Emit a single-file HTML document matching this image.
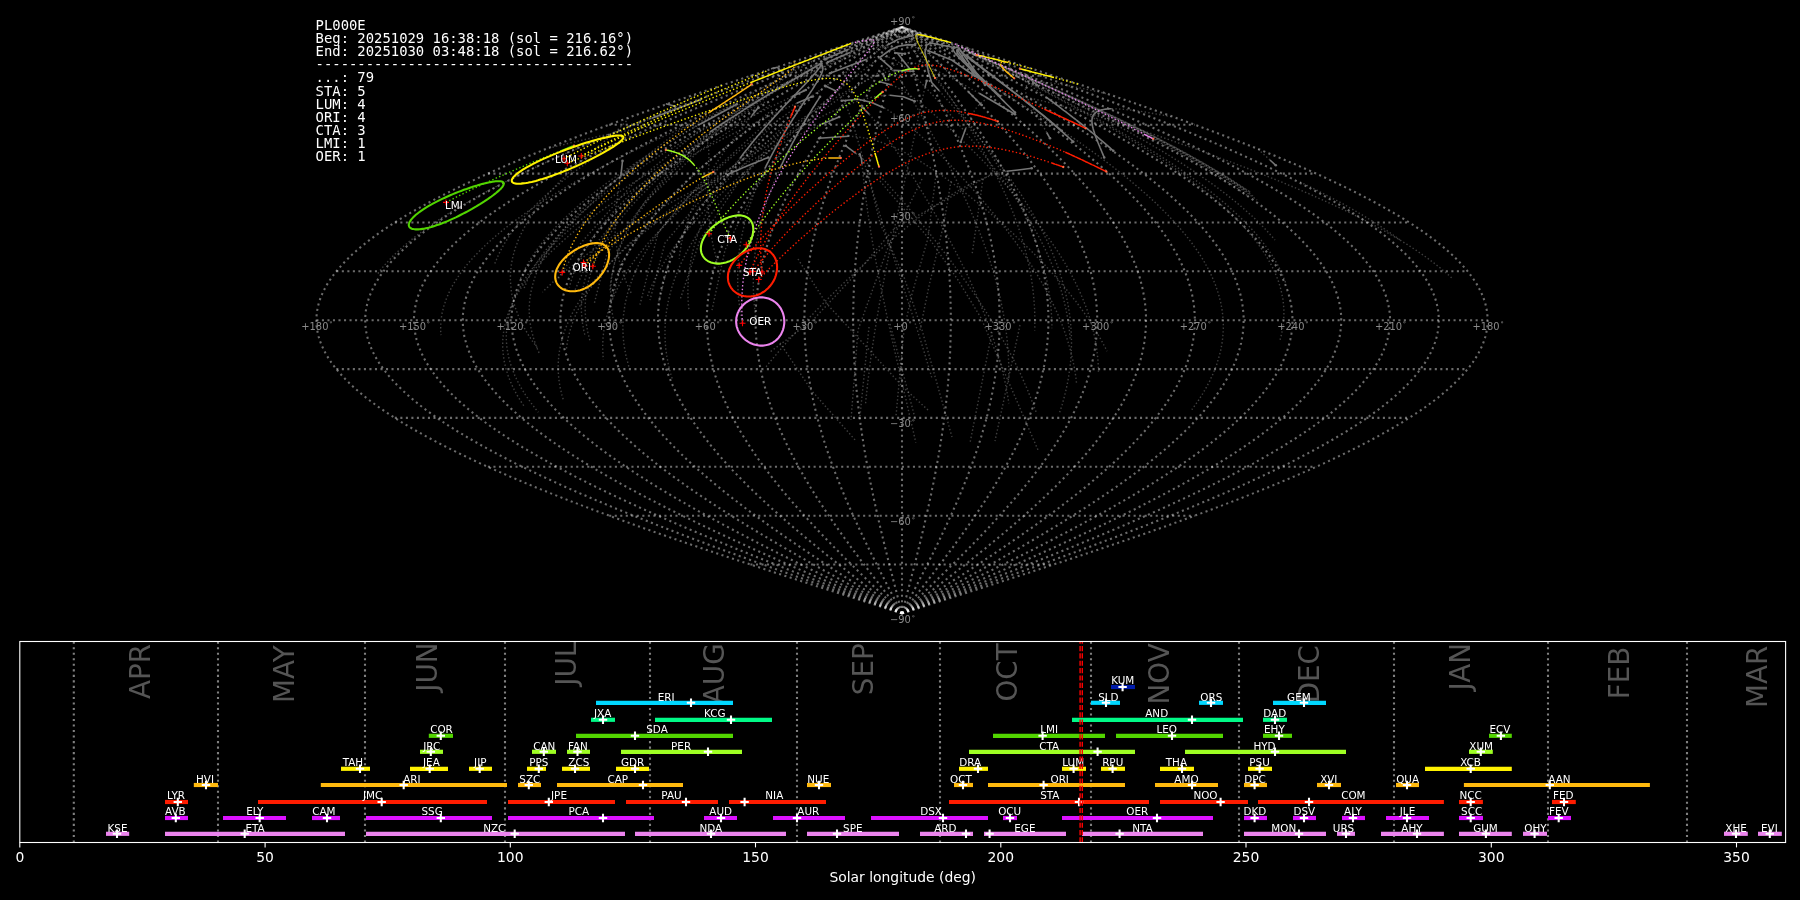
<!DOCTYPE html>
<html><head><meta charset="utf-8"><title>PL000E radiants</title>
<style>html,body{margin:0;padding:0;background:#000;width:1800px;height:900px;overflow:hidden}svg{position:absolute;left:0;top:0;display:block;will-change:transform}text{font-family:"DejaVu Sans","Liberation Sans",sans-serif}.mono{font-family:"DejaVu Sans Mono","Liberation Mono",monospace;font-size:13.89px;fill:#fff;white-space:pre}.g{fill:none;stroke:#fff;stroke-opacity:0.42;stroke-width:2.08;stroke-dasharray:2.08 3.44}.gl{font-size:9.9px;fill:#8a8a8a;text-anchor:middle}.sl{font-size:10.4px;fill:#fff;text-anchor:middle}.bl{font-size:10.4px;fill:#fff;text-anchor:middle}.mo{font-size:27.78px;fill:#555;text-anchor:end}.tk{font-size:13.89px;fill:#fff;text-anchor:middle}</style></head><body>
<svg width="1800" height="900" viewBox="0 0 1800 900">
<rect width="1800" height="900" fill="#000"/>
<g class="g">
<path d="M902 613.4 L912.2 610.2 L922.4 606.9 L932.6 603.6 L942.9 600.4 L953 597.1 L963.2 593.9 L973.4 590.6 L983.5 587.4 L993.6 584.1 L1003.7 580.8 L1013.7 577.6 L1023.8 574.3 L1033.7 571.1 L1043.7 567.8 L1053.6 564.5 L1063.4 561.3 L1073.2 558 L1083 554.8 L1092.7 551.5 L1102.3 548.3 L1111.9 545 L1121.4 541.7 L1130.8 538.5 L1140.2 535.2 L1149.5 532 L1158.7 528.7 L1167.9 525.5 L1176.9 522.2 L1185.9 518.9 L1194.8 515.7 L1203.6 512.4 L1212.3 509.2 L1221 505.9 L1229.5 502.6 L1237.9 499.4 L1246.2 496.1 L1254.4 492.9 L1262.5 489.6 L1270.5 486.4 L1278.4 483.1 L1286.2 479.8 L1293.9 476.6 L1301.4 473.3 L1308.8 470.1 L1316.1 466.8 L1323.3 463.6 L1330.3 460.3 L1337.2 457 L1344 453.8 L1350.6 450.5 L1357.1 447.3 L1363.5 444 L1369.7 440.7 L1375.8 437.5 L1381.7 434.2 L1387.5 431 L1393.2 427.7 L1398.6 424.5 L1404 421.2 L1409.2 417.9 L1414.2 414.7 L1419.1 411.4 L1423.8 408.2 L1428.4 404.9 L1432.8 401.6 L1437 398.4 L1441.1 395.1 L1445 391.9 L1448.7 388.6 L1452.3 385.4 L1455.7 382.1 L1459 378.8 L1462 375.6 L1464.9 372.3 L1467.7 369.1 L1470.2 365.8 L1472.6 362.6 L1474.8 359.3 L1476.9 356 L1478.7 352.8 L1480.4 349.5 L1481.9 346.3 L1483.3 343 L1484.4 339.7 L1485.4 336.5 L1486.2 333.2 L1486.8 330 L1487.3 326.7 L1487.5 323.5 L1487.6 320.2 L1487.5 316.9 L1487.3 313.7 L1486.8 310.4 L1486.2 307.2 L1485.4 303.9 L1484.4 300.7 L1483.3 297.4 L1481.9 294.1 L1480.4 290.9 L1478.7 287.6 L1476.9 284.4 L1474.8 281.1 L1472.6 277.8 L1470.2 274.6 L1467.7 271.3 L1464.9 268.1 L1462 264.8 L1459 261.6 L1455.7 258.3 L1452.3 255 L1448.7 251.8 L1445 248.5 L1441.1 245.3 L1437 242 L1432.8 238.8 L1428.4 235.5 L1423.8 232.2 L1419.1 229 L1414.2 225.7 L1409.2 222.5 L1404 219.2 L1398.6 215.9 L1393.2 212.7 L1387.5 209.4 L1381.7 206.2 L1375.8 202.9 L1369.7 199.7 L1363.5 196.4 L1357.1 193.1 L1350.6 189.9 L1344 186.6 L1337.2 183.4 L1330.3 180.1 L1323.3 176.8 L1316.1 173.6 L1308.8 170.3 L1301.4 167.1 L1293.9 163.8 L1286.2 160.6 L1278.4 157.3 L1270.5 154 L1262.5 150.8 L1254.4 147.5 L1246.2 144.3 L1237.9 141 L1229.5 137.8 L1221 134.5 L1212.3 131.2 L1203.6 128 L1194.8 124.7 L1185.9 121.5 L1176.9 118.2 L1167.9 114.9 L1158.7 111.7 L1149.5 108.4 L1140.2 105.2 L1130.8 101.9 L1121.4 98.7 L1111.9 95.4 L1102.3 92.1 L1092.7 88.9 L1083 85.6 L1073.2 82.4 L1063.4 79.1 L1053.6 75.8 L1043.7 72.6 L1033.7 69.3 L1023.8 66.1 L1013.7 62.8 L1003.7 59.6 L993.6 56.3 L983.5 53 L973.4 49.8 L963.2 46.5 L953 43.3 L942.9 40 L932.6 36.8 L922.4 33.5 L912.2 30.2 L902 27"/>
<path d="M902 613.4 L911.4 610.2 L920.7 606.9 L930.1 603.6 L939.4 600.4 L948.8 597.1 L958.1 593.9 L967.4 590.6 L976.7 587.4 L986 584.1 L995.2 580.8 L1004.4 577.6 L1013.6 574.3 L1022.8 571.1 L1031.9 567.8 L1040.9 564.5 L1050 561.3 L1059 558 L1067.9 554.8 L1076.8 551.5 L1085.6 548.3 L1094.4 545 L1103.1 541.7 L1111.8 538.5 L1120.3 535.2 L1128.9 532 L1137.3 528.7 L1145.7 525.5 L1154 522.2 L1162.3 518.9 L1170.4 515.7 L1178.5 512.4 L1186.5 509.2 L1194.4 505.9 L1202.2 502.6 L1209.9 499.4 L1217.5 496.1 L1225.1 492.9 L1232.5 489.6 L1239.8 486.4 L1247.1 483.1 L1254.2 479.8 L1261.2 476.6 L1268.1 473.3 L1274.9 470.1 L1281.6 466.8 L1288.2 463.6 L1294.6 460.3 L1300.9 457 L1307.1 453.8 L1313.2 450.5 L1319.2 447.3 L1325 444 L1330.7 440.7 L1336.3 437.5 L1341.7 434.2 L1347.1 431 L1352.2 427.7 L1357.3 424.5 L1362.2 421.2 L1366.9 417.9 L1371.5 414.7 L1376 411.4 L1380.3 408.2 L1384.5 404.9 L1388.5 401.6 L1392.4 398.4 L1396.2 395.1 L1399.7 391.9 L1403.2 388.6 L1406.5 385.4 L1409.6 382.1 L1412.6 378.8 L1415.4 375.6 L1418 372.3 L1420.5 369.1 L1422.9 365.8 L1425.1 362.6 L1427.1 359.3 L1429 356 L1430.7 352.8 L1432.2 349.5 L1433.6 346.3 L1434.8 343 L1435.9 339.7 L1436.8 336.5 L1437.5 333.2 L1438.1 330 L1438.5 326.7 L1438.7 323.5 L1438.8 320.2 L1438.7 316.9 L1438.5 313.7 L1438.1 310.4 L1437.5 307.2 L1436.8 303.9 L1435.9 300.7 L1434.8 297.4 L1433.6 294.1 L1432.2 290.9 L1430.7 287.6 L1429 284.4 L1427.1 281.1 L1425.1 277.8 L1422.9 274.6 L1420.5 271.3 L1418 268.1 L1415.4 264.8 L1412.6 261.6 L1409.6 258.3 L1406.5 255 L1403.2 251.8 L1399.7 248.5 L1396.2 245.3 L1392.4 242 L1388.5 238.8 L1384.5 235.5 L1380.3 232.2 L1376 229 L1371.5 225.7 L1366.9 222.5 L1362.2 219.2 L1357.3 215.9 L1352.2 212.7 L1347.1 209.4 L1341.7 206.2 L1336.3 202.9 L1330.7 199.7 L1325 196.4 L1319.2 193.1 L1313.2 189.9 L1307.1 186.6 L1300.9 183.4 L1294.6 180.1 L1288.2 176.8 L1281.6 173.6 L1274.9 170.3 L1268.1 167.1 L1261.2 163.8 L1254.2 160.6 L1247.1 157.3 L1239.8 154 L1232.5 150.8 L1225.1 147.5 L1217.5 144.3 L1209.9 141 L1202.2 137.8 L1194.4 134.5 L1186.5 131.2 L1178.5 128 L1170.4 124.7 L1162.3 121.5 L1154 118.2 L1145.7 114.9 L1137.3 111.7 L1128.9 108.4 L1120.3 105.2 L1111.8 101.9 L1103.1 98.7 L1094.4 95.4 L1085.6 92.1 L1076.8 88.9 L1067.9 85.6 L1059 82.4 L1050 79.1 L1040.9 75.8 L1031.9 72.6 L1022.8 69.3 L1013.6 66.1 L1004.4 62.8 L995.2 59.6 L986 56.3 L976.7 53 L967.4 49.8 L958.1 46.5 L948.8 43.3 L939.4 40 L930.1 36.8 L920.7 33.5 L911.4 30.2 L902 27"/>
<path d="M902 613.4 L910.5 610.2 L919 606.9 L927.5 603.6 L936 600.4 L944.5 597.1 L953 593.9 L961.5 590.6 L969.9 587.4 L978.3 584.1 L986.7 580.8 L995.1 577.6 L1003.5 574.3 L1011.8 571.1 L1020.1 567.8 L1028.3 564.5 L1036.5 561.3 L1044.7 558 L1052.8 554.8 L1060.9 551.5 L1068.9 548.3 L1076.9 545 L1084.8 541.7 L1092.7 538.5 L1100.5 535.2 L1108.2 532 L1115.9 528.7 L1123.6 525.5 L1131.1 522.2 L1138.6 518.9 L1146 515.7 L1153.4 512.4 L1160.6 509.2 L1167.8 505.9 L1174.9 502.6 L1181.9 499.4 L1188.9 496.1 L1195.7 492.9 L1202.5 489.6 L1209.1 486.4 L1215.7 483.1 L1222.2 479.8 L1228.6 476.6 L1234.8 473.3 L1241 470.1 L1247.1 466.8 L1253.1 463.6 L1258.9 460.3 L1264.7 457 L1270.3 453.8 L1275.8 450.5 L1281.3 447.3 L1286.6 444 L1291.8 440.7 L1296.8 437.5 L1301.8 434.2 L1306.6 431 L1311.3 427.7 L1315.9 424.5 L1320.3 421.2 L1324.6 417.9 L1328.8 414.7 L1332.9 411.4 L1336.8 408.2 L1340.6 404.9 L1344.3 401.6 L1347.8 398.4 L1351.2 395.1 L1354.5 391.9 L1357.6 388.6 L1360.6 385.4 L1363.4 382.1 L1366.1 378.8 L1368.7 375.6 L1371.1 372.3 L1373.4 369.1 L1375.5 365.8 L1377.5 362.6 L1379.4 359.3 L1381.1 356 L1382.6 352.8 L1384 349.5 L1385.3 346.3 L1386.4 343 L1387.4 339.7 L1388.2 336.5 L1388.8 333.2 L1389.4 330 L1389.7 326.7 L1390 323.5 L1390 320.2 L1390 316.9 L1389.7 313.7 L1389.4 310.4 L1388.8 307.2 L1388.2 303.9 L1387.4 300.7 L1386.4 297.4 L1385.3 294.1 L1384 290.9 L1382.6 287.6 L1381.1 284.4 L1379.4 281.1 L1377.5 277.8 L1375.5 274.6 L1373.4 271.3 L1371.1 268.1 L1368.7 264.8 L1366.1 261.6 L1363.4 258.3 L1360.6 255 L1357.6 251.8 L1354.5 248.5 L1351.2 245.3 L1347.8 242 L1344.3 238.8 L1340.6 235.5 L1336.8 232.2 L1332.9 229 L1328.8 225.7 L1324.6 222.5 L1320.3 219.2 L1315.9 215.9 L1311.3 212.7 L1306.6 209.4 L1301.8 206.2 L1296.8 202.9 L1291.8 199.7 L1286.6 196.4 L1281.3 193.1 L1275.8 189.9 L1270.3 186.6 L1264.7 183.4 L1258.9 180.1 L1253.1 176.8 L1247.1 173.6 L1241 170.3 L1234.8 167.1 L1228.6 163.8 L1222.2 160.6 L1215.7 157.3 L1209.1 154 L1202.5 150.8 L1195.7 147.5 L1188.9 144.3 L1181.9 141 L1174.9 137.8 L1167.8 134.5 L1160.6 131.2 L1153.4 128 L1146 124.7 L1138.6 121.5 L1131.1 118.2 L1123.6 114.9 L1115.9 111.7 L1108.2 108.4 L1100.5 105.2 L1092.7 101.9 L1084.8 98.7 L1076.9 95.4 L1068.9 92.1 L1060.9 88.9 L1052.8 85.6 L1044.7 82.4 L1036.5 79.1 L1028.3 75.8 L1020.1 72.6 L1011.8 69.3 L1003.5 66.1 L995.1 62.8 L986.7 59.6 L978.3 56.3 L969.9 53 L961.5 49.8 L953 46.5 L944.5 43.3 L936 40 L927.5 36.8 L919 33.5 L910.5 30.2 L902 27"/>
<path d="M902 613.4 L909.7 610.2 L917.3 606.9 L925 603.6 L932.6 600.4 L940.3 597.1 L947.9 593.9 L955.5 590.6 L963.1 587.4 L970.7 584.1 L978.3 580.8 L985.8 577.6 L993.3 574.3 L1000.8 571.1 L1008.3 567.8 L1015.7 564.5 L1023.1 561.3 L1030.4 558 L1037.7 554.8 L1045 551.5 L1052.2 548.3 L1059.4 545 L1066.5 541.7 L1073.6 538.5 L1080.6 535.2 L1087.6 532 L1094.5 528.7 L1101.4 525.5 L1108.2 522.2 L1114.9 518.9 L1121.6 515.7 L1128.2 512.4 L1134.8 509.2 L1141.2 505.9 L1147.6 502.6 L1153.9 499.4 L1160.2 496.1 L1166.3 492.9 L1172.4 489.6 L1178.4 486.4 L1184.3 483.1 L1190.2 479.8 L1195.9 476.6 L1201.5 473.3 L1207.1 470.1 L1212.6 466.8 L1218 463.6 L1223.2 460.3 L1228.4 457 L1233.5 453.8 L1238.5 450.5 L1243.3 447.3 L1248.1 444 L1252.8 440.7 L1257.3 437.5 L1261.8 434.2 L1266.1 431 L1270.4 427.7 L1274.5 424.5 L1278.5 421.2 L1282.4 417.9 L1286.2 414.7 L1289.8 411.4 L1293.4 408.2 L1296.8 404.9 L1300.1 401.6 L1303.2 398.4 L1306.3 395.1 L1309.2 391.9 L1312 388.6 L1314.7 385.4 L1317.3 382.1 L1319.7 378.8 L1322 375.6 L1324.2 372.3 L1326.3 369.1 L1328.2 365.8 L1330 362.6 L1331.6 359.3 L1333.2 356 L1334.5 352.8 L1335.8 349.5 L1336.9 346.3 L1337.9 343 L1338.8 339.7 L1339.6 336.5 L1340.2 333.2 L1340.6 330 L1341 326.7 L1341.2 323.5 L1341.2 320.2 L1341.2 316.9 L1341 313.7 L1340.6 310.4 L1340.2 307.2 L1339.6 303.9 L1338.8 300.7 L1337.9 297.4 L1336.9 294.1 L1335.8 290.9 L1334.5 287.6 L1333.2 284.4 L1331.6 281.1 L1330 277.8 L1328.2 274.6 L1326.3 271.3 L1324.2 268.1 L1322 264.8 L1319.7 261.6 L1317.3 258.3 L1314.7 255 L1312 251.8 L1309.2 248.5 L1306.3 245.3 L1303.2 242 L1300.1 238.8 L1296.8 235.5 L1293.4 232.2 L1289.8 229 L1286.2 225.7 L1282.4 222.5 L1278.5 219.2 L1274.5 215.9 L1270.4 212.7 L1266.1 209.4 L1261.8 206.2 L1257.3 202.9 L1252.8 199.7 L1248.1 196.4 L1243.3 193.1 L1238.5 189.9 L1233.5 186.6 L1228.4 183.4 L1223.2 180.1 L1218 176.8 L1212.6 173.6 L1207.1 170.3 L1201.5 167.1 L1195.9 163.8 L1190.2 160.6 L1184.3 157.3 L1178.4 154 L1172.4 150.8 L1166.3 147.5 L1160.2 144.3 L1153.9 141 L1147.6 137.8 L1141.2 134.5 L1134.8 131.2 L1128.2 128 L1121.6 124.7 L1114.9 121.5 L1108.2 118.2 L1101.4 114.9 L1094.5 111.7 L1087.6 108.4 L1080.6 105.2 L1073.6 101.9 L1066.5 98.7 L1059.4 95.4 L1052.2 92.1 L1045 88.9 L1037.7 85.6 L1030.4 82.4 L1023.1 79.1 L1015.7 75.8 L1008.3 72.6 L1000.8 69.3 L993.3 66.1 L985.8 62.8 L978.3 59.6 L970.7 56.3 L963.1 53 L955.5 49.8 L947.9 46.5 L940.3 43.3 L932.6 40 L925 36.8 L917.3 33.5 L909.7 30.2 L902 27"/>
<path d="M902 613.4 L908.8 610.2 L915.6 606.9 L922.4 603.6 L929.2 600.4 L936 597.1 L942.8 593.9 L949.6 590.6 L956.3 587.4 L963.1 584.1 L969.8 580.8 L976.5 577.6 L983.2 574.3 L989.8 571.1 L996.5 567.8 L1003 564.5 L1009.6 561.3 L1016.1 558 L1022.6 554.8 L1029.1 551.5 L1035.5 548.3 L1041.9 545 L1048.3 541.7 L1054.5 538.5 L1060.8 535.2 L1067 532 L1073.1 528.7 L1079.2 525.5 L1085.3 522.2 L1091.3 518.9 L1097.2 515.7 L1103.1 512.4 L1108.9 509.2 L1114.6 505.9 L1120.3 502.6 L1125.9 499.4 L1131.5 496.1 L1137 492.9 L1142.4 489.6 L1147.7 486.4 L1153 483.1 L1158.1 479.8 L1163.2 476.6 L1168.3 473.3 L1173.2 470.1 L1178.1 466.8 L1182.8 463.6 L1187.5 460.3 L1192.1 457 L1196.7 453.8 L1201.1 450.5 L1205.4 447.3 L1209.7 444 L1213.8 440.7 L1217.9 437.5 L1221.8 434.2 L1225.7 431 L1229.4 427.7 L1233.1 424.5 L1236.7 421.2 L1240.1 417.9 L1243.5 414.7 L1246.7 411.4 L1249.9 408.2 L1252.9 404.9 L1255.8 401.6 L1258.7 398.4 L1261.4 395.1 L1264 391.9 L1266.5 388.6 L1268.9 385.4 L1271.1 382.1 L1273.3 378.8 L1275.4 375.6 L1277.3 372.3 L1279.1 369.1 L1280.8 365.8 L1282.4 362.6 L1283.9 359.3 L1285.2 356 L1286.5 352.8 L1287.6 349.5 L1288.6 346.3 L1289.5 343 L1290.3 339.7 L1290.9 336.5 L1291.5 333.2 L1291.9 330 L1292.2 326.7 L1292.4 323.5 L1292.4 320.2 L1292.4 316.9 L1292.2 313.7 L1291.9 310.4 L1291.5 307.2 L1290.9 303.9 L1290.3 300.7 L1289.5 297.4 L1288.6 294.1 L1287.6 290.9 L1286.5 287.6 L1285.2 284.4 L1283.9 281.1 L1282.4 277.8 L1280.8 274.6 L1279.1 271.3 L1277.3 268.1 L1275.4 264.8 L1273.3 261.6 L1271.1 258.3 L1268.9 255 L1266.5 251.8 L1264 248.5 L1261.4 245.3 L1258.7 242 L1255.8 238.8 L1252.9 235.5 L1249.9 232.2 L1246.7 229 L1243.5 225.7 L1240.1 222.5 L1236.7 219.2 L1233.1 215.9 L1229.4 212.7 L1225.7 209.4 L1221.8 206.2 L1217.9 202.9 L1213.8 199.7 L1209.7 196.4 L1205.4 193.1 L1201.1 189.9 L1196.7 186.6 L1192.1 183.4 L1187.5 180.1 L1182.8 176.8 L1178.1 173.6 L1173.2 170.3 L1168.3 167.1 L1163.2 163.8 L1158.1 160.6 L1153 157.3 L1147.7 154 L1142.4 150.8 L1137 147.5 L1131.5 144.3 L1125.9 141 L1120.3 137.8 L1114.6 134.5 L1108.9 131.2 L1103.1 128 L1097.2 124.7 L1091.3 121.5 L1085.3 118.2 L1079.2 114.9 L1073.1 111.7 L1067 108.4 L1060.8 105.2 L1054.5 101.9 L1048.3 98.7 L1041.9 95.4 L1035.5 92.1 L1029.1 88.9 L1022.6 85.6 L1016.1 82.4 L1009.6 79.1 L1003 75.8 L996.5 72.6 L989.8 69.3 L983.2 66.1 L976.5 62.8 L969.8 59.6 L963.1 56.3 L956.3 53 L949.6 49.8 L942.8 46.5 L936 43.3 L929.2 40 L922.4 36.8 L915.6 33.5 L908.8 30.2 L902 27"/>
<path d="M902 613.4 L908 610.2 L913.9 606.9 L919.9 603.6 L925.8 600.4 L931.8 597.1 L937.7 593.9 L943.6 590.6 L949.5 587.4 L955.4 584.1 L961.3 580.8 L967.2 577.6 L973 574.3 L978.8 571.1 L984.6 567.8 L990.4 564.5 L996.2 561.3 L1001.9 558 L1007.6 554.8 L1013.2 551.5 L1018.8 548.3 L1024.4 545 L1030 541.7 L1035.5 538.5 L1040.9 535.2 L1046.4 532 L1051.8 528.7 L1057.1 525.5 L1062.4 522.2 L1067.6 518.9 L1072.8 515.7 L1077.9 512.4 L1083 509.2 L1088.1 505.9 L1093 502.6 L1097.9 499.4 L1102.8 496.1 L1107.6 492.9 L1112.3 489.6 L1117 486.4 L1121.6 483.1 L1126.1 479.8 L1130.6 476.6 L1135 473.3 L1139.3 470.1 L1143.6 466.8 L1147.7 463.6 L1151.8 460.3 L1155.9 457 L1159.8 453.8 L1163.7 450.5 L1167.5 447.3 L1171.2 444 L1174.8 440.7 L1178.4 437.5 L1181.8 434.2 L1185.2 431 L1188.5 427.7 L1191.7 424.5 L1194.8 421.2 L1197.8 417.9 L1200.8 414.7 L1203.6 411.4 L1206.4 408.2 L1209 404.9 L1211.6 401.6 L1214.1 398.4 L1216.5 395.1 L1218.7 391.9 L1220.9 388.6 L1223 385.4 L1225 382.1 L1226.9 378.8 L1228.7 375.6 L1230.4 372.3 L1232 369.1 L1233.5 365.8 L1234.9 362.6 L1236.2 359.3 L1237.3 356 L1238.4 352.8 L1239.4 349.5 L1240.3 346.3 L1241.1 343 L1241.7 339.7 L1242.3 336.5 L1242.8 333.2 L1243.1 330 L1243.4 326.7 L1243.6 323.5 L1243.6 320.2 L1243.6 316.9 L1243.4 313.7 L1243.1 310.4 L1242.8 307.2 L1242.3 303.9 L1241.7 300.7 L1241.1 297.4 L1240.3 294.1 L1239.4 290.9 L1238.4 287.6 L1237.3 284.4 L1236.2 281.1 L1234.9 277.8 L1233.5 274.6 L1232 271.3 L1230.4 268.1 L1228.7 264.8 L1226.9 261.6 L1225 258.3 L1223 255 L1220.9 251.8 L1218.7 248.5 L1216.5 245.3 L1214.1 242 L1211.6 238.8 L1209 235.5 L1206.4 232.2 L1203.6 229 L1200.8 225.7 L1197.8 222.5 L1194.8 219.2 L1191.7 215.9 L1188.5 212.7 L1185.2 209.4 L1181.8 206.2 L1178.4 202.9 L1174.8 199.7 L1171.2 196.4 L1167.5 193.1 L1163.7 189.9 L1159.8 186.6 L1155.9 183.4 L1151.8 180.1 L1147.7 176.8 L1143.6 173.6 L1139.3 170.3 L1135 167.1 L1130.6 163.8 L1126.1 160.6 L1121.6 157.3 L1117 154 L1112.3 150.8 L1107.6 147.5 L1102.8 144.3 L1097.9 141 L1093 137.8 L1088.1 134.5 L1083 131.2 L1077.9 128 L1072.8 124.7 L1067.6 121.5 L1062.4 118.2 L1057.1 114.9 L1051.8 111.7 L1046.4 108.4 L1040.9 105.2 L1035.5 101.9 L1030 98.7 L1024.4 95.4 L1018.8 92.1 L1013.2 88.9 L1007.6 85.6 L1001.9 82.4 L996.2 79.1 L990.4 75.8 L984.6 72.6 L978.8 69.3 L973 66.1 L967.2 62.8 L961.3 59.6 L955.4 56.3 L949.5 53 L943.6 49.8 L937.7 46.5 L931.8 43.3 L925.8 40 L919.9 36.8 L913.9 33.5 L908 30.2 L902 27"/>
<path d="M902 613.4 L907.1 610.2 L912.2 606.9 L917.3 603.6 L922.4 600.4 L927.5 597.1 L932.6 593.9 L937.7 590.6 L942.8 587.4 L947.8 584.1 L952.8 580.8 L957.9 577.6 L962.9 574.3 L967.9 571.1 L972.8 567.8 L977.8 564.5 L982.7 561.3 L987.6 558 L992.5 554.8 L997.3 551.5 L1002.1 548.3 L1006.9 545 L1011.7 541.7 L1016.4 538.5 L1021.1 535.2 L1025.7 532 L1030.4 528.7 L1034.9 525.5 L1039.5 522.2 L1044 518.9 L1048.4 515.7 L1052.8 512.4 L1057.2 509.2 L1061.5 505.9 L1065.7 502.6 L1070 499.4 L1074.1 496.1 L1078.2 492.9 L1082.3 489.6 L1086.3 486.4 L1090.2 483.1 L1094.1 479.8 L1097.9 476.6 L1101.7 473.3 L1105.4 470.1 L1109.1 466.8 L1112.6 463.6 L1116.2 460.3 L1119.6 457 L1123 453.8 L1126.3 450.5 L1129.6 447.3 L1132.7 444 L1135.9 440.7 L1138.9 437.5 L1141.9 434.2 L1144.8 431 L1147.6 427.7 L1150.3 424.5 L1153 421.2 L1155.6 417.9 L1158.1 414.7 L1160.5 411.4 L1162.9 408.2 L1165.2 404.9 L1167.4 401.6 L1169.5 398.4 L1171.5 395.1 L1173.5 391.9 L1175.4 388.6 L1177.2 385.4 L1178.9 382.1 L1180.5 378.8 L1182 375.6 L1183.5 372.3 L1184.8 369.1 L1186.1 365.8 L1187.3 362.6 L1188.4 359.3 L1189.4 356 L1190.4 352.8 L1191.2 349.5 L1192 346.3 L1192.6 343 L1193.2 339.7 L1193.7 336.5 L1194.1 333.2 L1194.4 330 L1194.6 326.7 L1194.8 323.5 L1194.8 320.2 L1194.8 316.9 L1194.6 313.7 L1194.4 310.4 L1194.1 307.2 L1193.7 303.9 L1193.2 300.7 L1192.6 297.4 L1192 294.1 L1191.2 290.9 L1190.4 287.6 L1189.4 284.4 L1188.4 281.1 L1187.3 277.8 L1186.1 274.6 L1184.8 271.3 L1183.5 268.1 L1182 264.8 L1180.5 261.6 L1178.9 258.3 L1177.2 255 L1175.4 251.8 L1173.5 248.5 L1171.5 245.3 L1169.5 242 L1167.4 238.8 L1165.2 235.5 L1162.9 232.2 L1160.5 229 L1158.1 225.7 L1155.6 222.5 L1153 219.2 L1150.3 215.9 L1147.6 212.7 L1144.8 209.4 L1141.9 206.2 L1138.9 202.9 L1135.9 199.7 L1132.7 196.4 L1129.6 193.1 L1126.3 189.9 L1123 186.6 L1119.6 183.4 L1116.2 180.1 L1112.6 176.8 L1109.1 173.6 L1105.4 170.3 L1101.7 167.1 L1097.9 163.8 L1094.1 160.6 L1090.2 157.3 L1086.3 154 L1082.3 150.8 L1078.2 147.5 L1074.1 144.3 L1070 141 L1065.7 137.8 L1061.5 134.5 L1057.2 131.2 L1052.8 128 L1048.4 124.7 L1044 121.5 L1039.5 118.2 L1034.9 114.9 L1030.4 111.7 L1025.7 108.4 L1021.1 105.2 L1016.4 101.9 L1011.7 98.7 L1006.9 95.4 L1002.1 92.1 L997.3 88.9 L992.5 85.6 L987.6 82.4 L982.7 79.1 L977.8 75.8 L972.8 72.6 L967.9 69.3 L962.9 66.1 L957.9 62.8 L952.8 59.6 L947.8 56.3 L942.8 53 L937.7 49.8 L932.6 46.5 L927.5 43.3 L922.4 40 L917.3 36.8 L912.2 33.5 L907.1 30.2 L902 27"/>
<path d="M902 613.4 L906.3 610.2 L910.5 606.9 L914.8 603.6 L919 600.4 L923.3 597.1 L927.5 593.9 L931.7 590.6 L936 587.4 L940.2 584.1 L944.4 580.8 L948.6 577.6 L952.7 574.3 L956.9 571.1 L961 567.8 L965.2 564.5 L969.3 561.3 L973.3 558 L977.4 554.8 L981.4 551.5 L985.5 548.3 L989.4 545 L993.4 541.7 L997.3 538.5 L1001.2 535.2 L1005.1 532 L1009 528.7 L1012.8 525.5 L1016.6 522.2 L1020.3 518.9 L1024 515.7 L1027.7 512.4 L1031.3 509.2 L1034.9 505.9 L1038.5 502.6 L1042 499.4 L1045.4 496.1 L1048.9 492.9 L1052.2 489.6 L1055.6 486.4 L1058.8 483.1 L1062.1 479.8 L1065.3 476.6 L1068.4 473.3 L1071.5 470.1 L1074.5 466.8 L1077.5 463.6 L1080.5 460.3 L1083.3 457 L1086.2 453.8 L1088.9 450.5 L1091.6 447.3 L1094.3 444 L1096.9 440.7 L1099.4 437.5 L1101.9 434.2 L1104.3 431 L1106.6 427.7 L1108.9 424.5 L1111.2 421.2 L1113.3 417.9 L1115.4 414.7 L1117.5 411.4 L1119.4 408.2 L1121.3 404.9 L1123.2 401.6 L1124.9 398.4 L1126.6 395.1 L1128.2 391.9 L1129.8 388.6 L1131.3 385.4 L1132.7 382.1 L1134.1 378.8 L1135.4 375.6 L1136.6 372.3 L1137.7 369.1 L1138.8 365.8 L1139.8 362.6 L1140.7 359.3 L1141.5 356 L1142.3 352.8 L1143 349.5 L1143.6 346.3 L1144.2 343 L1144.7 339.7 L1145.1 336.5 L1145.4 333.2 L1145.7 330 L1145.9 326.7 L1146 323.5 L1146 320.2 L1146 316.9 L1145.9 313.7 L1145.7 310.4 L1145.4 307.2 L1145.1 303.9 L1144.7 300.7 L1144.2 297.4 L1143.6 294.1 L1143 290.9 L1142.3 287.6 L1141.5 284.4 L1140.7 281.1 L1139.8 277.8 L1138.8 274.6 L1137.7 271.3 L1136.6 268.1 L1135.4 264.8 L1134.1 261.6 L1132.7 258.3 L1131.3 255 L1129.8 251.8 L1128.2 248.5 L1126.6 245.3 L1124.9 242 L1123.2 238.8 L1121.3 235.5 L1119.4 232.2 L1117.5 229 L1115.4 225.7 L1113.3 222.5 L1111.2 219.2 L1108.9 215.9 L1106.6 212.7 L1104.3 209.4 L1101.9 206.2 L1099.4 202.9 L1096.9 199.7 L1094.3 196.4 L1091.6 193.1 L1088.9 189.9 L1086.2 186.6 L1083.3 183.4 L1080.5 180.1 L1077.5 176.8 L1074.5 173.6 L1071.5 170.3 L1068.4 167.1 L1065.3 163.8 L1062.1 160.6 L1058.8 157.3 L1055.6 154 L1052.2 150.8 L1048.9 147.5 L1045.4 144.3 L1042 141 L1038.5 137.8 L1034.9 134.5 L1031.3 131.2 L1027.7 128 L1024 124.7 L1020.3 121.5 L1016.6 118.2 L1012.8 114.9 L1009 111.7 L1005.1 108.4 L1001.2 105.2 L997.3 101.9 L993.4 98.7 L989.4 95.4 L985.5 92.1 L981.4 88.9 L977.4 85.6 L973.3 82.4 L969.3 79.1 L965.2 75.8 L961 72.6 L956.9 69.3 L952.7 66.1 L948.6 62.8 L944.4 59.6 L940.2 56.3 L936 53 L931.7 49.8 L927.5 46.5 L923.3 43.3 L919 40 L914.8 36.8 L910.5 33.5 L906.3 30.2 L902 27"/>
<path d="M902 613.4 L905.4 610.2 L908.8 606.9 L912.2 603.6 L915.6 600.4 L919 597.1 L922.4 593.9 L925.8 590.6 L929.2 587.4 L932.5 584.1 L935.9 580.8 L939.2 577.6 L942.6 574.3 L945.9 571.1 L949.2 567.8 L952.5 564.5 L955.8 561.3 L959.1 558 L962.3 554.8 L965.6 551.5 L968.8 548.3 L972 545 L975.1 541.7 L978.3 538.5 L981.4 535.2 L984.5 532 L987.6 528.7 L990.6 525.5 L993.6 522.2 L996.6 518.9 L999.6 515.7 L1002.5 512.4 L1005.4 509.2 L1008.3 505.9 L1011.2 502.6 L1014 499.4 L1016.7 496.1 L1019.5 492.9 L1022.2 489.6 L1024.8 486.4 L1027.5 483.1 L1030.1 479.8 L1032.6 476.6 L1035.1 473.3 L1037.6 470.1 L1040 466.8 L1042.4 463.6 L1044.8 460.3 L1047.1 457 L1049.3 453.8 L1051.5 450.5 L1053.7 447.3 L1055.8 444 L1057.9 440.7 L1059.9 437.5 L1061.9 434.2 L1063.8 431 L1065.7 427.7 L1067.5 424.5 L1069.3 421.2 L1071.1 417.9 L1072.7 414.7 L1074.4 411.4 L1075.9 408.2 L1077.5 404.9 L1078.9 401.6 L1080.3 398.4 L1081.7 395.1 L1083 391.9 L1084.2 388.6 L1085.4 385.4 L1086.6 382.1 L1087.7 378.8 L1088.7 375.6 L1089.6 372.3 L1090.6 369.1 L1091.4 365.8 L1092.2 362.6 L1092.9 359.3 L1093.6 356 L1094.2 352.8 L1094.8 349.5 L1095.3 346.3 L1095.8 343 L1096.1 339.7 L1096.5 336.5 L1096.7 333.2 L1096.9 330 L1097.1 326.7 L1097.2 323.5 L1097.2 320.2 L1097.2 316.9 L1097.1 313.7 L1096.9 310.4 L1096.7 307.2 L1096.5 303.9 L1096.1 300.7 L1095.8 297.4 L1095.3 294.1 L1094.8 290.9 L1094.2 287.6 L1093.6 284.4 L1092.9 281.1 L1092.2 277.8 L1091.4 274.6 L1090.6 271.3 L1089.6 268.1 L1088.7 264.8 L1087.7 261.6 L1086.6 258.3 L1085.4 255 L1084.2 251.8 L1083 248.5 L1081.7 245.3 L1080.3 242 L1078.9 238.8 L1077.5 235.5 L1075.9 232.2 L1074.4 229 L1072.7 225.7 L1071.1 222.5 L1069.3 219.2 L1067.5 215.9 L1065.7 212.7 L1063.8 209.4 L1061.9 206.2 L1059.9 202.9 L1057.9 199.7 L1055.8 196.4 L1053.7 193.1 L1051.5 189.9 L1049.3 186.6 L1047.1 183.4 L1044.8 180.1 L1042.4 176.8 L1040 173.6 L1037.6 170.3 L1035.1 167.1 L1032.6 163.8 L1030.1 160.6 L1027.5 157.3 L1024.8 154 L1022.2 150.8 L1019.5 147.5 L1016.7 144.3 L1014 141 L1011.2 137.8 L1008.3 134.5 L1005.4 131.2 L1002.5 128 L999.6 124.7 L996.6 121.5 L993.6 118.2 L990.6 114.9 L987.6 111.7 L984.5 108.4 L981.4 105.2 L978.3 101.9 L975.1 98.7 L972 95.4 L968.8 92.1 L965.6 88.9 L962.3 85.6 L959.1 82.4 L955.8 79.1 L952.5 75.8 L949.2 72.6 L945.9 69.3 L942.6 66.1 L939.2 62.8 L935.9 59.6 L932.5 56.3 L929.2 53 L925.8 49.8 L922.4 46.5 L919 43.3 L915.6 40 L912.2 36.8 L908.8 33.5 L905.4 30.2 L902 27"/>
<path d="M902 613.4 L904.6 610.2 L907.1 606.9 L909.7 603.6 L912.2 600.4 L914.8 597.1 L917.3 593.9 L919.8 590.6 L922.4 587.4 L924.9 584.1 L927.4 580.8 L929.9 577.6 L932.4 574.3 L934.9 571.1 L937.4 567.8 L939.9 564.5 L942.4 561.3 L944.8 558 L947.2 554.8 L949.7 551.5 L952.1 548.3 L954.5 545 L956.8 541.7 L959.2 538.5 L961.5 535.2 L963.9 532 L966.2 528.7 L968.5 525.5 L970.7 522.2 L973 518.9 L975.2 515.7 L977.4 512.4 L979.6 509.2 L981.7 505.9 L983.9 502.6 L986 499.4 L988.1 496.1 L990.1 492.9 L992.1 489.6 L994.1 486.4 L996.1 483.1 L998.1 479.8 L1000 476.6 L1001.8 473.3 L1003.7 470.1 L1005.5 466.8 L1007.3 463.6 L1009.1 460.3 L1010.8 457 L1012.5 453.8 L1014.2 450.5 L1015.8 447.3 L1017.4 444 L1018.9 440.7 L1020.4 437.5 L1021.9 434.2 L1023.4 431 L1024.8 427.7 L1026.2 424.5 L1027.5 421.2 L1028.8 417.9 L1030.1 414.7 L1031.3 411.4 L1032.5 408.2 L1033.6 404.9 L1034.7 401.6 L1035.7 398.4 L1036.8 395.1 L1037.7 391.9 L1038.7 388.6 L1039.6 385.4 L1040.4 382.1 L1041.2 378.8 L1042 375.6 L1042.7 372.3 L1043.4 369.1 L1044.1 365.8 L1044.7 362.6 L1045.2 359.3 L1045.7 356 L1046.2 352.8 L1046.6 349.5 L1047 346.3 L1047.3 343 L1047.6 339.7 L1047.9 336.5 L1048.1 333.2 L1048.2 330 L1048.3 326.7 L1048.4 323.5 L1048.4 320.2 L1048.4 316.9 L1048.3 313.7 L1048.2 310.4 L1048.1 307.2 L1047.9 303.9 L1047.6 300.7 L1047.3 297.4 L1047 294.1 L1046.6 290.9 L1046.2 287.6 L1045.7 284.4 L1045.2 281.1 L1044.7 277.8 L1044.1 274.6 L1043.4 271.3 L1042.7 268.1 L1042 264.8 L1041.2 261.6 L1040.4 258.3 L1039.6 255 L1038.7 251.8 L1037.7 248.5 L1036.8 245.3 L1035.7 242 L1034.7 238.8 L1033.6 235.5 L1032.5 232.2 L1031.3 229 L1030.1 225.7 L1028.8 222.5 L1027.5 219.2 L1026.2 215.9 L1024.8 212.7 L1023.4 209.4 L1021.9 206.2 L1020.4 202.9 L1018.9 199.7 L1017.4 196.4 L1015.8 193.1 L1014.2 189.9 L1012.5 186.6 L1010.8 183.4 L1009.1 180.1 L1007.3 176.8 L1005.5 173.6 L1003.7 170.3 L1001.8 167.1 L1000 163.8 L998.1 160.6 L996.1 157.3 L994.1 154 L992.1 150.8 L990.1 147.5 L988.1 144.3 L986 141 L983.9 137.8 L981.7 134.5 L979.6 131.2 L977.4 128 L975.2 124.7 L973 121.5 L970.7 118.2 L968.5 114.9 L966.2 111.7 L963.9 108.4 L961.5 105.2 L959.2 101.9 L956.8 98.7 L954.5 95.4 L952.1 92.1 L949.7 88.9 L947.2 85.6 L944.8 82.4 L942.4 79.1 L939.9 75.8 L937.4 72.6 L934.9 69.3 L932.4 66.1 L929.9 62.8 L927.4 59.6 L924.9 56.3 L922.4 53 L919.8 49.8 L917.3 46.5 L914.8 43.3 L912.2 40 L909.7 36.8 L907.1 33.5 L904.6 30.2 L902 27"/>
<path d="M902 613.4 L903.7 610.2 L905.4 606.9 L907.1 603.6 L908.8 600.4 L910.5 597.1 L912.2 593.9 L913.9 590.6 L915.6 587.4 L917.3 584.1 L918.9 580.8 L920.6 577.6 L922.3 574.3 L924 571.1 L925.6 567.8 L927.3 564.5 L928.9 561.3 L930.5 558 L932.2 554.8 L933.8 551.5 L935.4 548.3 L937 545 L938.6 541.7 L940.1 538.5 L941.7 535.2 L943.2 532 L944.8 528.7 L946.3 525.5 L947.8 522.2 L949.3 518.9 L950.8 515.7 L952.3 512.4 L953.7 509.2 L955.2 505.9 L956.6 502.6 L958 499.4 L959.4 496.1 L960.7 492.9 L962.1 489.6 L963.4 486.4 L964.7 483.1 L966 479.8 L967.3 476.6 L968.6 473.3 L969.8 470.1 L971 466.8 L972.2 463.6 L973.4 460.3 L974.5 457 L975.7 453.8 L976.8 450.5 L977.9 447.3 L978.9 444 L980 440.7 L981 437.5 L982 434.2 L982.9 431 L983.9 427.7 L984.8 424.5 L985.7 421.2 L986.5 417.9 L987.4 414.7 L988.2 411.4 L989 408.2 L989.7 404.9 L990.5 401.6 L991.2 398.4 L991.8 395.1 L992.5 391.9 L993.1 388.6 L993.7 385.4 L994.3 382.1 L994.8 378.8 L995.3 375.6 L995.8 372.3 L996.3 369.1 L996.7 365.8 L997.1 362.6 L997.5 359.3 L997.8 356 L998.1 352.8 L998.4 349.5 L998.7 346.3 L998.9 343 L999.1 339.7 L999.2 336.5 L999.4 333.2 L999.5 330 L999.5 326.7 L999.6 323.5 L999.6 320.2 L999.6 316.9 L999.5 313.7 L999.5 310.4 L999.4 307.2 L999.2 303.9 L999.1 300.7 L998.9 297.4 L998.7 294.1 L998.4 290.9 L998.1 287.6 L997.8 284.4 L997.5 281.1 L997.1 277.8 L996.7 274.6 L996.3 271.3 L995.8 268.1 L995.3 264.8 L994.8 261.6 L994.3 258.3 L993.7 255 L993.1 251.8 L992.5 248.5 L991.8 245.3 L991.2 242 L990.5 238.8 L989.7 235.5 L989 232.2 L988.2 229 L987.4 225.7 L986.5 222.5 L985.7 219.2 L984.8 215.9 L983.9 212.7 L982.9 209.4 L982 206.2 L981 202.9 L980 199.7 L978.9 196.4 L977.9 193.1 L976.8 189.9 L975.7 186.6 L974.5 183.4 L973.4 180.1 L972.2 176.8 L971 173.6 L969.8 170.3 L968.6 167.1 L967.3 163.8 L966 160.6 L964.7 157.3 L963.4 154 L962.1 150.8 L960.7 147.5 L959.4 144.3 L958 141 L956.6 137.8 L955.2 134.5 L953.7 131.2 L952.3 128 L950.8 124.7 L949.3 121.5 L947.8 118.2 L946.3 114.9 L944.8 111.7 L943.2 108.4 L941.7 105.2 L940.1 101.9 L938.6 98.7 L937 95.4 L935.4 92.1 L933.8 88.9 L932.2 85.6 L930.5 82.4 L928.9 79.1 L927.3 75.8 L925.6 72.6 L924 69.3 L922.3 66.1 L920.6 62.8 L918.9 59.6 L917.3 56.3 L915.6 53 L913.9 49.8 L912.2 46.5 L910.5 43.3 L908.8 40 L907.1 36.8 L905.4 33.5 L903.7 30.2 L902 27"/>
<path d="M902 613.4 L902.9 610.2 L903.7 606.9 L904.6 603.6 L905.4 600.4 L906.3 597.1 L907.1 593.9 L907.9 590.6 L908.8 587.4 L909.6 584.1 L910.5 580.8 L911.3 577.6 L912.1 574.3 L913 571.1 L913.8 567.8 L914.6 564.5 L915.5 561.3 L916.3 558 L917.1 554.8 L917.9 551.5 L918.7 548.3 L919.5 545 L920.3 541.7 L921.1 538.5 L921.8 535.2 L922.6 532 L923.4 528.7 L924.2 525.5 L924.9 522.2 L925.7 518.9 L926.4 515.7 L927.1 512.4 L927.9 509.2 L928.6 505.9 L929.3 502.6 L930 499.4 L930.7 496.1 L931.4 492.9 L932 489.6 L932.7 486.4 L933.4 483.1 L934 479.8 L934.7 476.6 L935.3 473.3 L935.9 470.1 L936.5 466.8 L937.1 463.6 L937.7 460.3 L938.3 457 L938.8 453.8 L939.4 450.5 L939.9 447.3 L940.5 444 L941 440.7 L941.5 437.5 L942 434.2 L942.5 431 L942.9 427.7 L943.4 424.5 L943.8 421.2 L944.3 417.9 L944.7 414.7 L945.1 411.4 L945.5 408.2 L945.9 404.9 L946.2 401.6 L946.6 398.4 L946.9 395.1 L947.2 391.9 L947.6 388.6 L947.9 385.4 L948.1 382.1 L948.4 378.8 L948.7 375.6 L948.9 372.3 L949.1 369.1 L949.4 365.8 L949.6 362.6 L949.7 359.3 L949.9 356 L950.1 352.8 L950.2 349.5 L950.3 346.3 L950.4 343 L950.5 339.7 L950.6 336.5 L950.7 333.2 L950.7 330 L950.8 326.7 L950.8 323.5 L950.8 320.2 L950.8 316.9 L950.8 313.7 L950.7 310.4 L950.7 307.2 L950.6 303.9 L950.5 300.7 L950.4 297.4 L950.3 294.1 L950.2 290.9 L950.1 287.6 L949.9 284.4 L949.7 281.1 L949.6 277.8 L949.4 274.6 L949.1 271.3 L948.9 268.1 L948.7 264.8 L948.4 261.6 L948.1 258.3 L947.9 255 L947.6 251.8 L947.2 248.5 L946.9 245.3 L946.6 242 L946.2 238.8 L945.9 235.5 L945.5 232.2 L945.1 229 L944.7 225.7 L944.3 222.5 L943.8 219.2 L943.4 215.9 L942.9 212.7 L942.5 209.4 L942 206.2 L941.5 202.9 L941 199.7 L940.5 196.4 L939.9 193.1 L939.4 189.9 L938.8 186.6 L938.3 183.4 L937.7 180.1 L937.1 176.8 L936.5 173.6 L935.9 170.3 L935.3 167.1 L934.7 163.8 L934 160.6 L933.4 157.3 L932.7 154 L932 150.8 L931.4 147.5 L930.7 144.3 L930 141 L929.3 137.8 L928.6 134.5 L927.9 131.2 L927.1 128 L926.4 124.7 L925.7 121.5 L924.9 118.2 L924.2 114.9 L923.4 111.7 L922.6 108.4 L921.8 105.2 L921.1 101.9 L920.3 98.7 L919.5 95.4 L918.7 92.1 L917.9 88.9 L917.1 85.6 L916.3 82.4 L915.5 79.1 L914.6 75.8 L913.8 72.6 L913 69.3 L912.1 66.1 L911.3 62.8 L910.5 59.6 L909.6 56.3 L908.8 53 L907.9 49.8 L907.1 46.5 L906.3 43.3 L905.4 40 L904.6 36.8 L903.7 33.5 L902.9 30.2 L902 27"/>
<path d="M902 613.4 L902 610.2 L902 606.9 L902 603.6 L902 600.4 L902 597.1 L902 593.9 L902 590.6 L902 587.4 L902 584.1 L902 580.8 L902 577.6 L902 574.3 L902 571.1 L902 567.8 L902 564.5 L902 561.3 L902 558 L902 554.8 L902 551.5 L902 548.3 L902 545 L902 541.7 L902 538.5 L902 535.2 L902 532 L902 528.7 L902 525.5 L902 522.2 L902 518.9 L902 515.7 L902 512.4 L902 509.2 L902 505.9 L902 502.6 L902 499.4 L902 496.1 L902 492.9 L902 489.6 L902 486.4 L902 483.1 L902 479.8 L902 476.6 L902 473.3 L902 470.1 L902 466.8 L902 463.6 L902 460.3 L902 457 L902 453.8 L902 450.5 L902 447.3 L902 444 L902 440.7 L902 437.5 L902 434.2 L902 431 L902 427.7 L902 424.5 L902 421.2 L902 417.9 L902 414.7 L902 411.4 L902 408.2 L902 404.9 L902 401.6 L902 398.4 L902 395.1 L902 391.9 L902 388.6 L902 385.4 L902 382.1 L902 378.8 L902 375.6 L902 372.3 L902 369.1 L902 365.8 L902 362.6 L902 359.3 L902 356 L902 352.8 L902 349.5 L902 346.3 L902 343 L902 339.7 L902 336.5 L902 333.2 L902 330 L902 326.7 L902 323.5 L902 320.2 L902 316.9 L902 313.7 L902 310.4 L902 307.2 L902 303.9 L902 300.7 L902 297.4 L902 294.1 L902 290.9 L902 287.6 L902 284.4 L902 281.1 L902 277.8 L902 274.6 L902 271.3 L902 268.1 L902 264.8 L902 261.6 L902 258.3 L902 255 L902 251.8 L902 248.5 L902 245.3 L902 242 L902 238.8 L902 235.5 L902 232.2 L902 229 L902 225.7 L902 222.5 L902 219.2 L902 215.9 L902 212.7 L902 209.4 L902 206.2 L902 202.9 L902 199.7 L902 196.4 L902 193.1 L902 189.9 L902 186.6 L902 183.4 L902 180.1 L902 176.8 L902 173.6 L902 170.3 L902 167.1 L902 163.8 L902 160.6 L902 157.3 L902 154 L902 150.8 L902 147.5 L902 144.3 L902 141 L902 137.8 L902 134.5 L902 131.2 L902 128 L902 124.7 L902 121.5 L902 118.2 L902 114.9 L902 111.7 L902 108.4 L902 105.2 L902 101.9 L902 98.7 L902 95.4 L902 92.1 L902 88.9 L902 85.6 L902 82.4 L902 79.1 L902 75.8 L902 72.6 L902 69.3 L902 66.1 L902 62.8 L902 59.6 L902 56.3 L902 53 L902 49.8 L902 46.5 L902 43.3 L902 40 L902 36.8 L902 33.5 L902 30.2 L902 27"/>
<path d="M902 613.4 L901.1 610.2 L900.3 606.9 L899.4 603.6 L898.6 600.4 L897.7 597.1 L896.9 593.9 L896.1 590.6 L895.2 587.4 L894.4 584.1 L893.5 580.8 L892.7 577.6 L891.9 574.3 L891 571.1 L890.2 567.8 L889.4 564.5 L888.5 561.3 L887.7 558 L886.9 554.8 L886.1 551.5 L885.3 548.3 L884.5 545 L883.7 541.7 L882.9 538.5 L882.2 535.2 L881.4 532 L880.6 528.7 L879.8 525.5 L879.1 522.2 L878.3 518.9 L877.6 515.7 L876.9 512.4 L876.1 509.2 L875.4 505.9 L874.7 502.6 L874 499.4 L873.3 496.1 L872.6 492.9 L872 489.6 L871.3 486.4 L870.6 483.1 L870 479.8 L869.3 476.6 L868.7 473.3 L868.1 470.1 L867.5 466.8 L866.9 463.6 L866.3 460.3 L865.7 457 L865.2 453.8 L864.6 450.5 L864.1 447.3 L863.5 444 L863 440.7 L862.5 437.5 L862 434.2 L861.5 431 L861.1 427.7 L860.6 424.5 L860.2 421.2 L859.7 417.9 L859.3 414.7 L858.9 411.4 L858.5 408.2 L858.1 404.9 L857.8 401.6 L857.4 398.4 L857.1 395.1 L856.8 391.9 L856.4 388.6 L856.1 385.4 L855.9 382.1 L855.6 378.8 L855.3 375.6 L855.1 372.3 L854.9 369.1 L854.6 365.8 L854.4 362.6 L854.3 359.3 L854.1 356 L853.9 352.8 L853.8 349.5 L853.7 346.3 L853.6 343 L853.5 339.7 L853.4 336.5 L853.3 333.2 L853.3 330 L853.2 326.7 L853.2 323.5 L853.2 320.2 L853.2 316.9 L853.2 313.7 L853.3 310.4 L853.3 307.2 L853.4 303.9 L853.5 300.7 L853.6 297.4 L853.7 294.1 L853.8 290.9 L853.9 287.6 L854.1 284.4 L854.3 281.1 L854.4 277.8 L854.6 274.6 L854.9 271.3 L855.1 268.1 L855.3 264.8 L855.6 261.6 L855.9 258.3 L856.1 255 L856.4 251.8 L856.8 248.5 L857.1 245.3 L857.4 242 L857.8 238.8 L858.1 235.5 L858.5 232.2 L858.9 229 L859.3 225.7 L859.7 222.5 L860.2 219.2 L860.6 215.9 L861.1 212.7 L861.5 209.4 L862 206.2 L862.5 202.9 L863 199.7 L863.5 196.4 L864.1 193.1 L864.6 189.9 L865.2 186.6 L865.7 183.4 L866.3 180.1 L866.9 176.8 L867.5 173.6 L868.1 170.3 L868.7 167.1 L869.3 163.8 L870 160.6 L870.6 157.3 L871.3 154 L872 150.8 L872.6 147.5 L873.3 144.3 L874 141 L874.7 137.8 L875.4 134.5 L876.1 131.2 L876.9 128 L877.6 124.7 L878.3 121.5 L879.1 118.2 L879.8 114.9 L880.6 111.7 L881.4 108.4 L882.2 105.2 L882.9 101.9 L883.7 98.7 L884.5 95.4 L885.3 92.1 L886.1 88.9 L886.9 85.6 L887.7 82.4 L888.5 79.1 L889.4 75.8 L890.2 72.6 L891 69.3 L891.9 66.1 L892.7 62.8 L893.5 59.6 L894.4 56.3 L895.2 53 L896.1 49.8 L896.9 46.5 L897.7 43.3 L898.6 40 L899.4 36.8 L900.3 33.5 L901.1 30.2 L902 27"/>
<path d="M902 613.4 L900.3 610.2 L898.6 606.9 L896.9 603.6 L895.2 600.4 L893.5 597.1 L891.8 593.9 L890.1 590.6 L888.4 587.4 L886.7 584.1 L885.1 580.8 L883.4 577.6 L881.7 574.3 L880 571.1 L878.4 567.8 L876.7 564.5 L875.1 561.3 L873.5 558 L871.8 554.8 L870.2 551.5 L868.6 548.3 L867 545 L865.4 541.7 L863.9 538.5 L862.3 535.2 L860.8 532 L859.2 528.7 L857.7 525.5 L856.2 522.2 L854.7 518.9 L853.2 515.7 L851.7 512.4 L850.3 509.2 L848.8 505.9 L847.4 502.6 L846 499.4 L844.6 496.1 L843.3 492.9 L841.9 489.6 L840.6 486.4 L839.3 483.1 L838 479.8 L836.7 476.6 L835.4 473.3 L834.2 470.1 L833 466.8 L831.8 463.6 L830.6 460.3 L829.5 457 L828.3 453.8 L827.2 450.5 L826.1 447.3 L825.1 444 L824 440.7 L823 437.5 L822 434.2 L821.1 431 L820.1 427.7 L819.2 424.5 L818.3 421.2 L817.5 417.9 L816.6 414.7 L815.8 411.4 L815 408.2 L814.3 404.9 L813.5 401.6 L812.8 398.4 L812.2 395.1 L811.5 391.9 L810.9 388.6 L810.3 385.4 L809.7 382.1 L809.2 378.8 L808.7 375.6 L808.2 372.3 L807.7 369.1 L807.3 365.8 L806.9 362.6 L806.5 359.3 L806.2 356 L805.9 352.8 L805.6 349.5 L805.3 346.3 L805.1 343 L804.9 339.7 L804.8 336.5 L804.6 333.2 L804.5 330 L804.5 326.7 L804.4 323.5 L804.4 320.2 L804.4 316.9 L804.5 313.7 L804.5 310.4 L804.6 307.2 L804.8 303.9 L804.9 300.7 L805.1 297.4 L805.3 294.1 L805.6 290.9 L805.9 287.6 L806.2 284.4 L806.5 281.1 L806.9 277.8 L807.3 274.6 L807.7 271.3 L808.2 268.1 L808.7 264.8 L809.2 261.6 L809.7 258.3 L810.3 255 L810.9 251.8 L811.5 248.5 L812.2 245.3 L812.8 242 L813.5 238.8 L814.3 235.5 L815 232.2 L815.8 229 L816.6 225.7 L817.5 222.5 L818.3 219.2 L819.2 215.9 L820.1 212.7 L821.1 209.4 L822 206.2 L823 202.9 L824 199.7 L825.1 196.4 L826.1 193.1 L827.2 189.9 L828.3 186.6 L829.5 183.4 L830.6 180.1 L831.8 176.8 L833 173.6 L834.2 170.3 L835.4 167.1 L836.7 163.8 L838 160.6 L839.3 157.3 L840.6 154 L841.9 150.8 L843.3 147.5 L844.6 144.3 L846 141 L847.4 137.8 L848.8 134.5 L850.3 131.2 L851.7 128 L853.2 124.7 L854.7 121.5 L856.2 118.2 L857.7 114.9 L859.2 111.7 L860.8 108.4 L862.3 105.2 L863.9 101.9 L865.4 98.7 L867 95.4 L868.6 92.1 L870.2 88.9 L871.8 85.6 L873.5 82.4 L875.1 79.1 L876.7 75.8 L878.4 72.6 L880 69.3 L881.7 66.1 L883.4 62.8 L885.1 59.6 L886.7 56.3 L888.4 53 L890.1 49.8 L891.8 46.5 L893.5 43.3 L895.2 40 L896.9 36.8 L898.6 33.5 L900.3 30.2 L902 27"/>
<path d="M902 613.4 L899.4 610.2 L896.9 606.9 L894.3 603.6 L891.8 600.4 L889.2 597.1 L886.7 593.9 L884.2 590.6 L881.6 587.4 L879.1 584.1 L876.6 580.8 L874.1 577.6 L871.6 574.3 L869.1 571.1 L866.6 567.8 L864.1 564.5 L861.6 561.3 L859.2 558 L856.8 554.8 L854.3 551.5 L851.9 548.3 L849.5 545 L847.2 541.7 L844.8 538.5 L842.5 535.2 L840.1 532 L837.8 528.7 L835.5 525.5 L833.3 522.2 L831 518.9 L828.8 515.7 L826.6 512.4 L824.4 509.2 L822.3 505.9 L820.1 502.6 L818 499.4 L815.9 496.1 L813.9 492.9 L811.9 489.6 L809.9 486.4 L807.9 483.1 L805.9 479.8 L804 476.6 L802.2 473.3 L800.3 470.1 L798.5 466.8 L796.7 463.6 L794.9 460.3 L793.2 457 L791.5 453.8 L789.8 450.5 L788.2 447.3 L786.6 444 L785.1 440.7 L783.6 437.5 L782.1 434.2 L780.6 431 L779.2 427.7 L777.8 424.5 L776.5 421.2 L775.2 417.9 L773.9 414.7 L772.7 411.4 L771.5 408.2 L770.4 404.9 L769.3 401.6 L768.3 398.4 L767.2 395.1 L766.3 391.9 L765.3 388.6 L764.4 385.4 L763.6 382.1 L762.8 378.8 L762 375.6 L761.3 372.3 L760.6 369.1 L759.9 365.8 L759.3 362.6 L758.8 359.3 L758.3 356 L757.8 352.8 L757.4 349.5 L757 346.3 L756.7 343 L756.4 339.7 L756.1 336.5 L755.9 333.2 L755.8 330 L755.7 326.7 L755.6 323.5 L755.6 320.2 L755.6 316.9 L755.7 313.7 L755.8 310.4 L755.9 307.2 L756.1 303.9 L756.4 300.7 L756.7 297.4 L757 294.1 L757.4 290.9 L757.8 287.6 L758.3 284.4 L758.8 281.1 L759.3 277.8 L759.9 274.6 L760.6 271.3 L761.3 268.1 L762 264.8 L762.8 261.6 L763.6 258.3 L764.4 255 L765.3 251.8 L766.3 248.5 L767.2 245.3 L768.3 242 L769.3 238.8 L770.4 235.5 L771.5 232.2 L772.7 229 L773.9 225.7 L775.2 222.5 L776.5 219.2 L777.8 215.9 L779.2 212.7 L780.6 209.4 L782.1 206.2 L783.6 202.9 L785.1 199.7 L786.6 196.4 L788.2 193.1 L789.8 189.9 L791.5 186.6 L793.2 183.4 L794.9 180.1 L796.7 176.8 L798.5 173.6 L800.3 170.3 L802.2 167.1 L804 163.8 L805.9 160.6 L807.9 157.3 L809.9 154 L811.9 150.8 L813.9 147.5 L815.9 144.3 L818 141 L820.1 137.8 L822.3 134.5 L824.4 131.2 L826.6 128 L828.8 124.7 L831 121.5 L833.3 118.2 L835.5 114.9 L837.8 111.7 L840.1 108.4 L842.5 105.2 L844.8 101.9 L847.2 98.7 L849.5 95.4 L851.9 92.1 L854.3 88.9 L856.8 85.6 L859.2 82.4 L861.6 79.1 L864.1 75.8 L866.6 72.6 L869.1 69.3 L871.6 66.1 L874.1 62.8 L876.6 59.6 L879.1 56.3 L881.6 53 L884.2 49.8 L886.7 46.5 L889.2 43.3 L891.8 40 L894.3 36.8 L896.9 33.5 L899.4 30.2 L902 27"/>
<path d="M902 613.4 L898.6 610.2 L895.2 606.9 L891.8 603.6 L888.4 600.4 L885 597.1 L881.6 593.9 L878.2 590.6 L874.8 587.4 L871.5 584.1 L868.1 580.8 L864.8 577.6 L861.4 574.3 L858.1 571.1 L854.8 567.8 L851.5 564.5 L848.2 561.3 L844.9 558 L841.7 554.8 L838.4 551.5 L835.2 548.3 L832 545 L828.9 541.7 L825.7 538.5 L822.6 535.2 L819.5 532 L816.4 528.7 L813.4 525.5 L810.4 522.2 L807.4 518.9 L804.4 515.7 L801.5 512.4 L798.6 509.2 L795.7 505.9 L792.8 502.6 L790 499.4 L787.3 496.1 L784.5 492.9 L781.8 489.6 L779.2 486.4 L776.5 483.1 L773.9 479.8 L771.4 476.6 L768.9 473.3 L766.4 470.1 L764 466.8 L761.6 463.6 L759.2 460.3 L756.9 457 L754.7 453.8 L752.5 450.5 L750.3 447.3 L748.2 444 L746.1 440.7 L744.1 437.5 L742.1 434.2 L740.2 431 L738.3 427.7 L736.5 424.5 L734.7 421.2 L732.9 417.9 L731.3 414.7 L729.6 411.4 L728.1 408.2 L726.5 404.9 L725.1 401.6 L723.7 398.4 L722.3 395.1 L721 391.9 L719.8 388.6 L718.6 385.4 L717.4 382.1 L716.3 378.8 L715.3 375.6 L714.4 372.3 L713.4 369.1 L712.6 365.8 L711.8 362.6 L711.1 359.3 L710.4 356 L709.8 352.8 L709.2 349.5 L708.7 346.3 L708.2 343 L707.9 339.7 L707.5 336.5 L707.3 333.2 L707.1 330 L706.9 326.7 L706.8 323.5 L706.8 320.2 L706.8 316.9 L706.9 313.7 L707.1 310.4 L707.3 307.2 L707.5 303.9 L707.9 300.7 L708.2 297.4 L708.7 294.1 L709.2 290.9 L709.8 287.6 L710.4 284.4 L711.1 281.1 L711.8 277.8 L712.6 274.6 L713.4 271.3 L714.4 268.1 L715.3 264.8 L716.3 261.6 L717.4 258.3 L718.6 255 L719.8 251.8 L721 248.5 L722.3 245.3 L723.7 242 L725.1 238.8 L726.5 235.5 L728.1 232.2 L729.6 229 L731.3 225.7 L732.9 222.5 L734.7 219.2 L736.5 215.9 L738.3 212.7 L740.2 209.4 L742.1 206.2 L744.1 202.9 L746.1 199.7 L748.2 196.4 L750.3 193.1 L752.5 189.9 L754.7 186.6 L756.9 183.4 L759.2 180.1 L761.6 176.8 L764 173.6 L766.4 170.3 L768.9 167.1 L771.4 163.8 L773.9 160.6 L776.5 157.3 L779.2 154 L781.8 150.8 L784.5 147.5 L787.3 144.3 L790 141 L792.8 137.8 L795.7 134.5 L798.6 131.2 L801.5 128 L804.4 124.7 L807.4 121.5 L810.4 118.2 L813.4 114.9 L816.4 111.7 L819.5 108.4 L822.6 105.2 L825.7 101.9 L828.9 98.7 L832 95.4 L835.2 92.1 L838.4 88.9 L841.7 85.6 L844.9 82.4 L848.2 79.1 L851.5 75.8 L854.8 72.6 L858.1 69.3 L861.4 66.1 L864.8 62.8 L868.1 59.6 L871.5 56.3 L874.8 53 L878.2 49.8 L881.6 46.5 L885 43.3 L888.4 40 L891.8 36.8 L895.2 33.5 L898.6 30.2 L902 27"/>
<path d="M902 613.4 L897.7 610.2 L893.5 606.9 L889.2 603.6 L885 600.4 L880.7 597.1 L876.5 593.9 L872.3 590.6 L868 587.4 L863.8 584.1 L859.6 580.8 L855.4 577.6 L851.3 574.3 L847.1 571.1 L843 567.8 L838.8 564.5 L834.7 561.3 L830.7 558 L826.6 554.8 L822.6 551.5 L818.5 548.3 L814.6 545 L810.6 541.7 L806.7 538.5 L802.8 535.2 L798.9 532 L795 528.7 L791.2 525.5 L787.4 522.2 L783.7 518.9 L780 515.7 L776.3 512.4 L772.7 509.2 L769.1 505.9 L765.5 502.6 L762 499.4 L758.6 496.1 L755.1 492.9 L751.8 489.6 L748.4 486.4 L745.2 483.1 L741.9 479.8 L738.7 476.6 L735.6 473.3 L732.5 470.1 L729.5 466.8 L726.5 463.6 L723.5 460.3 L720.7 457 L717.8 453.8 L715.1 450.5 L712.4 447.3 L709.7 444 L707.1 440.7 L704.6 437.5 L702.1 434.2 L699.7 431 L697.4 427.7 L695.1 424.5 L692.8 421.2 L690.7 417.9 L688.6 414.7 L686.5 411.4 L684.6 408.2 L682.7 404.9 L680.8 401.6 L679.1 398.4 L677.4 395.1 L675.8 391.9 L674.2 388.6 L672.7 385.4 L671.3 382.1 L669.9 378.8 L668.6 375.6 L667.4 372.3 L666.3 369.1 L665.2 365.8 L664.2 362.6 L663.3 359.3 L662.5 356 L661.7 352.8 L661 349.5 L660.4 346.3 L659.8 343 L659.3 339.7 L658.9 336.5 L658.6 333.2 L658.3 330 L658.1 326.7 L658 323.5 L658 320.2 L658 316.9 L658.1 313.7 L658.3 310.4 L658.6 307.2 L658.9 303.9 L659.3 300.7 L659.8 297.4 L660.4 294.1 L661 290.9 L661.7 287.6 L662.5 284.4 L663.3 281.1 L664.2 277.8 L665.2 274.6 L666.3 271.3 L667.4 268.1 L668.6 264.8 L669.9 261.6 L671.3 258.3 L672.7 255 L674.2 251.8 L675.8 248.5 L677.4 245.3 L679.1 242 L680.8 238.8 L682.7 235.5 L684.6 232.2 L686.5 229 L688.6 225.7 L690.7 222.5 L692.8 219.2 L695.1 215.9 L697.4 212.7 L699.7 209.4 L702.1 206.2 L704.6 202.9 L707.1 199.7 L709.7 196.4 L712.4 193.1 L715.1 189.9 L717.8 186.6 L720.7 183.4 L723.5 180.1 L726.5 176.8 L729.5 173.6 L732.5 170.3 L735.6 167.1 L738.7 163.8 L741.9 160.6 L745.2 157.3 L748.4 154 L751.8 150.8 L755.1 147.5 L758.6 144.3 L762 141 L765.5 137.8 L769.1 134.5 L772.7 131.2 L776.3 128 L780 124.7 L783.7 121.5 L787.4 118.2 L791.2 114.9 L795 111.7 L798.9 108.4 L802.8 105.2 L806.7 101.9 L810.6 98.7 L814.6 95.4 L818.5 92.1 L822.6 88.9 L826.6 85.6 L830.7 82.4 L834.7 79.1 L838.8 75.8 L843 72.6 L847.1 69.3 L851.3 66.1 L855.4 62.8 L859.6 59.6 L863.8 56.3 L868 53 L872.3 49.8 L876.5 46.5 L880.7 43.3 L885 40 L889.2 36.8 L893.5 33.5 L897.7 30.2 L902 27"/>
<path d="M902 613.4 L896.9 610.2 L891.8 606.9 L886.7 603.6 L881.6 600.4 L876.5 597.1 L871.4 593.9 L866.3 590.6 L861.2 587.4 L856.2 584.1 L851.2 580.8 L846.1 577.6 L841.1 574.3 L836.1 571.1 L831.2 567.8 L826.2 564.5 L821.3 561.3 L816.4 558 L811.5 554.8 L806.7 551.5 L801.9 548.3 L797.1 545 L792.3 541.7 L787.6 538.5 L782.9 535.2 L778.3 532 L773.6 528.7 L769.1 525.5 L764.5 522.2 L760 518.9 L755.6 515.7 L751.2 512.4 L746.8 509.2 L742.5 505.9 L738.3 502.6 L734 499.4 L729.9 496.1 L725.8 492.9 L721.7 489.6 L717.7 486.4 L713.8 483.1 L709.9 479.8 L706.1 476.6 L702.3 473.3 L698.6 470.1 L694.9 466.8 L691.4 463.6 L687.8 460.3 L684.4 457 L681 453.8 L677.7 450.5 L674.4 447.3 L671.3 444 L668.1 440.7 L665.1 437.5 L662.1 434.2 L659.2 431 L656.4 427.7 L653.7 424.5 L651 421.2 L648.4 417.9 L645.9 414.7 L643.5 411.4 L641.1 408.2 L638.8 404.9 L636.6 401.6 L634.5 398.4 L632.5 395.1 L630.5 391.9 L628.6 388.6 L626.8 385.4 L625.1 382.1 L623.5 378.8 L622 375.6 L620.5 372.3 L619.2 369.1 L617.9 365.8 L616.7 362.6 L615.6 359.3 L614.6 356 L613.6 352.8 L612.8 349.5 L612 346.3 L611.4 343 L610.8 339.7 L610.3 336.5 L609.9 333.2 L609.6 330 L609.4 326.7 L609.2 323.5 L609.2 320.2 L609.2 316.9 L609.4 313.7 L609.6 310.4 L609.9 307.2 L610.3 303.9 L610.8 300.7 L611.4 297.4 L612 294.1 L612.8 290.9 L613.6 287.6 L614.6 284.4 L615.6 281.1 L616.7 277.8 L617.9 274.6 L619.2 271.3 L620.5 268.1 L622 264.8 L623.5 261.6 L625.1 258.3 L626.8 255 L628.6 251.8 L630.5 248.5 L632.5 245.3 L634.5 242 L636.6 238.8 L638.8 235.5 L641.1 232.2 L643.5 229 L645.9 225.7 L648.4 222.5 L651 219.2 L653.7 215.9 L656.4 212.7 L659.2 209.4 L662.1 206.2 L665.1 202.9 L668.1 199.7 L671.3 196.4 L674.4 193.1 L677.7 189.9 L681 186.6 L684.4 183.4 L687.8 180.1 L691.4 176.8 L694.9 173.6 L698.6 170.3 L702.3 167.1 L706.1 163.8 L709.9 160.6 L713.8 157.3 L717.7 154 L721.7 150.8 L725.8 147.5 L729.9 144.3 L734 141 L738.3 137.8 L742.5 134.5 L746.8 131.2 L751.2 128 L755.6 124.7 L760 121.5 L764.5 118.2 L769.1 114.9 L773.6 111.7 L778.3 108.4 L782.9 105.2 L787.6 101.9 L792.3 98.7 L797.1 95.4 L801.9 92.1 L806.7 88.9 L811.5 85.6 L816.4 82.4 L821.3 79.1 L826.2 75.8 L831.2 72.6 L836.1 69.3 L841.1 66.1 L846.1 62.8 L851.2 59.6 L856.2 56.3 L861.2 53 L866.3 49.8 L871.4 46.5 L876.5 43.3 L881.6 40 L886.7 36.8 L891.8 33.5 L896.9 30.2 L902 27"/>
<path d="M902 613.4 L896 610.2 L890.1 606.9 L884.1 603.6 L878.2 600.4 L872.2 597.1 L866.3 593.9 L860.4 590.6 L854.5 587.4 L848.6 584.1 L842.7 580.8 L836.8 577.6 L831 574.3 L825.2 571.1 L819.4 567.8 L813.6 564.5 L807.8 561.3 L802.1 558 L796.4 554.8 L790.8 551.5 L785.2 548.3 L779.6 545 L774 541.7 L768.5 538.5 L763.1 535.2 L757.6 532 L752.2 528.7 L746.9 525.5 L741.6 522.2 L736.4 518.9 L731.2 515.7 L726.1 512.4 L721 509.2 L715.9 505.9 L711 502.6 L706.1 499.4 L701.2 496.1 L696.4 492.9 L691.7 489.6 L687 486.4 L682.4 483.1 L677.9 479.8 L673.4 476.6 L669 473.3 L664.7 470.1 L660.4 466.8 L656.3 463.6 L652.2 460.3 L648.1 457 L644.2 453.8 L640.3 450.5 L636.5 447.3 L632.8 444 L629.2 440.7 L625.6 437.5 L622.2 434.2 L618.8 431 L615.5 427.7 L612.3 424.5 L609.2 421.2 L606.2 417.9 L603.2 414.7 L600.4 411.4 L597.6 408.2 L595 404.9 L592.4 401.6 L589.9 398.4 L587.5 395.1 L585.3 391.9 L583.1 388.6 L581 385.4 L579 382.1 L577.1 378.8 L575.3 375.6 L573.6 372.3 L572 369.1 L570.5 365.8 L569.1 362.6 L567.8 359.3 L566.7 356 L565.6 352.8 L564.6 349.5 L563.7 346.3 L562.9 343 L562.3 339.7 L561.7 336.5 L561.2 333.2 L560.9 330 L560.6 326.7 L560.4 323.5 L560.4 320.2 L560.4 316.9 L560.6 313.7 L560.9 310.4 L561.2 307.2 L561.7 303.9 L562.3 300.7 L562.9 297.4 L563.7 294.1 L564.6 290.9 L565.6 287.6 L566.7 284.4 L567.8 281.1 L569.1 277.8 L570.5 274.6 L572 271.3 L573.6 268.1 L575.3 264.8 L577.1 261.6 L579 258.3 L581 255 L583.1 251.8 L585.3 248.5 L587.5 245.3 L589.9 242 L592.4 238.8 L595 235.5 L597.6 232.2 L600.4 229 L603.2 225.7 L606.2 222.5 L609.2 219.2 L612.3 215.9 L615.5 212.7 L618.8 209.4 L622.2 206.2 L625.6 202.9 L629.2 199.7 L632.8 196.4 L636.5 193.1 L640.3 189.9 L644.2 186.6 L648.1 183.4 L652.2 180.1 L656.3 176.8 L660.4 173.6 L664.7 170.3 L669 167.1 L673.4 163.8 L677.9 160.6 L682.4 157.3 L687 154 L691.7 150.8 L696.4 147.5 L701.2 144.3 L706.1 141 L711 137.8 L715.9 134.5 L721 131.2 L726.1 128 L731.2 124.7 L736.4 121.5 L741.6 118.2 L746.9 114.9 L752.2 111.7 L757.6 108.4 L763.1 105.2 L768.5 101.9 L774 98.7 L779.6 95.4 L785.2 92.1 L790.8 88.9 L796.4 85.6 L802.1 82.4 L807.8 79.1 L813.6 75.8 L819.4 72.6 L825.2 69.3 L831 66.1 L836.8 62.8 L842.7 59.6 L848.6 56.3 L854.5 53 L860.4 49.8 L866.3 46.5 L872.2 43.3 L878.2 40 L884.1 36.8 L890.1 33.5 L896 30.2 L902 27"/>
<path d="M902 613.4 L895.2 610.2 L888.4 606.9 L881.6 603.6 L874.8 600.4 L868 597.1 L861.2 593.9 L854.4 590.6 L847.7 587.4 L840.9 584.1 L834.2 580.8 L827.5 577.6 L820.8 574.3 L814.2 571.1 L807.5 567.8 L801 564.5 L794.4 561.3 L787.9 558 L781.4 554.8 L774.9 551.5 L768.5 548.3 L762.1 545 L755.7 541.7 L749.5 538.5 L743.2 535.2 L737 532 L730.9 528.7 L724.8 525.5 L718.7 522.2 L712.7 518.9 L706.8 515.7 L700.9 512.4 L695.1 509.2 L689.4 505.9 L683.7 502.6 L678.1 499.4 L672.5 496.1 L667 492.9 L661.6 489.6 L656.3 486.4 L651 483.1 L645.9 479.8 L640.8 476.6 L635.7 473.3 L630.8 470.1 L625.9 466.8 L621.2 463.6 L616.5 460.3 L611.9 457 L607.3 453.8 L602.9 450.5 L598.6 447.3 L594.3 444 L590.2 440.7 L586.1 437.5 L582.2 434.2 L578.3 431 L574.6 427.7 L570.9 424.5 L567.3 421.2 L563.9 417.9 L560.5 414.7 L557.3 411.4 L554.1 408.2 L551.1 404.9 L548.2 401.6 L545.3 398.4 L542.6 395.1 L540 391.9 L537.5 388.6 L535.1 385.4 L532.9 382.1 L530.7 378.8 L528.6 375.6 L526.7 372.3 L524.9 369.1 L523.2 365.8 L521.6 362.6 L520.1 359.3 L518.8 356 L517.5 352.8 L516.4 349.5 L515.4 346.3 L514.5 343 L513.7 339.7 L513.1 336.5 L512.5 333.2 L512.1 330 L511.8 326.7 L511.6 323.5 L511.6 320.2 L511.6 316.9 L511.8 313.7 L512.1 310.4 L512.5 307.2 L513.1 303.9 L513.7 300.7 L514.5 297.4 L515.4 294.1 L516.4 290.9 L517.5 287.6 L518.8 284.4 L520.1 281.1 L521.6 277.8 L523.2 274.6 L524.9 271.3 L526.7 268.1 L528.6 264.8 L530.7 261.6 L532.9 258.3 L535.1 255 L537.5 251.8 L540 248.5 L542.6 245.3 L545.3 242 L548.2 238.8 L551.1 235.5 L554.1 232.2 L557.3 229 L560.5 225.7 L563.9 222.5 L567.3 219.2 L570.9 215.9 L574.6 212.7 L578.3 209.4 L582.2 206.2 L586.1 202.9 L590.2 199.7 L594.3 196.4 L598.6 193.1 L602.9 189.9 L607.3 186.6 L611.9 183.4 L616.5 180.1 L621.2 176.8 L625.9 173.6 L630.8 170.3 L635.7 167.1 L640.8 163.8 L645.9 160.6 L651 157.3 L656.3 154 L661.6 150.8 L667 147.5 L672.5 144.3 L678.1 141 L683.7 137.8 L689.4 134.5 L695.1 131.2 L700.9 128 L706.8 124.7 L712.7 121.5 L718.7 118.2 L724.8 114.9 L730.9 111.7 L737 108.4 L743.2 105.2 L749.5 101.9 L755.7 98.7 L762.1 95.4 L768.5 92.1 L774.9 88.9 L781.4 85.6 L787.9 82.4 L794.4 79.1 L801 75.8 L807.5 72.6 L814.2 69.3 L820.8 66.1 L827.5 62.8 L834.2 59.6 L840.9 56.3 L847.7 53 L854.4 49.8 L861.2 46.5 L868 43.3 L874.8 40 L881.6 36.8 L888.4 33.5 L895.2 30.2 L902 27"/>
<path d="M902 613.4 L894.3 610.2 L886.7 606.9 L879 603.6 L871.4 600.4 L863.7 597.1 L856.1 593.9 L848.5 590.6 L840.9 587.4 L833.3 584.1 L825.7 580.8 L818.2 577.6 L810.7 574.3 L803.2 571.1 L795.7 567.8 L788.3 564.5 L780.9 561.3 L773.6 558 L766.3 554.8 L759 551.5 L751.8 548.3 L744.6 545 L737.5 541.7 L730.4 538.5 L723.4 535.2 L716.4 532 L709.5 528.7 L702.6 525.5 L695.8 522.2 L689.1 518.9 L682.4 515.7 L675.8 512.4 L669.2 509.2 L662.8 505.9 L656.4 502.6 L650.1 499.4 L643.8 496.1 L637.7 492.9 L631.6 489.6 L625.6 486.4 L619.7 483.1 L613.8 479.8 L608.1 476.6 L602.5 473.3 L596.9 470.1 L591.4 466.8 L586 463.6 L580.8 460.3 L575.6 457 L570.5 453.8 L565.5 450.5 L560.7 447.3 L555.9 444 L551.2 440.7 L546.7 437.5 L542.2 434.2 L537.9 431 L533.6 427.7 L529.5 424.5 L525.5 421.2 L521.6 417.9 L517.8 414.7 L514.2 411.4 L510.6 408.2 L507.2 404.9 L503.9 401.6 L500.8 398.4 L497.7 395.1 L494.8 391.9 L492 388.6 L489.3 385.4 L486.7 382.1 L484.3 378.8 L482 375.6 L479.8 372.3 L477.7 369.1 L475.8 365.8 L474 362.6 L472.4 359.3 L470.8 356 L469.5 352.8 L468.2 349.5 L467.1 346.3 L466.1 343 L465.2 339.7 L464.4 336.5 L463.8 333.2 L463.4 330 L463 326.7 L462.8 323.5 L462.8 320.2 L462.8 316.9 L463 313.7 L463.4 310.4 L463.8 307.2 L464.4 303.9 L465.2 300.7 L466.1 297.4 L467.1 294.1 L468.2 290.9 L469.5 287.6 L470.8 284.4 L472.4 281.1 L474 277.8 L475.8 274.6 L477.7 271.3 L479.8 268.1 L482 264.8 L484.3 261.6 L486.7 258.3 L489.3 255 L492 251.8 L494.8 248.5 L497.7 245.3 L500.8 242 L503.9 238.8 L507.2 235.5 L510.6 232.2 L514.2 229 L517.8 225.7 L521.6 222.5 L525.5 219.2 L529.5 215.9 L533.6 212.7 L537.9 209.4 L542.2 206.2 L546.7 202.9 L551.2 199.7 L555.9 196.4 L560.7 193.1 L565.5 189.9 L570.5 186.6 L575.6 183.4 L580.8 180.1 L586 176.8 L591.4 173.6 L596.9 170.3 L602.5 167.1 L608.1 163.8 L613.8 160.6 L619.7 157.3 L625.6 154 L631.6 150.8 L637.7 147.5 L643.8 144.3 L650.1 141 L656.4 137.8 L662.8 134.5 L669.2 131.2 L675.8 128 L682.4 124.7 L689.1 121.5 L695.8 118.2 L702.6 114.9 L709.5 111.7 L716.4 108.4 L723.4 105.2 L730.4 101.9 L737.5 98.7 L744.6 95.4 L751.8 92.1 L759 88.9 L766.3 85.6 L773.6 82.4 L780.9 79.1 L788.3 75.8 L795.7 72.6 L803.2 69.3 L810.7 66.1 L818.2 62.8 L825.7 59.6 L833.3 56.3 L840.9 53 L848.5 49.8 L856.1 46.5 L863.7 43.3 L871.4 40 L879 36.8 L886.7 33.5 L894.3 30.2 L902 27"/>
<path d="M902 613.4 L893.5 610.2 L885 606.9 L876.5 603.6 L868 600.4 L859.5 597.1 L851 593.9 L842.5 590.6 L834.1 587.4 L825.7 584.1 L817.3 580.8 L808.9 577.6 L800.5 574.3 L792.2 571.1 L783.9 567.8 L775.7 564.5 L767.5 561.3 L759.3 558 L751.2 554.8 L743.1 551.5 L735.1 548.3 L727.1 545 L719.2 541.7 L711.3 538.5 L703.5 535.2 L695.8 532 L688.1 528.7 L680.4 525.5 L672.9 522.2 L665.4 518.9 L658 515.7 L650.6 512.4 L643.4 509.2 L636.2 505.9 L629.1 502.6 L622.1 499.4 L615.1 496.1 L608.3 492.9 L601.5 489.6 L594.9 486.4 L588.3 483.1 L581.8 479.8 L575.4 476.6 L569.2 473.3 L563 470.1 L556.9 466.8 L550.9 463.6 L545.1 460.3 L539.3 457 L533.7 453.8 L528.2 450.5 L522.7 447.3 L517.4 444 L512.2 440.7 L507.2 437.5 L502.2 434.2 L497.4 431 L492.7 427.7 L488.1 424.5 L483.7 421.2 L479.4 417.9 L475.2 414.7 L471.1 411.4 L467.2 408.2 L463.4 404.9 L459.7 401.6 L456.2 398.4 L452.8 395.1 L449.5 391.9 L446.4 388.6 L443.4 385.4 L440.6 382.1 L437.9 378.8 L435.3 375.6 L432.9 372.3 L430.6 369.1 L428.5 365.8 L426.5 362.6 L424.6 359.3 L422.9 356 L421.4 352.8 L420 349.5 L418.7 346.3 L417.6 343 L416.6 339.7 L415.8 336.5 L415.2 333.2 L414.6 330 L414.3 326.7 L414 323.5 L414 320.2 L414 316.9 L414.3 313.7 L414.6 310.4 L415.2 307.2 L415.8 303.9 L416.6 300.7 L417.6 297.4 L418.7 294.1 L420 290.9 L421.4 287.6 L422.9 284.4 L424.6 281.1 L426.5 277.8 L428.5 274.6 L430.6 271.3 L432.9 268.1 L435.3 264.8 L437.9 261.6 L440.6 258.3 L443.4 255 L446.4 251.8 L449.5 248.5 L452.8 245.3 L456.2 242 L459.7 238.8 L463.4 235.5 L467.2 232.2 L471.1 229 L475.2 225.7 L479.4 222.5 L483.7 219.2 L488.1 215.9 L492.7 212.7 L497.4 209.4 L502.2 206.2 L507.2 202.9 L512.2 199.7 L517.4 196.4 L522.7 193.1 L528.2 189.9 L533.7 186.6 L539.3 183.4 L545.1 180.1 L550.9 176.8 L556.9 173.6 L563 170.3 L569.2 167.1 L575.4 163.8 L581.8 160.6 L588.3 157.3 L594.9 154 L601.5 150.8 L608.3 147.5 L615.1 144.3 L622.1 141 L629.1 137.8 L636.2 134.5 L643.4 131.2 L650.6 128 L658 124.7 L665.4 121.5 L672.9 118.2 L680.4 114.9 L688.1 111.7 L695.8 108.4 L703.5 105.2 L711.3 101.9 L719.2 98.7 L727.1 95.4 L735.1 92.1 L743.1 88.9 L751.2 85.6 L759.3 82.4 L767.5 79.1 L775.7 75.8 L783.9 72.6 L792.2 69.3 L800.5 66.1 L808.9 62.8 L817.3 59.6 L825.7 56.3 L834.1 53 L842.5 49.8 L851 46.5 L859.5 43.3 L868 40 L876.5 36.8 L885 33.5 L893.5 30.2 L902 27"/>
<path d="M902 613.4 L892.6 610.2 L883.3 606.9 L873.9 603.6 L864.6 600.4 L855.2 597.1 L845.9 593.9 L836.6 590.6 L827.3 587.4 L818 584.1 L808.8 580.8 L799.6 577.6 L790.4 574.3 L781.2 571.1 L772.1 567.8 L763.1 564.5 L754 561.3 L745 558 L736.1 554.8 L727.2 551.5 L718.4 548.3 L709.6 545 L700.9 541.7 L692.2 538.5 L683.7 535.2 L675.1 532 L666.7 528.7 L658.3 525.5 L650 522.2 L641.7 518.9 L633.6 515.7 L625.5 512.4 L617.5 509.2 L609.6 505.9 L601.8 502.6 L594.1 499.4 L586.5 496.1 L578.9 492.9 L571.5 489.6 L564.2 486.4 L556.9 483.1 L549.8 479.8 L542.8 476.6 L535.9 473.3 L529.1 470.1 L522.4 466.8 L515.8 463.6 L509.4 460.3 L503.1 457 L496.9 453.8 L490.8 450.5 L484.8 447.3 L479 444 L473.3 440.7 L467.7 437.5 L462.3 434.2 L456.9 431 L451.8 427.7 L446.7 424.5 L441.8 421.2 L437.1 417.9 L432.5 414.7 L428 411.4 L423.7 408.2 L419.5 404.9 L415.5 401.6 L411.6 398.4 L407.8 395.1 L404.3 391.9 L400.8 388.6 L397.5 385.4 L394.4 382.1 L391.4 378.8 L388.6 375.6 L386 372.3 L383.5 369.1 L381.1 365.8 L378.9 362.6 L376.9 359.3 L375 356 L373.3 352.8 L371.8 349.5 L370.4 346.3 L369.2 343 L368.1 339.7 L367.2 336.5 L366.5 333.2 L365.9 330 L365.5 326.7 L365.3 323.5 L365.2 320.2 L365.3 316.9 L365.5 313.7 L365.9 310.4 L366.5 307.2 L367.2 303.9 L368.1 300.7 L369.2 297.4 L370.4 294.1 L371.8 290.9 L373.3 287.6 L375 284.4 L376.9 281.1 L378.9 277.8 L381.1 274.6 L383.5 271.3 L386 268.1 L388.6 264.8 L391.4 261.6 L394.4 258.3 L397.5 255 L400.8 251.8 L404.3 248.5 L407.8 245.3 L411.6 242 L415.5 238.8 L419.5 235.5 L423.7 232.2 L428 229 L432.5 225.7 L437.1 222.5 L441.8 219.2 L446.7 215.9 L451.8 212.7 L456.9 209.4 L462.3 206.2 L467.7 202.9 L473.3 199.7 L479 196.4 L484.8 193.1 L490.8 189.9 L496.9 186.6 L503.1 183.4 L509.4 180.1 L515.8 176.8 L522.4 173.6 L529.1 170.3 L535.9 167.1 L542.8 163.8 L549.8 160.6 L556.9 157.3 L564.2 154 L571.5 150.8 L578.9 147.5 L586.5 144.3 L594.1 141 L601.8 137.8 L609.6 134.5 L617.5 131.2 L625.5 128 L633.6 124.7 L641.7 121.5 L650 118.2 L658.3 114.9 L666.7 111.7 L675.1 108.4 L683.7 105.2 L692.2 101.9 L700.9 98.7 L709.6 95.4 L718.4 92.1 L727.2 88.9 L736.1 85.6 L745 82.4 L754 79.1 L763.1 75.8 L772.1 72.6 L781.2 69.3 L790.4 66.1 L799.6 62.8 L808.8 59.6 L818 56.3 L827.3 53 L836.6 49.8 L845.9 46.5 L855.2 43.3 L864.6 40 L873.9 36.8 L883.3 33.5 L892.6 30.2 L902 27"/>
<path d="M902 613.4 L891.8 610.2 L881.6 606.9 L871.4 603.6 L861.1 600.4 L851 597.1 L840.8 593.9 L830.6 590.6 L820.5 587.4 L810.4 584.1 L800.3 580.8 L790.3 577.6 L780.2 574.3 L770.3 571.1 L760.3 567.8 L750.4 564.5 L740.6 561.3 L730.8 558 L721 554.8 L711.3 551.5 L701.7 548.3 L692.1 545 L682.6 541.7 L673.2 538.5 L663.8 535.2 L654.5 532 L645.3 528.7 L636.1 525.5 L627.1 522.2 L618.1 518.9 L609.2 515.7 L600.4 512.4 L591.7 509.2 L583 505.9 L574.5 502.6 L566.1 499.4 L557.8 496.1 L549.6 492.9 L541.5 489.6 L533.5 486.4 L525.6 483.1 L517.8 479.8 L510.1 476.6 L502.6 473.3 L495.2 470.1 L487.9 466.8 L480.7 463.6 L473.7 460.3 L466.8 457 L460 453.8 L453.4 450.5 L446.9 447.3 L440.5 444 L434.3 440.7 L428.2 437.5 L422.3 434.2 L416.5 431 L410.8 427.7 L405.4 424.5 L400 421.2 L394.8 417.9 L389.8 414.7 L384.9 411.4 L380.2 408.2 L375.6 404.9 L371.2 401.6 L367 398.4 L362.9 395.1 L359 391.9 L355.3 388.6 L351.7 385.4 L348.3 382.1 L345 378.8 L342 375.6 L339.1 372.3 L336.3 369.1 L333.8 365.8 L331.4 362.6 L329.2 359.3 L327.1 356 L325.3 352.8 L323.6 349.5 L322.1 346.3 L320.7 343 L319.6 339.7 L318.6 336.5 L317.8 333.2 L317.2 330 L316.7 326.7 L316.5 323.5 L316.4 320.2 L316.5 316.9 L316.7 313.7 L317.2 310.4 L317.8 307.2 L318.6 303.9 L319.6 300.7 L320.7 297.4 L322.1 294.1 L323.6 290.9 L325.3 287.6 L327.1 284.4 L329.2 281.1 L331.4 277.8 L333.8 274.6 L336.3 271.3 L339.1 268.1 L342 264.8 L345 261.6 L348.3 258.3 L351.7 255 L355.3 251.8 L359 248.5 L362.9 245.3 L367 242 L371.2 238.8 L375.6 235.5 L380.2 232.2 L384.9 229 L389.8 225.7 L394.8 222.5 L400 219.2 L405.4 215.9 L410.8 212.7 L416.5 209.4 L422.3 206.2 L428.2 202.9 L434.3 199.7 L440.5 196.4 L446.9 193.1 L453.4 189.9 L460 186.6 L466.8 183.4 L473.7 180.1 L480.7 176.8 L487.9 173.6 L495.2 170.3 L502.6 167.1 L510.1 163.8 L517.8 160.6 L525.6 157.3 L533.5 154 L541.5 150.8 L549.6 147.5 L557.8 144.3 L566.1 141 L574.5 137.8 L583 134.5 L591.7 131.2 L600.4 128 L609.2 124.7 L618.1 121.5 L627.1 118.2 L636.1 114.9 L645.3 111.7 L654.5 108.4 L663.8 105.2 L673.2 101.9 L682.6 98.7 L692.1 95.4 L701.7 92.1 L711.3 88.9 L721 85.6 L730.8 82.4 L740.6 79.1 L750.4 75.8 L760.3 72.6 L770.3 69.3 L780.2 66.1 L790.3 62.8 L800.3 59.6 L810.4 56.3 L820.5 53 L830.6 49.8 L840.8 46.5 L851 43.3 L861.1 40 L871.4 36.8 L881.6 33.5 L891.8 30.2 L902 27"/>
<path d="M750.4 564.5 H1053.6"/>
<path d="M609.2 515.7 H1194.8"/>
<path d="M487.9 466.8 H1316.1"/>
<path d="M394.8 417.9 H1409.2"/>
<path d="M336.3 369.1 H1467.7"/>
<path d="M316.4 320.2 H1487.6"/>
<path d="M336.3 271.3 H1467.7"/>
<path d="M394.8 222.5 H1409.2"/>
<path d="M487.9 173.6 H1316.1"/>
<path d="M609.2 124.7 H1194.8"/>
<path d="M750.4 75.8 H1053.6"/>
</g>
<g fill="none" stroke="#fff" stroke-opacity="0.25" stroke-width="1.39" stroke-dasharray="1.39 2.29"><path d="M651.7 118.3 L647.6 119.9 L643.4 121.5 L639.3 123.1 L635.3 124.7 L631.2 126.3 L627.2 128 L623.1 129.6 L619.1 131.2 L615.1 132.8 L611.2 134.4 L607.2 136 L603.3 137.6 L599.4 139.2 L595.6 140.8 L591.7 142.4 L587.9 144.1 L584.1 145.7 L580.3 147.3 L576.6 148.9 L572.8 150.5 L569.1 152.1 L565.4 153.7 L561.8 155.3 L558.1 156.9 L554.5 158.6 L551 160.2 L547.4 161.8 L543.9 163.4 L540.4 165 L536.9 166.6 L533.4 168.2 L530 169.8 L526.6 171.4 L523.3 173.1 L519.9 174.7 L516.6 176.3 L513.3 177.9 L510.1 179.5 L506.9 181.1 L503.7 182.7 L500.5 184.3 L497.4 185.9 L494.3 187.6 L491.2 189.2 L488.2 190.8 L485.2 192.4 L482.2 194 L479.2 195.6 L476.3 197.2 L473.4 198.8 L470.6 200.4 L467.8 202.1 L465 203.7 L462.2 205.3 L459.5 206.9 L456.8 208.5 L454.1 210.1 L451.5 211.7 L448.9 213.3 L446.4 214.9 L443.8 216.6 L441.4 218.2 L438.9 219.8 L436.5 221.4 L434.1 223 L431.7 224.6 L429.4 226.2 L427.1 227.8 L424.9 229.4 L422.7 231.1 L420.5 232.7 L418.4 234.3 L416.3 235.9 L414.2 237.5 L412.2 239.1 L410.2 240.7 L408.2 242.3 L406.3 243.9 L404.4 245.6 L402.6 247.2 L400.8 248.8 L399 250.4 L397.3 252 L395.6 253.6 L393.9 255.2 L392.3 256.8 L390.7 258.5 L389.2 260.1 L387.7 261.7 L386.2 263.3 L384.8 264.9 L383.4 266.5 L382 268.1 L380.7 269.7 L379.4 271.3 L378.2 273 L377 274.6"/><path d="M700 124.2 L697.2 125.8 L694.3 127.4 L691.5 129 L688.7 130.6 L685.9 132.2 L683.1 133.8 L680.4 135.4 L677.6 137 L674.9 138.6 L672.2 140.2 L669.5 141.8 L666.8 143.5 L664.2 145.1 L661.6 146.7 L658.9 148.3 L656.3 149.9 L653.7 151.5 L651.2 153.1 L648.6 154.7 L646.1 156.3 L643.6 157.9 L641.1 159.5 L638.6 161.1 L636.2 162.7 L633.7 164.3 L631.3 165.9 L628.9 167.6 L626.5 169.2 L624.2 170.8 L621.8 172.4 L619.5 174 L617.2 175.6 L615 177.2 L612.7 178.8 L610.5 180.4 L608.3 182 L606.1 183.6 L603.9 185.2 L601.8 186.9 L599.7 188.5 L597.6 190.1 L595.5 191.7 L593.4 193.3 L591.4 194.9 L589.4 196.5 L587.4 198.1 L585.5 199.7 L583.5 201.3 L581.6 202.9 L579.7 204.5 L577.9 206.2 L576 207.8 L574.2 209.4 L572.4 211 L570.6 212.6 L568.9 214.2 L567.2 215.8 L565.5 217.4 L563.8 219 L562.2 220.6 L560.5 222.2 L558.9 223.9 L557.4 225.5 L555.8 227.1 L554.3 228.7 L552.8 230.3 L551.4 231.9 L549.9 233.5 L548.5 235.1 L547.1 236.7 L545.8 238.3 L544.4 239.9 L543.1 241.6 L541.8 243.2 L540.6 244.8 L539.4 246.4 L538.2 248 L537 249.6 L535.8 251.2 L534.7 252.8 L533.6 254.4 L532.6 256 L531.5 257.7 L530.5 259.3 L529.5 260.9 L528.6 262.5 L527.7 264.1 L526.8 265.7 L525.9 267.3 L525 268.9 L524.2 270.5 L523.4 272.1 L522.7 273.8 L522 275.4 L521.3 277 L520.6 278.6 L519.9 280.2"/><path d="M710 132 L707.7 133.6 L705.3 135.2 L703 136.8 L700.7 138.4 L698.5 140 L696.2 141.6 L693.9 143.2 L691.7 144.8 L689.5 146.3 L687.3 147.9 L685.1 149.5 L682.9 151.1 L680.7 152.7 L678.6 154.3 L676.4 155.9 L674.3 157.5 L672.2 159.1 L670.1 160.7 L668.1 162.3 L666 163.9 L664 165.5 L662 167.1 L660 168.7 L658 170.3 L656 171.9 L654.1 173.5 L652.2 175.1 L650.3 176.7 L648.4 178.3 L646.5 179.9 L644.6 181.5 L642.8 183.1 L641 184.7 L639.2 186.3 L637.4 187.9 L635.7 189.5 L633.9 191.1 L632.2 192.7 L630.5 194.4 L628.8 196 L627.2 197.6 L625.5 199.2 L623.9 200.8 L622.3 202.4 L620.7 204 L619.2 205.6 L617.6 207.2 L616.1 208.8 L614.6 210.4 L613.1 212 L611.7 213.6 L610.3 215.2 L608.9 216.8 L607.5 218.4 L606.1 220 L604.8 221.6 L603.4 223.2 L602.1 224.8 L600.8 226.4 L599.6 228 L598.4 229.6 L597.1 231.2 L596 232.8 L594.8 234.5 L593.6 236.1 L592.5 237.7 L591.4 239.3 L590.3 240.9 L589.3 242.5 L588.3 244.1 L587.3 245.7 L586.3 247.3 L585.3 248.9 L584.4 250.5 L583.5 252.1 L582.6 253.7 L581.7 255.3 L580.9 256.9 L580.1 258.5 L579.3 260.1 L578.5 261.7 L577.7 263.4 L577 265 L576.3 266.6 L575.6 268.2 L575 269.8 L574.4 271.4 L573.8 273 L573.2 274.6 L572.6 276.2 L572.1 277.8 L571.6 279.4 L571.1 281 L570.7 282.6 L570.2 284.2 L569.8 285.8 L569.4 287.4"/><path d="M740 158.3 L738.8 159.9 L737.7 161.4 L736.6 163 L735.4 164.5 L734.3 166.1 L733.2 167.6 L732.1 169.2 L731.1 170.8 L730 172.3 L728.9 173.9 L727.9 175.5 L726.9 177 L725.8 178.6 L724.8 180.1 L723.8 181.7 L722.8 183.3 L721.9 184.9 L720.9 186.4 L719.9 188 L719 189.6 L718.1 191.1 L717.2 192.7 L716.3 194.3 L715.4 195.8 L714.5 197.4 L713.6 199 L712.8 200.6 L711.9 202.1 L711.1 203.7 L710.3 205.3 L709.5 206.9 L708.7 208.4 L708 210 L707.2 211.6 L706.5 213.2 L705.7 214.8 L705 216.3 L704.3 217.9 L703.6 219.5 L703 221.1 L702.3 222.6 L701.7 224.2 L701 225.8 L700.4 227.4 L699.8 229 L699.2 230.6 L698.6 232.1 L698.1 233.7 L697.5 235.3 L697 236.9 L696.5 238.5 L696 240 L695.5 241.6 L695 243.2 L694.6 244.8 L694.1 246.4 L693.7 248 L693.3 249.5 L692.9 251.1 L692.5 252.7 L692.2 254.3 L691.8 255.9 L691.5 257.5 L691.1 259.1 L690.8 260.6 L690.5 262.2 L690.3 263.8 L690 265.4 L689.8 267 L689.5 268.6 L689.3 270.1 L689.1 271.7 L688.9 273.3 L688.8 274.9 L688.6 276.5 L688.5 278.1 L688.3 279.7 L688.2 281.3 L688.1 282.8 L688.1 284.4 L688 286 L688 287.6 L687.9 289.2 L687.9 290.8 L687.9 292.4 L687.9 294 L688 295.5 L688 297.1 L688.1 298.7 L688.1 300.3 L688.2 301.9 L688.3 303.5 L688.5 305.1 L688.6 306.7 L688.8 308.2 L688.9 309.8 L689.1 311.4"/><path d="M765 168.3 L764.3 169.8 L763.5 171.4 L762.8 172.9 L762.1 174.5 L761.4 176 L760.7 177.6 L760 179.2 L759.3 180.7 L758.6 182.3 L758 183.8 L757.3 185.4 L756.7 186.9 L756.1 188.5 L755.4 190 L754.8 191.6 L754.2 193.2 L753.6 194.7 L753 196.3 L752.5 197.9 L751.9 199.4 L751.3 201 L750.8 202.5 L750.3 204.1 L749.8 205.7 L749.2 207.2 L748.7 208.8 L748.2 210.4 L747.8 211.9 L747.3 213.5 L746.8 215.1 L746.4 216.7 L746 218.2 L745.5 219.8 L745.1 221.4 L744.7 222.9 L744.3 224.5 L743.9 226.1 L743.6 227.7 L743.2 229.2 L742.8 230.8 L742.5 232.4 L742.2 233.9 L741.9 235.5 L741.6 237.1 L741.3 238.7 L741 240.2 L740.7 241.8 L740.4 243.4 L740.2 245 L740 246.5 L739.7 248.1 L739.5 249.7 L739.3 251.3 L739.1 252.9 L739 254.4 L738.8 256 L738.6 257.6 L738.5 259.2 L738.4 260.7 L738.2 262.3 L738.1 263.9 L738 265.5 L737.9 267.1 L737.9 268.6 L737.8 270.2 L737.7 271.8 L737.7 273.4 L737.7 275 L737.7 276.5 L737.7 278.1 L737.7 279.7 L737.7 281.3 L737.7 282.9 L737.8 284.4 L737.8 286 L737.9 287.6 L738 289.2 L738 290.8 L738.2 292.3 L738.3 293.9 L738.4 295.5 L738.5 297.1 L738.7 298.7 L738.8 300.2 L739 301.8 L739.2 303.4 L739.4 305 L739.6 306.6 L739.8 308.1 L740 309.7 L740.3 311.3 L740.5 312.9 L740.8 314.5 L741.1 316.1 L741.4 317.6 L741.7 319.2 L742 320.8"/><path d="M780 168.3 L779.3 169.9 L778.6 171.4 L777.9 173 L777.2 174.6 L776.5 176.2 L775.9 177.7 L775.2 179.3 L774.6 180.9 L773.9 182.4 L773.3 184 L772.7 185.6 L772.1 187.2 L771.5 188.7 L770.9 190.3 L770.3 191.9 L769.7 193.5 L769.1 195.1 L768.6 196.6 L768 198.2 L767.5 199.8 L767 201.4 L766.4 203 L765.9 204.5 L765.4 206.1 L764.9 207.7 L764.4 209.3 L764 210.9 L763.5 212.4 L763 214 L762.6 215.6 L762.2 217.2 L761.7 218.8 L761.3 220.4 L760.9 221.9 L760.5 223.5 L760.1 225.1 L759.8 226.7 L759.4 228.3 L759.1 229.9 L758.7 231.5 L758.4 233 L758.1 234.6 L757.7 236.2 L757.4 237.8 L757.2 239.4 L756.9 241 L756.6 242.6 L756.3 244.2 L756.1 245.7 L755.8 247.3 L755.6 248.9 L755.4 250.5 L755.2 252.1 L755 253.7 L754.8 255.3 L754.6 256.9 L754.5 258.5 L754.3 260 L754.2 261.6 L754 263.2 L753.9 264.8 L753.8 266.4 L753.7 268 L753.6 269.6 L753.5 271.2 L753.5 272.8 L753.4 274.4 L753.4 275.9 L753.3 277.5 L753.3 279.1 L753.3 280.7 L753.3 282.3 L753.3 283.9 L753.3 285.5 L753.3 287.1 L753.4 288.7 L753.4 290.3 L753.5 291.8 L753.5 293.4 L753.6 295 L753.7 296.6 L753.8 298.2 L753.9 299.8 L754.1 301.4 L754.2 303 L754.3 304.6 L754.5 306.2 L754.7 307.8 L754.8 309.4 L755 310.9 L755.2 312.5 L755.4 314.1 L755.7 315.7 L755.9 317.3 L756.1 318.9 L756.4 320.5 L756.7 322.1"/><path d="M751.7 115.8 L750.7 117.1 L749.6 118.4 L748.6 119.7 L747.5 121.1 L746.4 122.4 L745.4 123.7 L744.3 125.1 L743.2 126.5 L742.1 127.8 L741 129.2 L740 130.6 L738.9 132 L737.8 133.4 L736.7 134.8 L735.7 136.2 L734.6 137.6 L733.5 139 L732.4 140.4 L731.4 141.8 L730.3 143.3 L729.3 144.7 L728.2 146.1 L727.2 147.6 L726.1 149 L725.1 150.5 L724 151.9 L723 153.4 L722 154.9 L721 156.3 L720 157.8 L719 159.3 L718 160.7 L717 162.2 L716.1 163.7 L715.1 165.2 L714.2 166.7 L713.2 168.1 L712.3 169.6 L711.4 171.1 L710.4 172.6 L709.5 174.1 L708.6 175.6 L707.8 177.1 L706.9 178.6 L706 180.1 L705.2 181.6 L704.3 183.2 L703.5 184.7 L702.7 186.2 L701.9 187.7 L701.1 189.2 L700.3 190.7 L699.5 192.2 L698.8 193.8 L698 195.3 L697.3 196.8 L696.6 198.3 L695.9 199.9 L695.2 201.4 L694.5 202.9 L693.8 204.5 L693.2 206 L692.5 207.5 L691.9 209.1 L691.3 210.6 L690.7 212.1 L690.1 213.7 L689.5 215.2 L688.9 216.7 L688.4 218.3 L687.8 219.8 L687.3 221.4 L686.8 222.9 L686.3 224.4 L685.8 226 L685.4 227.5 L684.9 229.1 L684.5 230.6 L684.1 232.2 L683.7 233.7 L683.3 235.3 L682.9 236.8 L682.5 238.4 L682.2 239.9 L681.8 241.5 L681.5 243 L681.2 244.6 L680.9 246.1 L680.7 247.7 L680.4 249.2 L680.2 250.8 L679.9 252.4 L679.7 253.9 L679.5 255.5 L679.3 257 L679.2 258.6"/><path d="M791.7 96.7 L788.8 98.1 L785.8 99.5 L782.9 101 L779.9 102.4 L777 103.8 L774 105.3 L771.1 106.7 L768.1 108.2 L765.2 109.6 L762.2 111.1 L759.3 112.6 L756.3 114.1 L753.4 115.6 L750.4 117 L747.5 118.5 L744.5 120 L741.6 121.5 L738.7 123 L735.7 124.5 L732.8 126 L729.9 127.6 L727 129.1 L724.1 130.6 L721.2 132.1 L718.3 133.6 L715.4 135.2 L712.6 136.7 L709.7 138.2 L706.9 139.8 L704 141.3 L701.2 142.8 L698.4 144.4 L695.6 145.9 L692.8 147.5 L690 149 L687.2 150.6 L684.5 152.1 L681.7 153.7 L679 155.2 L676.3 156.8 L673.6 158.3 L670.9 159.9 L668.2 161.4 L665.5 163 L662.9 164.6 L660.2 166.1 L657.6 167.7 L655 169.2 L652.4 170.8 L649.9 172.4 L647.3 173.9 L644.8 175.5 L642.2 177.1 L639.7 178.6 L637.3 180.2 L634.8 181.8 L632.3 183.3 L629.9 184.9 L627.5 186.5 L625.1 188.1 L622.7 189.6 L620.4 191.2 L618 192.8 L615.7 194.4 L613.4 195.9 L611.1 197.5 L608.9 199.1 L606.6 200.7 L604.4 202.2 L602.2 203.8 L600 205.4 L597.9 207 L595.7 208.6 L593.6 210.1 L591.5 211.7 L589.5 213.3 L587.4 214.9 L585.4 216.5 L583.4 218.1 L581.4 219.6 L579.4 221.2 L577.5 222.8 L575.6 224.4 L573.7 226 L571.8 227.6 L570 229.2 L568.2 230.7 L566.4 232.3 L564.6 233.9 L562.9 235.5 L561.1 237.1 L559.5 238.7 L557.8 240.3 L556.1 241.9 L554.5 243.4 L552.9 245 L551.3 246.6 L549.8 248.2 L548.3 249.8 L546.8 251.4 L545.3 253 L543.8 254.6 L542.4 256.2 L541 257.7 L539.7 259.3 L538.3 260.9 L537 262.5 L535.7 264.1 L534.5 265.7 L533.2 267.3 L532 268.9 L530.8 270.5 L529.7 272.1 L528.5 273.7 L527.4 275.3 L526.4 276.8 L525.3 278.4 L524.3 280 L523.3 281.6 L522.3 283.2 L521.4 284.8 L520.5 286.4 L519.6 288 L518.7 289.6 L517.9 291.2 L517.1 292.8 L516.4 294.4 L515.6 296 L514.9 297.6 L514.2 299.1 L513.6 300.7 L512.9 302.3 L512.3 303.9 L511.8 305.5 L511.2 307.1 L510.7 308.7 L510.2 310.3 L509.7 311.9 L509.3 313.5 L508.9 315.1 L508.5 316.7 L508.2 318.3 L507.9 319.9 L507.6 321.5 L507.3 323 L507.1 324.6 L506.9 326.2 L506.7 327.8 L506.6 329.4 L506.5 331 L506.4 332.6 L506.3 334.2 L506.3 335.8 L506.3 337.4 L506.3 339 L506.4 340.6 L506.5 342.2 L506.6 343.8 L506.7 345.4 L506.9 347 L507.1 348.5 L507.4 350.1 L507.6 351.7 L507.9 353.3 L508.2 354.9 L508.6 356.5 L508.9 358.1 L509.3 359.7 L509.8 361.3 L510.2 362.9 L510.7 364.5 L511.2 366.1 L511.8 367.7 L512.4 369.2 L513 370.8 L513.6 372.4 L514.3 374 L514.9 375.6 L515.7 377.2 L516.4 378.8 L517.2 380.4 L518 382 L518.8 383.6 L519.6 385.2 L520.5 386.7 L521.4 388.3 L522.4 389.9 L523.3 391.5 L524.3 393.1 L525.3 394.7 L526.4 396.3 L527.5 397.9 L528.6 399.5 L529.7 401 L530.8 402.6 L532 404.2 L533.2 405.8 L534.5 407.4 L535.7 409 L537 410.6 L538.3 412.2"/><path d="M796.7 103.3 L794 104.5 L791.3 105.7 L788.6 107 L785.9 108.2 L783.2 109.5 L780.5 110.7 L777.7 112 L775 113.3 L772.2 114.6 L769.5 115.9 L766.7 117.2 L763.9 118.6 L761.1 119.9 L758.4 121.3 L755.6 122.6 L752.8 124 L750 125.4 L747.2 126.7 L744.4 128.1 L741.6 129.5 L738.8 130.9 L736 132.3 L733.2 133.7 L730.4 135.1 L727.6 136.6 L724.8 138 L722 139.4 L719.2 140.8 L716.5 142.3 L713.7 143.7 L710.9 145.2 L708.2 146.6 L705.4 148.1 L702.7 149.5 L699.9 151 L697.2 152.5 L694.5 153.9 L691.8 155.4 L689 156.9 L686.3 158.4 L683.7 159.9 L681 161.3 L678.3 162.8 L675.7 164.3 L673 165.8 L670.4 167.3 L667.8 168.8 L665.1 170.3 L662.5 171.8 L660 173.3 L657.4 174.8 L654.8 176.3 L652.3 177.8 L649.8 179.4 L647.2 180.9 L644.7 182.4 L642.2 183.9 L639.8 185.4 L637.3 186.9 L634.9 188.5 L632.4 190 L630 191.5 L627.6 193 L625.3 194.6 L622.9 196.1 L620.6 197.6 L618.2 199.2 L615.9 200.7 L613.6 202.2 L611.4 203.8 L609.1 205.3 L606.9 206.8 L604.7 208.4 L602.5 209.9 L600.3 211.5 L598.1 213 L596 214.5 L593.9 216.1 L591.8 217.6 L589.7 219.2 L587.7 220.7 L585.6 222.3 L583.6 223.8 L581.6 225.4 L579.6 226.9 L577.7 228.5 L575.8 230 L573.9 231.6 L572 233.1 L570.1 234.7 L568.3 236.2 L566.4 237.8 L564.7 239.3 L562.9 240.9 L561.1 242.5 L559.4 244 L557.7 245.6 L556 247.1 L554.4 248.7 L552.7 250.2 L551.1 251.8 L549.6 253.4 L548 254.9 L546.5 256.5 L544.9 258 L543.5 259.6 L542 261.2 L540.6 262.7 L539.2 264.3 L537.8 265.9 L536.4 267.4 L535.1 269 L533.8 270.5 L532.5 272.1 L531.2 273.7 L530 275.2 L528.8 276.8 L527.6 278.4 L526.5 279.9 L525.3 281.5 L524.2 283.1 L523.2 284.6 L522.1 286.2 L521.1 287.8 L520.1 289.3 L519.1 290.9 L518.2 292.5 L517.3 294 L516.4 295.6 L515.6 297.2 L514.7 298.7 L513.9 300.3 L513.1 301.9 L512.4 303.4 L511.7 305 L511 306.6 L510.3 308.1 L509.7 309.7 L509.1 311.3 L508.5 312.9 L507.9 314.4 L507.4 316 L506.9 317.6 L506.4 319.1 L506 320.7 L505.6 322.3 L505.2 323.8 L504.8 325.4 L504.5 327 L504.2 328.5 L503.9 330.1 L503.7 331.7 L503.4 333.2 L503.2 334.8 L503.1 336.4 L502.9 338 L502.8 339.5 L502.8 341.1 L502.7 342.7 L502.7 344.2 L502.7 345.8 L502.7 347.4 L502.8 348.9 L502.9 350.5 L503 352.1 L503.1 353.6 L503.3 355.2 L503.5 356.8 L503.8 358.3 L504 359.9 L504.3 361.5 L504.6 363 L505 364.6 L505.3 366.2 L505.7 367.7 L506.1 369.3 L506.6 370.8 L507.1 372.4 L507.6 374 L508.1 375.5 L508.7 377.1 L509.3 378.7 L509.9 380.2 L510.5 381.8 L511.2 383.3 L511.9 384.9 L512.6 386.5 L513.4 388 L514.2 389.6 L515 391.1 L515.8 392.7 L516.6 394.3 L517.5 395.8 L518.4 397.4 L519.4 398.9 L520.3 400.5 L521.3 402 L522.4 403.6 L523.4 405.2 L524.5 406.7"/><path d="M728.3 174.2 L726.1 175.2 L723.9 176.2 L721.7 177.2 L719.4 178.3 L717.2 179.3 L715 180.3 L712.8 181.4 L710.6 182.4 L708.3 183.5 L706.1 184.6 L703.9 185.6 L701.7 186.7 L699.4 187.8 L697.2 188.9 L695 190 L692.8 191.1 L690.5 192.3 L688.3 193.4 L686.1 194.5 L683.9 195.7 L681.7 196.8 L679.5 197.9 L677.3 199.1 L675.1 200.3 L672.9 201.4 L670.7 202.6 L668.5 203.8 L666.3 204.9 L664.2 206.1 L662 207.3 L659.8 208.5 L657.7 209.7 L655.5 210.9 L653.4 212.1 L651.2 213.3 L649.1 214.5 L647 215.8 L644.8 217 L642.7 218.2 L640.6 219.4 L638.5 220.7 L636.5 221.9 L634.4 223.1 L632.3 224.4 L630.2 225.6 L628.2 226.9 L626.2 228.1 L624.1 229.4 L622.1 230.7 L620.1 231.9 L618.1 233.2 L616.1 234.4 L614.1 235.7 L612.2 237 L610.2 238.3 L608.3 239.5 L606.4 240.8 L604.4 242.1 L602.5 243.4 L600.6 244.7 L598.8 246 L596.9 247.3 L595.1 248.6 L593.2 249.9 L591.4 251.2 L589.6 252.5 L587.8 253.8 L586 255.1 L584.2 256.4 L582.5 257.7 L580.7 259 L579 260.3 L577.3 261.6 L575.6 262.9 L573.9 264.3 L572.3 265.6 L570.6 266.9 L569 268.2 L567.4 269.5 L565.8 270.9 L564.2 272.2 L562.6 273.5 L561.1 274.9 L559.5 276.2 L558 277.5 L556.5 278.8 L555 280.2 L553.6 281.5 L552.1 282.8 L550.7 284.2 L549.3 285.5 L547.9 286.9 L546.5 288.2 L545.1 289.5 L543.8 290.9 L542.5 292.2"/><path d="M866.7 59.2 L868.9 58.6 L871 58 L873 57.5 L874.9 57.2 L876.8 56.8 L878.6 56.6 L880.3 56.5 L882 56.4 L883.6 56.5 L885.1 56.6 L886.6 56.8 L888.1 57.1 L889.5 57.5 L890.9 58 L892.2 58.5 L893.5 59.1 L894.9 59.8 L896.2 60.5 L897.4 61.3 L898.7 62.2 L900 63.1 L901.3 64.1 L902.6 65.1 L903.8 66.2 L905.1 67.2 L906.4 68.4 L907.7 69.5 L909 70.7 L910.3 71.9 L911.5 73.2 L912.8 74.4 L914.1 75.7 L915.5 77 L916.8 78.3 L918.1 79.7 L919.4 81 L920.7 82.4 L922 83.8 L923.4 85.2 L924.7 86.6 L926 88 L927.4 89.4 L928.7 90.8 L930.1 92.3 L931.4 93.7 L932.8 95.2 L934.1 96.7 L935.4 98.1 L936.8 99.6 L938.1 101.1 L939.5 102.6 L940.8 104.1 L942.2 105.6 L943.5 107.1 L944.9 108.6 L946.2 110.1 L947.6 111.6 L948.9 113.2 L950.3 114.7 L951.6 116.2 L952.9 117.7 L954.3 119.3 L955.6 120.8 L956.9 122.4 L958.3 123.9 L959.6 125.5 L960.9 127 L962.3 128.6 L963.6 130.1 L964.9 131.7 L966.2 133.2 L967.5 134.8 L968.8 136.3 L970.1 137.9 L971.4 139.5 L972.7 141 L974 142.6 L975.3 144.2 L976.6 145.7 L977.9 147.3 L979.1 148.9 L980.4 150.5 L981.7 152 L982.9 153.6 L984.2 155.2 L985.4 156.8 L986.7 158.3 L987.9 159.9 L989.1 161.5 L990.3 163.1 L991.6 164.7 L992.8 166.3 L994 167.8 L995.2 169.4 L996.4 171 L997.6 172.6 L998.8 174.2 L999.9 175.8 L1001.1 177.4 L1002.3 179 L1003.4 180.6 L1004.6 182.1 L1005.7 183.7 L1006.8 185.3 L1008 186.9 L1009.1 188.5 L1010.2 190.1 L1011.3 191.7 L1012.4 193.3 L1013.5 194.9 L1014.6 196.5 L1015.6 198.1 L1016.7 199.7 L1017.7 201.3 L1018.8 202.9 L1019.8 204.5 L1020.9 206.1 L1021.9 207.7 L1022.9 209.3 L1023.9 210.9 L1024.9 212.5 L1025.9 214.1 L1026.9 215.7 L1027.8 217.3 L1028.8 218.9 L1029.7 220.5 L1030.7 222.1 L1031.6 223.7 L1032.5 225.3 L1033.4 226.9 L1034.3 228.5 L1035.2 230.1 L1036.1 231.7 L1037 233.3 L1037.9 234.9 L1038.7 236.5 L1039.5 238.1 L1040.4 239.7 L1041.2 241.3 L1042 242.9 L1042.8 244.5 L1043.6 246.1 L1044.4 247.7 L1045.2 249.3 L1045.9 251 L1046.7 252.6 L1047.4 254.2 L1048.1 255.8 L1048.9 257.4 L1049.6 259 L1050.3 260.6 L1051 262.2 L1051.6 263.8 L1052.3 265.4 L1052.9 267 L1053.6 268.6 L1054.2 270.2 L1054.8 271.8 L1055.4 273.4 L1056 275.1 L1056.6 276.7 L1057.2 278.3 L1057.8 279.9 L1058.3 281.5 L1058.8 283.1 L1059.4 284.7 L1059.9 286.3 L1060.4 287.9 L1060.9 289.5 L1061.4 291.1 L1061.8 292.7 L1062.3 294.3 L1062.7 296 L1063.2 297.6 L1063.6 299.2 L1064 300.8 L1064.4 302.4 L1064.8 304 L1065.1 305.6 L1065.5 307.2 L1065.9 308.8 L1066.2 310.4 L1066.5 312 L1066.8 313.7 L1067.1 315.3 L1067.4 316.9 L1067.7 318.5 L1068 320.1 L1068.2 321.7 L1068.4 323.3 L1068.7 324.9 L1068.9 326.5 L1069.1 328.1 L1069.3 329.7 L1069.4 331.3 L1069.6 333 L1069.8 334.6 L1069.9 336.2 L1070 337.8 L1070.1 339.4"/><path d="M884.2 108 L885.5 108.7 L886.8 109.5 L888.1 110.2 L889.4 111 L890.7 111.9 L892 112.7 L893.3 113.6 L894.5 114.4 L895.8 115.3 L897.1 116.2 L898.4 117.2 L899.7 118.1 L901 119.1 L902.2 120.1 L903.5 121.1 L904.8 122.1 L906.1 123.1 L907.4 124.2 L908.6 125.3 L909.9 126.3 L911.2 127.4 L912.5 128.5 L913.8 129.6 L915.1 130.8 L916.3 131.9 L917.6 133 L918.9 134.2 L920.2 135.4 L921.5 136.6 L922.8 137.7 L924.1 138.9 L925.4 140.2 L926.7 141.4 L928 142.6 L929.3 143.8 L930.5 145.1 L931.8 146.3 L933.1 147.6 L934.4 148.9 L935.7 150.1 L937 151.4 L938.3 152.7 L939.6 154 L940.9 155.3 L942.2 156.6 L943.5 157.9 L944.8 159.2 L946.1 160.5 L947.4 161.9 L948.7 163.2 L949.9 164.5 L951.2 165.9 L952.5 167.2 L953.8 168.6 L955.1 169.9 L956.4 171.3 L957.7 172.7 L958.9 174 L960.2 175.4 L961.5 176.8 L962.8 178.2 L964 179.6 L965.3 180.9 L966.6 182.3 L967.8 183.7 L969.1 185.1 L970.4 186.5 L971.6 187.9 L972.9 189.3 L974.1 190.8 L975.4 192.2 L976.6 193.6 L977.8 195 L979.1 196.4 L980.3 197.8 L981.5 199.3 L982.8 200.7 L984 202.1 L985.2 203.6 L986.4 205 L987.6 206.4 L988.8 207.9 L990 209.3 L991.2 210.8 L992.4 212.2 L993.6 213.7 L994.8 215.1 L996 216.6 L997.1 218 L998.3 219.5 L999.5 220.9 L1000.6 222.4 L1001.8 223.8 L1002.9 225.3 L1004 226.8 L1005.2 228.2 L1006.3 229.7 L1007.4 231.2 L1008.5 232.6 L1009.6 234.1 L1010.7 235.6 L1011.8 237 L1012.9 238.5 L1014 240 L1015.1 241.5 L1016.1 242.9 L1017.2 244.4 L1018.3 245.9 L1019.3 247.4 L1020.3 248.9 L1021.4 250.3 L1022.4 251.8 L1023.4 253.3 L1024.4 254.8 L1025.4 256.3 L1026.4 257.7 L1027.4 259.2 L1028.4 260.7 L1029.4 262.2 L1030.3 263.7 L1031.3 265.2 L1032.2 266.7 L1033.2 268.2 L1034.1 269.7 L1035 271.1 L1035.9 272.6 L1036.8 274.1 L1037.7 275.6 L1038.6 277.1 L1039.5 278.6 L1040.4 280.1 L1041.3 281.6 L1042.1 283.1 L1043 284.6 L1043.8 286.1 L1044.6 287.6 L1045.4 289.1 L1046.2 290.6 L1047 292.1 L1047.8 293.6 L1048.6 295.1 L1049.4 296.6 L1050.1 298.1 L1050.9 299.6 L1051.6 301.1 L1052.4 302.6 L1053.1 304.1 L1053.8 305.6 L1054.5 307.1 L1055.2 308.6 L1055.9 310.1 L1056.6 311.6 L1057.2 313.1 L1057.9 314.6 L1058.5 316.1 L1059.2 317.6 L1059.8 319.1 L1060.4 320.6 L1061 322.1 L1061.6 323.6 L1062.2 325.1 L1062.8 326.6 L1063.3 328.1 L1063.9 329.6 L1064.4 331.1 L1064.9 332.6 L1065.5 334.1 L1066 335.6 L1066.5 337.1 L1067 338.6 L1067.4 340.1 L1067.9 341.6 L1068.4 343.1 L1068.8 344.6 L1069.2 346.1 L1069.7 347.6 L1070.1 349.1 L1070.5 350.6 L1070.9 352.1 L1071.3 353.6 L1071.6 355.1 L1072 356.6 L1072.3 358.1 L1072.7 359.6 L1073 361 L1073.3 362.5 L1073.6 364 L1073.9 365.5 L1074.2 367 L1074.5 368.5 L1074.7 370 L1075 371.5 L1075.2 373 L1075.5 374.5 L1075.7 376 L1075.9 377.5 L1076.1 378.9 L1076.3 380.4 L1076.4 381.9 L1076.6 383.4 L1076.8 384.9"/><path d="M890 95.3 L888.4 95.3 L886.8 95.3 L885.1 95.4 L883.5 95.5 L881.8 95.7 L880.2 95.9 L878.5 96.1 L876.8 96.3 L875.1 96.6 L873.4 96.9 L871.7 97.3 L869.9 97.7 L868.2 98.1 L866.4 98.6 L864.7 99.1 L862.9 99.6 L861 100.1 L859.2 100.7 L857.4 101.3 L855.5 102 L853.7 102.6 L851.8 103.3 L849.9 104.1 L847.9 104.8 L846 105.6 L844.1 106.4 L842.1 107.2 L840.1 108 L838.1 108.9 L836.1 109.8 L834.1 110.7 L832.1 111.6 L830 112.5 L828 113.5 L825.9 114.5 L823.8 115.5 L821.7 116.5 L819.6 117.5 L817.5 118.6 L815.3 119.6 L813.2 120.7 L811.1 121.8 L808.9 122.9 L806.7 124 L804.6 125.2 L802.4 126.3 L800.2 127.5 L798 128.6 L795.8 129.8 L793.6 131 L791.4 132.2 L789.2 133.4 L787 134.6 L784.7 135.8 L782.5 137.1 L780.3 138.3 L778.1 139.6 L775.8 140.8 L773.6 142.1 L771.3 143.4 L769.1 144.7 L766.9 146 L764.6 147.3 L762.4 148.6 L760.1 149.9 L757.9 151.2 L755.7 152.5 L753.4 153.8 L751.2 155.2 L749 156.5 L746.7 157.9 L744.5 159.2 L742.3 160.6 L740.1 161.9 L737.9 163.3 L735.7 164.7 L733.5 166 L731.3 167.4 L729.1 168.8 L726.9 170.2 L724.7 171.6 L722.5 173 L720.3 174.4 L718.2 175.8 L716 177.2 L713.9 178.6 L711.7 180 L709.6 181.4 L707.5 182.8 L705.4 184.3 L703.2 185.7 L701.1 187.1 L699.1 188.5 L697 190 L694.9 191.4 L692.8 192.8 L690.8 194.3 L688.8 195.7 L686.7 197.2 L684.7 198.6 L682.7 200.1 L680.7 201.5 L678.7 203 L676.7 204.4 L674.8 205.9 L672.8 207.3 L670.9 208.8 L669 210.3 L667.1 211.7 L665.2 213.2 L663.3 214.7 L661.4 216.1 L659.6 217.6 L657.7 219.1 L655.9 220.5 L654.1 222 L652.3 223.5 L650.5 225 L648.7 226.4 L647 227.9 L645.2 229.4 L643.5 230.9 L641.8 232.4 L640.1 233.9 L638.4 235.3 L636.8 236.8 L635.1 238.3 L633.5 239.8 L631.9 241.3 L630.3 242.8 L628.7 244.3 L627.1 245.8 L625.6 247.3 L624 248.8 L622.5 250.3 L621 251.8 L619.6 253.3 L618.1 254.8 L616.7 256.3 L615.2 257.8 L613.8 259.3 L612.4 260.8 L611.1 262.3 L609.7 263.8 L608.4 265.3 L607.1 266.8 L605.8 268.3 L604.5 269.8 L603.3 271.3 L602 272.8 L600.8 274.3 L599.6 275.8 L598.4 277.3 L597.3 278.8 L596.1 280.3 L595 281.8 L593.9 283.3 L592.8 284.9 L591.8 286.4 L590.7 287.9 L589.7 289.4 L588.7 290.9 L587.7 292.4 L586.8 293.9 L585.9 295.4 L584.9 296.9 L584 298.4 L583.2 300 L582.3 301.5 L581.5 303 L580.7 304.5 L579.9 306 L579.1 307.5 L578.4 309 L577.6 310.6 L576.9 312.1 L576.2 313.6 L575.6 315.1 L574.9 316.6 L574.3 318.1 L573.7 319.6 L573.1 321.1 L572.6 322.7 L572.1 324.2 L571.5 325.7 L571.1 327.2 L570.6 328.7 L570.1 330.2 L569.7 331.7 L569.3 333.3 L568.9 334.8 L568.6 336.3 L568.2 337.8 L567.9 339.3 L567.6 340.8 L567.4 342.3 L567.1 343.8 L566.9 345.4 L566.7 346.9 L566.5 348.4 L566.3 349.9"/><path d="M869.2 114.2 L870.1 115.2 L871 116.2 L871.9 117.3 L872.8 118.4 L873.7 119.4 L874.6 120.5 L875.5 121.6 L876.4 122.8 L877.3 123.9 L878.2 125 L879.1 126.2 L880 127.4 L880.8 128.5 L881.7 129.7 L882.6 130.9 L883.5 132.1 L884.4 133.4 L885.2 134.6 L886.1 135.8 L887 137.1 L887.9 138.3 L888.8 139.6 L889.6 140.9 L890.5 142.2 L891.4 143.4 L892.3 144.7 L893.1 146 L894 147.3 L894.9 148.7 L895.8 150 L896.6 151.3 L897.5 152.6 L898.4 154 L899.3 155.3 L900.1 156.7 L901 158 L901.9 159.4 L902.8 160.8 L903.6 162.1 L904.5 163.5 L905.4 164.9 L906.3 166.3 L907.2 167.6 L908 169 L908.9 170.4 L909.8 171.8 L910.7 173.2 L911.5 174.6 L912.4 176 L913.3 177.5 L914.2 178.9 L915 180.3 L915.9 181.7 L916.8 183.1 L917.6 184.6 L918.5 186 L919.4 187.4 L920.3 188.9 L921.1 190.3 L922 191.7 L922.9 193.2 L923.7 194.6 L924.6 196.1 L925.4 197.5 L926.3 199 L927.2 200.4 L928 201.9 L928.9 203.3 L929.7 204.8 L930.6 206.3 L931.4 207.7 L932.3 209.2 L933.2 210.7 L934 212.1 L934.8 213.6 L935.7 215.1 L936.5 216.5 L937.4 218 L938.2 219.5 L939 221 L939.9 222.5 L940.7 223.9 L941.5 225.4 L942.4 226.9 L943.2 228.4 L944 229.9 L944.8 231.4 L945.7 232.8 L946.5 234.3 L947.3 235.8 L948.1 237.3 L948.9 238.8 L949.7 240.3 L950.5 241.8 L951.3 243.3 L952.1 244.8 L952.9 246.3 L953.7 247.8 L954.5 249.3 L955.2 250.8 L956 252.3 L956.8 253.8 L957.6 255.3 L958.3 256.8 L959.1 258.3 L959.9 259.8 L960.6 261.3 L961.4 262.8 L962.1 264.3 L962.9 265.8 L963.6 267.3 L964.4 268.8 L965.1 270.3 L965.8 271.9 L966.5 273.4 L967.3 274.9 L968 276.4 L968.7 277.9 L969.4 279.4 L970.1 280.9 L970.8 282.4 L971.5 283.9 L972.2 285.5 L972.9 287 L973.6 288.5 L974.2 290 L974.9 291.5 L975.6 293 L976.2 294.5 L976.9 296 L977.5 297.6 L978.2 299.1 L978.8 300.6 L979.5 302.1 L980.1 303.6 L980.7 305.1 L981.4 306.7 L982 308.2 L982.6 309.7 L983.2 311.2 L983.8 312.7 L984.4 314.2 L985 315.8 L985.6 317.3 L986.1 318.8 L986.7 320.3 L987.3 321.8 L987.9 323.3 L988.4 324.9 L989 326.4 L989.5 327.9 L990 329.4 L990.6 330.9 L991.1 332.4 L991.6 333.9 L992.1 335.5 L992.7 337 L993.2 338.5 L993.7 340 L994.2 341.5 L994.6 343 L995.1 344.6 L995.6 346.1 L996.1 347.6 L996.5 349.1 L997 350.6 L997.4 352.1 L997.9 353.6 L998.3 355.2 L998.7 356.7 L999.2 358.2 L999.6 359.7 L1000 361.2 L1000.4 362.7 L1000.8 364.2 L1001.2 365.7 L1001.6 367.2 L1002 368.8 L1002.3 370.3 L1002.7 371.8 L1003.1 373.3 L1003.4 374.8 L1003.8 376.3 L1004.1 377.8 L1004.4 379.3 L1004.8 380.8 L1005.1 382.3 L1005.4 383.8 L1005.7 385.3 L1006 386.8 L1006.3 388.3 L1006.6 389.8 L1006.9 391.3 L1007.1 392.8 L1007.4 394.3 L1007.7 395.8 L1007.9 397.3 L1008.2 398.8 L1008.4 400.3 L1008.7 401.8 L1008.9 403.3"/><path d="M821.7 124.2 L819.7 125.1 L817.6 126 L815.6 127 L813.5 127.9 L811.5 128.9 L809.4 129.8 L807.3 130.8 L805.2 131.8 L803.1 132.9 L801 133.9 L798.9 134.9 L796.8 136 L794.6 137.1 L792.5 138.2 L790.3 139.3 L788.2 140.4 L786 141.5 L783.9 142.6 L781.7 143.7 L779.5 144.9 L777.4 146.1 L775.2 147.2 L773 148.4 L770.8 149.6 L768.6 150.8 L766.5 152 L764.3 153.2 L762.1 154.4 L759.9 155.6 L757.7 156.8 L755.5 158.1 L753.3 159.3 L751.1 160.6 L748.9 161.8 L746.7 163.1 L744.5 164.4 L742.4 165.6 L740.2 166.9 L738 168.2 L735.8 169.5 L733.6 170.8 L731.5 172.1 L729.3 173.4 L727.1 174.7 L725 176.1 L722.8 177.4 L720.7 178.7 L718.5 180 L716.4 181.4 L714.2 182.7 L712.1 184.1 L710 185.4 L707.9 186.8 L705.8 188.1 L703.7 189.5 L701.6 190.8 L699.5 192.2 L697.4 193.6 L695.3 194.9 L693.3 196.3 L691.2 197.7 L689.2 199.1 L687.1 200.5 L685.1 201.8 L683.1 203.2 L681.1 204.6 L679.1 206 L677.1 207.4 L675.1 208.8 L673.2 210.2 L671.2 211.6 L669.3 213 L667.3 214.5 L665.4 215.9 L663.5 217.3 L661.6 218.7 L659.7 220.1 L657.9 221.5 L656 223 L654.2 224.4 L652.3 225.8 L650.5 227.2 L648.7 228.7 L646.9 230.1 L645.1 231.5 L643.4 233 L641.6 234.4 L639.9 235.8 L638.2 237.3 L636.5 238.7 L634.8 240.1 L633.1 241.6 L631.4 243 L629.8 244.5 L628.2 245.9 L626.6 247.4 L625 248.8 L623.4 250.3 L621.8 251.7 L620.3 253.2 L618.7 254.6 L617.2 256.1 L615.7 257.5 L614.2 259 L612.8 260.5 L611.3 261.9 L609.9 263.4 L608.5 264.8 L607.1 266.3 L605.7 267.7 L604.3 269.2 L603 270.7 L601.7 272.1 L600.4 273.6 L599.1 275.1 L597.8 276.5 L596.6 278 L595.3 279.5 L594.1 280.9 L592.9 282.4 L591.7 283.9 L590.6 285.3 L589.4 286.8 L588.3 288.3 L587.2 289.7 L586.2 291.2 L585.1 292.7 L584 294.2 L583 295.6 L582 297.1 L581 298.6 L580.1 300 L579.1 301.5 L578.2 303 L577.3 304.5 L576.4 305.9 L575.6 307.4 L574.7 308.9 L573.9 310.4 L573.1 311.8 L572.3 313.3 L571.6 314.8 L570.8 316.3 L570.1 317.7 L569.4 319.2 L568.7 320.7 L568.1 322.2 L567.5 323.6 L566.8 325.1 L566.3 326.6 L565.7 328.1 L565.1 329.5 L564.6 331 L564.1 332.5 L563.6 333.9 L563.1 335.4 L562.7 336.9 L562.3 338.4 L561.9 339.8 L561.5 341.3 L561.1 342.8 L560.8 344.3 L560.5 345.7 L560.2 347.2 L559.9 348.7 L559.6 350.1 L559.4 351.6 L559.2 353.1 L559 354.5 L558.8 356 L558.7 357.5 L558.5 359 L558.4 360.4 L558.3 361.9 L558.3 363.4 L558.2 364.8 L558.2 366.3 L558.2 367.7 L558.2 369.2 L558.3 370.7 L558.3 372.1 L558.4 373.6 L558.5 375.1 L558.6 376.5 L558.8 378 L558.9 379.4 L559.1 380.9 L559.3 382.4 L559.5 383.8 L559.8 385.3 L560 386.7 L560.3 388.2 L560.6 389.6 L561 391.1 L561.3 392.5 L561.7 394 L562 395.4 L562.4 396.9 L562.9 398.3 L563.3 399.7 L563.8 401.2"/><path d="M848.3 136.2 L849.9 136.3 L851.5 136.4 L853 136.5 L854.6 136.6 L856.1 136.8 L857.7 136.9 L859.2 137.1 L860.8 137.4 L862.3 137.6 L863.8 137.9 L865.3 138.1 L866.8 138.4 L868.3 138.8 L869.8 139.1 L871.3 139.5 L872.8 139.8 L874.3 140.2 L875.8 140.6 L877.2 141.1 L878.7 141.5 L880.2 142 L881.6 142.5 L883.1 143 L884.5 143.5 L886 144.1 L887.5 144.6 L888.9 145.2 L890.4 145.8 L891.8 146.4 L893.3 147 L894.7 147.7 L896.2 148.3 L897.6 149 L899.1 149.7 L900.5 150.4 L902 151.1 L903.4 151.9 L904.9 152.6 L906.3 153.4 L907.8 154.1 L909.2 154.9 L910.6 155.7 L912.1 156.5 L913.5 157.4 L915 158.2 L916.5 159.1 L917.9 159.9 L919.4 160.8 L920.8 161.7 L922.3 162.6 L923.7 163.5 L925.2 164.4 L926.6 165.3 L928.1 166.3 L929.6 167.2 L931 168.2 L932.5 169.1 L933.9 170.1 L935.4 171.1 L936.9 172.1 L938.3 173.1 L939.8 174.1 L941.3 175.1 L942.7 176.2 L944.2 177.2 L945.7 178.3 L947.1 179.3 L948.6 180.4 L950.1 181.4 L951.5 182.5 L953 183.6 L954.5 184.7 L955.9 185.8 L957.4 186.9 L958.9 188 L960.3 189.1 L961.8 190.2 L963.3 191.4 L964.7 192.5 L966.2 193.7 L967.6 194.8 L969.1 195.9 L970.6 197.1 L972 198.3 L973.5 199.4 L974.9 200.6 L976.4 201.8 L977.9 203 L979.3 204.2 L980.8 205.4 L982.2 206.6 L983.7 207.8 L985.1 209 L986.5 210.2 L988 211.4 L989.4 212.6 L990.9 213.8 L992.3 215 L993.7 216.3 L995.1 217.5 L996.6 218.7 L998 220 L999.4 221.2 L1000.8 222.5 L1002.2 223.7 L1003.6 225 L1005.1 226.2 L1006.5 227.5 L1007.8 228.8 L1009.2 230 L1010.6 231.3 L1012 232.6 L1013.4 233.8 L1014.8 235.1 L1016.1 236.4 L1017.5 237.7 L1018.9 239 L1020.2 240.3 L1021.6 241.5 L1022.9 242.8 L1024.3 244.1 L1025.6 245.4 L1026.9 246.7 L1028.3 248 L1029.6 249.3 L1030.9 250.6 L1032.2 251.9 L1033.5 253.3 L1034.8 254.6 L1036.1 255.9 L1037.4 257.2 L1038.7 258.5 L1039.9 259.8 L1041.2 261.1 L1042.5 262.5 L1043.7 263.8 L1044.9 265.1 L1046.2 266.4 L1047.4 267.8 L1048.6 269.1 L1049.9 270.4 L1051.1 271.7 L1052.3 273.1 L1053.5 274.4 L1054.7 275.7 L1055.8 277.1 L1057 278.4 L1058.2 279.7 L1059.3 281.1 L1060.5 282.4 L1061.6 283.8 L1062.8 285.1 L1063.9 286.4 L1065 287.8 L1066.1 289.1 L1067.2 290.5 L1068.3 291.8 L1069.4 293.2 L1070.5 294.5 L1071.5 295.9 L1072.6 297.2 L1073.6 298.6 L1074.7 299.9 L1075.7 301.2 L1076.7 302.6 L1077.7 303.9 L1078.7 305.3 L1079.7 306.6 L1080.7 308 L1081.7 309.3 L1082.7 310.7 L1083.6 312 L1084.6 313.4 L1085.5 314.8 L1086.4 316.1 L1087.3 317.5 L1088.2 318.8 L1089.1 320.2 L1090 321.5 L1090.9 322.9 L1091.8 324.2 L1092.6 325.6 L1093.5 326.9 L1094.3 328.3 L1095.2 329.6 L1096 331 L1096.8 332.3 L1097.6 333.7 L1098.4 335 L1099.1 336.4 L1099.9 337.7 L1100.7 339.1 L1101.4 340.4 L1102.2 341.8 L1102.9 343.1 L1103.6 344.5 L1104.3 345.8 L1105 347.1 L1105.7 348.5 L1106.4 349.8 L1107 351.2"/><path d="M855.8 153.3 L856.9 154.2 L858 155.1 L859 156 L860.1 156.9 L861.2 157.9 L862.3 158.8 L863.3 159.8 L864.4 160.7 L865.5 161.7 L866.5 162.7 L867.6 163.7 L868.7 164.7 L869.7 165.7 L870.8 166.8 L871.8 167.8 L872.9 168.9 L874 169.9 L875 171 L876.1 172 L877.1 173.1 L878.2 174.2 L879.3 175.3 L880.3 176.4 L881.4 177.5 L882.4 178.6 L883.5 179.8 L884.6 180.9 L885.6 182 L886.7 183.2 L887.7 184.3 L888.8 185.5 L889.9 186.6 L890.9 187.8 L892 189 L893 190.2 L894.1 191.3 L895.2 192.5 L896.2 193.7 L897.3 194.9 L898.3 196.1 L899.4 197.3 L900.5 198.6 L901.5 199.8 L902.6 201 L903.6 202.2 L904.7 203.5 L905.8 204.7 L906.8 205.9 L907.9 207.2 L908.9 208.4 L910 209.7 L911.1 211 L912.1 212.2 L913.2 213.5 L914.2 214.7 L915.3 216 L916.4 217.3 L917.4 218.6 L918.5 219.9 L919.5 221.1 L920.6 222.4 L921.6 223.7 L922.7 225 L923.7 226.3 L924.8 227.6 L925.8 228.9 L926.9 230.2 L927.9 231.5 L929 232.8 L930 234.1 L931.1 235.5 L932.1 236.8 L933.2 238.1 L934.2 239.4 L935.3 240.7 L936.3 242.1 L937.3 243.4 L938.4 244.7 L939.4 246.1 L940.4 247.4 L941.5 248.7 L942.5 250.1 L943.5 251.4 L944.5 252.7 L945.6 254.1 L946.6 255.4 L947.6 256.8 L948.6 258.1 L949.6 259.5 L950.7 260.8 L951.7 262.2 L952.7 263.5 L953.7 264.9 L954.7 266.2 L955.7 267.6 L956.7 269 L957.7 270.3 L958.7 271.7 L959.6 273 L960.6 274.4 L961.6 275.8 L962.6 277.1 L963.6 278.5 L964.5 279.9 L965.5 281.2 L966.5 282.6 L967.4 284 L968.4 285.3 L969.3 286.7 L970.3 288.1 L971.2 289.4 L972.2 290.8 L973.1 292.2 L974.1 293.6 L975 294.9 L975.9 296.3 L976.8 297.7 L977.8 299.1 L978.7 300.4 L979.6 301.8 L980.5 303.2 L981.4 304.6 L982.3 306 L983.2 307.3 L984.1 308.7 L985 310.1 L985.9 311.5 L986.7 312.8 L987.6 314.2 L988.5 315.6 L989.3 317 L990.2 318.4 L991 319.7 L991.9 321.1 L992.7 322.5 L993.6 323.9 L994.4 325.3 L995.2 326.6 L996.1 328 L996.9 329.4 L997.7 330.8 L998.5 332.2 L999.3 333.5 L1000.1 334.9 L1000.9 336.3 L1001.7 337.7 L1002.5 339.1 L1003.2 340.4 L1004 341.8 L1004.8 343.2 L1005.5 344.6 L1006.3 345.9 L1007 347.3 L1007.8 348.7 L1008.5 350.1 L1009.3 351.4 L1010 352.8 L1010.7 354.2 L1011.4 355.5 L1012.1 356.9 L1012.8 358.3 L1013.5 359.6 L1014.2 361 L1014.9 362.4 L1015.6 363.7 L1016.2 365.1 L1016.9 366.5 L1017.6 367.8 L1018.2 369.2 L1018.9 370.6 L1019.5 371.9 L1020.2 373.3 L1020.8 374.6 L1021.4 376 L1022 377.3 L1022.6 378.7 L1023.2 380 L1023.8 381.4 L1024.4 382.7 L1025 384.1 L1025.6 385.4 L1026.2 386.8 L1026.8 388.1 L1027.3 389.5 L1027.9 390.8 L1028.4 392.1 L1029 393.5 L1029.5 394.8 L1030.1 396.1 L1030.6 397.5 L1031.1 398.8 L1031.6 400.1 L1032.1 401.4 L1032.6 402.8 L1033.1 404.1 L1033.6 405.4 L1034.1 406.7 L1034.6 408 L1035.1 409.3 L1035.6 410.6 L1036 411.9"/><path d="M862 164.2 L862.2 165.7 L862.3 167.3 L862.5 168.8 L862.6 170.4 L862.8 171.9 L863 173.4 L863.1 175 L863.3 176.5 L863.5 178.1 L863.6 179.6 L863.8 181.2 L864 182.7 L864.2 184.3 L864.4 185.8 L864.5 187.4 L864.7 189 L864.9 190.5 L865.1 192.1 L865.3 193.6 L865.5 195.2 L865.7 196.7 L865.9 198.3 L866.1 199.9 L866.3 201.4 L866.5 203 L866.7 204.6 L867 206.1 L867.2 207.7 L867.4 209.3 L867.6 210.8 L867.8 212.4 L868.1 214 L868.3 215.5 L868.5 217.1 L868.8 218.7 L869 220.2 L869.2 221.8 L869.5 223.4 L869.7 224.9 L870 226.5 L870.2 228.1 L870.5 229.7 L870.7 231.2 L871 232.8 L871.2 234.4 L871.5 236 L871.8 237.5 L872 239.1 L872.3 240.7 L872.5 242.3 L872.8 243.8 L873.1 245.4 L873.4 247 L873.6 248.6 L873.9 250.1 L874.2 251.7 L874.5 253.3 L874.8 254.9 L875 256.5 L875.3 258 L875.6 259.6 L875.9 261.2 L876.2 262.8 L876.5 264.3 L876.8 265.9 L877.1 267.5 L877.4 269.1 L877.7 270.7 L878 272.3 L878.3 273.8 L878.6 275.4 L878.9 277 L879.2 278.6 L879.5 280.2 L879.8 281.7 L880.2 283.3 L880.5 284.9 L880.8 286.5 L881.1 288.1 L881.4 289.6 L881.8 291.2 L882.1 292.8 L882.4 294.4 L882.7 296 L883.1 297.6 L883.4 299.1 L883.7 300.7 L884.1 302.3 L884.4 303.9 L884.7 305.5 L885.1 307.1 L885.4 308.6 L885.7 310.2 L886.1 311.8 L886.4 313.4 L886.8 315 L887.1 316.6 L887.4 318.1 L887.8 319.7 L888.1 321.3 L888.5 322.9 L888.8 324.5 L889.2 326.1 L889.5 327.6 L889.9 329.2 L890.2 330.8 L890.6 332.4 L890.9 334 L891.3 335.6 L891.6 337.1 L892 338.7 L892.4 340.3 L892.7 341.9 L893.1 343.5 L893.4 345.1 L893.8 346.6 L894.1 348.2 L894.5 349.8 L894.9 351.4 L895.2 353 L895.6 354.6 L896 356.1 L896.3 357.7 L896.7 359.3 L897 360.9 L897.4 362.5 L897.8 364 L898.1 365.6 L898.5 367.2 L898.9 368.8 L899.2 370.4 L899.6 372 L900 373.5 L900.3 375.1 L900.7 376.7 L901.1 378.3 L901.4 379.9 L901.8 381.4 L902.2 383 L902.5 384.6 L902.9 386.2 L903.2 387.7 L903.6 389.3 L904 390.9 L904.3 392.5 L904.7 394.1 L905.1 395.6 L905.4 397.2 L905.8 398.8 L906.2 400.4 L906.5 401.9 L906.9 403.5 L907.3 405.1 L907.6 406.7 L908 408.2 L908.3 409.8 L908.7 411.4 L909.1 413 L909.4 414.5 L909.8 416.1 L910.2 417.7 L910.5 419.2 L910.9 420.8 L911.2 422.4 L911.6 423.9 L911.9 425.5 L912.3 427.1 L912.7 428.6 L913 430.2 L913.4 431.8 L913.7 433.3 L914.1 434.9 L914.4 436.5 L914.8 438 L915.1 439.6 L915.5 441.2 L915.8 442.7"/><path d="M836 91 L836.8 91.7 L837.5 92.4 L838.3 93.2 L839 93.9 L839.7 94.8 L840.3 95.6 L841 96.5 L841.6 97.4 L842.2 98.3 L842.7 99.2 L843.3 100.2 L843.9 101.2 L844.4 102.2 L844.9 103.2 L845.4 104.2 L845.9 105.3 L846.4 106.4 L846.9 107.5 L847.4 108.6 L847.8 109.7 L848.3 110.8 L848.7 112 L849.2 113.2 L849.6 114.4 L850 115.6 L850.5 116.8 L850.9 118 L851.3 119.2 L851.7 120.5 L852.2 121.7 L852.6 123 L853 124.3 L853.4 125.6 L853.8 126.8 L854.2 128.1 L854.6 129.5 L855 130.8 L855.4 132.1 L855.8 133.4 L856.2 134.8 L856.6 136.1 L857 137.5 L857.4 138.8 L857.8 140.2 L858.2 141.6 L858.6 142.9 L859 144.3 L859.4 145.7 L859.8 147.1 L860.2 148.5 L860.6 149.9 L861 151.3 L861.4 152.7 L861.9 154.1 L862.3 155.6 L862.7 157 L863.1 158.4 L863.5 159.8 L863.9 161.3 L864.3 162.7 L864.8 164.1 L865.2 165.6 L865.6 167 L866 168.5 L866.4 169.9 L866.9 171.4 L867.3 172.9 L867.7 174.3 L868.2 175.8 L868.6 177.2 L869 178.7 L869.5 180.2 L869.9 181.7 L870.3 183.1 L870.8 184.6 L871.2 186.1 L871.7 187.6 L872.1 189.1 L872.6 190.5 L873 192 L873.5 193.5 L873.9 195 L874.4 196.5 L874.8 198 L875.3 199.5 L875.8 201 L876.2 202.5 L876.7 204 L877.1 205.5 L877.6 207 L878.1 208.5 L878.5 210 L879 211.5 L879.5 213 L879.9 214.5 L880.4 216.1 L880.9 217.6 L881.4 219.1 L881.9 220.6 L882.3 222.1 L882.8 223.6 L883.3 225.1 L883.8 226.7 L884.3 228.2 L884.7 229.7 L885.2 231.2 L885.7 232.7 L886.2 234.3 L886.7 235.8 L887.2 237.3 L887.7 238.8 L888.2 240.4 L888.7 241.9 L889.2 243.4 L889.6 245 L890.1 246.5 L890.6 248 L891.1 249.5 L891.6 251.1 L892.1 252.6 L892.6 254.1 L893.1 255.7 L893.6 257.2 L894.1 258.7 L894.6 260.3 L895.1 261.8 L895.6 263.3 L896.1 264.9 L896.6 266.4 L897.1 268 L897.6 269.5 L898.2 271 L898.7 272.6 L899.2 274.1 L899.7 275.6 L900.2 277.2 L900.7 278.7 L901.2 280.3 L901.7 281.8 L902.2 283.3 L902.7 284.9 L903.2 286.4 L903.7 288 L904.2 289.5 L904.7 291 L905.2 292.6 L905.7 294.1 L906.2 295.7 L906.7 297.2 L907.2 298.7 L907.7 300.3 L908.2 301.8 L908.7 303.4 L909.2 304.9 L909.7 306.5 L910.2 308 L910.7 309.5 L911.2 311.1 L911.7 312.6 L912.2 314.2 L912.7 315.7 L913.2 317.3 L913.7 318.8 L914.2 320.4 L914.7 321.9 L915.2 323.4 L915.7 325 L916.2 326.5 L916.7 328.1 L917.2 329.6 L917.7 331.2 L918.2 332.7 L918.6 334.2 L919.1 335.8 L919.6 337.3 L920.1 338.9 L920.6 340.4 L921.1 342 L921.5 343.5 L922 345 L922.5 346.6 L923 348.1 L923.4 349.7 L923.9 351.2 L924.4 352.7 L924.8 354.3 L925.3 355.8 L925.8 357.4 L926.2 358.9 L926.7 360.4 L927.2 362 L927.6 363.5 L928.1 365.1 L928.5 366.6 L929 368.1 L929.5 369.7 L929.9 371.2 L930.4 372.7 L930.8 374.3 L931.2 375.8 L931.7 377.4"/><path d="M620.8 176.7 L620.6 177.7 L620.5 178.7 L620.3 179.7 L620.1 180.7 L619.9 181.7 L619.8 182.8 L619.6 183.8 L619.4 184.8 L619.2 185.9 L619 187 L618.8 188 L618.6 189.1 L618.5 190.2 L618.3 191.3 L618.1 192.4 L617.9 193.5 L617.7 194.6 L617.6 195.7 L617.4 196.8 L617.2 197.9 L617.1 199 L616.9 200.2 L616.8 201.3 L616.6 202.4 L616.5 203.6 L616.3 204.7 L616.2 205.9 L616.1 207.1 L616 208.2 L615.9 209.4 L615.7 210.6 L615.6 211.8 L615.6 212.9 L615.5 214.1 L615.4 215.3 L615.3 216.5 L615.3 217.7 L615.2 218.9 L615.2 220.1 L615.1 221.3 L615.1 222.6 L615.1 223.8 L615.1 225 L615.1 226.2 L615.1 227.5 L615.1 228.7 L615.1 229.9 L615.2 231.2 L615.2 232.4 L615.3 233.6 L615.4 234.9 L615.5 236.1 L615.5 237.4 L615.7 238.6 L615.8 239.9 L615.9 241.2 L616 242.4 L616.2 243.7 L616.3 244.9 L616.5 246.2 L616.7 247.5 L616.9 248.8 L617.1 250 L617.3 251.3 L617.6 252.6 L617.8 253.9 L618.1 255.2 L618.3 256.4 L618.6 257.7 L618.9 259 L619.2 260.3 L619.5 261.6 L619.9 262.9 L620.2 264.2 L620.6 265.5 L621 266.8 L621.3 268.1 L621.7 269.4 L622.2 270.7 L622.6 272 L623 273.3 L623.5 274.6 L623.9 275.9 L624.4 277.2 L624.9 278.5 L625.4 279.8 L625.9 281.1 L626.4 282.5 L627 283.8 L627.5 285.1 L628.1 286.4 L628.7 287.7 L629.3 289 L629.9 290.4 L630.5 291.7 L631.2 293 L631.8 294.3"/><path d="M891.7 85 L893.1 85.6 L894.5 86.2 L895.9 86.9 L897.3 87.6 L898.7 88.3 L900.1 89.1 L901.5 89.9 L902.9 90.7 L904.3 91.6 L905.7 92.5 L907.1 93.4 L908.5 94.3 L909.9 95.3 L911.3 96.3 L912.7 97.3 L914.1 98.3 L915.5 99.4 L916.9 100.4 L918.3 101.5 L919.7 102.6 L921.2 103.8 L922.6 104.9 L924 106.1 L925.5 107.2 L926.9 108.4 L928.3 109.6 L929.8 110.8 L931.2 112.1 L932.7 113.3 L934.1 114.5 L935.6 115.8 L937 117.1 L938.5 118.4 L939.9 119.6 L941.4 120.9 L942.8 122.3 L944.3 123.6 L945.8 124.9 L947.2 126.2 L948.7 127.6 L950.2 128.9 L951.6 130.3 L953.1 131.6 L954.6 133 L956 134.4 L957.5 135.8 L959 137.2 L960.4 138.6 L961.9 140 L963.3 141.4 L964.8 142.8 L966.3 144.2 L967.7 145.6 L969.2 147 L970.6 148.5 L972.1 149.9 L973.5 151.3 L975 152.8 L976.4 154.2 L977.9 155.6 L979.3 157.1 L980.8 158.5 L982.2 160 L983.6 161.5 L985.1 162.9 L986.5 164.4 L987.9 165.9 L989.3 167.3 L990.7 168.8 L992.1 170.3 L993.5 171.8 L994.9 173.2 L996.3 174.7 L997.7 176.2 L999.1 177.7 L1000.5 179.2 L1001.9 180.7 L1003.2 182.2 L1004.6 183.7 L1005.9 185.2 L1007.3 186.7 L1008.6 188.2 L1010 189.7 L1011.3 191.2 L1012.6 192.7 L1014 194.2 L1015.3 195.7 L1016.6 197.2 L1017.9 198.7 L1019.2 200.2 L1020.5 201.7 L1021.7 203.3 L1023 204.8 L1024.3 206.3 L1025.5 207.8 L1026.8 209.3 L1028 210.9 L1029.3 212.4 L1030.5 213.9 L1031.7 215.4 L1032.9 217 L1034.1 218.5 L1035.3 220 L1036.5 221.5 L1037.7 223.1 L1038.8 224.6 L1040 226.1 L1041.1 227.7 L1042.3 229.2 L1043.4 230.7 L1044.5 232.3 L1045.6 233.8 L1046.7 235.3 L1047.8 236.9 L1048.9 238.4 L1050 239.9 L1051 241.5 L1052.1 243 L1053.1 244.6 L1054.2 246.1 L1055.2 247.7 L1056.2 249.2 L1057.2 250.7 L1058.2 252.3 L1059.2 253.8 L1060.2 255.4 L1061.1 256.9 L1062.1 258.5 L1063 260 L1063.9 261.5 L1064.9 263.1 L1065.8 264.6 L1066.7 266.2 L1067.5 267.7 L1068.4 269.3 L1069.3 270.8 L1070.1 272.4 L1071 273.9 L1071.8 275.5 L1072.6 277 L1073.4 278.6 L1074.2 280.1 L1075 281.7 L1075.7 283.2 L1076.5 284.8 L1077.2 286.3 L1078 287.9 L1078.7 289.4 L1079.4 291 L1080.1 292.5 L1080.8 294.1 L1081.4 295.6 L1082.1 297.2 L1082.7 298.7 L1083.4 300.3 L1084 301.8 L1084.6 303.4 L1085.2 304.9 L1085.8 306.5 L1086.4 308.1 L1086.9 309.6 L1087.5 311.2 L1088 312.7 L1088.5 314.3 L1089 315.8 L1089.5 317.4 L1090 318.9 L1090.5 320.5 L1090.9 322 L1091.4 323.6 L1091.8 325.1 L1092.2 326.7 L1092.6 328.2 L1093 329.8 L1093.4 331.4 L1093.7 332.9 L1094.1 334.5 L1094.4 336 L1094.7 337.6 L1095 339.1 L1095.3 340.7 L1095.6 342.2 L1095.9 343.8 L1096.1 345.3 L1096.4 346.9 L1096.6 348.4 L1096.8 350 L1097 351.5 L1097.2 353.1 L1097.4 354.6 L1097.5 356.2 L1097.7 357.7 L1097.8 359.3 L1098 360.8 L1098.1 362.4 L1098.2 363.9 L1098.2 365.5 L1098.3 367 L1098.4 368.6 L1098.4 370.1 L1098.4 371.7"/><path d="M897.5 53.3 L896.5 52.3 L895.4 51.3 L894.4 50.4 L893.3 49.5 L892.1 48.8 L891 48.1 L889.7 47.6 L888.4 47.2 L887.1 46.9 L885.6 46.7 L884 46.7 L882.3 46.7 L880.5 47 L878.5 47.3 L876.4 47.8 L874.1 48.4 L871.8 49.1 L869.3 49.8 L866.6 50.7 L863.9 51.6 L861.1 52.6 L858.1 53.7 L855.1 54.8 L852 56 L848.8 57.2 L845.6 58.5 L842.3 59.7 L839 61 L835.6 62.4 L832.2 63.7 L828.8 65.1 L825.3 66.5 L821.8 67.9 L818.2 69.3 L814.7 70.8 L811.1 72.2 L807.5 73.7 L803.9 75.2 L800.3 76.6 L796.7 78.1 L793.1 79.6 L789.4 81.1 L785.8 82.7 L782.2 84.2 L778.5 85.7 L774.9 87.2 L771.2 88.7 L767.6 90.3 L763.9 91.8 L760.3 93.4 L756.6 94.9 L753 96.5 L749.3 98 L745.7 99.6 L742.1 101.1 L738.4 102.7 L734.8 104.3 L731.2 105.8 L727.6 107.4 L724 109 L720.4 110.5 L716.9 112.1 L713.3 113.7 L709.7 115.3 L706.2 116.8 L702.7 118.4 L699.1 120 L695.6 121.6 L692.1 123.2 L688.7 124.7 L685.2 126.3 L681.7 127.9 L678.3 129.5 L674.9 131.1 L671.5 132.7 L668.1 134.3 L664.7 135.9 L661.3 137.4 L658 139 L654.6 140.6 L651.3 142.2 L648 143.8 L644.7 145.4 L641.5 147 L638.2 148.6 L635 150.2 L631.8 151.8 L628.6 153.4 L625.4 155 L622.2 156.6 L619.1 158.2 L616 159.8 L612.9 161.4 L609.8 163 L606.8 164.6 L603.7 166.2 L600.7 167.8 L597.7 169.4 L594.8 171 L591.8 172.6 L588.9 174.2 L586 175.8 L583.1 177.4 L580.3 179 L577.5 180.6 L574.6 182.2 L571.9 183.8 L569.1 185.4 L566.4 187 L563.7 188.6 L561 190.2 L558.3 191.9 L555.7 193.5 L553.1 195.1 L550.5 196.7 L547.9 198.3 L545.4 199.9 L542.9 201.5 L540.4 203.1 L538 204.7 L535.5 206.3 L533.1 207.9 L530.8 209.5 L528.4 211.1 L526.1 212.7 L523.8 214.4 L521.5 216 L519.3 217.6 L517.1 219.2 L514.9 220.8 L512.8 222.4 L510.6 224 L508.6 225.6 L506.5 227.2 L504.5 228.8 L502.5 230.4 L500.5 232.1 L498.5 233.7 L496.6 235.3 L494.7 236.9 L492.9 238.5 L491.1 240.1 L489.3 241.7 L487.5 243.3 L485.8 244.9 L484.1 246.5 L482.4 248.2 L480.8 249.8 L479.1 251.4 L477.6 253 L476 254.6 L474.5 256.2 L473 257.8 L471.6 259.4 L470.2 261 L468.8 262.6 L467.4 264.3 L466.1 265.9 L464.8 267.5 L463.6 269.1 L462.3 270.7 L461.1 272.3 L460 273.9 L458.9 275.5 L457.8 277.2 L456.7 278.8 L455.7 280.4 L454.7 282 L453.7 283.6 L452.8 285.2 L451.9 286.8 L451.1 288.4 L450.2 290 L449.4 291.7 L448.7 293.3 L448 294.9 L447.3 296.5 L446.6 298.1 L446 299.7 L445.4 301.3 L444.9 302.9 L444.3 304.5 L443.8 306.2 L443.4 307.8 L443 309.4 L442.6 311 L442.2 312.6 L441.9 314.2 L441.7 315.8 L441.4 317.4 L441.2 319.1 L441 320.7 L440.9 322.3 L440.8 323.9 L440.7 325.5 L440.7 327.1 L440.6 328.7 L440.7 330.3 L440.7 332 L440.8 333.6 L441 335.2"/><path d="M891.7 68.3 L892.6 69.4 L893.5 70.6 L894.4 71.8 L895.3 73 L896.1 74.2 L897 75.5 L897.9 76.8 L898.8 78.1 L899.7 79.4 L900.5 80.7 L901.4 82.1 L902.3 83.4 L903.2 84.8 L904 86.2 L904.9 87.6 L905.8 89 L906.7 90.4 L907.5 91.8 L908.4 93.3 L909.3 94.7 L910.2 96.2 L911 97.6 L911.9 99.1 L912.8 100.6 L913.7 102 L914.5 103.5 L915.4 105 L916.3 106.5 L917.2 108 L918 109.5 L918.9 111 L919.8 112.5 L920.7 114 L921.6 115.6 L922.4 117.1 L923.3 118.6 L924.2 120.1 L925 121.7 L925.9 123.2 L926.8 124.7 L927.7 126.3 L928.5 127.8 L929.4 129.3 L930.3 130.9 L931.1 132.4 L932 134 L932.8 135.5 L933.7 137.1 L934.6 138.6 L935.4 140.2 L936.3 141.7 L937.1 143.3 L938 144.9 L938.8 146.4 L939.7 148 L940.5 149.6 L941.4 151.1 L942.2 152.7 L943 154.3 L943.9 155.8 L944.7 157.4 L945.5 159 L946.3 160.5 L947.2 162.1 L948 163.7 L948.8 165.3 L949.6 166.8 L950.4 168.4 L951.2 170 L952 171.6 L952.8 173.1 L953.6 174.7 L954.4 176.3 L955.2 177.9 L956 179.5 L956.8 181 L957.6 182.6 L958.3 184.2 L959.1 185.8 L959.9 187.4 L960.6 189 L961.4 190.5 L962.1 192.1 L962.9 193.7 L963.6 195.3 L964.4 196.9 L965.1 198.5 L965.9 200.1 L966.6 201.7 L967.3 203.2 L968 204.8 L968.7 206.4 L969.5 208 L970.2 209.6 L970.9 211.2 L971.5 212.8 L972.2 214.4 L972.9 216 L973.6 217.6 L974.3 219.2 L974.9 220.7 L975.6 222.3 L976.3 223.9 L976.9 225.5 L977.6 227.1 L978.2 228.7 L978.9 230.3 L979.5 231.9 L980.1 233.5 L980.7 235.1 L981.3 236.7 L982 238.3 L982.6 239.9 L983.2 241.5 L983.7 243.1 L984.3 244.7 L984.9 246.3 L985.5 247.9 L986.1 249.5 L986.6 251.1 L987.2 252.6 L987.7 254.2 L988.3 255.8 L988.8 257.4 L989.3 259 L989.9 260.6 L990.4 262.2 L990.9 263.8 L991.4 265.4 L991.9 267 L992.4 268.6 L992.9 270.2 L993.3 271.8 L993.8 273.4 L994.3 275 L994.7 276.6 L995.2 278.2 L995.6 279.8 L996.1 281.4 L996.5 283 L996.9 284.6 L997.3 286.2 L997.7 287.8 L998.1 289.4 L998.5 291 L998.9 292.6 L999.3 294.2 L999.7 295.8 L1000.1 297.4 L1000.4 299 L1000.8 300.6 L1001.1 302.2 L1001.4 303.8 L1001.8 305.4 L1002.1 307 L1002.4 308.6 L1002.7 310.2 L1003 311.8 L1003.3 313.4 L1003.6 315 L1003.9 316.6 L1004.2 318.2 L1004.4 319.8 L1004.7 321.4 L1004.9 323 L1005.2 324.6 L1005.4 326.2 L1005.6 327.8 L1005.8 329.4 L1006.1 331 L1006.3 332.6 L1006.5 334.2 L1006.6 335.8 L1006.8 337.4 L1007 339 L1007.2 340.6 L1007.3 342.2 L1007.5 343.8 L1007.6 345.4 L1007.7 347 L1007.9 348.6 L1008 350.2 L1008.1 351.8 L1008.2 353.4 L1008.3 355 L1008.4 356.6 L1008.5 358.2 L1008.5 359.8 L1008.6 361.4 L1008.7 363 L1008.7 364.6 L1008.7 366.2 L1008.8 367.8 L1008.8 369.4 L1008.8 371 L1008.8 372.6 L1008.8 374.2 L1008.8 375.8 L1008.8 377.4 L1008.8 379 L1008.8 380.6"/><path d="M886.7 45.4 L884.6 46.7 L882.5 48 L880.4 49.4 L878.2 50.8 L876 52.3 L873.8 53.7 L871.5 55.2 L869.3 56.7 L867 58.2 L864.8 59.7 L862.5 61.2 L860.2 62.8 L857.9 64.3 L855.6 65.9 L853.3 67.4 L851 69 L848.7 70.5 L846.4 72.1 L844.1 73.7 L841.8 75.2 L839.5 76.8 L837.2 78.4 L834.9 80 L832.6 81.6 L830.3 83.1 L828 84.7 L825.7 86.3 L823.4 87.9 L821.1 89.5 L818.8 91.1 L816.6 92.7 L814.3 94.3 L812 95.9 L809.8 97.5 L807.5 99.1 L805.3 100.7 L803 102.3 L800.8 103.9 L798.5 105.5 L796.3 107.1 L794.1 108.7 L791.9 110.3 L789.7 111.9 L787.5 113.5 L785.3 115.1 L783.1 116.7 L781 118.3 L778.8 119.9 L776.6 121.5 L774.5 123.1 L772.4 124.8 L770.2 126.4 L768.1 128 L766 129.6 L763.9 131.2 L761.8 132.8 L759.8 134.4 L757.7 136 L755.6 137.6 L753.6 139.2 L751.5 140.9 L749.5 142.5 L747.5 144.1 L745.5 145.7 L743.5 147.3 L741.5 148.9 L739.6 150.5 L737.6 152.1 L735.7 153.8 L733.7 155.4 L731.8 157 L729.9 158.6 L728 160.2 L726.1 161.8 L724.3 163.4 L722.4 165.1 L720.6 166.7 L718.7 168.3 L716.9 169.9 L715.1 171.5 L713.3 173.1 L711.6 174.7 L709.8 176.4 L708.1 178 L706.3 179.6 L704.6 181.2 L702.9 182.8 L701.2 184.4 L699.6 186.1 L697.9 187.7 L696.3 189.3 L694.6 190.9 L693 192.5 L691.4 194.1 L689.9 195.7 L688.3 197.4 L686.8 199 L685.2 200.6 L683.7 202.2 L682.2 203.8 L680.7 205.4 L679.3 207.1 L677.8 208.7 L676.4 210.3 L675 211.9 L673.6 213.5 L672.2 215.1 L670.8 216.8 L669.5 218.4 L668.2 220 L666.8 221.6 L665.6 223.2 L664.3 224.8 L663 226.5 L661.8 228.1 L660.6 229.7 L659.4 231.3 L658.2 232.9 L657 234.5 L655.9 236.2 L654.7 237.8 L653.6 239.4 L652.5 241 L651.4 242.6 L650.4 244.3 L649.3 245.9 L648.3 247.5 L647.3 249.1 L646.4 250.7 L645.4 252.3 L644.4 254 L643.5 255.6 L642.6 257.2 L641.7 258.8 L640.9 260.4 L640 262 L639.2 263.7 L638.4 265.3 L637.6 266.9 L636.9 268.5 L636.1 270.1 L635.4 271.7 L634.7 273.4 L634 275 L633.3 276.6 L632.7 278.2 L632.1 279.8 L631.5 281.5 L630.9 283.1 L630.3 284.7 L629.8 286.3 L629.2 287.9 L628.7 289.5 L628.3 291.2 L627.8 292.8 L627.3 294.4 L626.9 296 L626.5 297.6 L626.2 299.3 L625.8 300.9 L625.5 302.5 L625.1 304.1 L624.8 305.7 L624.6 307.3 L624.3 309 L624.1 310.6 L623.9 312.2 L623.7 313.8 L623.5 315.4 L623.4 317 L623.2 318.7 L623.1 320.3 L623 321.9 L623 323.5 L622.9 325.1 L622.9 326.8 L622.9 328.4 L622.9 330 L623 331.6 L623 333.2 L623.1 334.8 L623.2 336.5 L623.3 338.1 L623.5 339.7 L623.6 341.3 L623.8 342.9 L624 344.6 L624.2 346.2 L624.5 347.8 L624.8 349.4 L625.1 351 L625.4 352.6 L625.7 354.3 L626 355.9 L626.4 357.5 L626.8 359.1 L627.2 360.7 L627.7 362.3 L628.1 364 L628.6 365.6 L629.1 367.2"/><path d="M879.2 57.9 L877.4 59.3 L875.5 60.7 L873.6 62.2 L871.7 63.6 L869.8 65.1 L867.9 66.6 L866 68.1 L864.1 69.6 L862.2 71.1 L860.3 72.6 L858.4 74.1 L856.4 75.7 L854.5 77.2 L852.6 78.7 L850.6 80.3 L848.7 81.8 L846.8 83.4 L844.8 84.9 L842.9 86.5 L841 88.1 L839 89.6 L837.1 91.2 L835.2 92.8 L833.3 94.3 L831.4 95.9 L829.4 97.5 L827.5 99.1 L825.6 100.7 L823.7 102.2 L821.8 103.8 L819.9 105.4 L818 107 L816.1 108.6 L814.3 110.2 L812.4 111.8 L810.5 113.4 L808.7 114.9 L806.8 116.5 L804.9 118.1 L803.1 119.7 L801.3 121.3 L799.4 122.9 L797.6 124.5 L795.8 126.1 L794 127.7 L792.2 129.3 L790.4 130.9 L788.6 132.5 L786.8 134.1 L785 135.7 L783.2 137.3 L781.5 138.9 L779.7 140.5 L778 142.1 L776.3 143.7 L774.5 145.3 L772.8 146.9 L771.1 148.6 L769.4 150.2 L767.7 151.8 L766.1 153.4 L764.4 155 L762.7 156.6 L761.1 158.2 L759.5 159.8 L757.8 161.4 L756.2 163 L754.6 164.6 L753 166.2 L751.4 167.8 L749.9 169.4 L748.3 171.1 L746.7 172.7 L745.2 174.3 L743.7 175.9 L742.2 177.5 L740.7 179.1 L739.2 180.7 L737.7 182.3 L736.2 183.9 L734.8 185.5 L733.3 187.2 L731.9 188.8 L730.5 190.4 L729.1 192 L727.7 193.6 L726.3 195.2 L724.9 196.8 L723.6 198.4 L722.2 200 L720.9 201.7 L719.6 203.3 L718.3 204.9 L717 206.5 L715.7 208.1 L714.5 209.7 L713.2 211.3 L712 212.9 L710.8 214.6 L709.6 216.2 L708.4 217.8 L707.2 219.4 L706 221 L704.9 222.6 L703.8 224.2 L702.7 225.9 L701.5 227.5 L700.5 229.1 L699.4 230.7 L698.3 232.3 L697.3 233.9 L696.3 235.5 L695.3 237.1 L694.3 238.8 L693.3 240.4 L692.3 242 L691.4 243.6 L690.4 245.2 L689.5 246.8 L688.6 248.4 L687.7 250.1 L686.9 251.7 L686 253.3 L685.2 254.9 L684.4 256.5 L683.6 258.1 L682.8 259.7 L682 261.4 L681.2 263 L680.5 264.6 L679.8 266.2 L679.1 267.8 L678.4 269.4 L677.7 271.1 L677.1 272.7 L676.4 274.3 L675.8 275.9 L675.2 277.5 L674.6 279.1 L674 280.7 L673.5 282.4 L673 284 L672.4 285.6 L671.9 287.2 L671.4 288.8 L671 290.4 L670.5 292 L670.1 293.7 L669.7 295.3 L669.3 296.9 L668.9 298.5 L668.5 300.1 L668.2 301.7 L667.9 303.4 L667.6 305 L667.3 306.6 L667 308.2 L666.7 309.8 L666.5 311.4 L666.3 313 L666.1 314.7 L665.9 316.3 L665.7 317.9 L665.5 319.5 L665.4 321.1 L665.3 322.7 L665.2 324.3 L665.1 326 L665.1 327.6 L665 329.2 L665 330.8 L665 332.4 L665 334 L665 335.7 L665 337.3 L665.1 338.9 L665.2 340.5 L665.3 342.1 L665.4 343.7 L665.5 345.3 L665.7 347 L665.8 348.6 L666 350.2 L666.2 351.8 L666.5 353.4 L666.7 355 L666.9 356.7 L667.2 358.3 L667.5 359.9 L667.8 361.5 L668.1 363.1 L668.5 364.7 L668.8 366.3 L669.2 368 L669.6 369.6 L670 371.2 L670.5 372.8 L670.9 374.4 L671.4 376 L671.9 377.6 L672.4 379.3"/><path d="M848.7 49.3 L852.6 47.7 L856.5 46.1 L860.4 44.4 L864.3 42.8 L868.3 41.2 L872.2 39.6 L876.1 38 L880 36.3 L883.9 34.7 L887.8 33.1 L891.7 31.5 L895.6 29.9 L899.3 28.4 L901.7 27.8 L902.8 29.1 L903.9 30.7 L905 32.3 L906.2 33.9 L907.3 35.5 L908.5 37.1 L909.6 38.7 L910.8 40.4 L911.9 42 L913.1 43.6 L914.2 45.2 L915.4 46.8 L916.5 48.4 L917.7 50.1 L918.8 51.7 L920 53.3 L921.1 54.9 L922.2 56.5 L923.4 58.2 L924.5 59.8 L925.7 61.4 L926.8 63 L927.9 64.7 L929.1 66.3 L930.2 67.9 L931.3 69.5 L932.4 71.1 L933.6 72.8 L934.7 74.4 L935.8 76 L936.9 77.6 L938 79.2 L939.1 80.9 L940.2 82.5 L941.3 84.1 L942.4 85.7 L943.5 87.3 L944.6 89 L945.7 90.6 L946.8 92.2 L947.9 93.8 L949 95.4 L950 97.1 L951.1 98.7 L952.2 100.3 L953.3 101.9 L954.3 103.5 L955.4 105.2 L956.4 106.8 L957.5 108.4 L958.5 110 L959.6 111.7 L960.6 113.3 L961.6 114.9 L962.7 116.5 L963.7 118.1 L964.7 119.8 L965.7 121.4 L966.7 123 L967.7 124.6 L968.7 126.2 L969.7 127.9 L970.7 129.5 L971.7 131.1 L972.7 132.7 L973.7 134.3 L974.6 136 L975.6 137.6 L976.5 139.2 L977.5 140.8 L978.4 142.4 L979.4 144.1 L980.3 145.7 L981.2 147.3 L982.2 148.9 L983.1 150.6 L984 152.2 L984.9 153.8 L985.8 155.4 L986.7 157 L987.6 158.7 L988.5 160.3 L989.3 161.9 L990.2 163.5 L991.1 165.1 L991.9 166.8 L992.8 168.4 L993.6 170 L994.4 171.6 L995.2 173.2 L996.1 174.9 L996.9 176.5 L997.7 178.1 L998.5 179.7 L999.3 181.4 L1000 183 L1000.8 184.6 L1001.6 186.2 L1002.3 187.8 L1003.1 189.5 L1003.8 191.1 L1004.6 192.7 L1005.3 194.3 L1006 195.9 L1006.7 197.6 L1007.5 199.2 L1008.1 200.8 L1008.8 202.4 L1009.5 204 L1010.2 205.7 L1010.9 207.3 L1011.5 208.9 L1012.2 210.5 L1012.8 212.1 L1013.4 213.8 L1014.1 215.4 L1014.7 217 L1015.3 218.6 L1015.9 220.3 L1016.5 221.9 L1017 223.5 L1017.6 225.1 L1018.2 226.7 L1018.7 228.4 L1019.3 230 L1019.8 231.6 L1020.4 233.2 L1020.9 234.8 L1021.4 236.5 L1021.9 238.1 L1022.4 239.7 L1022.9 241.3 L1023.3 242.9 L1023.8 244.6 L1024.3 246.2 L1024.7 247.8 L1025.1 249.4 L1025.6 251 L1026 252.7 L1026.4 254.3 L1026.8 255.9 L1027.2 257.5 L1027.6 259.2 L1027.9 260.8 L1028.3 262.4 L1028.7 264 L1029 265.6 L1029.3 267.3 L1029.7 268.9 L1030 270.5 L1030.3 272.1 L1030.6 273.7 L1030.9 275.4 L1031.1 277 L1031.4 278.6 L1031.6 280.2 L1031.9 281.8 L1032.1 283.5 L1032.4 285.1 L1032.6 286.7 L1032.8 288.3 L1033 289.9 L1033.2 291.6 L1033.3 293.2 L1033.5 294.8 L1033.7 296.4 L1033.8 298.1 L1034 299.7 L1034.1 301.3 L1034.2 302.9 L1034.3 304.5 L1034.4 306.2 L1034.5 307.8 L1034.6 309.4 L1034.6 311 L1034.7 312.6 L1034.7 314.3 L1034.8 315.9 L1034.8 317.5 L1034.8 319.1 L1034.8 320.7 L1034.8 322.4 L1034.8 324 L1034.8 325.6 L1034.8 327.2 L1034.7 328.9 L1034.7 330.5"/><path d="M850 52.5 L853.6 50.9 L857.2 49.4 L860.8 47.9 L864.4 46.4 L867.9 44.9 L871.3 43.4 L874.8 42 L878.1 40.6 L881.3 39.2 L884.4 38 L887.3 36.8 L890 35.8 L892.5 35 L894.6 34.5 L896.3 34.4 L897.9 34.5 L899.2 35 L900.4 35.8 L901.6 36.8 L902.7 38 L903.9 39.2 L905.1 40.6 L906.3 41.9 L907.5 43.4 L908.8 44.9 L910 46.3 L911.2 47.9 L912.5 49.4 L913.7 50.9 L915 52.5 L916.3 54.1 L917.5 55.6 L918.8 57.2 L920.1 58.8 L921.3 60.4 L922.6 62 L923.9 63.6 L925.2 65.2 L926.4 66.8 L927.7 68.4 L929 70 L930.2 71.6 L931.5 73.2 L932.8 74.8 L934 76.4 L935.3 78 L936.6 79.6 L937.8 81.2 L939.1 82.8 L940.3 84.5 L941.6 86.1 L942.9 87.7 L944.1 89.3 L945.3 90.9 L946.6 92.5 L947.8 94.2 L949.1 95.8 L950.3 97.4 L951.5 99 L952.8 100.6 L954 102.3 L955.2 103.9 L956.4 105.5 L957.6 107.1 L958.8 108.7 L960 110.4 L961.2 112 L962.4 113.6 L963.6 115.2 L964.8 116.9 L966 118.5 L967.2 120.1 L968.3 121.7 L969.5 123.3 L970.7 125 L971.8 126.6 L973 128.2 L974.1 129.8 L975.3 131.5 L976.4 133.1 L977.5 134.7 L978.7 136.3 L979.8 138 L980.9 139.6 L982 141.2 L983.1 142.8 L984.2 144.5 L985.3 146.1 L986.4 147.7 L987.4 149.3 L988.5 151 L989.6 152.6 L990.6 154.2 L991.7 155.8 L992.7 157.5 L993.8 159.1 L994.8 160.7 L995.8 162.3 L996.8 164 L997.8 165.6 L998.8 167.2 L999.8 168.9 L1000.8 170.5 L1001.8 172.1 L1002.8 173.7 L1003.7 175.4 L1004.7 177 L1005.6 178.6 L1006.6 180.2 L1007.5 181.9 L1008.4 183.5 L1009.4 185.1 L1010.3 186.7 L1011.2 188.4 L1012.1 190 L1012.9 191.6 L1013.8 193.3 L1014.7 194.9 L1015.5 196.5 L1016.4 198.1 L1017.2 199.8 L1018.1 201.4 L1018.9 203 L1019.7 204.6 L1020.5 206.3 L1021.3 207.9 L1022.1 209.5 L1022.9 211.2 L1023.6 212.8 L1024.4 214.4 L1025.1 216 L1025.9 217.7 L1026.6 219.3 L1027.3 220.9 L1028.1 222.5 L1028.8 224.2 L1029.5 225.8 L1030.1 227.4 L1030.8 229.1 L1031.5 230.7 L1032.1 232.3 L1032.8 233.9 L1033.4 235.6 L1034 237.2 L1034.6 238.8 L1035.3 240.4 L1035.8 242.1 L1036.4 243.7 L1037 245.3 L1037.6 247 L1038.1 248.6 L1038.7 250.2 L1039.2 251.8 L1039.7 253.5 L1040.2 255.1 L1040.7 256.7 L1041.2 258.3 L1041.7 260 L1042.2 261.6 L1042.6 263.2 L1043.1 264.9 L1043.5 266.5 L1043.9 268.1 L1044.4 269.7 L1044.8 271.4 L1045.2 273 L1045.5 274.6 L1045.9 276.2 L1046.3 277.9 L1046.6 279.5 L1047 281.1 L1047.3 282.8 L1047.6 284.4 L1047.9 286 L1048.2 287.6 L1048.5 289.3 L1048.8 290.9 L1049 292.5 L1049.3 294.2 L1049.5 295.8 L1049.8 297.4 L1050 299 L1050.2 300.7 L1050.4 302.3 L1050.6 303.9 L1050.7 305.5 L1050.9 307.2 L1051 308.8 L1051.2 310.4 L1051.3 312.1 L1051.4 313.7 L1051.5 315.3 L1051.6 316.9 L1051.7 318.6 L1051.8 320.2 L1051.8 321.8 L1051.9 323.5 L1051.9 325.1 L1051.9 326.7 L1051.9 328.3"/><path d="M893.3 70.4 L891.6 70.7 L890 71.1 L888.3 71.5 L886.6 72 L884.9 72.5 L883.1 73.1 L881.4 73.8 L879.6 74.4 L877.8 75.2 L876 75.9 L874.2 76.7 L872.3 77.6 L870.4 78.4 L868.6 79.4 L866.6 80.3 L864.7 81.3 L862.8 82.3 L860.8 83.3 L858.8 84.4 L856.8 85.5 L854.8 86.6 L852.7 87.7 L850.7 88.9 L848.6 90 L846.6 91.2 L844.5 92.4 L842.4 93.7 L840.3 94.9 L838.1 96.2 L836 97.4 L833.9 98.7 L831.7 100 L829.6 101.3 L827.4 102.6 L825.2 104 L823.1 105.3 L820.9 106.7 L818.7 108 L816.5 109.4 L814.3 110.8 L812.1 112.2 L809.9 113.6 L807.7 115 L805.5 116.4 L803.3 117.8 L801.1 119.2 L798.9 120.6 L796.7 122.1 L794.5 123.5 L792.3 124.9 L790.1 126.4 L787.9 127.8 L785.7 129.3 L783.5 130.8 L781.3 132.2 L779.1 133.7 L777 135.2 L774.8 136.6 L772.6 138.1 L770.4 139.6 L768.3 141.1 L766.1 142.6 L764 144.1 L761.8 145.6 L759.7 147.1 L757.5 148.6 L755.4 150.1 L753.3 151.6 L751.2 153.1 L749.1 154.6 L747 156.1 L744.9 157.6 L742.8 159.2 L740.7 160.7 L738.7 162.2 L736.6 163.7 L734.6 165.2 L732.5 166.8 L730.5 168.3 L728.5 169.8 L726.5 171.4 L724.5 172.9 L722.5 174.4 L720.5 176 L718.6 177.5 L716.6 179 L714.7 180.6 L712.7 182.1 L710.8 183.7 L708.9 185.2 L707 186.8 L705.1 188.3 L703.3 189.9 L701.4 191.4 L699.6 193 L697.7 194.5 L695.9 196.1 L694.1 197.6 L692.3 199.2 L690.5 200.7 L688.8 202.3 L687 203.8 L685.3 205.4 L683.6 206.9 L681.9 208.5 L680.2 210.1 L678.5 211.6 L676.9 213.2 L675.2 214.7 L673.6 216.3 L672 217.9 L670.4 219.4 L668.8 221 L667.2 222.6 L665.7 224.1 L664.1 225.7 L662.6 227.3 L661.1 228.8 L659.6 230.4 L658.2 232 L656.7 233.5 L655.3 235.1 L653.9 236.7 L652.5 238.2 L651.1 239.8 L649.7 241.4 L648.4 242.9 L647 244.5 L645.7 246.1 L644.4 247.7 L643.2 249.2 L641.9 250.8 L640.7 252.4 L639.4 253.9 L638.2 255.5 L637.1 257.1 L635.9 258.7 L634.7 260.2 L633.6 261.8 L632.5 263.4 L631.4 265 L630.3 266.5 L629.3 268.1 L628.3 269.7 L627.3 271.3 L626.3 272.8 L625.3 274.4 L624.3 276 L623.4 277.6 L622.5 279.1 L621.6 280.7 L620.7 282.3 L619.9 283.9 L619 285.4 L618.2 287 L617.4 288.6 L616.6 290.2 L615.9 291.8 L615.2 293.3 L614.4 294.9 L613.8 296.5 L613.1 298.1 L612.4 299.6 L611.8 301.2 L611.2 302.8 L610.6 304.4 L610 306 L609.5 307.5 L609 309.1 L608.5 310.7 L608 312.3 L607.5 313.8 L607.1 315.4 L606.7 317 L606.3 318.6 L605.9 320.2 L605.5 321.7 L605.2 323.3 L604.9 324.9 L604.6 326.5 L604.3 328.1 L604.1 329.6 L603.8 331.2 L603.6 332.8 L603.4 334.4 L603.3 335.9 L603.1 337.5 L603 339.1 L602.9 340.7 L602.8 342.3 L602.8 343.8 L602.7 345.4 L602.7 347 L602.7 348.6 L602.7 350.2 L602.8 351.7 L602.9 353.3 L602.9 354.9 L603.1 356.5 L603.2 358 L603.3 359.6"/><path d="M925 87.5 L924.7 88.9 L924.3 90.3 L924 91.7 L923.7 93.1 L923.4 94.5 L923 96 L922.7 97.4 L922.4 98.9 L922.1 100.3 L921.7 101.8 L921.4 103.3 L921.1 104.8 L920.8 106.2 L920.5 107.7 L920.1 109.2 L919.8 110.7 L919.5 112.2 L919.2 113.7 L918.9 115.2 L918.5 116.7 L918.2 118.2 L917.9 119.8 L917.6 121.3 L917.2 122.8 L916.9 124.3 L916.6 125.9 L916.3 127.4 L915.9 128.9 L915.6 130.5 L915.3 132 L915 133.6 L914.6 135.1 L914.3 136.6 L914 138.2 L913.6 139.7 L913.3 141.3 L913 142.8 L912.6 144.4 L912.3 146 L912 147.5 L911.6 149.1 L911.3 150.6 L911 152.2 L910.6 153.8 L910.3 155.3 L909.9 156.9 L909.6 158.5 L909.3 160 L908.9 161.6 L908.6 163.2 L908.2 164.7 L907.9 166.3 L907.6 167.9 L907.2 169.4 L906.9 171 L906.5 172.6 L906.2 174.2 L905.8 175.7 L905.5 177.3 L905.2 178.9 L904.8 180.5 L904.5 182.1 L904.1 183.6 L903.8 185.2 L903.4 186.8 L903.1 188.4 L902.8 190 L902.4 191.5 L902.1 193.1 L901.7 194.7 L901.4 196.3 L901 197.9 L900.7 199.5 L900.3 201.1 L900 202.6 L899.7 204.2 L899.3 205.8 L899 207.4 L898.6 209 L898.3 210.6 L897.9 212.2 L897.6 213.8 L897.2 215.3 L896.9 216.9 L896.6 218.5 L896.2 220.1 L895.9 221.7 L895.5 223.3 L895.2 224.9 L894.9 226.5 L894.5 228.1 L894.2 229.7 L893.8 231.3 L893.5 232.9 L893.2 234.4 L892.8 236 L892.5 237.6 L892.2 239.2 L891.8 240.8 L891.5 242.4 L891.2 244 L890.8 245.6 L890.5 247.2 L890.2 248.8 L889.8 250.4 L889.5 252 L889.2 253.6 L888.9 255.2 L888.5 256.8 L888.2 258.4 L887.9 260 L887.6 261.6 L887.2 263.2 L886.9 264.7 L886.6 266.3 L886.3 267.9 L886 269.5 L885.7 271.1 L885.3 272.7 L885 274.3 L884.7 275.9 L884.4 277.5 L884.1 279.1 L883.8 280.7 L883.5 282.3 L883.2 283.9 L882.9 285.5 L882.6 287.1 L882.3 288.7 L882 290.3 L881.7 291.9 L881.4 293.5 L881.1 295.1 L880.8 296.7 L880.5 298.3 L880.2 299.9 L879.9 301.5 L879.6 303.1 L879.3 304.7 L879 306.3 L878.8 307.9 L878.5 309.5 L878.2 311.1 L877.9 312.7 L877.7 314.3 L877.4 315.9 L877.1 317.5 L876.8 319.1 L876.6 320.7 L876.3 322.3 L876 323.9 L875.8 325.5 L875.5 327.1 L875.3 328.7 L875 330.3 L874.7 331.9 L874.5 333.5 L874.2 335.1 L874 336.7 L873.7 338.3 L873.5 339.9 L873.3 341.4 L873 343 L872.8 344.6 L872.5 346.2 L872.3 347.8 L872.1 349.4 L871.8 351 L871.6 352.6 L871.4 354.2 L871.2 355.8 L870.9 357.4 L870.7 359 L870.5 360.6 L870.3 362.2 L870.1 363.8 L869.9 365.4 L869.7 367 L869.5 368.6 L869.3 370.2 L869.1 371.8 L868.9 373.4 L868.7 375 L868.5 376.6 L868.3 378.2 L868.1 379.8 L867.9 381.4 L867.7 383 L867.5 384.6 L867.4 386.2 L867.2 387.8 L867 389.4 L866.9 391 L866.7 392.5 L866.5 394.1 L866.4 395.7 L866.2 397.3 L866 398.9 L865.9 400.5 L865.7 402.1 L865.6 403.7"/><path d="M939.2 90.8 L940.6 92.3 L942 93.9 L943.3 95.4 L944.7 97 L946.1 98.5 L947.4 100.1 L948.8 101.6 L950.2 103.2 L951.6 104.8 L952.9 106.3 L954.3 107.9 L955.6 109.5 L957 111 L958.4 112.6 L959.7 114.2 L961.1 115.7 L962.4 117.3 L963.7 118.9 L965.1 120.5 L966.4 122.1 L967.7 123.6 L969.1 125.2 L970.4 126.8 L971.7 128.4 L973 130 L974.3 131.6 L975.6 133.2 L976.9 134.7 L978.2 136.3 L979.5 137.9 L980.8 139.5 L982.1 141.1 L983.4 142.7 L984.6 144.3 L985.9 145.9 L987.1 147.5 L988.4 149.1 L989.6 150.7 L990.9 152.3 L992.1 153.9 L993.3 155.5 L994.6 157.1 L995.8 158.7 L997 160.3 L998.2 161.9 L999.4 163.5 L1000.6 165.1 L1001.7 166.7 L1002.9 168.3 L1004.1 169.9 L1005.2 171.5 L1006.4 173.1 L1007.5 174.7 L1008.7 176.3 L1009.8 177.9 L1010.9 179.5 L1012 181.1 L1013.1 182.7 L1014.2 184.3 L1015.3 185.9 L1016.4 187.5 L1017.5 189.1 L1018.5 190.7 L1019.6 192.3 L1020.6 193.9 L1021.7 195.5 L1022.7 197.1 L1023.7 198.7 L1024.7 200.3 L1025.7 202 L1026.7 203.6 L1027.7 205.2 L1028.7 206.8 L1029.6 208.4 L1030.6 210 L1031.5 211.6 L1032.5 213.2 L1033.4 214.8 L1034.3 216.4 L1035.2 218 L1036.1 219.6 L1037 221.2 L1037.9 222.8 L1038.8 224.5 L1039.6 226.1 L1040.5 227.7 L1041.3 229.3 L1042.1 230.9 L1042.9 232.5 L1043.8 234.1 L1044.5 235.7 L1045.3 237.3 L1046.1 238.9 L1046.9 240.5 L1047.6 242.2 L1048.4 243.8 L1049.1 245.4 L1049.8 247 L1050.5 248.6 L1051.2 250.2 L1051.9 251.8 L1052.6 253.4 L1053.3 255 L1053.9 256.6 L1054.5 258.3 L1055.2 259.9 L1055.8 261.5 L1056.4 263.1 L1057 264.7 L1057.6 266.3 L1058.2 267.9 L1058.7 269.5 L1059.3 271.1 L1059.8 272.8 L1060.3 274.4 L1060.9 276 L1061.4 277.6 L1061.9 279.2 L1062.3 280.8 L1062.8 282.4 L1063.3 284 L1063.7 285.6 L1064.1 287.3 L1064.5 288.9 L1065 290.5 L1065.4 292.1 L1065.7 293.7 L1066.1 295.3 L1066.5 296.9 L1066.8 298.5 L1067.1 300.1 L1067.5 301.8 L1067.8 303.4 L1068.1 305 L1068.4 306.6 L1068.6 308.2 L1068.9 309.8 L1069.1 311.4 L1069.4 313 L1069.6 314.7 L1069.8 316.3 L1070 317.9 L1070.2 319.5 L1070.4 321.1 L1070.5 322.7 L1070.7 324.3 L1070.8 325.9 L1070.9 327.5 L1071 329.2 L1071.1 330.8 L1071.2 332.4 L1071.3 334 L1071.4 335.6 L1071.4 337.2 L1071.4 338.8 L1071.5 340.4 L1071.5 342 L1071.5 343.7 L1071.4 345.3 L1071.4 346.9 L1071.4 348.5 L1071.3 350.1 L1071.2 351.7 L1071.2 353.3 L1071.1 354.9 L1071 356.5 L1070.9 358.2 L1070.7 359.8 L1070.6 361.4 L1070.4 363 L1070.3 364.6 L1070.1 366.2 L1069.9 367.8 L1069.7 369.4 L1069.5 371 L1069.2 372.7 L1069 374.3 L1068.7 375.9 L1068.5 377.5 L1068.2 379.1 L1067.9 380.7 L1067.6 382.3 L1067.3 383.9 L1066.9 385.5 L1066.6 387.2 L1066.3 388.8 L1065.9 390.4 L1065.5 392 L1065.1 393.6 L1064.7 395.2 L1064.3 396.8 L1063.9 398.4 L1063.4 400 L1063 401.6 L1062.5 403.3 L1062.1 404.9 L1061.6 406.5 L1061.1 408.1 L1060.6 409.7 L1060 411.3 L1059.5 412.9"/><path d="M990 85 L992.6 86.6 L995.3 88.2 L997.9 89.8 L1000.5 91.4 L1003.1 93 L1005.7 94.6 L1008.4 96.2 L1011 97.8 L1013.5 99.4 L1016.1 101 L1018.7 102.6 L1021.3 104.2 L1023.8 105.8 L1026.4 107.4 L1028.9 109 L1031.5 110.6 L1034 112.2 L1036.5 113.8 L1039 115.4 L1041.5 117 L1044 118.7 L1046.5 120.3 L1049 121.9 L1051.4 123.5 L1053.9 125.1 L1056.3 126.7 L1058.7 128.3 L1061.2 129.9 L1063.6 131.5 L1065.9 133.1 L1068.3 134.8 L1070.7 136.4 L1073.1 138 L1075.4 139.6 L1077.7 141.2 L1080 142.8 L1082.3 144.4 L1084.6 146 L1086.9 147.7 L1089.2 149.3 L1091.4 150.9 L1093.7 152.5 L1095.9 154.1 L1098.1 155.7 L1100.3 157.3 L1102.5 159 L1104.6 160.6 L1106.8 162.2 L1108.9 163.8 L1111 165.4 L1113.1 167 L1115.2 168.7 L1117.3 170.3 L1119.4 171.9 L1121.4 173.5 L1123.4 175.1 L1125.4 176.7 L1127.4 178.3 L1129.4 180 L1131.4 181.6 L1133.3 183.2 L1135.2 184.8 L1137.1 186.4 L1139 188 L1140.9 189.7 L1142.7 191.3 L1144.6 192.9 L1146.4 194.5 L1148.2 196.1 L1150 197.7 L1151.7 199.4 L1153.5 201 L1155.2 202.6 L1156.9 204.2 L1158.6 205.8 L1160.2 207.4 L1161.9 209.1 L1163.5 210.7 L1165.1 212.3 L1166.7 213.9 L1168.3 215.5 L1169.8 217.1 L1171.3 218.8 L1172.9 220.4 L1174.3 222 L1175.8 223.6 L1177.3 225.2 L1178.7 226.8 L1180.1 228.5 L1181.5 230.1 L1182.8 231.7 L1184.2 233.3 L1185.5 234.9 L1186.8 236.6 L1188.1 238.2 L1189.3 239.8 L1190.6 241.4 L1191.8 243 L1193 244.6 L1194.1 246.3 L1195.3 247.9 L1196.4 249.5 L1197.5 251.1 L1198.6 252.7 L1199.7 254.3 L1200.7 256 L1201.7 257.6 L1202.7 259.2 L1203.7 260.8 L1204.6 262.4 L1205.5 264.1 L1206.4 265.7 L1207.3 267.3 L1208.2 268.9 L1209 270.5 L1209.8 272.1 L1210.6 273.8 L1211.4 275.4 L1212.1 277 L1212.8 278.6 L1213.5 280.2 L1214.2 281.9 L1214.8 283.5 L1215.5 285.1 L1216.1 286.7 L1216.6 288.3 L1217.2 289.9 L1217.7 291.6 L1218.2 293.2 L1218.7 294.8 L1219.2 296.4 L1219.6 298 L1220 299.7 L1220.4 301.3 L1220.8 302.9 L1221.1 304.5 L1221.4 306.1 L1221.7 307.7 L1222 309.4 L1222.2 311 L1222.4 312.6 L1222.6 314.2 L1222.8 315.8 L1222.9 317.5 L1223 319.1 L1223.1 320.7 L1223.2 322.3 L1223.3 323.9 L1223.3 325.5 L1223.3 327.2 L1223.3 328.8 L1223.2 330.4 L1223.1 332 L1223.1 333.6 L1222.9 335.3 L1222.8 336.9 L1222.6 338.5 L1222.4 340.1 L1222.2 341.7 L1222 343.3 L1221.7 345 L1221.4 346.6 L1221.1 348.2 L1220.8 349.8 L1220.4 351.4 L1220 353.1 L1219.6 354.7 L1219.2 356.3 L1218.7 357.9 L1218.2 359.5 L1217.7 361.1 L1217.2 362.8 L1216.7 364.4 L1216.1 366 L1215.5 367.6 L1214.9 369.2 L1214.2 370.9 L1213.6 372.5 L1212.9 374.1 L1212.2 375.7 L1211.4 377.3 L1210.6 378.9 L1209.9 380.6 L1209.1 382.2 L1208.2 383.8 L1207.4 385.4 L1206.5 387 L1205.6 388.7 L1204.7 390.3 L1203.7 391.9 L1202.8 393.5 L1201.8 395.1 L1200.8 396.7 L1199.7 398.4 L1198.7 400 L1197.6 401.6 L1196.5 403.2 L1195.4 404.8 L1194.2 406.4 L1193 408.1 L1191.8 409.7"/><path d="M958.3 47.5 L960.3 47.6 L962.6 47.9 L965.2 48.2 L968.2 48.7 L971.5 49.3"/><path d="M831.1 50 L830.1 50.8 L828.9 51.6 L827.5 52.6 L825.9 53.6 L824.2 54.6 L822.3 55.7 L820.3 56.9 L818.1 58.1 L815.9 59.3 L813.6 60.6 L811.2 61.9 L808.8 63.2 L806.3 64.6 L803.8 65.9 L801.2 67.3 L798.6 68.7 L795.9 70.1 L793.2 71.6 L790.5 73 L787.8 74.5 L785.1 75.9 L782.3 77.4 L779.6 78.9 L776.8 80.4 L774 81.9 L771.2 83.4 L768.4 84.9 L765.6 86.4 L762.8 87.9 L760 89.4 L757.2 91 L754.4 92.5 L751.6 94 L748.8 95.6 L746 97.1 L743.2 98.7 L740.5 100.2 L737.7 101.8 L734.9 103.3 L732.1 104.9 L729.4 106.5 L726.6 108 L723.9 109.6 L721.1 111.2 L718.4 112.7 L715.7 114.3 L713 115.9 L710.3 117.4 L707.6 119 L704.9 120.6 L702.3 122.2 L699.6 123.8 L697 125.3 L694.3 126.9 L691.7 128.5 L689.1 130.1 L686.5 131.7 L684 133.3 L681.4 134.8 L678.9 136.4 L676.3 138 L673.8 139.6 L671.3 141.2 L668.8 142.8 L666.3 144.4 L663.9 146 L661.5 147.6 L659 149.2 L656.6 150.8 L654.2 152.4 L651.9 154 L649.5 155.6 L647.2 157.1 L644.9 158.7 L642.6 160.3 L640.3 161.9 L638 163.5 L635.8 165.1 L633.6 166.7 L631.4 168.3 L629.2 169.9 L627 171.5 L624.9 173.1 L622.7 174.7 L620.6 176.3 L618.5 177.9 L616.5 179.5 L614.4 181.2 L612.4 182.8 L610.4 184.4 L608.4 186 L606.4 187.6 L604.5 189.2 L602.6 190.8 L600.7 192.4 L598.8 194 L597 195.6 L595.1 197.2 L593.3 198.8 L591.5 200.4 L589.8 202 L588 203.6 L586.3 205.2 L584.6 206.8 L583 208.4 L581.3 210 L579.7 211.6 L578.1 213.3 L576.5 214.9 L575 216.5 L573.4 218.1 L571.9 219.7 L570.5 221.3 L569 222.9 L567.6 224.5 L566.2 226.1 L564.8 227.7 L563.4 229.3 L562.1 230.9 L560.8 232.5 L559.5 234.2 L558.3 235.8 L557 237.4 L555.8 239 L554.6 240.6 L553.5 242.2 L552.4 243.8 L551.3 245.4 L550.2 247 L549.1 248.6 L548.1 250.2 L547.1 251.9 L546.1 253.5 L545.2 255.1 L544.3 256.7 L543.4 258.3 L542.5 259.9 L541.7 261.5 L540.9 263.1 L540.1 264.7 L539.3 266.3 L538.6 268 L537.9 269.6 L537.2 271.2 L536.6 272.8 L536 274.4 L535.4 276 L534.8 277.6 L534.3 279.2 L533.8 280.8 L533.3 282.5 L532.8 284.1 L532.4 285.7 L532 287.3 L531.6 288.9 L531.3 290.5 L530.9 292.1 L530.6 293.7 L530.4 295.3 L530.1 297 L529.9 298.6 L529.8 300.2 L529.6 301.8 L529.5 303.4 L529.4 305 L529.3 306.6 L529.3 308.2 L529.2 309.8 L529.3 311.5 L529.3 313.1 L529.4 314.7 L529.5 316.3 L529.6 317.9 L529.7 319.5 L529.9 321.1 L530.1 322.7 L530.4 324.3 L530.6 326 L530.9 327.6 L531.2 329.2 L531.6 330.8 L532 332.4 L532.4 334 L532.8 335.6 L533.2 337.2 L533.7 338.8 L534.2 340.5 L534.8 342.1 L535.3 343.7 L535.9 345.3 L536.5 346.9 L537.2 348.5 L537.9 350.1 L538.6 351.7 L539.3 353.3"/><path d="M960 50 L959.7 49.3 L959.6 48.7 L959.8 48.2 L960.3 47.8 L961.1 47.5 L962.3 47.4 L963.9 47.4 L965.9 47.5"/><path d="M838.4 47.7 L838.9 48.1 L839 48.6 L838.8 49.2 L838.4 49.9 L837.7 50.6 L836.7 51.5 L835.6 52.4 L834.3 53.5 L832.8 54.5 L831.2 55.6 L829.5 56.8 L827.7 58 L825.9 59.3 L823.9 60.5 L821.9 61.8 L819.8 63.2 L817.7 64.5 L815.6 65.9 L813.4 67.3 L811.1 68.7 L808.9 70.1 L806.6 71.6 L804.3 73 L802 74.5 L799.7 76 L797.3 77.4 L795 78.9 L792.6 80.4 L790.3 81.9 L787.9 83.5 L785.5 85 L783.1 86.5 L780.7 88 L778.4 89.6 L776 91.1 L773.6 92.6 L771.2 94.2 L768.8 95.7 L766.5 97.3 L764.1 98.9 L761.7 100.4 L759.4 102 L757 103.5 L754.6 105.1 L752.3 106.7 L750 108.3 L747.6 109.8 L745.3 111.4 L743 113 L740.7 114.6 L738.4 116.2 L736.1 117.7 L733.8 119.3 L731.5 120.9 L729.3 122.5 L727 124.1 L724.8 125.7 L722.6 127.3 L720.3 128.9 L718.1 130.4 L715.9 132 L713.8 133.6 L711.6 135.2 L709.4 136.8 L707.3 138.4 L705.2 140 L703.1 141.6 L700.9 143.2 L698.9 144.8 L696.8 146.4 L694.7 148 L692.7 149.6 L690.6 151.2 L688.6 152.8 L686.6 154.4 L684.6 156 L682.7 157.7 L680.7 159.3 L678.8 160.9 L676.8 162.5 L674.9 164.1 L673 165.7 L671.2 167.3 L669.3 168.9 L667.5 170.5 L665.6 172.1 L663.8 173.7 L662 175.3 L660.3 177 L658.5 178.6 L656.8 180.2 L655 181.8 L653.3 183.4 L651.6 185 L650 186.6 L648.3 188.2 L646.7 189.8 L645.1 191.5 L643.5 193.1 L641.9 194.7 L640.4 196.3 L638.8 197.9 L637.3 199.5 L635.8 201.1 L634.4 202.7 L632.9 204.4 L631.5 206 L630.1 207.6 L628.7 209.2 L627.3 210.8 L625.9 212.4 L624.6 214.1 L623.3 215.7 L622 217.3 L620.7 218.9 L619.5 220.5 L618.2 222.1 L617 223.7 L615.8 225.4 L614.7 227 L613.5 228.6 L612.4 230.2 L611.3 231.8 L610.2 233.4 L609.2 235.1 L608.1 236.7 L607.1 238.3 L606.1 239.9 L605.2 241.5 L604.2 243.1 L603.3 244.8 L602.4 246.4 L601.5 248 L600.6 249.6 L599.8 251.2 L599 252.9 L598.2 254.5 L597.4 256.1 L596.7 257.7 L596 259.3 L595.3 260.9 L594.6 262.6 L593.9 264.2 L593.3 265.8 L592.7 267.4 L592.1 269 L591.6 270.7 L591 272.3 L590.5 273.9 L590 275.5 L589.6 277.1 L589.1 278.8 L588.7 280.4 L588.3 282 L587.9 283.6 L587.6 285.2 L587.3 286.8 L586.9 288.5 L586.7 290.1 L586.4 291.7 L586.2 293.3 L586 294.9 L585.8 296.6 L585.6 298.2 L585.5 299.8 L585.4 301.4 L585.3 303 L585.2 304.7 L585.2 306.3 L585.2 307.9 L585.2 309.5 L585.2 311.1 L585.3 312.8 L585.4 314.4 L585.5 316 L585.6 317.6 L585.7 319.2 L585.9 320.8 L586.1 322.5 L586.3 324.1 L586.6 325.7 L586.9 327.3 L587.2 328.9 L587.5 330.6 L587.8 332.2 L588.2 333.8 L588.6 335.4 L589 337 L589.4 338.7 L589.9 340.3 L590.3 341.9"/><path d="M966.7 55 L965.7 54 L964.9 53.1 L964.3 52.3 L963.8 51.5 L963.5 50.8 L963.5 50.2 L963.8 49.7 L964.3 49.4 L965.1 49.1 L966.3 48.9 L967.8 48.9 L969.7 49"/><path d="M832.8 49.2 L833.5 49.5 L833.7 49.9 L833.7 50.5 L833.4 51.1 L832.9 51.8 L832.1 52.6 L831.1 53.5 L829.9 54.4 L828.6 55.4 L827.2 56.5 L825.6 57.6 L823.9 58.8 L822.1 59.9 L820.3 61.2 L818.4 62.4 L816.4 63.7 L814.3 65 L812.3 66.3 L810.1 67.7 L808 69.1 L805.8 70.5 L803.5 71.9 L801.3 73.3 L799 74.7 L796.7 76.2 L794.4 77.6 L792.1 79.1 L789.8 80.5 L787.4 82 L785.1 83.5 L782.7 85 L780.4 86.5 L778 88 L775.6 89.5 L773.3 91 L770.9 92.6 L768.5 94.1 L766.2 95.6 L763.8 97.1 L761.4 98.7 L759.1 100.2 L756.7 101.8 L754.4 103.3 L752 104.9 L749.7 106.4 L747.3 108 L745 109.5 L742.7 111.1 L740.4 112.7 L738.1 114.2 L735.8 115.8 L733.5 117.4 L731.2 118.9 L728.9 120.5 L726.7 122.1 L724.4 123.6 L722.2 125.2 L719.9 126.8 L717.7 128.4 L715.5 130 L713.3 131.5 L711.1 133.1 L709 134.7 L706.8 136.3 L704.6 137.9 L702.5 139.4 L700.4 141 L698.3 142.6 L696.2 144.2 L694.1 145.8 L692 147.4 L690 149 L687.9 150.6 L685.9 152.2 L683.9 153.8 L681.9 155.3 L679.9 156.9 L678 158.5 L676 160.1 L674.1 161.7 L672.2 163.3 L670.3 164.9 L668.4 166.5 L666.5 168.1 L664.7 169.7 L662.8 171.3 L661 172.9 L659.2 174.5 L657.4 176.1 L655.7 177.7 L653.9 179.3 L652.2 180.9 L650.5 182.5 L648.8 184.1 L647.1 185.7 L645.4 187.3 L643.8 188.9 L642.2 190.5 L640.6 192.1 L639 193.7 L637.4 195.3 L635.9 196.9 L634.4 198.5 L632.9 200.1 L631.4 201.7 L629.9 203.3 L628.5 204.9 L627 206.5 L625.6 208.1 L624.2 209.7 L622.9 211.3 L621.5 213 L620.2 214.6 L618.9 216.2 L617.6 217.8 L616.3 219.4 L615.1 221 L613.9 222.6 L612.7 224.2 L611.5 225.8 L610.3 227.4 L609.2 229 L608.1 230.6 L607 232.2 L605.9 233.8 L604.9 235.4 L603.9 237 L602.9 238.7 L601.9 240.3 L600.9 241.9 L600 243.5 L599.1 245.1 L598.2 246.7 L597.3 248.3 L596.5 249.9 L595.6 251.5 L594.8 253.1 L594 254.7 L593.3 256.3 L592.6 257.9 L591.8 259.6 L591.2 261.2 L590.5 262.8 L589.8 264.4 L589.2 266 L588.6 267.6 L588.1 269.2 L587.5 270.8 L587 272.4 L586.5 274 L586 275.6 L585.5 277.3 L585.1 278.9 L584.7 280.5 L584.3 282.1 L584 283.7 L583.6 285.3 L583.3 286.9 L583 288.5 L582.7 290.1 L582.5 291.7 L582.3 293.3 L582.1 295 L581.9 296.6 L581.8 298.2 L581.6 299.8 L581.5 301.4 L581.5 303 L581.4 304.6 L581.4 306.2 L581.4 307.8 L581.4 309.4 L581.4 311 L581.5 312.7 L581.6 314.3 L581.7 315.9 L581.8 317.5 L582 319.1 L582.2 320.7 L582.4 322.3 L582.6 323.9 L582.9 325.5 L583.2 327.1 L583.5 328.8 L583.8 330.4 L584.2 332 L584.5 333.6 L584.9 335.2"/><path d="M968.3 91.7 L966.6 90.1 L965 88.5 L963.3 86.8 L961.6 85.2 L960 83.6 L958.3 82 L956.6 80.4 L954.9 78.7 L953.2 77.1 L951.5 75.5 L949.8 73.9 L948.1 72.3 L946.4 70.7 L944.7 69 L943 67.4 L941.3 65.8 L939.6 64.2 L937.9 62.6 L936.1 60.9 L934.4 59.3 L932.7 57.7 L931 56.1 L929.2 54.5 L927.5 52.9 L925.8 51.3 L924 49.6 L922.3 48 L920.6 46.4 L918.8 44.8 L917.1 43.2 L915.4 41.6 L913.7 40 L911.9 38.4 L910.2 36.8 L908.5 35.3 L906.9 33.7 L905.2 32.3 L903.6 30.9 L902.2 29.8 L900.7 29.4 L898.6 30 L896 31.1 L893 32.6 L889.9 34 L886.7 35.6 L883.5 37.2 L880.3 38.7 L877 40.3 L873.7 41.9 L870.4 43.5 L867.1 45.1 L863.9 46.7 L860.6 48.3 L857.3 50 L854 51.6 L850.7 53.2 L847.4 54.8 L844.1 56.4 L840.8 58 L837.5 59.6 L834.3 61.3 L831 62.9 L827.7 64.5 L824.5 66.1 L821.2 67.7 L818 69.3 L814.7 71 L811.5 72.6 L808.3 74.2 L805 75.8 L801.8 77.4 L798.6 79.1 L795.4 80.7 L792.2 82.3 L789 83.9 L785.8 85.5 L782.7 87.2 L779.5 88.8 L776.4 90.4 L773.2 92 L770.1 93.6 L767 95.3 L763.8 96.9 L760.7 98.5 L757.7 100.1 L754.6 101.7 L751.5 103.4 L748.4 105 L745.4 106.6 L742.4 108.2 L739.3 109.8 L736.3 111.5 L733.3 113.1 L730.3 114.7 L727.4 116.3 L724.4 117.9 L721.5 119.6 L718.5 121.2 L715.6 122.8 L712.7 124.4 L709.8 126 L706.9 127.7 L704.1 129.3 L701.2 130.9 L698.4 132.5 L695.6 134.1 L692.8 135.8 L690 137.4 L687.2 139 L684.5 140.6 L681.7 142.2 L679 143.9 L676.3 145.5 L673.6 147.1 L670.9 148.7 L668.3 150.3 L665.7 152 L663 153.6 L660.4 155.2 L657.9 156.8 L655.3 158.4 L652.8 160.1 L650.2 161.7 L647.7 163.3 L645.2 164.9 L642.8 166.6 L640.3 168.2 L637.9 169.8 L635.5 171.4 L633.1 173 L630.7 174.7 L628.4 176.3 L626.1 177.9 L623.7 179.5 L621.5 181.1 L619.2 182.8 L617 184.4 L614.7 186 L612.5 187.6 L610.4 189.2 L608.2 190.9 L606.1 192.5 L604 194.1 L601.9 195.7 L599.8 197.3 L597.8 199 L595.7 200.6 L593.7 202.2 L591.8 203.8 L589.8 205.4 L587.9 207.1 L586 208.7 L584.1 210.3 L582.2 211.9 L580.4 213.6 L578.6 215.2 L576.8 216.8 L575.1 218.4 L573.3 220 L571.6 221.7 L569.9 223.3 L568.3 224.9 L566.6 226.5 L565 228.1 L563.5 229.8 L561.9 231.4 L560.4 233 L558.9 234.6 L557.4 236.2 L555.9 237.9 L554.5 239.5 L553.1 241.1 L551.7 242.7 L550.4 244.3 L549 246 L547.7 247.6 L546.5 249.2 L545.2 250.8 L544 252.4 L542.8 254.1 L541.7 255.7 L540.5 257.3 L539.4 258.9 L538.3 260.6 L537.3 262.2 L536.3 263.8 L535.3 265.4 L534.3 267 L533.3 268.7 L532.4 270.3 L531.5 271.9 L530.7 273.5 L529.9 275.1 L529.1 276.8 L528.3 278.4 L527.5 280 L526.8 281.6 L526.1 283.2 L525.5 284.9 L524.8 286.5 L524.2 288.1"/><path d="M979.2 93.3 L976.8 91.9 L974.4 90.6 L972 89.3 L969.7 88 L967.3 86.7 L965 85.4 L962.7 84.1 L960.4 82.9 L958.1 81.6 L955.8 80.4 L953.6 79.2 L951.3 78.1 L949.1 76.9 L946.9 75.8 L944.8 74.7 L942.6 73.7 L940.5 72.7 L938.4 71.7 L936.4 70.7 L934.3 69.8 L932.3 69 L930.4 68.1 L928.4 67.4 L926.5 66.6 L924.7 66 L922.8 65.3 L921 64.8 L919.2 64.3 L917.5 63.9 L915.8 63.5 L914.1 63.2 L912.4 63 L910.7 62.8 L909.1 62.7 L907.5 62.7 L905.9 62.8 L904.3 62.9 L902.7 63.1 L901.1 63.4 L899.5 63.7 L897.9 64.1 L896.3 64.6 L894.7 65.1 L893 65.7 L891.4 66.4 L889.7 67.1 L888.1 67.8 L886.4 68.6 L884.7 69.5 L882.9 70.4 L881.2 71.3 L879.4 72.3 L877.7 73.3 L875.9 74.4 L874.1 75.4 L872.3 76.5 L870.4 77.7 L868.6 78.8 L866.7 80 L864.8 81.2 L862.9 82.4 L861 83.7 L859.1 84.9 L857.2 86.2 L855.3 87.5 L853.3 88.8 L851.4 90.1 L849.4 91.4 L847.5 92.8 L845.5 94.2 L843.5 95.5 L841.6 96.9 L839.6 98.3 L837.6 99.7 L835.6 101.1 L833.6 102.5 L831.6 103.9 L829.6 105.4 L827.6 106.8 L825.6 108.2 L823.6 109.7 L821.6 111.1 L819.6 112.6 L817.6 114.1 L815.6 115.5 L813.6 117 L811.6 118.5 L809.6 120 L807.6 121.5 L805.6 123 L803.6 124.5 L801.6 126 L799.6 127.5 L797.6 129 L795.7 130.5 L793.7 132 L791.7 133.5 L789.8 135 L787.8 136.6 L785.8 138.1 L783.9 139.6 L782 141.1 L780 142.7 L778.1 144.2 L776.2 145.7 L774.2 147.3 L772.3 148.8 L770.4 150.3 L768.5 151.9 L766.7 153.4 L764.8 155 L762.9 156.5 L761 158.1 L759.2 159.6 L757.3 161.2 L755.5 162.7 L753.7 164.3 L751.9 165.8 L750 167.4 L748.2 168.9 L746.5 170.5 L744.7 172.1 L742.9 173.6 L741.1 175.2 L739.4 176.8 L737.7 178.3 L735.9 179.9 L734.2 181.4 L732.5 183 L730.8 184.6 L729.1 186.1 L727.4 187.7 L725.8 189.3 L724.1 190.9 L722.5 192.4 L720.9 194 L719.3 195.6 L717.7 197.1 L716.1 198.7 L714.5 200.3 L712.9 201.9 L711.4 203.4 L709.9 205 L708.3 206.6 L706.8 208.2 L705.3 209.7 L703.9 211.3 L702.4 212.9 L700.9 214.5 L699.5 216.1 L698.1 217.6 L696.7 219.2 L695.3 220.8 L693.9 222.4 L692.5 224 L691.2 225.5 L689.8 227.1 L688.5 228.7 L687.2 230.3 L685.9 231.9 L684.6 233.5 L683.4 235 L682.1 236.6 L680.9 238.2 L679.7 239.8 L678.5 241.4 L677.3 243 L676.1 244.6 L675 246.1 L673.8 247.7 L672.7 249.3 L671.6 250.9 L670.5 252.5 L669.5 254.1 L668.4 255.7 L667.4 257.3 L666.4 258.8 L665.4 260.4 L664.4 262 L663.4 263.6 L662.5 265.2 L661.5 266.8 L660.6 268.4 L659.7 270 L658.9 271.5 L658 273.1 L657.1 274.7 L656.3 276.3 L655.5 277.9 L654.7 279.5 L653.9 281.1 L653.2 282.7 L652.5 284.3 L651.7 285.9 L651 287.4 L650.4 289 L649.7 290.6 L649 292.2 L648.4 293.8 L647.8 295.4 L647.2 297"/><path d="M1046.7 97.5 L1044.8 96.1 L1043 94.7 L1041.2 93.4 L1039.3 92 L1037.6 90.7 L1035.8 89.4 L1034 88.1 L1032.3 86.8 L1030.6 85.5 L1028.9 84.2 L1027.3 83 L1025.7 81.7 L1024.1 80.5 L1022.6 79.4 L1021.1 78.2 L1019.7 77.1 L1018.4 76 L1017.1 74.9 L1015.9 73.8 L1014.7 72.8 L1013.6 71.9 L1012.7 70.9 L1011.8 70 L1011 69.2 L1010.4 68.4 L1009.8 67.6 L1009.4 66.9 L1009.2 66.2 L1009.1 65.6 L1009.1 65.1 L1009.3 64.6 L1009.7 64.2 L1010.3 63.9 L1011.1 63.6 L1012.1 63.4 L1013.3 63.2 L1014.8 63.2"/><path d="M790.7 63.2 L792.1 63.3 L793.3 63.4 L794.2 63.6 L795 63.9 L795.6 64.3 L795.9 64.7 L796.1 65.2 L796.2 65.8 L796.1 66.4 L795.8 67 L795.4 67.7 L794.8 68.5 L794.2 69.3 L793.4 70.2 L792.5 71.1 L791.6 72.1 L790.5 73 L789.4 74.1 L788.2 75.1 L786.9 76.2 L785.6 77.3 L784.2 78.4 L782.8 79.6 L781.3 80.8 L779.7 82 L778.2 83.2 L776.6 84.5 L774.9 85.7 L773.3 87 L771.6 88.3 L769.8 89.6 L768.1 91 L766.3 92.3 L764.6 93.7 L762.8 95 L761 96.4 L759.1 97.8 L757.3 99.2 L755.5 100.6 L753.6 102 L751.8 103.4 L749.9 104.9 L748.1 106.3 L746.2 107.7 L744.3 109.2 L742.4 110.6 L740.6 112.1 L738.7 113.6 L736.8 115 L735 116.5 L733.1 118 L731.2 119.5 L729.4 121 L727.5 122.5 L725.7 124 L723.8 125.5 L722 127 L720.2 128.5 L718.3 130 L716.5 131.5 L714.7 133.1 L712.9 134.6 L711.1 136.1 L709.3 137.6 L707.5 139.2 L705.8 140.7 L704 142.2 L702.3 143.8 L700.5 145.3 L698.8 146.8 L697.1 148.4 L695.4 149.9 L693.7 151.5 L692 153 L690.3 154.6 L688.7 156.1 L687 157.7 L685.4 159.2 L683.8 160.8 L682.2 162.4 L680.6 163.9 L679 165.5 L677.4 167 L675.9 168.6 L674.3 170.2 L672.8 171.7 L671.3 173.3 L669.8 174.9 L668.4 176.4 L666.9 178 L665.4 179.6 L664 181.1 L662.6 182.7 L661.2 184.3 L659.8 185.9 L658.5 187.4 L657.1 189 L655.8 190.6 L654.5 192.2 L653.2 193.7 L651.9 195.3 L650.6 196.9 L649.4 198.5 L648.1 200.1 L646.9 201.7 L645.7 203.2 L644.6 204.8 L643.4 206.4 L642.3 208 L641.1 209.6 L640 211.2 L638.9 212.7 L637.9 214.3 L636.8 215.9 L635.8 217.5 L634.8 219.1 L633.8 220.7 L632.8 222.3 L631.9 223.8 L630.9 225.4 L630 227 L629.1 228.6 L628.2 230.2 L627.4 231.8 L626.5 233.4 L625.7 235 L624.9 236.6 L624.2 238.2 L623.4 239.7 L622.7 241.3 L621.9 242.9 L621.2 244.5 L620.6 246.1 L619.9 247.7 L619.3 249.3 L618.7 250.9 L618.1 252.5 L617.5 254.1 L616.9 255.7 L616.4 257.3 L615.9 258.9 L615.4 260.5 L614.9 262.1 L614.5 263.7 L614 265.3 L613.6 266.8 L613.3 268.4 L612.9 270 L612.5 271.6 L612.2 273.2 L611.9 274.8 L611.6 276.4 L611.4 278 L611.1 279.6 L610.9 281.2 L610.7 282.8 L610.5 284.4 L610.4 286 L610.3 287.6 L610.1 289.2 L610.1 290.8 L610 292.4"/><path d="M1111.7 108.8 L1113.3 108.8 L1115 108.8 L1116.7 108.9 L1118.6 109 L1120.4 109.1 L1122.4 109.2 L1124.5 109.4 L1126.6 109.6 L1128.8 109.8 L1131 110.1 L1133.4 110.4 L1135.8 110.7 L1138.3 111 L1140.8 111.4 L1143.5 111.8 L1146.1 112.2 L1148.9 112.7 L1151.7 113.2 L1154.6 113.7 L1157.6 114.2 L1160.6 114.8 L1163.7 115.3 L1166.9 115.9 L1170.1 116.6 L1173.4 117.2"/><path d="M628.6 117.9 L628.1 118.6 L627.6 119.3 L627.1 120 L626.5 120.8 L625.8 121.6 L625.1 122.4 L624.4 123.2 L623.6 124 L622.7 124.9 L621.9 125.7 L621 126.6 L620 127.5 L619 128.4 L618 129.4 L617 130.3 L615.9 131.3 L614.8 132.3 L613.7 133.3 L612.5 134.3 L611.4 135.3 L610.2 136.3 L609 137.4 L607.7 138.4 L606.5 139.5 L605.2 140.6 L603.9 141.7 L602.6 142.8 L601.3 143.9 L600 145 L598.6 146.1 L597.3 147.3 L595.9 148.4 L594.6 149.6 L593.2 150.8 L591.8 151.9 L590.5 153.1 L589.1 154.3 L587.7 155.5 L586.3 156.7 L584.9 157.9 L583.5 159.2 L582.1 160.4 L580.7 161.6 L579.4 162.9 L578 164.1 L576.6 165.4 L575.2 166.7 L573.8 167.9 L572.5 169.2 L571.1 170.5 L569.7 171.8 L568.4 173.1 L567 174.4 L565.7 175.7 L564.3 177 L563 178.3 L561.7 179.6 L560.4 180.9 L559.1 182.2 L557.8 183.6 L556.5 184.9 L555.3 186.2 L554 187.6 L552.8 188.9 L551.5 190.3 L550.3 191.6 L549.1 193 L547.9 194.3 L546.8 195.7 L545.6 197.1 L544.4 198.4 L543.3 199.8 L542.2 201.2 L541.1 202.6 L540 204 L538.9 205.3 L537.9 206.7 L536.8 208.1 L535.8 209.5 L534.8 210.9 L533.8 212.3 L532.9 213.7 L531.9 215.1 L531 216.5 L530.1 217.9 L529.2 219.3 L528.3 220.7 L527.4 222.1 L526.6 223.5 L525.8 225 L525 226.4 L524.2 227.8 L523.4 229.2 L522.7 230.6 L522 232.1 L521.3 233.5 L520.6 234.9 L519.9 236.3 L519.3 237.8 L518.7 239.2 L518.1 240.6 L517.5 242.1 L517 243.5 L516.4 244.9 L515.9 246.4 L515.4 247.8 L515 249.3 L514.5 250.7 L514.1 252.2 L513.7 253.6 L513.3 255 L513 256.5 L512.6 257.9 L512.3 259.4 L512 260.8 L511.8 262.3 L511.5 263.7 L511.3 265.2 L511.1 266.6 L511 268.1 L510.8 269.6 L510.7 271 L510.6 272.5 L510.5 273.9 L510.5 275.4 L510.4 276.8 L510.4 278.3 L510.4 279.8 L510.5 281.2 L510.6 282.7 L510.6 284.1 L510.8 285.6 L510.9 287.1 L511 288.5 L511.2 290 L511.4 291.5 L511.7 292.9 L511.9 294.4 L512.2 295.8 L512.5 297.3 L512.8 298.8 L513.2 300.2 L513.6 301.7 L514 303.2 L514.4 304.6 L514.8 306.1 L515.3 307.6 L515.8 309 L516.3 310.5 L516.9 312 L517.4 313.4 L518 314.9 L518.6 316.4 L519.3 317.8 L519.9 319.3 L520.6 320.8 L521.3 322.2 L522 323.7 L522.8 325.2 L523.6 326.7 L524.4 328.1 L525.2 329.6 L526.1 331.1 L526.9 332.5 L527.8 334 L528.7 335.5 L529.7 336.9 L530.6 338.4 L531.6 339.9 L532.6 341.3 L533.7 342.8 L534.7 344.2 L535.8 345.7 L536.9 347.2 L538 348.6"/><path d="M1046.7 132.5 L1045.9 131.1 L1045.1 129.8 L1044.4 128.4 L1043.6 127.1 L1042.8 125.8 L1042 124.5 L1041.3 123.2 L1040.5 121.9 L1039.7 120.6 L1039 119.3 L1038.2 118 L1037.5 116.7 L1036.8 115.5 L1036.1 114.2 L1035.4 113 L1034.7 111.8 L1034 110.6 L1033.3 109.4 L1032.7 108.2 L1032 107 L1031.4 105.9 L1030.8 104.8 L1030.2 103.6 L1029.7 102.5 L1029.1 101.5 L1028.6 100.4 L1028.1 99.4 L1027.7 98.3 L1027.3 97.3 L1026.9 96.4 L1026.6 95.4 L1026.2 94.5 L1026 93.6 L1025.8 92.7 L1025.6 91.8 L1025.5 91 L1025.4 90.2 L1025.4 89.4 L1025.4 88.7 L1025.5 88 L1025.7 87.3 L1025.9 86.7 L1026.2 86.1 L1026.6 85.6 L1027.1 85 L1027.6 84.6 L1028.3 84.1 L1029 83.7 L1029.8 83.4 L1030.7 83.1 L1031.7 82.8 L1032.8 82.6 L1034 82.4 L1035.3 82.3 L1036.7 82.2 L1038.2 82.2 L1039.9 82.2 L1041.6 82.2 L1043.5 82.3 L1045.5 82.5 L1047.6 82.7 L1049.8 82.9 L1052.1 83.2 L1054.5 83.5 L1057.1 83.9 L1059.7 84.3 L1062.5 84.7 L1065.3 85.2 L1068.3 85.7 L1071.4 86.3 L1074.6 86.9 L1077.8 87.6 L1081.2 88.2 L1084.7 88.9 L1088.2 89.7 L1091.9 90.5 L1095.6 91.3 L1099.4 92.1 L1103.3 93 L1107.3 93.8"/><path d="M695.2 94.8 L693.8 95.7 L692.4 96.7 L690.8 97.7 L689.2 98.7 L687.6 99.7 L685.9 100.7 L684.2 101.8 L682.4 102.9 L680.6 104 L678.7 105.1 L676.8 106.3 L674.9 107.4 L672.9 108.6 L670.9 109.8 L668.9 111 L666.9 112.2 L664.8 113.4 L662.7 114.6 L660.6 115.9 L658.5 117.1 L656.4 118.4 L654.2 119.7 L652.1 121 L649.9 122.3 L647.7 123.6 L645.5 124.9 L643.3 126.2 L641.1 127.5 L638.9 128.9 L636.7 130.2 L634.5 131.6 L632.3 132.9 L630.1 134.3 L627.9 135.7 L625.7 137.1 L623.5 138.4 L621.3 139.8 L619.1 141.2 L616.9 142.6 L614.7 144 L612.5 145.4 L610.3 146.9 L608.2 148.3 L606 149.7 L603.9 151.1 L601.7 152.6 L599.6 154 L597.5 155.4 L595.4 156.9 L593.3 158.3 L591.2 159.8 L589.1 161.2 L587 162.7 L585 164.1 L583 165.6 L580.9 167.1 L578.9 168.5 L576.9 170 L575 171.5 L573 172.9 L571.1 174.4 L569.1 175.9 L567.2 177.4 L565.3 178.9 L563.5 180.3 L561.6 181.8 L559.8 183.3 L558 184.8 L556.2 186.3 L554.4 187.8 L552.6 189.3 L550.9 190.8 L549.1 192.3 L547.4 193.8 L545.8 195.3 L544.1 196.8 L542.5 198.3 L540.9 199.8 L539.3 201.3 L537.7 202.9 L536.1 204.4 L534.6 205.9 L533.1 207.4 L531.6 208.9 L530.1 210.4 L528.7 211.9 L527.3 213.5 L525.9 215 L524.5 216.5 L523.2 218 L521.9 219.6 L520.6 221.1 L519.3 222.6 L518.1 224.1 L516.8 225.7 L515.6 227.2 L514.5 228.7 L513.3 230.3 L512.2 231.8 L511.1 233.3 L510 234.9 L509 236.4 L508 237.9 L507 239.5 L506 241 L505.1 242.5 L504.1 244.1 L503.3 245.6 L502.4 247.1 L501.6 248.7 L500.7 250.2 L500 251.8 L499.2 253.3 L498.5 254.8 L497.8 256.4 L497.1 257.9 L496.5 259.5 L495.8 261 L495.2 262.5 L494.7 264.1"/><path d="M1006.7 171.3 L1005.3 171.6 L1003.9 171.9 L1002.5 172.3 L1001.1 172.6 L999.7 173 L998.3 173.3 L996.9 173.7 L995.6 174.1 L994.2 174.5 L992.9 175 L991.5 175.4 L990.2 175.9 L988.8 176.3 L987.5 176.8 L986.2 177.3 L984.8 177.8 L983.5 178.3 L982.2 178.8 L980.9 179.4 L979.6 179.9 L978.3 180.5 L977 181.1 L975.7 181.7 L974.4 182.2 L973.1 182.9 L971.8 183.5 L970.6 184.1 L969.3 184.7 L968 185.4 L966.7 186.1 L965.4 186.7 L964.2 187.4 L962.9 188.1 L961.6 188.8 L960.4 189.5 L959.1 190.2 L957.8 191 L956.6 191.7 L955.3 192.4 L954.1 193.2 L952.8 194 L951.6 194.7 L950.3 195.5 L949 196.3 L947.8 197.1 L946.5 197.9 L945.3 198.7 L944 199.6 L942.8 200.4 L941.5 201.2 L940.3 202.1 L939 202.9 L937.8 203.8 L936.5 204.7 L935.3 205.5 L934 206.4 L932.8 207.3 L931.5 208.2 L930.3 209.1 L929 210 L927.8 210.9 L926.5 211.9 L925.3 212.8 L924.1 213.7 L922.8 214.7 L921.6 215.6 L920.3 216.6 L919.1 217.5 L917.8 218.5 L916.6 219.5 L915.3 220.4 L914.1 221.4 L912.8 222.4 L911.6 223.4 L910.3 224.4 L909.1 225.4 L907.8 226.4 L906.6 227.4 L905.3 228.4 L904.1 229.4 L902.8 230.5 L901.6 231.5 L900.3 232.5 L899 233.5 L897.8 234.6 L896.5 235.6 L895.3 236.7 L894 237.7 L892.8 238.8 L891.5 239.9 L890.3 240.9 L889 242 L887.8 243.1 L886.6 244.1 L885.3 245.2 L884.1 246.3 L882.8 247.4 L881.6 248.5 L880.3 249.6 L879.1 250.7 L877.8 251.7 L876.6 252.8 L875.3 254 L874.1 255.1 L872.8 256.2 L871.6 257.3 L870.4 258.4 L869.1 259.5 L867.9 260.6 L866.7 261.7 L865.4 262.9 L864.2 264 L862.9 265.1 L861.7 266.3 L860.5 267.4 L859.3 268.5 L858 269.7 L856.8 270.8 L855.6 271.9 L854.4 273.1 L853.1 274.2 L851.9 275.4 L850.7 276.5 L849.5 277.7 L848.3 278.8 L847 280 L845.8 281.1 L844.6 282.3 L843.4 283.4 L842.2 284.6 L841 285.8 L839.8 286.9 L838.6 288.1 L837.4 289.2 L836.2 290.4 L835 291.6 L833.9 292.7 L832.7 293.9 L831.5 295.1 L830.3 296.2 L829.1 297.4 L828 298.6 L826.8 299.8 L825.6 300.9 L824.5 302.1 L823.3 303.3 L822.1 304.5 L821 305.6 L819.8 306.8 L818.7 308 L817.5 309.2 L816.4 310.3 L815.2 311.5 L814.1 312.7 L813 313.9 L811.8 315 L810.7 316.2 L809.6 317.4 L808.5 318.6 L807.4 319.8 L806.3 320.9 L805.2 322.1 L804 323.3 L802.9 324.5 L801.9 325.7 L800.8 326.8 L799.7 328 L798.6 329.2 L797.5 330.4 L796.4 331.5 L795.4 332.7 L794.3 333.9 L793.2 335.1 L792.2 336.2 L791.1 337.4 L790.1 338.6 L789 339.8 L788 340.9 L787 342.1 L785.9 343.3 L784.9 344.5 L783.9 345.6 L782.9 346.8 L781.8 348 L780.8 349.1 L779.8 350.3 L778.8 351.5 L777.8 352.6 L776.9 353.8 L775.9 354.9 L774.9 356.1 L773.9 357.3 L772.9 358.4 L772 359.6 L771 360.7 L770.1 361.9 L769.1 363 L768.2 364.2 L767.2 365.3 L766.3 366.5 L765.3 367.6"/><path d="M965.8 128.3 L966.3 127.1 L966.7 126 L967.2 124.8 L967.7 123.7 L968.2 122.6 L968.7 121.5 L969.1 120.4 L969.6 119.4 L970.2 118.3 L970.7 117.3 L971.2 116.2 L971.7 115.2 L972.3 114.2 L972.9 113.3 L973.4 112.3 L974 111.4 L974.6 110.4 L975.2 109.5 L975.8 108.7 L976.5 107.8 L977.2 107 L977.8 106.2 L978.5 105.4 L979.3 104.6 L980 103.9 L980.8 103.2 L981.6 102.5 L982.4 101.8 L983.2 101.2 L984.1 100.6 L985 100 L985.9 99.5 L986.9 99 L987.9 98.5 L989 98.1 L990 97.6 L991.1 97.3 L992.3 96.9 L993.5 96.6 L994.7 96.3 L996 96.1 L997.4 95.9 L998.8 95.7 L1000.2 95.6 L1001.7 95.5 L1003.2 95.4 L1004.8 95.4 L1006.4 95.4 L1008.1 95.4 L1009.8 95.5 L1011.6 95.6 L1013.5 95.8 L1015.4 96 L1017.4 96.2 L1019.4 96.5 L1021.4 96.8 L1023.6 97.1 L1025.8 97.5 L1028 97.9 L1030.3 98.3 L1032.7 98.8 L1035.1 99.3 L1037.5 99.8 L1040 100.4 L1042.6 101 L1045.2 101.6 L1047.9 102.2 L1050.6 102.9 L1053.3 103.6 L1056.1 104.3 L1059 105.1 L1061.9 105.8 L1064.8 106.6 L1067.8 107.5 L1070.8 108.3 L1073.9 109.2 L1077 110.1 L1080.1 111 L1083.3 111.9 L1086.5 112.9 L1089.7 113.8 L1093 114.8 L1096.3 115.8 L1099.6 116.8 L1102.9 117.9 L1106.3 118.9 L1109.7 120 L1113.1 121.1 L1116.6 122.2 L1120 123.3 L1123.5 124.4 L1127 125.5 L1130.5 126.7 L1134 127.8 L1137.6 129 L1141.1 130.2 L1144.7 131.4 L1148.3 132.6 L1151.9 133.8 L1155.5 135 L1159.1 136.2 L1162.7 137.5 L1166.3 138.7 L1170 140 L1173.6 141.2 L1177.2 142.5 L1180.9 143.8 L1184.5 145.1 L1188.2 146.3 L1191.8 147.6 L1195.5 148.9 L1199.1 150.3 L1202.7 151.6 L1206.4 152.9 L1210 154.2 L1213.6 155.6 L1217.3 156.9 L1220.9 158.3 L1224.5 159.6 L1228.1 161 L1231.7 162.3 L1235.3 163.7 L1238.9 165.1 L1242.4 166.4 L1246 167.8 L1249.6 169.2 L1253.1 170.6 L1256.6 172 L1260.1 173.4 L1263.6 174.8 L1267.1 176.2 L1270.6 177.6 L1274 179 L1277.5 180.4 L1280.9 181.8 L1284.3 183.2 L1287.7 184.7 L1291.1 186.1 L1294.5 187.5 L1297.8 188.9 L1301.1 190.4 L1304.4 191.8 L1307.7 193.2 L1311 194.7 L1314.2 196.1 L1317.4 197.6 L1320.6 199 L1323.8 200.5 L1327 201.9 L1330.1 203.4 L1333.2 204.8 L1336.3 206.3 L1339.4 207.7 L1342.4 209.2 L1345.5 210.7 L1348.5 212.1 L1351.4 213.6 L1354.4 215.1 L1357.3 216.5 L1360.2 218 L1363.1 219.5 L1365.9 221 L1368.7 222.4 L1371.5 223.9 L1374.3 225.4 L1377 226.9 L1379.7 228.3 L1382.4 229.8 L1385 231.3 L1387.6 232.8 L1390.2 234.3 L1392.8 235.8 L1395.3 237.2 L1397.8 238.7 L1400.3 240.2 L1402.7 241.7 L1405.1 243.2 L1407.5 244.7 L1409.8 246.2 L1412.2 247.7 L1414.4 249.2 L1416.7 250.7 L1418.9 252.2 L1421.1 253.7 L1423.2 255.2 L1425.4 256.7 L1427.5 258.2 L1429.5 259.7 L1431.5 261.2 L1433.5 262.7 L1435.5 264.2 L1437.4 265.7 L1439.3 267.2 L1441.1 268.7 L1442.9 270.2 L1444.7 271.7 L1446.5 273.2 L1448.2 274.7 L1449.9 276.2 L1451.5 277.7 L1453.1 279.2"/><path d="M1025 74.2 L1024.4 73.4 L1024 72.7 L1023.6 72 L1023.4 71.4 L1023.3 70.8 L1023.4 70.2 L1023.5 69.7 L1023.9 69.3 L1024.4 68.9 L1025.1 68.6 L1025.9 68.4 L1027 68.2 L1028.2 68"/><path d="M774.4 68 L776.1 68 L777.5 68 L778.8 68.2 L779.8 68.3 L780.7 68.6 L781.5 68.9 L782 69.2 L782.4 69.7 L782.7 70.1 L782.8 70.7 L782.7 71.3 L782.5 71.9 L782.3 72.6 L781.8 73.3 L781.3 74.1 L780.7 74.9 L780 75.7 L779.2 76.6 L778.3 77.5 L777.3 78.5 L776.3 79.5 L775.2 80.5 L774 81.6 L772.8 82.6 L771.5 83.7 L770.2 84.9 L768.8 86 L767.4 87.2 L766 88.4 L764.5 89.6 L763 90.8 L761.4 92 L759.9 93.3 L758.3 94.6 L756.7 95.8 L755 97.1 L753.4 98.4 L751.7 99.8 L750 101.1 L748.3 102.4 L746.6 103.8 L744.9 105.2 L743.2 106.5 L741.4 107.9 L739.7 109.3 L738 110.7 L736.2 112.1 L734.5 113.5 L732.7 114.9 L731 116.4 L729.2 117.8 L727.4 119.2 L725.7 120.7 L723.9 122.1 L722.2 123.6 L720.4 125 L718.7 126.5 L717 128 L715.2 129.4 L713.5 130.9 L711.8 132.4 L710 133.9 L708.3 135.4 L706.6 136.9 L704.9 138.3 L703.2 139.8 L701.5 141.3 L699.9 142.8 L698.2 144.3 L696.5 145.9 L694.9 147.4 L693.3 148.9 L691.6 150.4 L690 151.9 L688.4 153.4 L686.8 154.9 L685.2 156.5 L683.7 158 L682.1 159.5 L680.6 161 L679 162.6 L677.5 164.1 L676 165.6 L674.5 167.2 L673 168.7 L671.6 170.3 L670.1 171.8 L668.7 173.3 L667.2 174.9 L665.8 176.4 L664.4 178 L663 179.5 L661.7 181.1 L660.3 182.6 L659 184.2 L657.7 185.7 L656.4 187.3 L655.1 188.8 L653.8 190.4 L652.5 191.9 L651.3 193.5 L650.1 195 L648.9 196.6 L647.7 198.2 L646.5 199.7 L645.3 201.3 L644.2 202.8 L643.1 204.4 L642 206 L640.9 207.5 L639.8 209.1 L638.8 210.6 L637.7 212.2 L636.7 213.8 L635.7 215.3 L634.7 216.9 L633.8 218.5 L632.8 220 L631.9 221.6 L631 223.2 L630.1 224.7 L629.2 226.3 L628.4 227.9 L627.6 229.5 L626.7 231 L625.9 232.6 L625.2 234.2 L624.4 235.7 L623.7 237.3 L623 238.9 L622.3 240.5 L621.6 242 L620.9 243.6 L620.3 245.2 L619.7 246.8 L619.1 248.3 L618.5 249.9 L618 251.5 L617.4 253.1 L616.9 254.6 L616.4 256.2 L615.9 257.8 L615.5 259.4 L615 261 L614.6 262.5 L614.2 264.1 L613.9 265.7 L613.5 267.3 L613.2 268.8 L612.9 270.4 L612.6 272 L612.3 273.6 L612 275.2 L611.8 276.7 L611.6 278.3 L611.4 279.9 L611.2 281.5 L611.1 283.1 L611 284.6 L610.9 286.2 L610.8 287.8 L610.7 289.4 L610.7 291 L610.6 292.5 L610.6 294.1 L610.7 295.7 L610.7 297.3 L610.8 298.9 L610.8 300.5 L611 302 L611.1 303.6 L611.2 305.2 L611.4 306.8 L611.6 308.4 L611.8 309.9 L612 311.5 L612.3 313.1 L612.5 314.7 L612.8 316.3 L613.1 317.9 L613.5 319.4 L613.8 321 L614.2 322.6 L614.6 324.2 L615 325.8 L615.4 327.3 L615.9 328.9"/><path d="M1270 160 L1268.9 159 L1267.7 157.9 L1266.6 156.9 L1265.5 155.9 L1264.4 154.9 L1263.3 153.9 L1262.3 152.9 L1261.2 152 L1260.2 151 L1259.2 150.1 L1258.2 149.1"/><path d="M548.9 148.2 L552.5 147.3 L556.1 146.4 L559.7 145.5 L563.2 144.7 L566.7 143.8 L570.1 143 L573.6 142.2 L577 141.3 L580.4 140.6 L583.7 139.8 L587 139 L590.3 138.3 L593.5 137.5 L596.7 136.8 L599.9 136.1 L603 135.4 L606.1 134.8 L609.2 134.1 L612.2 133.5 L615.1 132.9 L618.1 132.3 L620.9 131.8 L623.8 131.2 L626.6 130.7 L629.3 130.2 L632 129.7 L634.6 129.2 L637.2 128.8 L639.8 128.4 L642.3 127.9 L644.7 127.6 L647.1 127.2 L649.5 126.9 L651.8 126.6 L654 126.3 L656.2 126 L658.4 125.8 L660.5 125.6 L662.5 125.4 L664.5 125.2 L666.4 125 L668.3 124.9 L670.1 124.8 L671.9 124.7 L673.6 124.7 L675.3 124.7 L676.9 124.7 L678.5 124.7 L680 124.7 L681.5 124.8 L682.9 124.9 L684.3 125 L685.6 125.2 L686.8 125.3 L688.1 125.5 L689.3 125.8 L690.4 126 L691.5 126.3 L692.5 126.5 L693.5 126.9 L694.5 127.2 L695.4 127.5 L696.3 127.9 L697.1 128.3 L697.9 128.7 L698.7 129.2 L699.4 129.7 L700.1 130.1 L700.8 130.6 L701.4 131.2 L702 131.7 L702.5 132.3 L703 132.9 L703.5 133.5 L704 134.1 L704.4 134.7 L704.9 135.4 L705.2 136.1 L705.6 136.8 L705.9 137.5 L706.2 138.2 L706.5 139 L706.8 139.7 L707.1 140.5 L707.3 141.3 L707.5 142.1 L707.7 142.9 L707.9 143.8 L708 144.6 L708.2 145.5 L708.3 146.4 L708.4 147.2 L708.5 148.2 L708.6 149.1 L708.7 150 L708.7 150.9 L708.8 151.9 L708.8 152.9 L708.8 153.8 L708.9 154.8 L708.9 155.8 L708.9 156.8 L708.9 157.9 L708.9 158.9 L708.9 159.9 L708.9 161 L708.8 162 L708.8 163.1 L708.8 164.2 L708.8 165.3 L708.7 166.4 L708.7 167.5 L708.6 168.6 L708.6 169.7 L708.6 170.8 L708.5 171.9 L708.5 173.1 L708.4 174.2 L708.4 175.4 L708.3 176.5 L708.3 177.7 L708.2 178.9 L708.2 180.1 L708.2 181.3 L708.1 182.4 L708.1 183.6 L708.1 184.9 L708 186.1 L708 187.3 L708 188.5 L708 189.7 L708 191 L707.9 192.2 L707.9 193.4 L707.9 194.7 L707.9 195.9 L708 197.2 L708 198.4 L708 199.7 L708 201 L708 202.2 L708.1 203.5 L708.1 204.8 L708.2 206.1 L708.2 207.4 L708.3 208.6 L708.4 209.9 L708.4 211.2 L708.5 212.5 L708.6 213.8 L708.7 215.1 L708.8 216.4 L708.9 217.8 L709.1 219.1 L709.2 220.4 L709.3 221.7 L709.5 223 L709.6 224.4 L709.8 225.7 L710 227 L710.1 228.4 L710.3 229.7 L710.5 231 L710.7 232.4 L710.9 233.7 L711.2 235.1 L711.4 236.4 L711.6 237.8 L711.9 239.1 L712.1 240.5 L712.4 241.8 L712.7 243.2 L713 244.5 L713.2 245.9 L713.6 247.3 L713.9 248.6 L714.2 250 L714.5 251.4 L714.9 252.7 L715.2 254.1 L715.6 255.5 L715.9 256.8 L716.3 258.2 L716.7 259.6 L717.1 261 L717.5 262.4 L717.9 263.7 L718.4 265.1 L718.8 266.5"/><path d="M965 50 L968.5 51.5 L972.1 53 L975.6 54.6 L979.2 56.1 L982.8 57.6 L986.4 59.2 L990.1 60.8 L993.7 62.3 L997.3 63.9 L1000.9 65.5 L1004.6 67 L1008.2 68.6 L1011.8 70.2 L1015.5 71.8 L1019.1 73.3 L1022.7 74.9 L1026.3 76.5 L1030 78.1 L1033.6 79.7 L1037.2 81.3 L1040.8 82.9 L1044.3 84.5 L1047.9 86.1 L1051.5 87.7 L1055.1 89.3 L1058.6 90.9 L1062.1 92.5 L1065.7 94.1 L1069.2 95.7 L1072.7 97.3 L1076.2 98.9 L1079.7 100.5 L1083.2 102.1 L1086.6 103.7 L1090.1 105.3 L1093.5 106.9 L1096.9 108.5 L1100.3 110.1 L1103.7 111.7 L1107.1 113.3 L1110.5 114.9 L1113.8 116.5 L1117.2 118.1 L1120.5 119.7 L1123.8 121.3 L1127.1 122.9 L1130.4 124.5 L1133.6 126.1 L1136.9 127.7 L1140.1 129.3 L1143.3 130.9 L1146.5 132.5 L1149.7 134.1 L1152.8 135.7 L1155.9 137.3 L1159.1 138.9 L1162.2 140.6 L1165.2 142.2 L1168.3 143.8 L1171.3 145.4 L1174.4 147 L1177.4 148.6 L1180.3 150.2 L1183.3 151.8 L1186.2 153.4 L1189.2 155 L1192.1 156.6 L1194.9 158.2 L1197.8 159.8 L1200.6 161.4 L1203.4 163.1 L1206.2 164.7 L1209 166.3 L1211.7 167.9 L1214.4 169.5 L1217.1 171.1 L1219.8 172.7 L1222.5 174.3 L1225.1 175.9 L1227.7 177.5 L1230.3 179.1 L1232.8 180.7 L1235.3 182.3 L1237.9 184 L1240.3 185.6 L1242.8 187.2 L1245.2 188.8 L1247.6 190.4 L1250 192"/><path d="M967 51 L970.5 52.5 L974.1 54.1 L977.7 55.6 L981.3 57.2 L984.9 58.7 L988.5 60.3 L992.1 61.9 L995.7 63.5 L999.4 65 L1003 66.6 L1006.6 68.2 L1010.3 69.8 L1013.9 71.4 L1017.5 73 L1021.2 74.6 L1024.8 76.2 L1028.4 77.8 L1032 79.4 L1035.6 81 L1039.2 82.6 L1042.8 84.2 L1046.4 85.8 L1050 87.4 L1053.5 89.1 L1057.1 90.7 L1060.6 92.3 L1064.2 93.9 L1067.7 95.5 L1071.2 97.1 L1074.7 98.7 L1078.2 100.3 L1081.7 102 L1085.1 103.6 L1088.6 105.2 L1092 106.8 L1095.4 108.4 L1098.9 110 L1102.3 111.7 L1105.6 113.3 L1109 114.9 L1112.4 116.5 L1115.7 118.1 L1119 119.8 L1122.3 121.4 L1125.6 123 L1128.9 124.6 L1132.2 126.2 L1135.4 127.9 L1138.6 129.5 L1141.8 131.1 L1145 132.7 L1148.2 134.3 L1151.3 136 L1154.5 137.6 L1157.6 139.2 L1160.7 140.8 L1163.8 142.4 L1166.8 144.1 L1169.9 145.7 L1172.9 147.3 L1175.9 148.9 L1178.9 150.6 L1181.8 152.2 L1184.7 153.8 L1187.7 155.4 L1190.6 157 L1193.4 158.7 L1196.3 160.3 L1199.1 161.9 L1201.9 163.5 L1204.7 165.2 L1207.5 166.8 L1210.2 168.4 L1212.9 170 L1215.6 171.6 L1218.3 173.3 L1220.9 174.9 L1223.5 176.5 L1226.1 178.1 L1228.7 179.8 L1231.2 181.4 L1233.8 183 L1236.2 184.6 L1238.7 186.3 L1241.2 187.9 L1243.6 189.5 L1246 191.1 L1248.3 192.8 L1250.7 194.4 L1253 196"/><path d="M969 52 L972.5 53.5 L976.1 55.1 L979.6 56.6 L983.2 58.2 L986.8 59.8 L990.4 61.3 L994 62.9 L997.6 64.5 L1001.2 66.1 L1004.9 67.6 L1008.5 69.2 L1012.1 70.8 L1015.7 72.4 L1019.3 74 L1022.9 75.6 L1026.5 77.2 L1030.1 78.8 L1033.7 80.4 L1037.2 82 L1040.8 83.6 L1044.4 85.2 L1047.9 86.8 L1051.5 88.4 L1055 90 L1058.5 91.6 L1062 93.3 L1065.5 94.9 L1069 96.5 L1072.5 98.1 L1076 99.7 L1079.5 101.3 L1082.9 102.9 L1086.3 104.5 L1089.8 106.1 L1093.2 107.8 L1096.6 109.4 L1099.9 111 L1103.3 112.6 L1106.7 114.2 L1110 115.8 L1113.3 117.4 L1116.6 119.1 L1119.9 120.7 L1123.2 122.3 L1126.5 123.9 L1129.7 125.5 L1132.9 127.1 L1136.1 128.8 L1139.3 130.4 L1142.5 132 L1145.7 133.6 L1148.8 135.2 L1151.9 136.8 L1155 138.5 L1158.1 140.1 L1161.2 141.7 L1164.2 143.3 L1167.3 144.9 L1170.3 146.6 L1173.3 148.2 L1176.2 149.8 L1179.2 151.4 L1182.1 153 L1185 154.6 L1187.9 156.3 L1190.8 157.9 L1193.6 159.5 L1196.4 161.1 L1199.2 162.7 L1202 164.4 L1204.7 166 L1207.5 167.6 L1210.2 169.2 L1212.9 170.8 L1215.5 172.5 L1218.2 174.1 L1220.8 175.7 L1223.4 177.3 L1225.9 178.9 L1228.5 180.6 L1231 182.2 L1233.5 183.8 L1235.9 185.4 L1238.4 187 L1240.8 188.7 L1243.2 190.3 L1245.6 191.9 L1247.9 193.5 L1250.2 195.1 L1252.5 196.8 L1254.8 198.4 L1257 200"/><path d="M966 50 L968.7 51.3 L971.5 52.7 L974.4 54.1 L977.4 55.5 L980.4 56.9 L983.4 58.4 L986.5 59.8 L989.6 61.3 L992.7 62.8 L995.8 64.3 L999 65.8 L1002.1 67.4 L1005.3 68.9 L1008.5 70.4 L1011.7 72 L1014.9 73.5 L1018.1 75 L1021.3 76.6 L1024.5 78.2 L1027.7 79.7 L1031 81.3 L1034.2 82.8 L1037.4 84.4 L1040.6 86 L1043.7 87.6 L1046.9 89.1 L1050.1 90.7 L1053.3 92.3 L1056.5 93.9 L1059.6 95.5 L1062.8 97.1 L1065.9 98.6 L1069.1 100.2 L1072.2 101.8 L1075.3 103.4 L1078.4 105 L1081.5 106.6 L1084.6 108.2 L1087.7 109.8 L1090.7 111.4 L1093.8 113 L1096.8 114.6 L1099.8 116.2 L1102.8 117.8 L1105.8 119.4 L1108.8 121 L1111.8 122.6 L1114.7 124.2 L1117.7 125.8 L1120.6 127.4 L1123.5 129 L1126.4 130.6 L1129.3 132.2 L1132.1 133.8 L1135 135.4 L1137.8 137 L1140.6 138.6 L1143.4 140.2 L1146.2 141.8 L1149 143.4 L1151.7 145 L1154.4 146.6 L1157.1 148.2 L1159.8 149.8 L1162.5 151.4 L1165.2 153 L1167.8 154.6 L1170.4 156.2 L1173 157.9 L1175.6 159.5 L1178.1 161.1 L1180.7 162.7 L1183.2 164.3 L1185.7 165.9 L1188.1 167.5 L1190.6 169.1 L1193 170.7 L1195.4 172.3 L1197.8 173.9 L1200.2 175.5 L1202.5 177.2 L1204.8 178.8 L1207.1 180.4 L1209.4 182 L1211.7 183.6 L1213.9 185.2 L1216.1 186.8 L1218.3 188.4 L1220.4 190 L1222.6 191.6 L1224.7 193.3 L1226.8 194.9 L1228.9 196.5 L1230.9 198.1 L1232.9 199.7 L1234.9 201.3 L1236.9 202.9 L1238.8 204.5 L1240.7 206.1 L1242.6 207.8 L1244.5 209.4 L1246.3 211 L1248.2 212.6 L1249.9 214.2 L1251.7 215.8 L1253.5 217.4 L1255.2 219 L1256.9 220.7 L1258.5 222.3 L1260.1 223.9 L1261.8 225.5 L1263.3 227.1 L1264.9 228.7 L1266.4 230.3 L1267.9 231.9 L1269.4 233.6 L1270.8 235.2 L1272.2 236.8 L1273.6 238.4 L1275 240"/><path d="M968 52 L971.5 53.5 L975 55.1 L978.6 56.6 L982.1 58.2 L985.6 59.7 L989.2 61.3 L992.8 62.9 L996.3 64.5 L999.9 66 L1003.5 67.6 L1007 69.2 L1010.6 70.8 L1014.2 72.4 L1017.7 73.9 L1021.3 75.5 L1024.8 77.1 L1028.4 78.7 L1031.9 80.3 L1035.4 81.9 L1038.9 83.5 L1042.5 85.1 L1046 86.7 L1049.5 88.3 L1052.9 89.9 L1056.4 91.5 L1059.9 93.1 L1063.3 94.7 L1066.8 96.3 L1070.2 97.9 L1073.6 99.5 L1077.1 101.1 L1080.5 102.7 L1083.8 104.3 L1087.2 105.9 L1090.6 107.5 L1093.9 109.1 L1097.3 110.7 L1100.6 112.3 L1103.9 113.9 L1107.2 115.5 L1110.5 117.2 L1113.7 118.8 L1117 120.4 L1120.2 122 L1123.4 123.6 L1126.6 125.2 L1129.8 126.8 L1133 128.4 L1136.1 130 L1139.3 131.6 L1142.4 133.2 L1145.5 134.8 L1148.6 136.4 L1151.6 138.1 L1154.7 139.7 L1157.7 141.3 L1160.7 142.9 L1163.7 144.5 L1166.7 146.1 L1169.6 147.7 L1172.5 149.3 L1175.5 150.9 L1178.4 152.5 L1181.2 154.1 L1184.1 155.7 L1186.9 157.4 L1189.7 159 L1192.5 160.6 L1195.3 162.2 L1198 163.8 L1200.7 165.4 L1203.4 167 L1206.1 168.6 L1208.8 170.2 L1211.4 171.8 L1214 173.5 L1216.6 175.1 L1219.1 176.7 L1221.7 178.3 L1224.2 179.9 L1226.7 181.5 L1229.2 183.1 L1231.6 184.7 L1234 186.3 L1236.4 187.9 L1238.8 189.6 L1241.1 191.2 L1243.4 192.8 L1245.7 194.4 L1248 196"/><path d="M972 54 L974.8 55.4 L977.7 56.9 L980.6 58.3 L983.6 59.8 L986.6 61.3 L989.6 62.8 L992.6 64.3 L995.6 65.8 L998.7 67.3 L1001.8 68.8 L1004.8 70.4 L1007.9 71.9 L1011 73.5 L1014.1 75 L1017.2 76.6 L1020.3 78.1 L1023.4 79.7 L1026.5 81.3 L1029.6 82.8 L1032.6 84.4 L1035.7 86 L1038.8 87.6 L1041.9 89.1 L1044.9 90.7 L1048 92.3 L1051.1 93.9 L1054.1 95.5 L1057.1 97.1 L1060.2 98.7 L1063.2 100.3 L1066.2 101.8 L1069.2 103.4 L1072.2 105 L1075.2 106.6 L1078.1 108.2 L1081.1 109.8 L1084.1 111.4 L1087 113 L1089.9 114.6 L1092.8 116.2 L1095.7 117.8 L1098.6 119.4 L1101.5 121 L1104.3 122.6 L1107.2 124.2 L1110 125.8 L1112.8 127.5 L1115.6 129.1 L1118.4 130.7 L1121.2 132.3 L1124 133.9 L1126.7 135.5 L1129.4 137.1 L1132.1 138.7 L1134.8 140.3 L1137.5 141.9 L1140.2 143.5 L1142.8 145.1 L1145.4 146.7 L1148 148.4 L1150.6 150 L1153.2 151.6 L1155.7 153.2 L1158.3 154.8 L1160.8 156.4 L1163.3 158 L1165.8 159.6 L1168.2 161.2 L1170.6 162.9 L1173.1 164.5 L1175.5 166.1 L1177.8 167.7 L1180.2 169.3 L1182.5 170.9 L1184.9 172.5 L1187.1 174.1 L1189.4 175.8 L1191.7 177.4 L1193.9 179 L1196.1 180.6 L1198.3 182.2 L1200.5 183.8 L1202.6 185.4 L1204.7 187 L1206.8 188.7 L1208.9 190.3 L1211 191.9 L1213 193.5 L1215 195.1 L1217 196.7 L1219 198.3 L1220.9 200 L1222.8 201.6 L1224.7 203.2 L1226.6 204.8 L1228.4 206.4 L1230.2 208 L1232 209.7 L1233.8 211.3 L1235.5 212.9 L1237.2 214.5 L1238.9 216.1 L1240.6 217.7 L1242.3 219.3 L1243.9 221 L1245.5 222.6 L1247 224.2 L1248.6 225.8 L1250.1 227.4 L1251.6 229 L1253 230.7 L1254.5 232.3 L1255.9 233.9 L1257.3 235.5 L1258.6 237.1 L1260 238.7 L1261.3 240.4 L1262.5 242 L1263.8 243.6 L1265 245.2 L1266.2 246.8 L1267.4 248.4 L1268.5 250 L1269.6 251.7 L1270.7 253.3 L1271.8 254.9 L1272.8 256.5 L1273.8 258.1 L1274.8 259.7 L1275.7 261.4 L1276.6 263 L1277.5 264.6 L1278.4 266.2 L1279.2 267.8 L1280 269.4 L1280.8 271.1 L1281.6 272.7 L1282.3 274.3 L1283 275.9 L1283.6 277.5 L1284.3 279.1 L1284.9 280.8 L1285.5 282.4 L1286 284"/><path d="M970 53 L972.7 54.4 L975.4 55.8 L978.2 57.2 L981 58.6 L983.9 60.1 L986.8 61.6 L989.7 63.1 L992.7 64.6 L995.6 66.1 L998.6 67.6 L1001.6 69.1 L1004.6 70.6 L1007.6 72.2 L1010.6 73.7 L1013.7 75.3 L1016.7 76.8 L1019.7 78.4 L1022.7 80 L1025.8 81.5 L1028.8 83.1 L1031.8 84.7 L1034.8 86.2 L1037.9 87.8 L1040.9 89.4 L1043.9 91 L1046.9 92.6 L1049.9 94.2 L1052.9 95.8 L1055.9 97.3 L1058.8 98.9 L1061.8 100.5 L1064.7 102.1 L1067.7 103.7 L1070.6 105.3 L1073.6 106.9 L1076.5 108.5 L1079.4 110.1 L1082.3 111.7 L1085.1 113.3 L1088 114.9 L1090.9 116.5 L1093.7 118.1 L1096.6 119.7 L1099.4 121.4 L1102.2 123 L1105 124.6 L1107.8 126.2 L1110.5 127.8 L1113.3 129.4 L1116 131 L1118.7 132.6 L1121.4 134.2 L1124.1 135.8 L1126.8 137.4 L1129.5 139.1 L1132.1 140.7 L1134.7 142.3 L1137.3 143.9 L1139.9 145.5 L1142.5 147.1 L1145 148.7 L1147.6 150.4 L1150.1 152 L1152.6 153.6 L1155.1 155.2 L1157.6 156.8 L1160 158.4 L1162.4 160 L1164.8 161.7 L1167.2 163.3 L1169.6 164.9 L1171.9 166.5 L1174.3 168.1 L1176.6 169.8 L1178.9 171.4 L1181.1 173 L1183.4 174.6 L1185.6 176.2 L1187.8 177.8 L1190 179.5 L1192.2 181.1 L1194.3 182.7 L1196.4 184.3 L1198.5 185.9 L1200.6 187.6 L1202.7 189.2 L1204.7 190.8 L1206.7 192.4 L1208.7 194 L1210.7 195.7 L1212.6 197.3 L1214.5 198.9 L1216.4 200.5 L1218.3 202.1 L1220.1 203.7 L1221.9 205.4 L1223.7 207 L1225.5 208.6 L1227.3 210.2 L1229 211.9 L1230.7 213.5 L1232.4 215.1 L1234 216.7 L1235.6 218.3 L1237.2 220 L1238.8 221.6 L1240.4 223.2 L1241.9 224.8 L1243.4 226.4 L1244.9 228.1 L1246.3 229.7 L1247.7 231.3 L1249.1 232.9 L1250.5 234.5 L1251.9 236.2 L1253.2 237.8 L1254.5 239.4 L1255.7 241 L1257 242.7 L1258.2 244.3 L1259.4 245.9 L1260.5 247.5 L1261.6 249.1 L1262.8 250.8 L1263.8 252.4 L1264.9 254 L1265.9 255.6 L1266.9 257.3 L1267.9 258.9 L1268.8 260.5 L1269.7 262.1 L1270.6 263.7 L1271.4 265.4 L1272.3 267 L1273.1 268.6 L1273.8 270.2 L1274.6 271.9 L1275.3 273.5 L1276 275.1 L1276.6 276.7 L1277.3 278.3 L1277.9 280 L1278.5 281.6 L1279 283.2 L1279.5 284.8 L1280 286.5 L1280.5 288.1 L1280.9 289.7 L1281.3 291.3 L1281.7 292.9 L1282 294.6 L1282.3 296.2 L1282.6 297.8 L1282.9 299.4 L1283.1 301.1 L1283.3 302.7 L1283.5 304.3 L1283.6 305.9 L1283.7 307.5 L1283.8 309.2 L1283.9 310.8 L1283.9 312.4 L1283.9 314 L1283.9 315.7 L1283.8 317.3 L1283.7 318.9 L1283.6 320.5 L1283.5 322.2 L1283.3 323.8 L1283.1 325.4 L1282.9 327 L1282.6 328.6 L1282.3 330.3 L1282 331.9 L1281.7 333.5 L1281.3 335.1 L1280.9 336.8 L1280.5 338.4 L1280 340"/><path d="M964 49 L967.4 50.5 L970.8 51.9 L974.3 53.4 L977.8 55 L981.3 56.5 L984.8 58 L988.4 59.6 L992 61.1 L995.6 62.7 L999.2 64.2 L1002.8 65.8 L1006.4 67.4 L1010 69 L1013.6 70.6 L1017.2 72.1 L1020.8 73.7 L1024.4 75.3 L1028 76.9 L1031.6 78.5 L1035.2 80.1 L1038.8 81.7 L1042.4 83.3 L1045.9 84.9 L1049.5 86.5 L1053.1 88.1 L1056.6 89.7 L1060.2 91.3 L1063.7 92.9 L1067.2 94.5 L1070.7 96.1 L1074.2 97.7 L1077.7 99.4 L1081.2 101 L1084.7 102.6 L1088.1 104.2 L1091.6 105.8 L1095 107.4 L1098.4 109 L1101.8 110.6 L1105.2 112.3 L1108.6 113.9 L1111.9 115.5 L1115.3 117.1 L1118.6 118.7 L1121.9 120.3 L1125.2 121.9 L1128.5 123.6 L1131.8 125.2 L1135 126.8 L1138.2 128.4 L1141.5 130 L1144.7 131.7 L1147.8 133.3 L1151 134.9 L1154.1 136.5 L1157.3 138.1 L1160.4 139.7 L1163.5 141.4 L1166.5 143 L1169.6 144.6 L1172.6 146.2 L1175.6 147.8 L1178.6 149.5 L1181.6 151.1 L1184.5 152.7 L1187.4 154.3 L1190.3 155.9 L1193.2 157.6 L1196.1 159.2 L1198.9 160.8 L1201.7 162.4 L1204.5 164.1 L1207.3 165.7 L1210 167.3 L1212.8 168.9 L1215.5 170.5 L1218.1 172.2 L1220.8 173.8 L1223.4 175.4 L1226 177 L1228.6 178.6 L1231.2 180.3 L1233.7 181.9 L1236.2 183.5 L1238.7 185.1 L1241.2 186.8 L1243.6 188.4 L1246 190"/><path d="M966 51 L969.6 52.6 L973.3 54.1 L977 55.7 L980.7 57.3 L984.4 58.9 L988.1 60.4 L991.8 62 L995.5 63.6 L999.2 65.2 L1002.9 66.8 L1006.5 68.4 L1010.2 70 L1013.9 71.6 L1017.6 73.2 L1021.3 74.8 L1025 76.4 L1028.6 78 L1032.3 79.6 L1035.9 81.3 L1039.6 82.9 L1043.2 84.5 L1046.8 86.1 L1050.5 87.7 L1054.1 89.3 L1057.7 90.9 L1061.3 92.5 L1064.8 94.2 L1068.4 95.8 L1071.9 97.4 L1075.5 99 L1079 100.6 L1082.5 102.2 L1086 103.9 L1089.5 105.5 L1093 107.1 L1096.5 108.7 L1099.9 110.3 L1103.4 111.9 L1106.8 113.6 L1110.2 115.2 L1113.6 116.8 L1116.9 118.4 L1120.3 120 L1123.6 121.7 L1127 123.3 L1130.3 124.9 L1133.6 126.5 L1136.9 128.1 L1140.1 129.8 L1143.3 131.4 L1146.6 133 L1149.8 134.6 L1153 136.2 L1156.1 137.9 L1159.3 139.5 L1162.4 141.1 L1165.5 142.7 L1168.6 144.3 L1171.7 146 L1174.7 147.6 L1177.8 149.2 L1180.8 150.8 L1183.7 152.5 L1186.7 154.1 L1189.7 155.7 L1192.6 157.3 L1195.5 158.9 L1198.4 160.6 L1201.2 162.2 L1204.1 163.8 L1206.9 165.4 L1209.7 167 L1212.4 168.7 L1215.2 170.3 L1217.9 171.9 L1220.6 173.5 L1223.3 175.2 L1225.9 176.8 L1228.5 178.4 L1231.1 180 L1233.7 181.6 L1236.2 183.3 L1238.8 184.9 L1241.3 186.5 L1243.7 188.1 L1246.2 189.8 L1248.6 191.4 L1251 193"/><path d="M1300 182 L1303.3 183.6 L1306.7 185.2 L1309.9 186.8 L1313.2 188.4 L1316.4 190 L1319.6 191.7 L1322.8 193.3 L1325.9 194.9 L1329 196.5 L1332.1 198.1 L1335.1 199.7 L1338.1 201.3 L1341.1 202.9 L1344 204.5 L1346.9 206.1 L1349.8 207.8 L1352.6 209.4 L1355.4 211 L1358.2 212.6 L1360.9 214.2 L1363.6 215.8 L1366.3 217.4 L1368.9 219 L1371.6 220.6 L1374.1 222.3 L1376.7 223.9 L1379.1 225.5 L1381.6 227.1 L1384 228.7 L1386.4 230.3 L1388.8 231.9 L1391.1 233.5 L1393.4 235.2 L1395.6 236.8 L1397.8 238.4 L1400 240"/><path d="M760 100 L699 130.7 L632.5 184.4 L581 243 L558 279"/><path d="M770 105 L699 151 L645 202 L607 253.5 L594 304.6"/><path d="M775 115 L699 184.4 L658 233 L640 304.6"/><path d="M790 120 L699 207.4 L671 253.5 L658 304.6"/><path d="M765 102 L690 145 L640 190 L595 245 L575 290"/><path d="M772 110 L700 168 L652 218 L622 262 L612 300"/><path d="M780 118 L705 195 L665 243 L650 300"/><path d="M750 100 L680 130 L615 180 L560 235 L540 262"/><path d="M800 110 L740 180 L700 240 L680 300"/><path d="M805 120 L755 190 L725 250 L712 310"/><path d="M990 175 L894 229 L855 275 L812 321 L770 352"/><path d="M867 170 L880 223 L904 277 L922 330 L952 437"/><path d="M936 175 L928 238 L912 294 L904 330 L896 416"/><path d="M880 181 L931 241 L958 280 L981 318 L1038 450"/><path d="M983 179 L972 255"/><path d="M922 179 L887 250 L858 330 L851 420"/><path d="M798 259 L826 303 L851 330 L904 388 L929 411"/><path d="M951 181 L944 223 L929 286 L920 330"/><path d="M992 332 L970 443"/><path d="M1020 325 L995 441"/><path d="M780 343 L812 391 L856 441"/><path d="M869 327 L860 416"/><path d="M890 324 L915 418"/></g>
<g fill="none" stroke="#767676" stroke-width="1.6" stroke-linejoin="round"><path d="M651.7 118.3 L700 100"/><path d="M665.8 103.7 L675 106.3"/><path d="M700 124.2 L736.7 104.2"/><path d="M710 132 L712.4 130.4 L714.7 128.8 L717.1 127.2 L719.5 125.6 L721.9 124 L724.3 122.4 L726.8 120.8 L729.2 119.2 L731.7 117.6 L734.1 116.1 L736.6 114.5 L739.1 112.9 L741.6 111.3 L744.1 109.7 L746.6 108.1 L749.1 106.5 L751.7 105 L754.2 103.4 L756.8 101.8 L759.3 100.2 L761.9 98.6 L764.4 97.1 L767 95.5 L769.6 93.9 L772.2 92.3 L774.8 90.8 L777.4 89.2 L780 87.6 L782.6 86.1 L785.2 84.5 L787.8 83 L790.4 81.4 L793 79.9 L795.6 78.3 L798.2 76.8 L800.8 75.3 L803.4 73.8 L806 72.2 L808.6 70.7 L811.2 69.2 L813.7 67.7 L816.3 66.2 L818.8 64.8 L821.3 63.3"/><path d="M740 158.3 L741.2 156.7 L742.3 155.2 L743.5 153.6 L744.7 152.1 L745.9 150.5 L747.2 149 L748.4 147.4 L749.6 145.9 L750.9 144.3 L752.1 142.8 L753.4 141.2 L754.6 139.7 L755.9 138.2 L757.2 136.6 L758.5 135.1 L759.8 133.5 L761.1 132 L762.4 130.5 L763.7 129 L765 127.4 L766.4 125.9 L767.7 124.4 L769 122.9 L770.4 121.4 L771.7 119.9 L773.1 118.4 L774.4 116.9 L775.8 115.4 L777.2 113.9 L778.5 112.4 L779.9 110.9 L781.3 109.4 L782.6 107.9 L784 106.5 L785.4 105 L786.8 103.5 L788.1 102.1 L789.5 100.6 L790.9 99.2 L792.2 97.8 L793.6 96.3 L794.9 94.9 L796.3 93.5 L797.6 92.1 L798.9 90.7 L800.2 89.3 L801.5 88 L802.8 86.6 L804.1 85.3 L805.3 83.9 L806.6 82.6 L807.8 81.3 L809 80 L810.1 78.8 L811.3 77.5 L812.4 76.3 L813.4 75.1 L814.5 73.9 L815.4 72.8 L816.4 71.7 L817.2 70.6 L818.1 69.5 L818.8 68.5 L819.5 67.5 L820.1 66.6 L820.6 65.7 L821 64.8 L821.3 64"/><path d="M765 168.3 L765.8 166.7 L766.5 165.2 L767.3 163.6 L768.1 162.1 L768.9 160.5 L769.7 159 L770.5 157.4 L771.3 155.9 L772.1 154.3 L772.9 152.8 L773.8 151.2 L774.6 149.7 L775.5 148.1 L776.3 146.6 L777.2 145 L778.1 143.5 L779 142 L779.8 140.4 L780.7 138.9 L781.6 137.4 L782.5 135.9 L783.4 134.3 L784.3 132.8 L785.3 131.3 L786.2 129.8 L787.1 128.3 L788 126.8 L789 125.3 L789.9 123.8 L790.9 122.3 L791.8 120.8 L792.7 119.3 L793.7 117.8 L794.6 116.3 L795.6 114.9 L796.5 113.4 L797.5 111.9 L798.4 110.5 L799.4 109 L800.4 107.6 L801.3 106.1 L802.2 104.7 L803.2 103.3 L804.1 101.9 L805.1 100.5 L806 99.1 L806.9 97.7 L807.8 96.3 L808.7 94.9 L809.6 93.6 L810.5 92.2 L811.4 90.9 L812.3 89.6 L813.1 88.3 L813.9 87 L814.7 85.7 L815.5 84.4 L816.3 83.2 L817 82 L817.8 80.8 L818.4 79.6 L819.1 78.4 L819.7 77.3 L820.3 76.2 L820.8 75.1 L821.3 74.1 L821.7 73.1 L822.1 72.1 L822.4 71.2 L822.6 70.3 L822.8 69.4 L822.9 68.6 L822.8 67.9 L822.7 67.2 L822.5 66.5 L822.2 65.9 L821.8 65.4 L821.2 64.9 L820.5 64.5"/><path d="M780 168.3 L780.7 166.7 L781.4 165.2 L782.2 163.6 L782.9 162.1 L783.6 160.5 L784.4 158.9 L785.2 157.4 L785.9 155.8 L786.7 154.3 L787.5 152.7 L788.3 151.2 L789.1 149.6 L789.9 148.1 L790.7 146.5 L791.5 145 L792.3 143.4 L793.1 141.9 L794 140.3 L794.8 138.8 L795.6 137.3 L796.5 135.7 L797.4 134.2 L798.2 132.7 L799.1 131.1 L800 129.6 L800.8 128.1 L801.7 126.5 L802.6 125 L803.5 123.5 L804.4 122 L805.3 120.5 L806.2 118.9 L807.1 117.4 L808 115.9 L808.9 114.4 L809.8 112.9 L810.8 111.4 L811.7 109.9 L812.6 108.4 L813.5 107 L814.5 105.5 L815.4 104 L816.3 102.5 L817.2 101.1 L818.2 99.6 L819.1 98.1 L820 96.7"/><path d="M751.7 115.8 L758.3 107.5"/><path d="M791.7 96.7 L805.8 90"/><path d="M796.7 103.3 L811.7 96.7"/><path d="M728.3 174.2 L730.4 173.2 L732.6 172.3 L734.7 171.3 L736.9 170.4 L739 169.5 L741.1 168.5 L743.3 167.6 L745.4 166.7 L747.5 165.8 L749.6 164.9 L751.7 164.1 L753.8 163.2 L755.9 162.4 L758 161.5 L760.1 160.7 L762.1 159.9 L764.2 159.1 L766.3 158.3 L768.3 157.5"/><path d="M866.7 59.2 L830 73.3"/><path d="M884.2 108 L871.7 102.5 L858.3 99.2 L841.7 100.8"/><path d="M890 95.3 L903.3 96.7 L914.7 101.3"/><path d="M869.2 114.2 L862.5 107.5"/><path d="M821.7 124.2 L839.2 117"/><path d="M848.3 136.2 L819.2 138.3"/><path d="M855.8 153.3 L845.8 145.8"/><path d="M862 164.2 L861.5 159 L859.7 154.2"/><path d="M836 91 L825 85.8"/><path d="M620.8 176.7 L622.5 160.8"/><path d="M886 81 L883 74"/><path d="M891.7 85 L880 81.7"/><path d="M897.5 53.3 L910 69.2"/><path d="M894.2 52.9 L905 53.8"/><path d="M891.7 68.3 L880.8 58.8"/><path d="M886.7 45.4 L898.3 39.2 L911.7 35.8"/><path d="M879.2 57.9 L890 50 L898.3 46.3 L908.3 44.6 L915 45"/><path d="M848.7 49.3 L824.7 59.3"/><path d="M850 52.5 L828 62"/><path d="M893.3 70.4 L913.3 71.3"/><path d="M925 87.5 L926.7 80.8"/><path d="M771 68.7 L777.3 67.3 L782.7 72.7"/><path d="M939.2 90.8 L931.7 82.5 L928.3 71.7 L925 52.5 L926.7 45 L930.8 43 L954 47.5"/><path d="M990 85 L973.3 75 L951.7 60 L928.3 50.8"/><path d="M958.3 47.5 L956.7 47.5 L955.4 47.6 L954.5 47.9 L953.8 48.3 L953.5 48.7 L953.3 49.3 L953.4 50 L953.7 50.8 L954.2 51.7 L954.8 52.6 L955.5 53.6 L956.4 54.6 L957.4 55.8 L958.4 56.9 L959.5 58.1 L960.7 59.3 L962 60.6 L963.2 61.9 L964.6 63.2 L965.9 64.5 L967.3 65.9 L968.8 67.3 L970.2 68.7 L971.7 70.1 L973.2 71.5 L974.7 72.9 L976.2 74.4 L977.7 75.8 L979.2 77.3 L980.8 78.8 L982.3 80.3 L983.9 81.8 L985.5 83.3 L987 84.8 L988.6 86.3 L990.2 87.8 L991.7 89.3 L993.3 90.8 L994.9 92.4 L996.4 93.9 L998 95.4 L999.6 97 L1001.1 98.5 L1002.7 100.1 L1004.2 101.6 L1005.8 103.2 L1007.3 104.7 L1008.9 106.3 L1010.4 107.8 L1011.9 109.4 L1013.5 110.9 L1015 112.5"/><path d="M958.3 47.5 L985 85"/><path d="M957 49 L975 76"/><path d="M960 49 L958.9 49.2 L958 49.5 L957.4 49.8 L957.1 50.3 L956.9 50.9 L957 51.6 L957.3 52.4 L957.7 53.2 L958.3 54.1 L959 55.1 L959.8 56.1 L960.7 57.2 L961.7 58.3 L962.7 59.5 L963.9 60.7 L965.1 61.9 L966.3 63.1 L967.6 64.4 L968.9 65.7 L970.2 67 L971.6 68.4 L973 69.7 L974.4 71.1 L975.8 72.5 L977.3 73.9 L978.7 75.3 L980.2 76.8 L981.7 78.2 L983.2 79.6 L984.7 81.1 L986.2 82.6 L987.8 84 L989.3 85.5 L990.8 87 L992.3 88.5 L993.9 90 L995.4 91.5 L996.9 93 L998.5 94.5 L1000 96"/><path d="M960 50 L960.6 50.8 L961.3 51.7 L962.2 52.6 L963.3 53.6 L964.5 54.6 L965.8 55.7 L967.2 56.9 L968.6 58.1 L970.2 59.3 L971.8 60.6 L973.4 61.9 L975.2 63.2 L976.9 64.5 L978.7 65.8 L980.5 67.2 L982.4 68.6 L984.2 70 L986.1 71.4 L988 72.8 L990 74.3 L991.9 75.7 L993.8 77.2 L995.8 78.6 L997.8 80.1 L999.7 81.6 L1001.7 83.1 L1003.7 84.6 L1005.7 86.1 L1007.7 87.6 L1009.6 89.1 L1011.6 90.6 L1013.6 92.1 L1015.6 93.6 L1017.6 95.1 L1019.6 96.7 L1021.5 98.2 L1023.5 99.7 L1025.5 101.3 L1027.4 102.8 L1029.4 104.4 L1031.4 105.9 L1033.3 107.4 L1035.3 109 L1037.2 110.5 L1039.1 112.1 L1041.1 113.6 L1043 115.2 L1044.9 116.7 L1046.8 118.3 L1048.7 119.9 L1050.6 121.4 L1052.4 123 L1054.3 124.5 L1056.2 126.1 L1058 127.7 L1059.9 129.2 L1061.7 130.8"/><path d="M966.7 55 L967.8 56 L969 57.1 L970.3 58.2 L971.7 59.4 L973.2 60.6 L974.7 61.9 L976.3 63.1 L978 64.4 L979.6 65.7 L981.4 67.1 L983.1 68.4 L984.9 69.8 L986.7 71.2 L988.6 72.6 L990.4 74 L992.3 75.5 L994.2 76.9 L996.1 78.4 L998 79.8 L999.9 81.3 L1001.8 82.8 L1003.8 84.3 L1005.7 85.8 L1007.7 87.3 L1009.6 88.8 L1011.6 90.3 L1013.5 91.8 L1015.5 93.3 L1017.4 94.8 L1019.4 96.4 L1021.3 97.9 L1023.2 99.4 L1025.2 101 L1027.1 102.5 L1029.1 104.1 L1031 105.6 L1032.9 107.2 L1034.8 108.7 L1036.7 110.3 L1038.6 111.8 L1040.5 113.4 L1042.4 114.9 L1044.3 116.5 L1046.2 118.1 L1048.1 119.6 L1049.9 121.2 L1051.8 122.8 L1053.6 124.3 L1055.5 125.9 L1057.3 127.5 L1059.1 129.1 L1060.9 130.6 L1062.7 132.2 L1064.5 133.8 L1066.3 135.4 L1068.1 137 L1069.8 138.5 L1071.6 140.1 L1073.3 141.7"/><path d="M968.3 91.7 L981.7 105"/><path d="M979.2 93.3 L1015 114.2"/><path d="M1046.7 97.5 L1048.6 98.9 L1050.4 100.3 L1052.3 101.7 L1054.2 103.1 L1056.1 104.5 L1058 105.9 L1059.9 107.4 L1061.8 108.8 L1063.7 110.3 L1065.6 111.7 L1067.5 113.2 L1069.4 114.6 L1071.3 116.1 L1073.2 117.6 L1075.1 119 L1076.9 120.5 L1078.8 122 L1080.7 123.5 L1082.6 125 L1084.5 126.5 L1086.3 128 L1088.2 129.5 L1090 131 L1091.9 132.5 L1093.7 134 L1095.5 135.5 L1097.4 137 L1099.2 138.6 L1101 140.1 L1102.8 141.6 L1104.6 143.1 L1106.3 144.7 L1108.1 146.2 L1109.8 147.7 L1111.6 149.3 L1113.3 150.8"/><path d="M1111.7 108.8 L1110.2 108.8 L1108.7 108.9 L1107.3 109 L1106 109.1 L1104.7 109.3 L1103.5 109.5 L1102.4 109.7 L1101.4 109.9 L1100.4 110.2 L1099.4 110.5 L1098.6 110.8 L1097.8 111.2 L1097 111.6 L1096.4 112 L1095.7 112.4 L1095.1 112.9 L1094.6 113.4 L1094.2 113.9 L1093.7 114.5 L1093.4 115 L1093 115.6 L1092.8 116.2 L1092.5 116.9 L1092.3 117.5 L1092.2 118.2 L1092.1 118.9 L1092 119.7 L1091.9 120.4 L1091.9 121.2 L1092 122 L1092 122.8 L1092.1 123.6 L1092.2 124.5 L1092.4 125.3 L1092.5 126.2 L1092.7 127.1 L1093 128 L1093.2 128.9 L1093.5 129.9 L1093.7 130.9 L1094.1 131.8 L1094.4 132.8 L1094.7 133.8 L1095.1 134.8 L1095.4 135.9 L1095.8 136.9 L1096.2 138 L1096.6 139 L1097 140.1 L1097.5 141.2 L1097.9 142.3 L1098.4 143.4 L1098.8 144.5 L1099.3 145.7 L1099.8 146.8 L1100.2 148 L1100.7 149.1 L1101.2 150.3 L1101.7 151.5 L1102.2 152.7 L1102.7 153.9 L1103.2 155.1 L1103.7 156.3 L1104.2 157.5"/><path d="M1046.7 132.5 L1050 138.3"/><path d="M1006.7 171.3 L1031.7 168.3"/><path d="M965.8 128.3 L960.8 142"/><path d="M1025 74.2 L1036.7 85"/><path d="M1270 160 L1275.8 165.3"/></g>
<g fill="#767676"><circle cx="700" cy="100" r="1.3"/><circle cx="675" cy="106.3" r="1.3"/><circle cx="736.7" cy="104.2" r="1.3"/><circle cx="821.3" cy="63.3" r="1.3"/><circle cx="821.3" cy="64" r="1.3"/><circle cx="820.5" cy="64.5" r="1.3"/><circle cx="820" cy="96.7" r="1.3"/><circle cx="758.3" cy="107.5" r="1.3"/><circle cx="805.8" cy="90" r="1.3"/><circle cx="811.7" cy="96.7" r="1.3"/><circle cx="768.3" cy="157.5" r="1.3"/><circle cx="830" cy="73.3" r="1.3"/><circle cx="841.7" cy="100.8" r="1.3"/><circle cx="914.7" cy="101.3" r="1.3"/><circle cx="862.5" cy="107.5" r="1.3"/><circle cx="839.2" cy="117" r="1.3"/><circle cx="819.2" cy="138.3" r="1.3"/><circle cx="845.8" cy="145.8" r="1.3"/><circle cx="859.7" cy="154.2" r="1.3"/><circle cx="825" cy="85.8" r="1.3"/><circle cx="622.5" cy="160.8" r="1.3"/><circle cx="883" cy="74" r="1.3"/><circle cx="880" cy="81.7" r="1.3"/><circle cx="910" cy="69.2" r="1.3"/><circle cx="905" cy="53.8" r="1.3"/><circle cx="880.8" cy="58.8" r="1.3"/><circle cx="911.7" cy="35.8" r="1.3"/><circle cx="915" cy="45" r="1.3"/><circle cx="824.7" cy="59.3" r="1.3"/><circle cx="828" cy="62" r="1.3"/><circle cx="913.3" cy="71.3" r="1.3"/><circle cx="926.7" cy="80.8" r="1.3"/><circle cx="782.7" cy="72.7" r="1.3"/><circle cx="954" cy="47.5" r="1.3"/><circle cx="928.3" cy="50.8" r="1.3"/><circle cx="1015" cy="112.5" r="1.3"/><circle cx="985" cy="85" r="1.3"/><circle cx="975" cy="76" r="1.3"/><circle cx="1000" cy="96" r="1.3"/><circle cx="1061.7" cy="130.8" r="1.3"/><circle cx="1073.3" cy="141.7" r="1.3"/><circle cx="981.7" cy="105" r="1.3"/><circle cx="1015" cy="114.2" r="1.3"/><circle cx="1113.3" cy="150.8" r="1.3"/><circle cx="1104.2" cy="157.5" r="1.3"/><circle cx="1050" cy="138.3" r="1.3"/><circle cx="1031.7" cy="168.3" r="1.3"/><circle cx="960.8" cy="142" r="1.3"/><circle cx="1036.7" cy="85" r="1.3"/><circle cx="1275.8" cy="165.3" r="1.3"/></g>
<path d="M739.2 265.4 L740.3 263.9 L741.5 262.5 L742.6 261 L743.7 259.6 L744.9 258.2 L746.1 256.7 L747.2 255.3 L748.4 253.8 L749.6 252.4 L750.8 250.9 L752 249.5 L753.3 248.1 L754.5 246.6 L755.7 245.2 L757 243.7 L758.2 242.3 L759.5 240.9 L760.7 239.4 L762 238 L763.3 236.6 L764.6 235.2 L765.9 233.7 L767.2 232.3 L768.5 230.9 L769.8 229.5 L771.2 228.1 L772.5 226.6 L773.8 225.2 L775.2 223.8 L776.5 222.4 L777.9 221 L779.3 219.6 L780.6 218.2 L782 216.8 L783.4 215.4 L784.8 214 L786.2 212.6 L787.6 211.2 L789 209.8 L790.4 208.4 L791.8 207 L793.3 205.6 L794.7 204.3 L796.1 202.9 L797.6 201.5 L799 200.1 L800.4 198.8 L801.9 197.4 L803.3 196.1 L804.8 194.7 L806.3 193.3 L807.7 192 L809.2 190.6 L810.7 189.3 L812.1 188 L813.6 186.6 L815.1 185.3 L816.6 184 L818.1 182.6 L819.6 181.3 L821 180 L822.5 178.7 L824 177.4 L825.5 176.1 L827 174.8 L828.5 173.5 L830 172.2 L831.5 170.9 L833 169.7 L834.5 168.4 L836 167.1 L837.5 165.9 L839 164.6 L840.6 163.4 L842.1 162.2 L843.6 160.9 L845.1 159.7 L846.6 158.5 L848.1 157.3 L849.6 156.1 L851.1 154.9 L852.6 153.7 L854.1 152.5 L855.6 151.4 L857.1 150.2 L858.6 149 L860.1 147.9 L861.6 146.8 L863.1 145.7 L864.6 144.5 L866.1 143.4 L867.6 142.4 L869.1 141.3 L870.6 140.2 L872.1 139.2 L873.5 138.1 L875 137.1 L876.5 136.1 L878 135.1 L879.5 134.1 L880.9 133.1 L882.4 132.1 L883.9 131.2 L885.4 130.2 L886.8 129.3 L888.3 128.4 L889.8 127.5 L891.2 126.7 L892.7 125.8 L894.1 125 L895.6 124.2 L897.1 123.4 L898.5 122.6 L900 121.8 L901.4 121.1 L902.9 120.4 L904.3 119.7 L905.8 119 L907.3 118.4 L908.7 117.7 L910.2 117.1 L911.6 116.5 L913.1 116 L914.6 115.4 L916 114.9 L917.5 114.4 L919 114 L920.5 113.5 L922 113.1 L923.5 112.7 L925 112.4 L926.5 112.1 L928 111.8 L929.5 111.5 L931 111.3 L932.6 111 L934.1 110.9 L935.7 110.7 L937.3 110.6 L938.8 110.5 L940.4 110.4 L942 110.4 L943.7 110.4 L945.3 110.4 L946.9 110.4 L948.6 110.5 L950.3 110.6 L952 110.8 L953.7 110.9 L955.4 111.1 L957.2 111.4 L958.9 111.6 L960.7 111.9 L962.5 112.2 L964.3 112.5 L966.1 112.9 L968 113.3" fill="none" stroke="#ff1c00" stroke-width="1.39" stroke-dasharray="1.39 2.29"/>
<path d="M968 113.3 L968.9 113.5 L969.8 113.7 L970.7 113.8 L971.6 114 L972.5 114.2 L973.4 114.4 L974.3 114.6 L975.3 114.9 L976.2 115.1 L977.1 115.3 L978.1 115.5 L979 115.8 L980 116 L980.9 116.3 L981.9 116.5 L982.8 116.8 L983.8 117.1 L984.8 117.3 L985.8 117.6 L986.7 117.9 L987.7 118.2 L988.7 118.5 L989.7 118.8 L990.7 119.1 L991.7 119.4 L992.7 119.7 L993.7 120.1 L994.7 120.4 L995.7 120.7 L996.8 121.1 L997.8 121.4" fill="none" stroke="#ff1c00" stroke-width="1.5"/>
<path d="M750 272 L750.7 270.4 L751.4 268.8 L752.1 267.2 L752.8 265.6 L753.5 264 L754.3 262.5 L755 260.9 L755.8 259.3 L756.6 257.7 L757.4 256.1 L758.2 254.5 L759 252.9 L759.8 251.3 L760.6 249.7 L761.4 248.1 L762.3 246.6 L763.1 245 L764 243.4 L764.9 241.8 L765.8 240.2 L766.7 238.6 L767.6 237 L768.5 235.4 L769.4 233.9 L770.3 232.3 L771.3 230.7 L772.2 229.1 L773.2 227.5 L774.2 225.9 L775.1 224.3 L776.1 222.8 L777.1 221.2 L778.1 219.6 L779.1 218 L780.2 216.4 L781.2 214.8 L782.2 213.3 L783.3 211.7 L784.3 210.1 L785.4 208.5 L786.5 206.9 L787.6 205.4 L788.6 203.8 L789.7 202.2 L790.8 200.6 L792 199.1 L793.1 197.5 L794.2 195.9 L795.3 194.3 L796.5 192.8 L797.6 191.2 L798.8 189.6 L799.9 188.1 L801.1 186.5 L802.3 184.9 L803.5 183.4 L804.7 181.8 L805.9 180.2 L807.1 178.7 L808.3 177.1 L809.5 175.5 L810.7 174 L811.9 172.4 L813.2 170.9 L814.4 169.3 L815.6 167.7 L816.9 166.2 L818.1 164.6 L819.4 163.1 L820.7 161.5 L821.9 160 L823.2 158.4 L824.5 156.9 L825.8 155.3 L827 153.8 L828.3 152.3 L829.6 150.7 L830.9 149.2 L832.2 147.6 L833.5 146.1 L834.8 144.6 L836.2 143.1 L837.5 141.5 L838.8 140 L840.1 138.5 L841.4 137 L842.8 135.4 L844.1 133.9 L845.4 132.4 L846.8 130.9 L848.1 129.4 L849.4 127.9 L850.8 126.4 L852.1 124.9 L853.5 123.4 L854.8 122 L856.2 120.5 L857.5 119 L858.9 117.5 L860.2 116.1 L861.5 114.6 L862.9 113.2 L864.2 111.7 L865.6 110.3 L866.9 108.8 L868.3 107.4 L869.6 106 L871 104.6 L872.3 103.2 L873.7 101.8 L875 100.4 L876.3 99 L877.7 97.6 L879 96.3 L880.3 94.9 L881.7 93.6 L883 92.3 L884.3 90.9 L885.6 89.7 L886.9 88.4 L888.3 87.1 L889.6 85.9 L890.9 84.6 L892.2 83.4 L893.5 82.2 L894.8 81.1 L896.1 79.9 L897.4 78.8 L898.7 77.7 L900 76.7 L901.2 75.6 L902.5 74.6 L903.8 73.7 L905.1 72.8 L906.4 71.9 L907.7 71 L909 70.2 L910.3 69.5 L911.6 68.8 L913 68.1 L914.3 67.5 L915.7 67 L917 66.5 L918.4 66.1 L919.9 65.7 L921.3 65.4 L922.8 65.2 L924.3 65 L925.9 64.9 L927.5 64.9 L929.2 64.9 L930.9 65 L932.6 65.2 L934.4 65.5 L936.3 65.8 L938.2 66.2 L940.2 66.6 L942.2 67.1 L944.3 67.7 L946.5 68.3 L948.7 68.9 L950.9 69.7 L953.2 70.4 L955.6 71.2 L958 72.1 L960.5 73 L963 73.9 L965.5 74.9 L968.1 75.9 L970.7 76.9 L973.4 78 L976.1 79.1 L978.9 80.2 L981.6 81.4 L984.5 82.5 L987.3 83.7 L990.1 85 L993 86.2 L995.9 87.4 L998.9 88.7 L1001.8 90 L1004.8 91.3 L1007.8 92.6 L1010.8 93.9 L1013.8 95.3 L1016.8 96.6 L1019.8 98 L1022.9 99.3 L1025.9 100.7 L1029 102.1 L1032.1 103.5 L1035.1 104.9 L1038.2 106.3 L1041.3 107.8 L1044.4 109.2" fill="none" stroke="#ff1c00" stroke-width="1.39" stroke-dasharray="1.39 2.29"/>
<path d="M1044.4 109.2 L1045.9 109.9 L1047.4 110.6 L1049 111.3 L1050.5 112 L1052 112.7 L1053.5 113.4 L1055.1 114 L1056.6 114.7 L1058.1 115.4 L1059.7 116.2 L1061.2 116.9 L1062.7 117.6 L1064.2 118.3 L1065.8 119 L1067.3 119.7 L1068.8 120.4 L1070.4 121.1 L1071.9 121.8 L1073.4 122.5 L1074.9 123.3 L1076.5 124 L1078 124.7 L1079.5 125.4 L1081 126.1 L1082.6 126.9 L1084.1 127.6 L1085.6 128.3" fill="none" stroke="#ff1c00" stroke-width="1.5"/>
<path d="M753 271.5 L754.1 270.1 L755.2 268.7 L756.4 267.3 L757.5 265.9 L758.6 264.5 L759.8 263.1 L760.9 261.7 L762.1 260.2 L763.3 258.8 L764.5 257.4 L765.6 256 L766.8 254.6 L768 253.3 L769.2 251.9 L770.5 250.5 L771.7 249.1 L772.9 247.7 L774.2 246.3 L775.4 244.9 L776.6 243.5 L777.9 242.1 L779.2 240.8 L780.4 239.4 L781.7 238 L783 236.6 L784.3 235.2 L785.6 233.9 L786.9 232.5 L788.2 231.1 L789.5 229.8 L790.8 228.4 L792.1 227 L793.4 225.7 L794.8 224.3 L796.1 223 L797.4 221.6 L798.8 220.3 L800.1 218.9 L801.5 217.6 L802.8 216.2 L804.2 214.9 L805.6 213.5 L806.9 212.2 L808.3 210.9 L809.7 209.6 L811.1 208.2 L812.5 206.9 L813.8 205.6 L815.2 204.3 L816.6 203 L818 201.7 L819.4 200.4 L820.8 199.1 L822.2 197.8 L823.6 196.5 L825.1 195.2 L826.5 193.9 L827.9 192.6 L829.3 191.3 L830.7 190.1 L832.1 188.8 L833.6 187.5 L835 186.3 L836.4 185 L837.8 183.8 L839.3 182.6 L840.7 181.3 L842.1 180.1 L843.5 178.9 L845 177.6 L846.4 176.4 L847.8 175.2 L849.3 174 L850.7 172.8 L852.1 171.6 L853.6 170.5 L855 169.3 L856.4 168.1 L857.9 167 L859.3 165.8 L860.7 164.7 L862.2 163.5 L863.6 162.4 L865 161.3 L866.5 160.2 L867.9 159.1 L869.3 158 L870.8 156.9 L872.2 155.8 L873.6 154.8 L875 153.7 L876.5 152.7 L877.9 151.6 L879.3 150.6 L880.7 149.6 L882.2 148.6 L883.6 147.6 L885 146.6 L886.4 145.7 L887.8 144.7 L889.3 143.8 L890.7 142.8 L892.1 141.9 L893.5 141 L894.9 140.1 L896.3 139.3 L897.7 138.4 L899.1 137.6 L900.6 136.7 L902 135.9 L903.4 135.1 L904.8 134.4 L906.2 133.6 L907.6 132.9 L909 132.1 L910.4 131.4 L911.9 130.7 L913.3 130.1 L914.7 129.4 L916.1 128.8 L917.5 128.2 L919 127.6 L920.4 127 L921.8 126.5 L923.3 125.9 L924.7 125.4 L926.1 124.9 L927.6 124.5 L929 124 L930.5 123.6 L932 123.2 L933.4 122.9 L934.9 122.5 L936.4 122.2 L937.9 121.9 L939.4 121.6 L940.9 121.4 L942.4 121.1 L944 120.9 L945.5 120.8 L947.1 120.6 L948.6 120.5 L950.2 120.4 L951.8 120.3 L953.4 120.3 L955 120.3 L956.6 120.3 L958.3 120.3 L959.9 120.4 L961.6 120.5 L963.3 120.6 L965 120.7 L966.7 120.9 L968.4 121.1 L970.2 121.3 L971.9 121.5 L973.7 121.8 L975.5 122 L977.3 122.4 L979.1 122.7 L981 123.1 L982.9 123.4 L984.7 123.8 L986.6 124.3 L988.6 124.7 L990.5 125.2 L992.4 125.7 L994.4 126.2 L996.4 126.8 L998.4 127.3 L1000.4 127.9 L1002.5 128.5 L1004.5 129.1 L1006.6 129.8 L1008.7 130.4 L1010.8 131.1 L1012.9 131.8 L1015.1 132.5 L1017.2 133.3 L1019.4 134 L1021.6 134.8 L1023.8 135.6 L1026 136.4 L1028.2 137.2 L1030.4 138 L1032.7 138.9 L1034.9 139.7 L1037.2 140.6 L1039.5 141.5 L1041.8 142.4 L1044.1 143.4 L1046.4 144.3 L1048.7 145.2 L1051.1 146.2 L1053.4 147.2 L1055.8 148.1 L1058.2 149.1 L1060.5 150.2 L1062.9 151.2 L1065.3 152.2" fill="none" stroke="#ff1c00" stroke-width="1.39" stroke-dasharray="1.39 2.29"/>
<path d="M1065.3 152.2 L1066.5 152.7 L1067.7 153.3 L1068.9 153.8 L1070.1 154.4 L1071.3 154.9 L1072.5 155.5 L1073.7 156 L1074.9 156.6 L1076.1 157.1 L1077.3 157.7 L1078.5 158.3 L1079.7 158.8 L1080.9 159.4 L1082.2 159.9 L1083.4 160.5 L1084.6 161.1 L1085.8 161.7 L1087 162.2 L1088.2 162.8 L1089.4 163.4 L1090.6 164 L1091.8 164.6 L1093.1 165.1 L1094.3 165.7 L1095.5 166.3 L1096.7 166.9 L1097.9 167.5 L1099.1 168.1 L1100.3 168.7 L1101.5 169.3 L1102.8 169.9 L1104 170.5 L1105.2 171.1 L1106.4 171.7" fill="none" stroke="#ff1c00" stroke-width="1.5"/>
<path d="M758.7 279.5 L759.9 278.2 L761.1 276.9 L762.4 275.7 L763.6 274.4 L764.8 273.1 L766.1 271.8 L767.3 270.5 L768.6 269.3 L769.8 268 L771.1 266.7 L772.4 265.5 L773.6 264.2 L774.9 262.9 L776.2 261.7 L777.5 260.4 L778.8 259.1 L780.1 257.9 L781.4 256.6 L782.7 255.4 L784 254.1 L785.4 252.9 L786.7 251.6 L788 250.4 L789.4 249.1 L790.7 247.9 L792.1 246.6 L793.4 245.4 L794.8 244.2 L796.1 242.9 L797.5 241.7 L798.8 240.5 L800.2 239.3 L801.6 238 L803 236.8 L804.4 235.6 L805.7 234.4 L807.1 233.2 L808.5 232 L809.9 230.8 L811.3 229.6 L812.7 228.4 L814.1 227.2 L815.5 226 L816.9 224.8 L818.3 223.6 L819.7 222.5 L821.2 221.3 L822.6 220.1 L824 219 L825.4 217.8 L826.8 216.6 L828.3 215.5 L829.7 214.3 L831.1 213.2 L832.5 212 L834 210.9 L835.4 209.8 L836.8 208.7 L838.3 207.5 L839.7 206.4 L841.2 205.3 L842.6 204.2 L844 203.1 L845.5 202 L846.9 200.9 L848.4 199.8 L849.8 198.8 L851.2 197.7 L852.7 196.6 L854.1 195.6 L855.6 194.5 L857 193.5 L858.4 192.4 L859.9 191.4 L861.3 190.4 L862.8 189.4 L864.2 188.3 L865.7 187.3 L867.1 186.3 L868.5 185.4 L870 184.4 L871.4 183.4 L872.9 182.4 L874.3 181.5 L875.8 180.5 L877.2 179.6 L878.6 178.7 L880.1 177.8 L881.5 176.8 L882.9 175.9 L884.4 175 L885.8 174.2 L887.3 173.3 L888.7 172.4 L890.1 171.6 L891.6 170.7 L893 169.9 L894.4 169.1 L895.9 168.3 L897.3 167.5 L898.7 166.7 L900.2 165.9 L901.6 165.1 L903 164.4 L904.5 163.7 L905.9 162.9 L907.3 162.2 L908.8 161.5 L910.2 160.8 L911.6 160.1 L913.1 159.5 L914.5 158.8 L915.9 158.2 L917.4 157.6 L918.8 157 L920.3 156.4 L921.7 155.8 L923.2 155.3 L924.6 154.7 L926 154.2 L927.5 153.7 L929 153.2 L930.4 152.7 L931.9 152.2 L933.3 151.8 L934.8 151.3 L936.3 150.9 L937.7 150.5 L939.2 150.1 L940.7 149.8 L942.2 149.4 L943.7 149.1 L945.2 148.8 L946.7 148.5 L948.2 148.2 L949.7 147.9 L951.2 147.7 L952.7 147.5 L954.3 147.3 L955.8 147.1 L957.3 146.9 L958.9 146.7 L960.4 146.6 L962 146.5 L963.6 146.4 L965.2 146.3 L966.8 146.3 L968.4 146.2 L970 146.2 L971.6 146.2 L973.2 146.2 L974.9 146.3 L976.5 146.3 L978.2 146.4 L979.8 146.5 L981.5 146.6 L983.2 146.8 L984.9 146.9 L986.6 147.1 L988.3 147.3 L990.1 147.5 L991.8 147.7 L993.6 148 L995.4 148.2 L997.1 148.5 L998.9 148.8 L1000.7 149.1 L1002.5 149.4 L1004.4 149.8 L1006.2 150.2 L1008.1 150.5 L1009.9 151 L1011.8 151.4 L1013.7 151.8 L1015.6 152.3 L1017.5 152.7 L1019.4 153.2 L1021.4 153.7 L1023.3 154.2 L1025.3 154.8 L1027.2 155.3 L1029.2 155.9 L1031.2 156.4 L1033.2 157 L1035.2 157.6 L1037.2 158.3 L1039.3 158.9 L1041.3 159.6 L1043.4 160.2 L1045.4 160.9 L1047.5 161.6 L1049.6 162.3 L1051.7 163" fill="none" stroke="#ff1c00" stroke-width="1.39" stroke-dasharray="1.39 2.29"/>
<path d="M1051.7 163 L1052.7 163.3 L1053.8 163.7 L1054.8 164.1 L1055.9 164.4 L1056.9 164.8 L1058 165.1 L1059.1 165.5 L1060.1 165.9 L1061.2 166.2 L1062.2 166.6 L1063.3 167" fill="none" stroke="#ff1c00" stroke-width="1.5"/>
<path d="M762 272 L761.8 270.4 L761.7 268.9 L761.6 267.3 L761.4 265.8 L761.3 264.2 L761.2 262.6 L761.1 261.1 L761 259.5 L761 258 L760.9 256.4 L760.8 254.9 L760.8 253.3 L760.7 251.8 L760.7 250.2 L760.7 248.6 L760.7 247.1 L760.7 245.5 L760.7 244 L760.7 242.4 L760.7 240.9 L760.8 239.3 L760.8 237.8 L760.9 236.2 L761 234.7 L761 233.1 L761.1 231.6 L761.2 230 L761.3 228.5 L761.4 227 L761.5 225.4 L761.7 223.9 L761.8 222.3 L762 220.8 L762.1 219.2 L762.3 217.7 L762.5 216.2 L762.7 214.6 L762.9 213.1 L763.1 211.6 L763.3 210 L763.5 208.5 L763.7 207 L764 205.4 L764.2 203.9 L764.5 202.4 L764.7 200.8 L765 199.3 L765.3 197.8 L765.6 196.3 L765.9 194.7 L766.2 193.2 L766.5 191.7 L766.8 190.2 L767.2 188.7 L767.5 187.1 L767.9 185.6 L768.2 184.1 L768.6 182.6 L769 181.1 L769.3 179.6 L769.7 178.1 L770.1 176.6 L770.5 175.1 L770.9 173.6 L771.3 172.1 L771.7 170.6 L772.2 169.1 L772.6 167.6 L773 166.1 L773.5 164.7 L773.9 163.2 L774.4 161.7 L774.9 160.2 L775.3 158.7 L775.8 157.3 L776.3 155.8 L776.8 154.4 L777.3 152.9 L777.8 151.4 L778.3 150 L778.8 148.5 L779.3 147.1 L779.8 145.7 L780.3 144.2 L780.8 142.8 L781.3 141.4 L781.9 139.9 L782.4 138.5 L782.9 137.1 L783.4 135.7 L784 134.3 L784.5 132.9 L785 131.5 L785.6 130.1 L786.1 128.8 L786.6 127.4 L787.2 126 L787.7 124.7 L788.2 123.3 L788.7 122 L789.3 120.6 L789.8 119.3 L790.3 118 L790.8 116.7" fill="none" stroke="#ff1c00" stroke-width="1.39" stroke-dasharray="1.39 2.29"/>
<path d="M790.8 116.7 L791.1 116.1 L791.3 115.4 L791.6 114.8 L791.9 114.1 L792.2 113.5 L792.4 112.9 L792.7 112.2 L793 111.6 L793.2 111 L793.5 110.4 L793.7 109.8 L794 109.1 L794.3 108.5 L794.5 107.9 L794.8 107.3 L795 106.7" fill="none" stroke="#ff1c00" stroke-width="1.5"/>
<path d="M581.3 156 L584.6 154.4 L587.8 152.8 L591.1 151.2 L594.4 149.6 L597.8 148 L601.2 146.4 L604.5 144.8 L607.9 143.2 L611.4 141.6 L614.8 140 L618.3 138.4 L621.8 136.8 L625.3 135.2 L628.8 133.6 L632.4 132 L636 130.4 L639.6 128.8 L643.2 127.2 L646.8 125.6 L650.4 124 L654.1 122.4 L657.8 120.8 L661.5 119.2 L665.2 117.6 L669 116 L672.7 114.4 L676.5 112.8 L680.3 111.2 L684.1 109.6 L687.9 108 L691.7 106.4 L695.6 104.8 L699.4 103.2 L703.3 101.6 L707.2 100 L711.1 98.4 L715 96.8 L718.9 95.3 L722.9 93.7 L726.8 92.1 L730.8 90.5 L734.8 88.9 L738.8 87.3 L742.8 85.7 L746.8 84.1 L750.8 82.5" fill="none" stroke="#fff200" stroke-width="1.39" stroke-dasharray="1.39 2.29"/>
<path d="M750.8 82.5 L752.8 81.7 L754.8 80.9 L756.8 80.1 L758.9 79.3 L760.9 78.5 L762.9 77.7 L764.9 76.9 L766.9 76.1 L769 75.3 L771 74.5 L773 73.7 L775 72.9 L777.1 72.1 L779.1 71.3 L781.1 70.5 L783.2 69.7 L785.2 68.9 L787.2 68.1 L789.3 67.3 L791.3 66.5 L793.3 65.7 L795.4 64.9 L797.4 64.1 L799.5 63.3 L801.5 62.5 L803.5 61.7 L805.6 60.9 L807.6 60.2 L809.6 59.4 L811.7 58.6 L813.7 57.8 L815.7 57 L817.7 56.2 L819.8 55.4 L821.8 54.7 L823.8 53.9 L825.8 53.1 L827.8 52.3 L829.8 51.6 L831.8 50.8 L833.8 50 L835.8 49.3 L837.7 48.5 L839.7 47.8 L841.6 47 L843.6 46.3 L845.5 45.5 L847.4 44.8 L849.2 44.1 L851.1 43.3 M951 42.6 L948.4 41.9 L945.8 41.2 L943.3 40.6 L940.8 39.9 L938.4 39.3 L936.1 38.6 L933.8 38 L931.6 37.5 L929.5 36.9 L927.5 36.4 L925.6 36 L923.9 35.6 L922.3 35.3 L920.9 35 L919.7 34.8 L918.6 34.7 L917.8 34.7" fill="none" stroke="#fff200" stroke-width="1.5"/>
<path d="M917.8 34.7 L917.1 34.7 L916.6 34.9 L916.2 35.1 L915.9 35.4 L915.8 35.7 L915.7 36.2 L915.8 36.6 L915.8 37.1 L916 37.7 L916.1 38.3 L916.4 38.9 L916.6 39.5 L916.9 40.2 L917.1 40.8 L917.4 41.5 L917.7 42.2 L918 42.9 L918.4 43.6 L918.7 44.3 L919.1 45.1 L919.4 45.8 L919.8 46.5 L920.1 47.3 L920.5 48.1 L920.8 48.8 L921.2 49.6 L921.6 50.3 L922 51.1 L922.3 51.9 L922.7 52.6 L923.1 53.4 L923.5 54.2 L923.8 55 L924.2 55.8 L924.6 56.5 L925 57.3 L925.4 58.1 L925.8 58.9 L926.1 59.7 L926.5 60.5 L926.9 61.3 L927.3 62.1 L927.7 62.8 L928.1 63.6 L928.5 64.4 L928.8 65.2 L929.2 66 L929.6 66.8 L930 67.6 L930.4 68.4 L930.8 69.2 L931.2 70 L931.5 70.8 L931.9 71.6 L932.3 72.4 L932.7 73.2 L933.1 74 L933.5 74.8 L933.9 75.6 L934.2 76.4 L934.6 77.2 L935 78" fill="none" stroke="#fff200" stroke-width="0.9"/>
<path d="M581.3 156 L584.3 154.4 L587.3 152.8 L590.3 151.2 L593.4 149.6 L596.5 148 L599.6 146.5 L602.7 144.9 L605.8 143.3 L609 141.7 L612.2 140.1 L615.4 138.5 L618.6 136.9 L621.8 135.4 L625.1 133.8 L628.3 132.2 L631.6 130.6 L634.9 129 L638.2 127.5 L641.5 125.9 L644.9 124.3 L648.2 122.7 L651.6 121.2 L655 119.6 L658.4 118 L661.8 116.5 L665.2 114.9 L668.7 113.4 L672.1 111.8 L675.6 110.2 L679 108.7 L682.5 107.1 L686 105.6 L689.5 104.1 L693 102.5 L696.5 101 L700 99.4 L703.5 97.9 L707 96.4 L710.5 94.9 L714 93.4 L717.5 91.8 L721 90.3 L724.5 88.8 L728 87.4 L731.4 85.9 L734.9 84.4 L738.4 82.9 L741.8 81.5 L745.3 80 L748.7 78.6 L752 77.1 L755.4 75.7 L758.7 74.3 L762 72.9 L765.3 71.5 L768.5 70.2 M1032.2 68.8 L1027.2 67.5 L1022.3 66.2 L1017.4 65 L1012.7 63.7 L1008 62.5" fill="none" stroke="#fff200" stroke-width="1.39" stroke-dasharray="1.39 2.29"/>
<path d="M1008 62.5 L1005.8 61.9 L1003.6 61.4 L1001.5 60.9 L999.4 60.3 L997.3 59.8 L995.2 59.3 L993.2 58.8 L991.2 58.3 L989.3 57.9 L987.3 57.4 L985.5 57 L983.6 56.5 L981.8 56.1 L980.1 55.7 L978.4 55.4 L976.7 55" fill="none" stroke="#fff200" stroke-width="1.5"/>
<path d="M564 158.7 L566.9 157.1 L569.8 155.6 L572.8 154 L575.8 152.5 L578.8 151 L581.8 149.4 L584.8 147.9 L587.9 146.3 L590.9 144.8 L594 143.2 L597.1 141.7 L600.2 140.2 L603.4 138.6 L606.5 137.1 L609.7 135.6 L612.9 134 L616.1 132.5 L619.3 131 L622.5 129.4 L625.8 127.9 L629 126.4 L632.3 124.9 L635.6 123.4 L638.9 121.8 L642.2 120.3 L645.5 118.8 L648.8 117.3 L652.1 115.8 L655.5 114.3 L658.8 112.8 L662.1 111.3 L665.5 109.9 L668.9 108.4 L672.2 106.9 L675.6 105.4 L678.9 103.9 L682.3 102.5 L685.7 101 L689 99.6 L692.4 98.1 L695.7 96.7 L699.1 95.2 L702.4 93.8 L705.7 92.4 L709 91 L712.3 89.6 L715.6 88.2 L718.9 86.8 L722.1 85.4 M1078.1 84.1 L1073.2 82.7 L1068.3 81.4 L1063.5 80.1 L1058.7 78.8 L1054 77.5" fill="none" stroke="#fff200" stroke-width="1.39" stroke-dasharray="1.39 2.29"/>
<path d="M1054 77.5 L1051.7 76.9 L1049.5 76.3 L1047.3 75.7 L1045.1 75.2 L1042.9 74.6 L1040.7 74 L1038.5 73.5 L1036.4 72.9 L1034.3 72.4 L1032.2 71.9 L1030.1 71.3 L1028 70.8 L1026 70.3 L1024 69.8 L1022 69.3 L1020 68.8" fill="none" stroke="#fff200" stroke-width="1.5"/>
<path d="M567.3 163.3 L570.9 161.8 L574.6 160.3 L578.2 158.9 L581.9 157.4 L585.6 155.9 L589.3 154.5 L593 153 L596.7 151.6 L600.5 150.1 L604.2 148.7 L608 147.2 L611.7 145.8 L615.5 144.3 L619.3 142.9 L623.1 141.5 L626.9 140 L630.7 138.6 L634.5 137.2 L638.3 135.8 L642.1 134.4 L645.9 133 L649.8 131.6 L653.6 130.2 L657.4 128.8 L661.2 127.5 L665.1 126.1 L668.9 124.7 L672.7 123.4 L676.5 122 L680.3 120.7 L684.1 119.3 L687.9 118 L691.7 116.7 L695.5 115.4 L699.2 114.1 L703 112.8 L706.7 111.5 L710.5 110.3 L714.2 109 L717.8 107.8 L721.5 106.6 L725.2 105.4 L728.8 104.2 L732.4 103 L736 101.8 L739.5 100.6 L743.1 99.5 L746.5 98.4 L750 97.3 L753.4 96.2 L756.8 95.1 L760.2 94.1 L763.5 93.1 L766.7 92.1 L769.9 91.1 L773.1 90.2 L776.2 89.3 L779.3 88.4 L782.3 87.5 L785.3 86.7 L788.2 85.9 L791 85.1 L793.8 84.4 L796.5 83.7 L799.2 83.1 L801.8 82.4 L804.3 81.9 L806.8 81.3 L809.1 80.8 L811.4 80.4 L813.7 80 L815.8 79.6 L817.9 79.3 L819.9 79 L821.9 78.8 L823.7 78.6 L825.5 78.5 L827.3 78.4 L828.9 78.4 L830.5 78.4 L832 78.5 L833.5 78.6 L834.8 78.8 L836.2 79 L837.4 79.3 L838.6 79.6 L839.8 79.9 L840.9 80.4 L842 80.8 L843 81.3 L843.9 81.8 L844.9 82.4 L845.7 83 L846.6 83.7 L847.4 84.4 L848.2 85.1 L848.9 85.9 L849.7 86.7 L850.4 87.5 L851 88.4 L851.7 89.3 L852.3 90.2 L852.9 91.1 L853.5 92.1 L854.1 93.1 L854.7 94.1 L855.2 95.1 L855.8 96.2 L856.3 97.3 L856.8 98.4 L857.3 99.5 L857.8 100.6 L858.3 101.8 L858.8 103 L859.2 104.1 L859.7 105.3 L860.2 106.5 L860.6 107.8 L861.1 109 L861.5 110.3 L862 111.5 L862.4 112.8 L862.9 114.1 L863.3 115.4 L863.8 116.7 L864.2 118 L864.6 119.3 L865.1 120.7 L865.5 122 L865.9 123.3 L866.3 124.7 L866.8 126.1 L867.2 127.4 L867.6 128.8 L868.1 130.2 L868.5 131.6 L868.9 133 L869.4 134.4 L869.8 135.8 L870.2 137.2 L870.6 138.6 L871.1 140 L871.5 141.5 L871.9 142.9 L872.4 144.3 L872.8 145.8 L873.2 147.2 L873.7 148.6 L874.1 150.1 L874.6 151.5 L875 153" fill="none" stroke="#fff200" stroke-width="1.39" stroke-dasharray="1.39 2.29"/>
<path d="M875 153 L875.2 153.7 L875.4 154.4 L875.6 155.1 L875.8 155.9 L876 156.6 L876.3 157.3 L876.5 158 L876.7 158.7 L876.9 159.5 L877.1 160.2 L877.3 160.9 L877.5 161.6 L877.7 162.3 L877.9 163.1 L878.1 163.8 L878.4 164.5 L878.6 165.2 L878.8 166 L879 166.7" fill="none" stroke="#fff200" stroke-width="1.5"/>
<path d="M562.2 272.4 L562.6 270.8 L563 269.3 L563.4 267.7 L563.8 266.1 L564.3 264.5 L564.7 263 L565.3 261.4 L565.8 259.8 L566.3 258.3 L566.9 256.7 L567.5 255.1 L568.1 253.5 L568.8 252 L569.5 250.4 L570.2 248.8 L570.9 247.3 L571.6 245.7 L572.4 244.1 L573.2 242.6 L574 241 L574.8 239.4 L575.7 237.9 L576.5 236.3 L577.4 234.7 L578.4 233.2 L579.3 231.6 L580.3 230 L581.3 228.5 L582.3 226.9 L583.3 225.4 L584.4 223.8 L585.5 222.2 L586.6 220.7 L587.7 219.1 L588.8 217.6 L590 216 L591.2 214.4 L592.4 212.9 L593.6 211.3 L594.8 209.8 L596.1 208.2 L597.4 206.7 L598.7 205.1 L600 203.6 L601.4 202 L602.7 200.5 L604.1 198.9 L605.5 197.4 L606.9 195.8 L608.4 194.3 L609.8 192.7 L611.3 191.2 L612.8 189.6 L614.3 188.1 L615.9 186.6 L617.4 185 L619 183.5 L620.6 181.9 L622.2 180.4 L623.8 178.9 L625.5 177.3 L627.1 175.8 L628.8 174.3 L630.5 172.7 L632.2 171.2 L633.9 169.7 L635.6 168.2 L637.4 166.6 L639.1 165.1 L640.9 163.6 L642.7 162.1 L644.5 160.6 L646.3 159.1 L648.2 157.6 L650 156.1 L651.9 154.5 L653.8 153 L655.6 151.5 L657.5 150 L659.4 148.6 L661.4 147.1 L663.3 145.6 L665.2 144.1 L667.2 142.6 L669.1 141.1 L671.1 139.6 L673.1 138.2 L675 136.7 L677 135.2 L679 133.8 L681 132.3 L683 130.9 L685 129.4 L687 128 L689 126.5 L691.1 125.1 L693.1 123.7 L695.1 122.3 L697.1 120.9 L699.1 119.4 L701.2 118 L703.2 116.6 L705.2 115.3 L707.2 113.9 L709.2 112.5" fill="none" stroke="#ffb90d" stroke-width="1.39" stroke-dasharray="1.39 2.29"/>
<path d="M709.2 112.5 L710.2 111.8 L711.3 111.1 L712.3 110.4 L713.3 109.7 L714.4 109.1 L715.4 108.4 L716.4 107.7 L717.5 107 L718.5 106.3 L719.5 105.7 L720.5 105 L721.5 104.3 L722.5 103.7 L723.6 103 L724.6 102.3 L725.6 101.7 L726.6 101 L727.6 100.4 L728.5 99.7 L729.5 99.1 L730.5 98.4 L731.5 97.8 L732.4 97.2 L733.4 96.5 L734.4 95.9 L735.3 95.3 L736.3 94.7 L737.2 94 L738.1 93.4 L739 92.8 L740 92.2 L740.9 91.6 L741.8 91 L742.6 90.4 L743.5 89.8 L744.4 89.2 L745.3 88.7 L746.1 88.1 L746.9 87.5 L747.8 86.9 L748.6 86.4 L749.4 85.8 L750.2 85.3 L750.9 84.7 L751.7 84.2" fill="none" stroke="#ffb90d" stroke-width="1.5"/>
<path d="M583.5 262.5 L585.3 261.3 L587 260.1 L588.8 258.9 L590.6 257.7 L592.4 256.5 L594.2 255.4 L596 254.2 L597.8 253 L599.7 251.8 L601.5 250.6 L603.4 249.5 L605.3 248.3 L607.1 247.1 L609 246 L610.9 244.8 L612.8 243.7 L614.8 242.5 L616.7 241.3 L618.6 240.2 L620.6 239.1 L622.5 237.9 L624.5 236.8 L626.5 235.6 L628.4 234.5 L630.4 233.4 L632.4 232.3 L634.4 231.1 L636.4 230 L638.4 228.9 L640.4 227.8 L642.5 226.7 L644.5 225.6 L646.5 224.5 L648.6 223.4 L650.6 222.3 L652.7 221.2 L654.7 220.1 L656.8 219.1 L658.9 218 L660.9 216.9 L663 215.9 L665.1 214.8 L667.2 213.8 L669.2 212.7 L671.3 211.7 L673.4 210.7 L675.5 209.6 L677.6 208.6 L679.7 207.6 L681.8 206.6 L683.9 205.6 L686 204.6 L688.1 203.6 L690.2 202.6 L692.3 201.6 L694.4 200.6 L696.5 199.7 L698.6 198.7 L700.7 197.8 L702.8 196.8 L704.9 195.9 L707 195 L709.1 194 L711.2 193.1 L713.3 192.2 L715.4 191.3 L717.5 190.4 L719.5 189.5 L721.6 188.7 L723.7 187.8 L725.8 186.9 L727.9 186.1 L729.9 185.3 L732 184.4 L734.1 183.6 L736.1 182.8 L738.2 182 L740.2 181.2 L742.3 180.4 L744.3 179.6 L746.3 178.9 L748.4 178.1 L750.4 177.4 L752.4 176.7 L754.4 175.9 L756.4 175.2 L758.4 174.5 L760.4 173.9 L762.4 173.2 L764.3 172.5 L766.3 171.9 L768.3 171.2 L770.2 170.6 L772.2 170 L774.1 169.4 L776 168.8 L777.9 168.2 L779.9 167.7 L781.8 167.1 L783.7 166.6 L785.5 166.1 L787.4 165.6 L789.3 165.1 L791.2 164.6 L793 164.1 L794.9 163.7 L796.7 163.2 L798.5 162.8 L800.3 162.4 L802.2 162 L804 161.6 L805.8 161.3 L807.5 160.9 L809.3 160.6 L811.1 160.3 L812.8 160 L814.6 159.7 L816.3 159.4 L818.1 159.2 L819.8 158.9 L821.5 158.7 L823.2 158.5 L824.9 158.3 L826.6 158.2 L828.3 158" fill="none" stroke="#ffb90d" stroke-width="1.39" stroke-dasharray="1.39 2.29"/>
<path d="M828.3 158 L829.1 158 L829.9 157.9 L830.7 157.9 L831.5 157.9 L832.3 157.9 L833 157.9 L833.8 157.9 L834.6 157.9 L835.4 157.9 L836.2 157.9 L836.9 157.9 L837.7 157.9 L838.5 157.9 L839.3 157.9 L840 158 L840.8 158" fill="none" stroke="#ffb90d" stroke-width="1.5"/>
<path d="M592.8 266.3 L593.3 264.7 L593.8 263.1 L594.3 261.5 L594.9 259.9 L595.4 258.3 L596 256.7 L596.7 255.1 L597.3 253.5 L598 251.9 L598.6 250.3 L599.3 248.8 L600.1 247.2 L600.8 245.6 L601.6 244 L602.4 242.4 L603.2 240.8 L604 239.2 L604.9 237.6 L605.8 236 L606.7 234.4 L607.6 232.8 L608.5 231.2 L609.5 229.6 L610.5 228 L611.5 226.5 L612.5 224.9 L613.6 223.3 L614.6 221.7 L615.7 220.1 L616.8 218.5 L618 216.9 L619.1 215.3 L620.3 213.7 L621.5 212.2 L622.7 210.6 L623.9 209 L625.2 207.4 L626.4 205.8 L627.7 204.2 L629 202.7 L630.4 201.1 L631.7 199.5 L633.1 197.9 L634.5 196.3 L635.9 194.7 L637.3 193.2 L638.7 191.6 L640.2 190 L641.6 188.4 L643.1 186.8 L644.6 185.3 L646.2 183.7 L647.7 182.1 L649.3 180.5 L650.8 179 L652.4 177.4 L654.1 175.8 L655.7 174.3 L657.3 172.7 L659 171.1 L660.7 169.5 L662.3 168 L664.1 166.4 L665.8 164.8 L667.5 163.3 L669.3 161.7 L671 160.2 L672.8 158.6 L674.6 157 L676.4 155.5 L678.2 153.9 L680.1 152.4 L681.9 150.8 L683.8 149.3 L685.6 147.7 L687.5 146.2 L689.4 144.6 L691.3 143.1 L693.3 141.5 L695.2 140 L697.1 138.5 L699.1 136.9 L701 135.4 L703 133.9 L705 132.3 L707 130.8 L709 129.3 L711 127.8 L713 126.2 L715 124.7 L717 123.2 L719.1 121.7 L721.1 120.2 L723.1 118.7 L725.2 117.2 L727.2 115.7 L729.3 114.2 L731.4 112.8 L733.4 111.3 L735.5 109.8 L737.5 108.4 L739.6 106.9 L741.6 105.4 L743.7 104 L745.7 102.5 L747.8 101.1 L749.8 99.7 L751.8 98.3 L753.9 96.9 L755.9 95.5 L757.9 94.1 L759.9 92.7 L761.8 91.3 L763.8 90 L765.7 88.6 L767.6 87.3 L769.5 86 L771.4 84.7 L773.2 83.4 L775 82.1 L776.8 80.9 L778.5 79.7 L780.2 78.4 L781.8 77.3 L783.4 76.1 L784.9 75 L786.3 73.9 L787.7 72.8 L789 71.8 L790.3 70.7 L791.4 69.8 L792.4 68.9 L793.4 68 L794.2 67.1 L794.9 66.3 L795.4 65.6 L795.8 64.9 L796.1 64.3 L796.1 63.7 L796 63.2 L795.7 62.8 L795.3 62.4 L794.6 62.1 L793.6 61.9 M1009.3 61.7 L1007.4 61.7 L1005.8 61.7 L1004.4 61.7 L1003.2 61.9 L1002.2 62.1 L1001.5 62.4 L1000.9 62.8 L1000.5 63.2 L1000.3 63.7" fill="none" stroke="#ffb90d" stroke-width="1.39" stroke-dasharray="1.39 2.29"/>
<path d="M1000.3 63.7 L1000.3 64 L1000.4 64.3 L1000.5 64.6 L1000.6 65 L1000.8 65.3 L1001 65.7 L1001.3 66.1 L1001.5 66.5 L1001.9 66.9 L1002.2 67.3 L1002.6 67.7 L1002.9 68.2 L1003.4 68.6 L1003.8 69.1 L1004.3 69.6 L1004.8 70.1 L1005.3 70.5 L1005.8 71.1 L1006.3 71.6 L1006.9 72.1 L1007.5 72.6 L1008.1 73.1 L1008.7 73.7 L1009.4 74.2 L1010 74.8 L1010.7 75.4 L1011.4 75.9 L1012 76.5 L1012.8 77.1 L1013.5 77.7 L1014.2 78.3" fill="none" stroke="#ffb90d" stroke-width="1.5"/>
<path d="M585 266 L586.4 264.5 L587.9 263 L589.3 261.5 L590.8 260 L592.3 258.6 L593.8 257.1 L595.4 255.6 L596.9 254.1 L598.5 252.6 L600.1 251.1 L601.7 249.7 L603.3 248.2 L605 246.7 L606.7 245.2 L608.3 243.8 L610 242.3 L611.8 240.8 L613.5 239.3 L615.3 237.9 L617 236.4 L618.8 234.9 L620.6 233.4 L622.4 232 L624.3 230.5 L626.1 229 L628 227.6 L629.9 226.1 L631.8 224.7 L633.7 223.2 L635.6 221.8 L637.6 220.3 L639.5 218.8 L641.5 217.4 L643.5 215.9 L645.5 214.5 L647.5 213 L649.6 211.6 L651.6 210.2 L653.7 208.7 L655.7 207.3 L657.8 205.8 L659.9 204.4 L662 203 L664.1 201.6 L666.3 200.1 L668.4 198.7 L670.6 197.3 L672.7 195.9 L674.9 194.4 L677.1 193 L679.3 191.6 L681.5 190.2 L683.7 188.8 L685.9 187.4 L688.1 186 L690.4 184.6 L692.6 183.2 L694.9 181.8 L697.1 180.5 L699.4 179.1 L701.7 177.7" fill="none" stroke="#ffb90d" stroke-width="1.39" stroke-dasharray="1.39 2.29"/>
<path d="M701.7 177.7 L702.9 177.1 L704 176.5 L705.2 176 L706.3 175.4 L707.5 174.8 L708.7 174.3 L709.8 173.7 L711 173.1 L712.1 172.6 L713.3 172" fill="none" stroke="#ffb90d" stroke-width="1.5"/>
<path d="M730.3 238.2 L729.7 237 L729.2 235.8 L728.6 234.6 L728 233.4 L727.5 232.2 L726.9 231.1 L726.4 229.9 L725.9 228.7 L725.3 227.5 L724.8 226.4 L724.3 225.2 L723.8 224 L723.3 222.9 L722.8 221.7 L722.3 220.6 L721.8 219.4 L721.3 218.3 L720.8 217.2 L720.3 216 L719.8 214.9 L719.3 213.8 L718.9 212.7 L718.4 211.6 L717.9 210.4 L717.5 209.3 L717 208.2 L716.5 207.2 L716.1 206.1 L715.6 205 L715.2 203.9 L714.7 202.8 L714.3 201.8 L713.8 200.7 L713.4 199.7 L713 198.6 L712.5 197.6 L712.1 196.6 L711.6 195.5 L711.2 194.5 L710.8 193.5 L710.3 192.5 L709.9 191.5 L709.4 190.5 L709 189.5 L708.5 188.6 L708.1 187.6 L707.6 186.6 L707.2 185.7 L706.7 184.7 L706.3 183.8 L705.8 182.9 L705.4 182 L704.9 181 L704.4 180.1 L704 179.3 L703.5 178.4 L703 177.5 L702.5 176.6 L702 175.8 L701.5 174.9 L701 174.1 L700.5 173.3 L700 172.5 L699.4 171.7 L698.9 170.9 L698.3 170.1 L697.8 169.3 L697.2 168.6 L696.6 167.9 L696 167.1 L695.4 166.4 L694.8 165.7 L694.2 165" fill="none" stroke="#9fff23" stroke-width="1.39" stroke-dasharray="1.39 2.29"/>
<path d="M694.2 165 L693.9 164.7 L693.6 164.3 L693.3 164 L693 163.6 L692.7 163.3 L692.3 163 L692 162.6 L691.7 162.3 L691.4 162 L691 161.7 L690.7 161.3 L690.4 161 L690 160.7 L689.7 160.4 L689.3 160.1 L689 159.8 L688.6 159.5 L688.2 159.2 L687.9 158.9 L687.5 158.6 L687.1 158.4 L686.7 158.1 L686.3 157.8 L686 157.5 L685.6 157.3 L685.2 157 L684.8 156.8 L684.3 156.5 L683.9 156.2 L683.5 156 L683.1 155.8 L682.7 155.5 L682.2 155.3 L681.8 155 L681.3 154.8 L680.9 154.6 L680.4 154.4 L680 154.2 L679.5 153.9 L679 153.7 L678.5 153.5 L678.1 153.3 L677.6 153.1 L677.1 152.9 L676.6 152.8 L676.1 152.6 L675.6 152.4 L675 152.2 L674.5 152 L674 151.9 L673.4 151.7 L672.9 151.6 L672.3 151.4 L671.8 151.3 L671.2 151.1 L670.6 151 L670.1 150.8 L669.5 150.7 L668.9 150.6 L668.3 150.4 L667.7 150.3 L667 150.2 L666.4 150.1 L665.8 150" fill="none" stroke="#9fff23" stroke-width="1.5"/>
<path d="M746.3 244.8 L747.3 243.2 L748.2 241.7 L749.2 240.1 L750.2 238.5 L751.2 237 L752.2 235.4 L753.2 233.9 L754.3 232.3 L755.3 230.7 L756.4 229.2 L757.4 227.6 L758.5 226.1 L759.6 224.5 L760.7 223 L761.8 221.4 L762.9 219.8 L764 218.3 L765.2 216.7 L766.3 215.2 L767.5 213.6 L768.6 212.1 L769.8 210.5 L771 209 L772.1 207.4 L773.3 205.9 L774.5 204.3 L775.8 202.8 L777 201.2 L778.2 199.7 L779.4 198.1 L780.7 196.6 L781.9 195 L783.2 193.5 L784.5 191.9 L785.7 190.4 L787 188.9 L788.3 187.3 L789.6 185.8 L790.9 184.3 L792.2 182.7 L793.5 181.2 L794.8 179.6 L796.2 178.1 L797.5 176.6 L798.9 175.1 L800.2 173.5 L801.6 172 L802.9 170.5 L804.3 168.9 L805.7 167.4 L807 165.9 L808.4 164.4 L809.8 162.9 L811.2 161.4 L812.6 159.8 L814 158.3 L815.4 156.8 L816.8 155.3 L818.2 153.8 L819.7 152.3 L821.1 150.8 L822.5 149.3 L823.9 147.8 L825.4 146.3 L826.8 144.8 L828.3 143.3 L829.7 141.9 L831.2 140.4 L832.6 138.9 L834.1 137.4 L835.5 135.9 L837 134.5 L838.4 133 L839.9 131.6 L841.4 130.1 L842.8 128.6 L844.3 127.2 L845.8 125.8 L847.2 124.3 L848.7 122.9 L850.2 121.5 L851.6 120 L853.1 118.6 L854.6 117.2 L856 115.8 L857.5 114.4 L859 113 L860.4 111.6 L861.9 110.3 L863.4 108.9 L864.8 107.5 L866.3 106.2 L867.7 104.8 L869.2 103.5 L870.7 102.2 L872.1 100.9 L873.6 99.6 L875 98.3" fill="none" stroke="#9fff23" stroke-width="1.39" stroke-dasharray="1.39 2.29"/>
<path d="M875 98.3 L875.7 97.7 L876.4 97.1 L877.1 96.5 L877.7 96 L878.4 95.4 L879.1 94.8 L879.8 94.2 L880.5 93.7 L881.1 93.1 L881.8 92.6 L882.5 92" fill="none" stroke="#9fff23" stroke-width="1.5"/>
<path d="M709 233.8 L710.2 232.2 L711.5 230.7 L712.7 229.1 L714 227.5 L715.2 225.9 L716.5 224.4 L717.8 222.8 L719.1 221.2 L720.5 219.7 L721.8 218.1 L723.1 216.5 L724.5 215 L725.9 213.4 L727.3 211.8 L728.7 210.3 L730.1 208.7 L731.5 207.1 L732.9 205.6 L734.4 204 L735.8 202.4 L737.3 200.9 L738.8 199.3 L740.3 197.8 L741.8 196.2 L743.3 194.7 L744.8 193.1 L746.3 191.5 L747.9 190 L749.4 188.4 L751 186.9 L752.6 185.3 L754.1 183.8 L755.7 182.2 L757.3 180.7 L758.9 179.1 L760.5 177.6 L762.2 176 L763.8 174.5 L765.4 173 L767.1 171.4 L768.8 169.9 L770.4 168.3 L772.1 166.8 L773.8 165.3 L775.5 163.7 L777.2 162.2 L778.9 160.7 L780.6 159.2 L782.3 157.6 L784 156.1 L785.7 154.6 L787.5 153.1 L789.2 151.5 L791 150 L792.7 148.5 L794.5 147 L796.2 145.5 L798 144 L799.8 142.5 L801.6 141 L803.3 139.5 L805.1 138 L806.9 136.5 L808.7 135 L810.5 133.6 L812.3 132.1 L814.1 130.6 L815.9 129.1 L817.7 127.7 L819.5 126.2 L821.3 124.7 L823.1 123.3 L824.9 121.8 L826.8 120.4 L828.6 119 L830.4 117.5 L832.2 116.1 L834 114.7 L835.8 113.3 L837.6 111.9 L839.4 110.5 L841.2 109.1 L843 107.7 L844.8 106.3 L846.6 105 L848.4 103.6 L850.2 102.3 L852 100.9 L853.8 99.6 L855.6 98.3 L857.3 97 L859.1 95.7 L860.9 94.5 L862.6 93.2 L864.4 92 L866.1 90.7 L867.8 89.5 L869.5 88.3 L871.3 87.2 L873 86 L874.7 84.9 L876.3 83.8 L878 82.7 L879.7 81.7 L881.3 80.7 L883 79.7 L884.6 78.7 L886.2 77.8 L887.8 76.9 L889.4 76 L891 75.2 L892.6 74.4 L894.2 73.7 L895.8 73 L897.3 72.3 L898.9 71.7 L900.4 71.2 L902 70.7" fill="none" stroke="#9fff23" stroke-width="1.39" stroke-dasharray="1.39 2.29"/>
<path d="M902 70.7 L902.7 70.5 L903.5 70.3 L904.2 70.1 L905 69.9 L905.7 69.7 L906.5 69.6 L907.2 69.4 L908 69.3 L908.7 69.2 L909.5 69.1 L910.2 69 L911 68.9 L911.8 68.9 L912.5 68.8 L913.3 68.8 L914.1 68.8 L914.8 68.8 L915.6 68.8 L916.4 68.8 L917.2 68.9 L918 68.9 L918.8 69" fill="none" stroke="#9fff23" stroke-width="1.5"/>
<path d="M446 202.4 L449 200.8 L452.1 199.3 L455.2 197.7 L458.3 196.1 L461.4 194.5 L464.6 193 L467.8 191.4 L471.1 189.8 L474.4 188.2 L477.7 186.7 L481 185.1 L484.4 183.5 L487.8 182 L491.2 180.4 L494.6 178.8 L498.1 177.2 L501.6 175.7 L505.2 174.1 L508.7 172.5 L512.3 171 L515.9 169.4 L519.6 167.8 L523.2 166.3 L526.9 164.7 L530.6 163.1 L534.4 161.6 L538.2 160 L542 158.4 L545.8 156.9 L549.6 155.3 L553.5 153.7 L557.4 152.2 L561.3 150.6" fill="none" stroke="#52d500" stroke-width="1.39" stroke-dasharray="1.39 2.29"/>
<path d="M561.3 150.6 L563.1 149.9 L564.9 149.2 L566.7 148.5 L568.5 147.7 L570.3 147 L572.2 146.3 L574 145.6" fill="none" stroke="#52d500" stroke-width="1.5"/>
<path d="M742.5 323.2 L742.4 321.6 L742.3 320 L742.2 318.3 L742.1 316.7 L742 315.1 L741.9 313.5 L741.9 311.8 L741.8 310.2 L741.8 308.6 L741.8 307 L741.8 305.4 L741.8 303.7 L741.8 302.1 L741.8 300.5 L741.9 298.9 L741.9 297.2 L742 295.6 L742.1 294 L742.2 292.4 L742.3 290.8 L742.4 289.1 L742.5 287.5 L742.6 285.9 L742.8 284.3 L743 282.6 L743.1 281 L743.3 279.4 L743.5 277.8 L743.7 276.2 L744 274.5 L744.2 272.9 L744.4 271.3 L744.7 269.7 L745 268 L745.3 266.4 L745.6 264.8 L745.9 263.2 L746.2 261.6 L746.5 259.9 L746.8 258.3 L747.2 256.7 L747.6 255.1 L747.9 253.4 L748.3 251.8 L748.7 250.2 L749.1 248.6 L749.6 247 L750 245.3 L750.4 243.7 L750.9 242.1 L751.4 240.5 L751.9 238.8 L752.3 237.2 L752.8 235.6 L753.4 234 L753.9 232.4 L754.4 230.7 L755 229.1 L755.5 227.5 L756.1 225.9 L756.7 224.3 L757.3 222.6 L757.9 221 L758.5 219.4 L759.1 217.8 L759.7 216.2 L760.4 214.5 L761 212.9 L761.7 211.3 L762.4 209.7 L763.1 208 L763.8 206.4 L764.5 204.8 L765.2 203.2 L765.9 201.6 L766.7 199.9 L767.4 198.3 L768.2 196.7 L769 195.1 L769.7 193.5 L770.5 191.8 L771.3 190.2 L772.1 188.6 L773 187 L773.8 185.4 L774.6 183.7 L775.5 182.1 L776.3 180.5 L777.2 178.9 L778.1 177.3 L778.9 175.7 L779.8 174 L780.7 172.4 L781.7 170.8 L782.6 169.2 L783.5 167.6 L784.5 165.9 L785.4 164.3 L786.4 162.7 L787.3 161.1 L788.3 159.5 L789.3 157.9 L790.3 156.2 L791.3 154.6 L792.3 153 L793.3 151.4 L794.3 149.8 L795.3 148.2 L796.4 146.5 L797.4 144.9 L798.5 143.3 L799.5 141.7 L800.6 140.1 L801.7 138.5 L802.8 136.8 L803.9 135.2 L805 133.6 L806.1 132 L807.2 130.4 L808.3 128.8 L809.4 127.2 L810.5 125.6 L811.7 123.9 L812.8 122.3 L814 120.7 L815.1 119.1 L816.3 117.5 L817.5 115.9 L818.6 114.3 L819.8 112.7 L821 111.1 L822.2 109.5 L823.4 107.9 L824.6 106.3 L825.8 104.7 L827 103.1 L828.2 101.5 L829.4 99.9 L830.7 98.3 L831.9 96.7 L833.1 95.1 L834.4 93.5 L835.6 91.9 L836.8 90.3 L838.1 88.7 L839.3 87.1 L840.6 85.5 L841.8 83.9 L843.1 82.3 L844.4 80.8 L845.6 79.2 L846.9 77.6 L848.1 76 L849.4 74.5 L850.7 72.9 L851.9 71.3 L853.2 69.8 L854.4 68.2 L855.7 66.7 L856.9 65.2 L858.2 63.6 L859.4 62.1 L860.6 60.6 L861.8 59.1 L863 57.6 L864.2 56.1 L865.4 54.7 L866.5 53.3 L867.6 51.8 L868.7 50.5 L869.7 49.1 L870.7 47.8 L871.6 46.5 L872.4 45.3 L873.1 44.2 L873.7 43.1 L874.1 42.2 L874.2 41.3 L874.1 40.7 L873.7 40.1 L872.9 39.8 L871.6 39.7 L869.8 39.7 L867.5 40 L864.6 40.5 L861.4 41.1 L857.6 41.9 L853.5 42.8 M954.7 43.8 L956.9 44.9 L959.4 46.1 L962 47.4 L964.8 48.7 L967.7 50 L970.7 51.4 L973.8 52.8 L976.9 54.2 L980.1 55.7 L983.4 57.1 L986.7 58.6 L990 60.1 L993.3 61.6 L996.7 63.1 L1000 64.7 L1003.4 66.2 L1006.8 67.7 L1010.2 69.3 L1013.6 70.8 L1017 72.4 L1020.5 73.9 L1023.9 75.5 L1027.3 77.1 L1030.7 78.7 L1034.1 80.2 L1037.6 81.8 L1041 83.4 L1044.4 85 L1047.8 86.6 L1051.2 88.2 L1054.6 89.7 L1058 91.3 L1061.3 92.9 L1064.7 94.5 L1068.1 96.1 L1071.4 97.7 L1074.7 99.3 L1078.1 100.9 L1081.4 102.5 L1084.7 104.1 L1088 105.7 L1091.3 107.3 L1094.6 108.9 L1097.8 110.5 L1101.1 112.2 L1104.3 113.8 L1107.5 115.4 L1110.7 117 L1113.9 118.6 L1117.1 120.2 L1120.3 121.8 L1123.4 123.4 L1126.5 125 L1129.7 126.6 L1132.8 128.2 L1135.8 129.9 L1138.9 131.5 L1142 133.1 L1145 134.7" fill="none" stroke="#ec84ee" stroke-width="1.39" stroke-dasharray="1.39 2.29"/>
<path d="M1145 134.7 L1146.4 135.4 L1147.8 136.1 L1149.2 136.7 L1150.5 137.4 L1151.9 138.1 L1153.3 138.8" fill="none" stroke="#ec84ee" stroke-width="1.5"/>
<g fill="#ff6e46"><circle cx="997.8" cy="121.4" r="1.15"/><circle cx="1085.6" cy="128.3" r="1.15"/><circle cx="1106.4" cy="171.7" r="1.15"/><circle cx="1063.3" cy="167" r="1.15"/><circle cx="795" cy="106.7" r="1.15"/><circle cx="935" cy="78" r="1.15"/><circle cx="976.7" cy="55" r="1.15"/><circle cx="1020" cy="68.8" r="1.15"/><circle cx="879" cy="166.7" r="1.15"/><circle cx="751.7" cy="84.2" r="1.15"/><circle cx="840.8" cy="158" r="1.15"/><circle cx="1014.2" cy="78.3" r="1.15"/><circle cx="713.3" cy="172" r="1.15"/><circle cx="665.8" cy="150" r="1.15"/><circle cx="882.5" cy="92" r="1.15"/><circle cx="918.8" cy="69" r="1.15"/><circle cx="574" cy="145.6" r="1.15"/><circle cx="1153.3" cy="138.8" r="1.15"/></g>
<path d="M605.7 267.7 L605 268.9 L604.3 270.2 L603.6 271.4 L602.8 272.6 L601.9 273.8 L601.1 275 L600.1 276.2 L599.2 277.4 L598.2 278.5 L597.2 279.6 L596.1 280.6 L595 281.6 L593.9 282.6 L592.7 283.6 L591.5 284.4 L590.3 285.3 L589.1 286.1 L587.9 286.8 L586.6 287.5 L585.4 288.2 L584.1 288.8 L582.8 289.3 L581.5 289.8 L580.2 290.2 L578.9 290.5 L577.6 290.8 L576.3 291 L575 291.2 L573.7 291.3 L572.4 291.3 L571.2 291.3 L570 291.2 L568.8 291 L567.6 290.8 L566.4 290.5 L565.3 290.2 L564.3 289.8 L563.2 289.3 L562.3 288.8 L561.3 288.2 L560.5 287.5 L559.6 286.8 L558.9 286.1 L558.2 285.3 L557.5 284.4 L557 283.6 L556.5 282.6 L556.1 281.6 L555.7 280.6 L555.5 279.6 L555.3 278.5 L555.2 277.4 L555.2 276.2 L555.3 275 L555.4 273.8 L555.7 272.6 L556 271.4 L556.4 270.2 L556.9 268.9 L557.5 267.7 L558.2 266.4 L558.9 265.1 L559.7 263.9 L560.6 262.6 L561.6 261.4 L562.6 260.2 L563.7 259 L564.9 257.8 L566.1 256.6 L567.4 255.5 L568.8 254.4 L570.1 253.4 L571.6 252.3 L573 251.4 L574.5 250.4 L576 249.5 L577.5 248.7 L579 247.9 L580.6 247.1 L582.1 246.5 L583.7 245.8 L585.2 245.3 L586.7 244.8 L588.2 244.3 L589.7 243.9 L591.1 243.6 L592.5 243.4 L593.9 243.2 L595.2 243.1 L596.5 243.1 L597.7 243.1 L598.9 243.2 L600 243.4 L601.1 243.6 L602.1 243.9 L603 244.3 L603.9 244.8 L604.7 245.3 L605.5 245.8 L606.2 246.5 L606.8 247.1 L607.3 247.9 L607.8 248.7 L608.2 249.5 L608.5 250.4 L608.8 251.4 L608.9 252.3 L609.1 253.4 L609.1 254.4 L609.1 255.5 L609 256.6 L608.9 257.8 L608.7 259 L608.4 260.2 L608.1 261.4 L607.7 262.6 L607.3 263.9 L606.8 265.1 L606.3 266.4 L605.7 267.7" fill="none" stroke="#ffb90d" stroke-width="2.08"/>
<path d="M750.9 240.2 L750.3 241.5 L749.7 242.7 L749 244 L748.3 245.2 L747.5 246.4 L746.7 247.6 L745.8 248.7 L744.9 249.9 L743.9 251 L742.9 252.1 L741.9 253.1 L740.8 254.1 L739.7 255.1 L738.5 256 L737.4 256.9 L736.2 257.7 L734.9 258.5 L733.7 259.2 L732.4 259.9 L731.1 260.5 L729.9 261.1 L728.6 261.6 L727.2 262.1 L725.9 262.5 L724.6 262.8 L723.3 263.1 L722 263.3 L720.7 263.5 L719.4 263.6 L718.2 263.6 L716.9 263.6 L715.7 263.5 L714.5 263.3 L713.3 263.1 L712.2 262.8 L711.1 262.5 L710 262.1 L709 261.6 L708 261.1 L707.1 260.5 L706.3 259.9 L705.4 259.2 L704.7 258.5 L704 257.7 L703.4 256.9 L702.8 256 L702.3 255.1 L701.9 254.1 L701.5 253.1 L701.2 252.1 L701 251 L700.9 249.9 L700.8 248.7 L700.9 247.6 L701 246.4 L701.2 245.2 L701.4 244 L701.8 242.7 L702.2 241.5 L702.7 240.2 L703.3 239 L703.9 237.7 L704.7 236.4 L705.4 235.2 L706.3 234 L707.2 232.7 L708.2 231.5 L709.3 230.3 L710.4 229.2 L711.5 228 L712.7 226.9 L714 225.8 L715.3 224.8 L716.6 223.8 L718 222.9 L719.4 221.9 L720.8 221.1 L722.2 220.3 L723.6 219.5 L725.1 218.8 L726.5 218.2 L728 217.6 L729.4 217.1 L730.8 216.7 L732.3 216.3 L733.6 216 L735 215.7 L736.4 215.5 L737.7 215.4 L739 215.4 L740.2 215.4 L741.4 215.5 L742.5 215.7 L743.6 216 L744.7 216.3 L745.7 216.7 L746.6 217.1 L747.5 217.6 L748.3 218.2 L749.1 218.8 L749.8 219.5 L750.5 220.3 L751 221.1 L751.5 221.9 L752 222.9 L752.4 223.8 L752.7 224.8 L752.9 225.8 L753.1 226.9 L753.2 228 L753.3 229.2 L753.3 230.3 L753.2 231.5 L753 232.7 L752.8 234 L752.6 235.2 L752.2 236.4 L751.8 237.7 L751.4 239 L750.9 240.2" fill="none" stroke="#9fff23" stroke-width="2.08"/>
<path d="M776.5 272.8 L776.2 274.1 L775.9 275.3 L775.4 276.6 L775 277.8 L774.5 279 L773.9 280.2 L773.3 281.4 L772.6 282.5 L771.9 283.6 L771.1 284.7 L770.3 285.8 L769.4 286.8 L768.5 287.8 L767.5 288.7 L766.5 289.6 L765.5 290.5 L764.4 291.3 L763.3 292 L762.2 292.7 L761.1 293.4 L759.9 294 L758.7 294.5 L757.5 295 L756.2 295.4 L755 295.7 L753.8 296 L752.5 296.2 L751.2 296.4 L750 296.5 L748.7 296.5 L747.5 296.5 L746.2 296.4 L745 296.2 L743.8 296 L742.6 295.7 L741.4 295.4 L740.3 295 L739.2 294.5 L738.1 294 L737 293.4 L736 292.7 L735.1 292 L734.2 291.3 L733.3 290.5 L732.5 289.6 L731.8 288.7 L731.1 287.8 L730.5 286.8 L729.9 285.8 L729.4 284.7 L729 283.6 L728.6 282.5 L728.3 281.4 L728.1 280.2 L728 279 L727.9 277.8 L727.9 276.6 L728 275.3 L728.1 274.1 L728.3 272.8 L728.6 271.5 L729 270.3 L729.4 269 L730 267.8 L730.5 266.6 L731.2 265.3 L731.9 264.1 L732.7 263 L733.5 261.8 L734.4 260.7 L735.4 259.6 L736.4 258.5 L737.4 257.5 L738.5 256.5 L739.6 255.6 L740.8 254.7 L742 253.9 L743.2 253.1 L744.5 252.3 L745.8 251.6 L747 251 L748.4 250.5 L749.7 250 L751 249.5 L752.3 249.1 L753.6 248.8 L754.9 248.6 L756.2 248.4 L757.5 248.3 L758.8 248.3 L760 248.3 L761.3 248.4 L762.4 248.6 L763.6 248.8 L764.7 249.1 L765.8 249.5 L766.9 250 L767.9 250.5 L768.9 251 L769.8 251.6 L770.7 252.3 L771.5 253.1 L772.2 253.9 L773 254.7 L773.6 255.6 L774.2 256.5 L774.8 257.5 L775.3 258.5 L775.7 259.6 L776.1 260.7 L776.4 261.8 L776.7 263 L776.9 264.1 L777 265.3 L777.1 266.6 L777.1 267.8 L777 269 L776.9 270.3 L776.7 271.5 L776.5 272.8" fill="none" stroke="#ff1c00" stroke-width="2.08"/>
<path d="M784.3 321.5 L784.3 322.7 L784.2 324 L784 325.3 L783.8 326.5 L783.6 327.7 L783.2 328.9 L782.9 330.1 L782.4 331.3 L781.9 332.4 L781.4 333.5 L780.8 334.6 L780.1 335.6 L779.4 336.6 L778.7 337.6 L777.9 338.5 L777 339.4 L776.1 340.2 L775.2 341 L774.2 341.7 L773.2 342.4 L772.2 343 L771.1 343.5 L770 344 L768.8 344.4 L767.6 344.8 L766.4 345.1 L765.2 345.3 L764 345.5 L762.8 345.6 L761.5 345.6 L760.2 345.6 L759 345.5 L757.7 345.3 L756.5 345.1 L755.2 344.8 L754 344.4 L752.7 344 L751.5 343.5 L750.3 343 L749.2 342.4 L748 341.7 L746.9 341 L745.9 340.2 L744.9 339.4 L743.9 338.5 L742.9 337.6 L742.1 336.6 L741.2 335.6 L740.4 334.6 L739.7 333.5 L739.1 332.4 L738.5 331.3 L737.9 330.1 L737.5 328.9 L737.1 327.7 L736.7 326.5 L736.5 325.3 L736.3 324 L736.2 322.7 L736.1 321.5 L736.2 320.2 L736.3 319 L736.4 317.7 L736.7 316.5 L737 315.3 L737.4 314.1 L737.8 312.9 L738.4 311.7 L738.9 310.6 L739.6 309.5 L740.3 308.4 L741.1 307.3 L741.9 306.3 L742.8 305.4 L743.7 304.5 L744.7 303.6 L745.7 302.8 L746.7 302 L747.8 301.3 L749 300.6 L750.1 300 L751.3 299.5 L752.5 299 L753.7 298.6 L755 298.2 L756.2 297.9 L757.5 297.7 L758.7 297.5 L760 297.4 L761.3 297.4 L762.5 297.4 L763.8 297.5 L765 297.7 L766.2 297.9 L767.4 298.2 L768.6 298.6 L769.7 299 L770.8 299.5 L771.9 300 L773 300.6 L774 301.3 L775 302 L775.9 302.8 L776.8 303.6 L777.7 304.5 L778.5 305.4 L779.3 306.3 L780 307.3 L780.7 308.4 L781.3 309.5 L781.8 310.6 L782.3 311.7 L782.8 312.9 L783.2 314.1 L783.5 315.3 L783.8 316.5 L784 317.7 L784.1 319 L784.2 320.2 L784.3 321.5" fill="none" stroke="#ec84ee" stroke-width="2.08"/>
<path d="M476.3 206.4 L474.1 207.6 L472 208.9 L469.8 210.1 L467.6 211.3 L465.4 212.5 L463.1 213.7 L460.9 214.8 L458.6 216 L456.4 217.1 L454.2 218.1 L451.9 219.1 L449.7 220.1 L447.6 221.1 L445.4 222 L443.3 222.8 L441.1 223.7 L439.1 224.4 L437 225.1 L435.1 225.8 L433.1 226.4 L431.2 227 L429.4 227.5 L427.6 227.9 L425.9 228.3 L424.2 228.7 L422.6 228.9 L421.1 229.1 L419.6 229.3 L418.2 229.4 L416.9 229.4 L415.7 229.4 L414.6 229.3 L413.5 229.1 L412.6 228.9 L411.8 228.7 L411 228.3 L410.4 227.9 L409.8 227.5 L409.4 227 L409.1 226.4 L408.9 225.8 L408.8 225.1 L408.8 224.4 L409 223.7 L409.2 222.8 L409.6 222 L410.2 221.1 L410.8 220.1 L411.6 219.1 L412.5 218.1 L413.5 217.1 L414.6 216 L415.9 214.8 L417.3 213.7 L418.8 212.5 L420.4 211.3 L422.2 210.1 L424 208.9 L426 207.6 L428 206.4 L430.2 205.1 L432.4 203.9 L434.8 202.6 L437.2 201.4 L439.7 200.1 L442.2 198.9 L444.8 197.7 L447.5 196.5 L450.2 195.3 L452.9 194.1 L455.6 193 L458.4 191.9 L461.1 190.9 L463.9 189.8 L466.6 188.9 L469.3 187.9 L471.9 187.1 L474.5 186.2 L477.1 185.5 L479.5 184.7 L481.9 184.1 L484.2 183.5 L486.4 183 L488.5 182.5 L490.5 182.1 L492.4 181.8 L494.1 181.5 L495.7 181.3 L497.2 181.2 L498.5 181.2 L499.7 181.2 L500.8 181.3 L501.6 181.5 L502.4 181.8 L502.9 182.1 L503.4 182.5 L503.6 183 L503.8 183.5 L503.7 184.1 L503.6 184.7 L503.2 185.5 L502.8 186.2 L502.2 187.1 L501.5 187.9 L500.6 188.9 L499.6 189.8 L498.5 190.9 L497.3 191.9 L496 193 L494.6 194.1 L493.1 195.3 L491.5 196.5 L489.8 197.7 L488.1 198.9 L486.2 200.1 L484.3 201.4 L482.4 202.6 L480.4 203.9 L478.3 205.1 L476.3 206.4" fill="none" stroke="#52d500" stroke-width="2.08"/>
<path d="M586.4 161.4 L583.8 162.6 L581.2 163.9 L578.5 165.1 L575.9 166.3 L573.2 167.4 L570.5 168.6 L567.9 169.7 L565.2 170.8 L562.6 171.9 L559.9 172.9 L557.3 173.9 L554.8 174.8 L552.2 175.7 L549.7 176.6 L547.3 177.4 L544.9 178.2 L542.5 179 L540.2 179.6 L538 180.3 L535.8 180.9 L533.7 181.4 L531.7 181.9 L529.7 182.3 L527.8 182.7 L526 183 L524.3 183.2 L522.7 183.4 L521.2 183.6 L519.8 183.7 L518.5 183.7 L517.3 183.7 L516.2 183.6 L515.2 183.4 L514.4 183.2 L513.6 183 L513 182.7 L512.5 182.3 L512.1 181.9 L511.9 181.4 L511.8 180.9 L511.8 180.3 L511.9 179.6 L512.2 179 L512.7 178.2 L513.2 177.4 L513.9 176.6 L514.8 175.7 L515.8 174.8 L516.9 173.9 L518.2 172.9 L519.6 171.9 L521.1 170.8 L522.8 169.7 L524.6 168.6 L526.6 167.4 L528.6 166.3 L530.8 165.1 L533.1 163.9 L535.6 162.6 L538.1 161.4 L540.7 160.1 L543.4 158.9 L546.3 157.6 L549.2 156.4 L552.1 155.1 L555.2 153.9 L558.2 152.6 L561.4 151.4 L564.5 150.2 L567.7 149 L570.9 147.9 L574.1 146.8 L577.3 145.7 L580.5 144.6 L583.6 143.6 L586.7 142.6 L589.8 141.7 L592.8 140.8 L595.6 140 L598.4 139.3 L601.1 138.6 L603.7 137.9 L606.2 137.4 L608.5 136.9 L610.7 136.5 L612.7 136.1 L614.5 135.8 L616.2 135.6 L617.8 135.5 L619.1 135.5 L620.3 135.5 L621.2 135.6 L622 135.8 L622.7 136.1 L623.1 136.5 L623.3 136.9 L623.4 137.4 L623.3 137.9 L623 138.6 L622.5 139.3 L621.9 140 L621.1 140.8 L620.1 141.7 L619 142.6 L617.7 143.6 L616.3 144.6 L614.8 145.7 L613.2 146.8 L611.4 147.9 L609.5 149 L607.6 150.2 L605.5 151.4 L603.4 152.6 L601.1 153.9 L598.8 155.1 L596.4 156.4 L594 157.6 L591.5 158.9 L589 160.1 L586.4 161.4" fill="none" stroke="#fff200" stroke-width="2.08"/>
<path d="M736.2 265.4h6M739.2 262.4v6 M747 272h6M750 269v6 M750 271.5h6M753 268.5v6 M755.7 279.5h6M758.7 276.5v6 M759 272h6M762 269v6 M578.3 156h6M581.3 153v6 M578.3 156h6M581.3 153v6 M561 158.7h6M564 155.7v6 M564.3 163.3h6M567.3 160.3v6 M559.2 272.4h6M562.2 269.4v6 M580.5 262.5h6M583.5 259.5v6 M589.8 266.3h6M592.8 263.3v6 M582 266h6M585 263v6 M727.3 238.2h6M730.3 235.2v6 M743.3 244.8h6M746.3 241.8v6 M706 233.8h6M709 230.8v6 M443 202.4h6M446 199.4v6 M739.5 323.2h6M742.5 320.2v6" fill="none" stroke="#ff0000" stroke-width="1.1"/>
<text class="sl" x="581.8" y="271">ORI</text>
<text class="sl" x="727.1" y="243.3">CTA</text>
<text class="sl" x="752.5" y="276.2">STA</text>
<text class="sl" x="760.2" y="325.3">OER</text>
<text class="sl" x="454" y="209.1">LMI</text>
<text class="sl" x="566" y="163.4">LUM</text>
<text class="gl" x="1488.1" y="329.7">+180<tspan font-size="6.5px" dy="-3.4" dx="0.8">°</tspan></text>
<text class="gl" x="1390.5" y="329.7">+210<tspan font-size="6.5px" dy="-3.4" dx="0.8">°</tspan></text>
<text class="gl" x="1292.9" y="329.7">+240<tspan font-size="6.5px" dy="-3.4" dx="0.8">°</tspan></text>
<text class="gl" x="1195.3" y="329.7">+270<tspan font-size="6.5px" dy="-3.4" dx="0.8">°</tspan></text>
<text class="gl" x="1097.7" y="329.7">+300<tspan font-size="6.5px" dy="-3.4" dx="0.8">°</tspan></text>
<text class="gl" x="1000.1" y="329.7">+330<tspan font-size="6.5px" dy="-3.4" dx="0.8">°</tspan></text>
<text class="gl" x="902.5" y="329.7">+0<tspan font-size="6.5px" dy="-3.4" dx="0.8">°</tspan></text>
<text class="gl" x="804.9" y="329.7">+30<tspan font-size="6.5px" dy="-3.4" dx="0.8">°</tspan></text>
<text class="gl" x="707.3" y="329.7">+60<tspan font-size="6.5px" dy="-3.4" dx="0.8">°</tspan></text>
<text class="gl" x="609.7" y="329.7">+90<tspan font-size="6.5px" dy="-3.4" dx="0.8">°</tspan></text>
<text class="gl" x="512.1" y="329.7">+120<tspan font-size="6.5px" dy="-3.4" dx="0.8">°</tspan></text>
<text class="gl" x="414.5" y="329.7">+150<tspan font-size="6.5px" dy="-3.4" dx="0.8">°</tspan></text>
<text class="gl" x="316.9" y="329.7">+180<tspan font-size="6.5px" dy="-3.4" dx="0.8">°</tspan></text>
<text class="gl" x="902.5" y="24.6">+90<tspan font-size="6.5px" dy="-3.4" dx="0.8">°</tspan></text>
<text class="gl" x="902.5" y="122.3">+60<tspan font-size="6.5px" dy="-3.4" dx="0.8">°</tspan></text>
<text class="gl" x="902.5" y="220.1">+30<tspan font-size="6.5px" dy="-3.4" dx="0.8">°</tspan></text>
<text class="gl" x="902.5" y="427.4">−30<tspan font-size="6.5px" dy="-3.4" dx="0.8">°</tspan></text>
<text class="gl" x="902.5" y="525.2">−60<tspan font-size="6.5px" dy="-3.4" dx="0.8">°</tspan></text>
<text class="gl" x="902.5" y="622.9">−90<tspan font-size="6.5px" dy="-3.4" dx="0.8">°</tspan></text>
<text class="mono" x="315.6" y="30" xml:space="preserve">PL000E</text>
<text class="mono" x="315.6" y="43.1" xml:space="preserve">Beg: 20251029 16:38:18 (sol = 216.16°)</text>
<text class="mono" x="315.6" y="56.2" xml:space="preserve">End: 20251030 03:48:18 (sol = 216.62°)</text>
<text class="mono" x="315.6" y="69.3" xml:space="preserve">--------------------------------------</text>
<text class="mono" x="315.6" y="82.4" xml:space="preserve">...: 79</text>
<text class="mono" x="315.6" y="95.5" xml:space="preserve">STA: 5</text>
<text class="mono" x="315.6" y="108.6" xml:space="preserve">LUM: 4</text>
<text class="mono" x="315.6" y="121.7" xml:space="preserve">ORI: 4</text>
<text class="mono" x="315.6" y="134.8" xml:space="preserve">CTA: 3</text>
<text class="mono" x="315.6" y="147.9" xml:space="preserve">LMI: 1</text>
<text class="mono" x="315.6" y="161" xml:space="preserve">OER: 1</text>
<g fill="none" stroke="#808080" stroke-width="2.08" stroke-dasharray="2.08 3.44">
<path d="M73.8 842.5 V641.5"/>
<path d="M218 842.5 V641.5"/>
<path d="M365 842.5 V641.5"/>
<path d="M505 842.5 V641.5"/>
<path d="M650 842.5 V641.5"/>
<path d="M797 842.5 V641.5"/>
<path d="M940 842.5 V641.5"/>
<path d="M1091 842.5 V641.5"/>
<path d="M1239 842.5 V641.5"/>
<path d="M1394 842.5 V641.5"/>
<path d="M1548 842.5 V641.5"/>
<path d="M1687 842.5 V641.5"/>
</g>
<text class="mo" transform="translate(150 644) rotate(-90)">APR</text>
<text class="mo" transform="translate(294.4 645.3) rotate(-90)">MAY</text>
<text class="mo" transform="translate(436.7 642.5) rotate(-90)">JUN</text>
<text class="mo" transform="translate(576.4 641.7) rotate(-90)">JUL</text>
<text class="mo" transform="translate(724 643.3) rotate(-90)">AUG</text>
<text class="mo" transform="translate(872.7 643.3) rotate(-90)">SEP</text>
<text class="mo" transform="translate(1016.7 643.3) rotate(-90)">OCT</text>
<text class="mo" transform="translate(1169.3 643.3) rotate(-90)">NOV</text>
<text class="mo" transform="translate(1319.3 645) rotate(-90)">DEC</text>
<text class="mo" transform="translate(1470 643) rotate(-90)">JAN</text>
<text class="mo" transform="translate(1629 646.7) rotate(-90)">FEB</text>
<text class="mo" transform="translate(1766.7 645.7) rotate(-90)">MAR</text>
<g stroke="#ec84ee" stroke-width="4.17">
<path d="M106 833.8 H129.2"/>
<path d="M165 833.8 H345"/>
<path d="M366 833.8 H625"/>
<path d="M635 833.8 H786"/>
<path d="M807 833.8 H899"/>
<path d="M920 833.8 H973"/>
<path d="M984 833.8 H1066"/>
<path d="M1082 833.8 H1203"/>
<path d="M1244 833.8 H1326"/>
<path d="M1337 833.8 H1355"/>
<path d="M1381 833.8 H1443.9"/>
<path d="M1459 833.8 H1511.8"/>
<path d="M1523 833.8 H1547"/>
<path d="M1724 833.8 H1747.8"/>
<path d="M1758 833.8 H1781.8"/>
</g>
<g stroke="#dc11ff" stroke-width="4.17">
<path d="M165 818 H188"/>
<path d="M223 818 H286"/>
<path d="M312 818 H340"/>
<path d="M366 818 H492"/>
<path d="M508 818 H654"/>
<path d="M704 818 H737"/>
<path d="M773 818 H845"/>
<path d="M871 818 H988"/>
<path d="M1003 818 H1017"/>
<path d="M1062 818 H1213"/>
<path d="M1244 818 H1267"/>
<path d="M1293 818 H1316"/>
<path d="M1342 818 H1365"/>
<path d="M1386 818 H1429"/>
<path d="M1459 818 H1483"/>
<path d="M1548 818 H1571"/>
</g>
<g stroke="#ff1c00" stroke-width="4.17">
<path d="M165 802 H188"/>
<path d="M258 802 H487"/>
<path d="M508 802 H615"/>
<path d="M626 802 H718"/>
<path d="M729 802 H826"/>
<path d="M949 802 H1149"/>
<path d="M1160 802 H1248"/>
<path d="M1258 802 H1443.9"/>
<path d="M1459 802 H1482.9"/>
<path d="M1552 802 H1575.8"/>
</g>
<g stroke="#ffb90d" stroke-width="4.17">
<path d="M193.8 785 H218"/>
<path d="M320.8 785 H507"/>
<path d="M518 785 H541"/>
<path d="M557 785 H683"/>
<path d="M807 785 H831"/>
<path d="M954 785 H973"/>
<path d="M988 785 H1125"/>
<path d="M1155 785 H1218"/>
<path d="M1244 785 H1267"/>
<path d="M1317 785 H1341"/>
<path d="M1396 785 H1419"/>
<path d="M1463.9 785 H1649.9"/>
</g>
<g stroke="#fff200" stroke-width="4.17">
<path d="M341 768.8 H370"/>
<path d="M410 768.8 H448"/>
<path d="M469 768.8 H492"/>
<path d="M527 768.8 H546"/>
<path d="M562 768.8 H590"/>
<path d="M616 768.8 H649"/>
<path d="M959 768.8 H988"/>
<path d="M1062 768.8 H1086"/>
<path d="M1101 768.8 H1125"/>
<path d="M1160 768.8 H1194"/>
<path d="M1248 768.8 H1272"/>
<path d="M1425 768.8 H1511.8"/>
</g>
<g stroke="#9fff23" stroke-width="4.17">
<path d="M420 751.8 H443"/>
<path d="M532 751.8 H556"/>
<path d="M567 751.8 H590"/>
<path d="M621 751.8 H742"/>
<path d="M969 751.8 H1135"/>
<path d="M1185 751.8 H1346"/>
<path d="M1469 751.8 H1492.8"/>
</g>
<g stroke="#52d500" stroke-width="4.17">
<path d="M428.8 735.8 H453"/>
<path d="M576 735.8 H733"/>
<path d="M993 735.8 H1105"/>
<path d="M1116 735.8 H1223"/>
<path d="M1263 735.8 H1292"/>
<path d="M1489 735.8 H1511.8"/>
</g>
<g stroke="#00fa87" stroke-width="4.17">
<path d="M591 719.8 H615"/>
<path d="M655 719.8 H772"/>
<path d="M1072 719.8 H1243"/>
<path d="M1263 719.8 H1287"/>
</g>
<g stroke="#00d7ff" stroke-width="4.17">
<path d="M596 702.8 H733"/>
<path d="M1091 702.8 H1120"/>
<path d="M1199 702.8 H1223"/>
<path d="M1273 702.8 H1326"/>
</g>
<g stroke="#001bab" stroke-width="4.17">
<path d="M1111 687 H1135"/>
</g>
<g stroke="#fff" stroke-width="2.08">
<path d="M112.8 833.8 h8.4 M117 829.6 v8.4"/>
<path d="M240.5 833.8 h8.4 M244.7 829.6 v8.4"/>
<path d="M510.5 833.8 h8.4 M514.7 829.6 v8.4"/>
<path d="M706.8 833.8 h8.4 M711 829.6 v8.4"/>
<path d="M832.8 833.8 h8.4 M837 829.6 v8.4"/>
<path d="M961.8 833.8 h8.4 M966 829.6 v8.4"/>
<path d="M985.4 833.8 h8.4 M989.6 829.6 v8.4"/>
<path d="M1115.4 833.8 h8.4 M1119.6 829.6 v8.4"/>
<path d="M1294.8 833.8 h8.4 M1299 829.6 v8.4"/>
<path d="M1341.8 833.8 h8.4 M1346 829.6 v8.4"/>
<path d="M1412.8 833.8 h8.4 M1417 829.6 v8.4"/>
<path d="M1481.7 833.8 h8.4 M1485.9 829.6 v8.4"/>
<path d="M1530.4 833.8 h8.4 M1534.6 829.6 v8.4"/>
<path d="M1731.8 833.8 h8.4 M1736 829.6 v8.4"/>
<path d="M1765.6 833.8 h8.4 M1769.8 829.6 v8.4"/>
<path d="M171.6 818 h8.4 M175.8 813.8 v8.4"/>
<path d="M255.5 818 h8.4 M259.7 813.8 v8.4"/>
<path d="M322.8 818 h8.4 M327 813.8 v8.4"/>
<path d="M436.6 818 h8.4 M440.8 813.8 v8.4"/>
<path d="M598.8 818 h8.4 M603 813.8 v8.4"/>
<path d="M716.8 818 h8.4 M721 813.8 v8.4"/>
<path d="M792.8 818 h8.4 M797 813.8 v8.4"/>
<path d="M938.8 818 h8.4 M943 813.8 v8.4"/>
<path d="M1005.8 818 h8.4 M1010 813.8 v8.4"/>
<path d="M1152.8 818 h8.4 M1157 813.8 v8.4"/>
<path d="M1250.4 818 h8.4 M1254.6 813.8 v8.4"/>
<path d="M1299.8 818 h8.4 M1304 813.8 v8.4"/>
<path d="M1348.8 818 h8.4 M1353 813.8 v8.4"/>
<path d="M1402.8 818 h8.4 M1407 813.8 v8.4"/>
<path d="M1466.5 818 h8.4 M1470.7 813.8 v8.4"/>
<path d="M1554.5 818 h8.4 M1558.7 813.8 v8.4"/>
<path d="M173.6 802 h8.4 M177.8 797.8 v8.4"/>
<path d="M377.5 802 h8.4 M381.7 797.8 v8.4"/>
<path d="M544.6 802 h8.4 M548.8 797.8 v8.4"/>
<path d="M681.8 802 h8.4 M686 797.8 v8.4"/>
<path d="M740.4 802 h8.4 M744.6 797.8 v8.4"/>
<path d="M1074.8 802 h8.4 M1079 797.8 v8.4"/>
<path d="M1216.4 802 h8.4 M1220.6 797.8 v8.4"/>
<path d="M1304.8 802 h8.4 M1309 797.8 v8.4"/>
<path d="M1466.5 802 h8.4 M1470.7 797.8 v8.4"/>
<path d="M1559.8 802 h8.4 M1564 797.8 v8.4"/>
<path d="M201.8 785 h8.4 M206 780.8 v8.4"/>
<path d="M399.5 785 h8.4 M403.7 780.8 v8.4"/>
<path d="M524.6 785 h8.4 M528.8 780.8 v8.4"/>
<path d="M638.8 785 h8.4 M643 780.8 v8.4"/>
<path d="M814.8 785 h8.4 M819 780.8 v8.4"/>
<path d="M958.8 785 h8.4 M963 780.8 v8.4"/>
<path d="M1039.4 785 h8.4 M1043.6 780.8 v8.4"/>
<path d="M1187.8 785 h8.4 M1192 780.8 v8.4"/>
<path d="M1250.4 785 h8.4 M1254.6 780.8 v8.4"/>
<path d="M1324.8 785 h8.4 M1329 780.8 v8.4"/>
<path d="M1402.8 785 h8.4 M1407 780.8 v8.4"/>
<path d="M1545.6 785 h8.4 M1549.8 780.8 v8.4"/>
<path d="M355.8 768.8 h8.4 M360 764.6 v8.4"/>
<path d="M425.5 768.8 h8.4 M429.7 764.6 v8.4"/>
<path d="M475.5 768.8 h8.4 M479.7 764.6 v8.4"/>
<path d="M534.6 768.8 h8.4 M538.8 764.6 v8.4"/>
<path d="M570.8 768.8 h8.4 M575 764.6 v8.4"/>
<path d="M630.8 768.8 h8.4 M635 764.6 v8.4"/>
<path d="M973.8 768.8 h8.4 M978 764.6 v8.4"/>
<path d="M1069.4 768.8 h8.4 M1073.6 764.6 v8.4"/>
<path d="M1108.4 768.8 h8.4 M1112.6 764.6 v8.4"/>
<path d="M1177.8 768.8 h8.4 M1182 764.6 v8.4"/>
<path d="M1255.4 768.8 h8.4 M1259.6 764.6 v8.4"/>
<path d="M1466.5 768.8 h8.4 M1470.7 764.6 v8.4"/>
<path d="M426.6 751.8 h8.4 M430.8 747.6 v8.4"/>
<path d="M539.6 751.8 h8.4 M543.8 747.6 v8.4"/>
<path d="M573.3 751.8 h8.4 M577.5 747.6 v8.4"/>
<path d="M703.8 751.8 h8.4 M708 747.6 v8.4"/>
<path d="M1093.4 751.8 h8.4 M1097.6 747.6 v8.4"/>
<path d="M1270.8 751.8 h8.4 M1275 747.6 v8.4"/>
<path d="M1476.6 751.8 h8.4 M1480.8 747.6 v8.4"/>
<path d="M436.6 735.8 h8.4 M440.8 731.6 v8.4"/>
<path d="M630.8 735.8 h8.4 M635 731.6 v8.4"/>
<path d="M1038.4 735.8 h8.4 M1042.6 731.6 v8.4"/>
<path d="M1167.8 735.8 h8.4 M1172 731.6 v8.4"/>
<path d="M1274.8 735.8 h8.4 M1279 731.6 v8.4"/>
<path d="M1496.7 735.8 h8.4 M1500.9 731.6 v8.4"/>
<path d="M598.8 719.8 h8.4 M603 715.6 v8.4"/>
<path d="M726.8 719.8 h8.4 M731 715.6 v8.4"/>
<path d="M1187.8 719.8 h8.4 M1192 715.6 v8.4"/>
<path d="M1270.8 719.8 h8.4 M1275 715.6 v8.4"/>
<path d="M686.8 702.8 h8.4 M691 698.6 v8.4"/>
<path d="M1101.8 702.8 h8.4 M1106 698.6 v8.4"/>
<path d="M1206.8 702.8 h8.4 M1211 698.6 v8.4"/>
<path d="M1299.8 702.8 h8.4 M1304 698.6 v8.4"/>
<path d="M1118.4 687 h8.4 M1122.6 682.8 v8.4"/>
</g>
<text class="bl" x="117.5" y="831.5">KSE</text>
<text class="bl" x="255" y="831.5">ETA</text>
<text class="bl" x="494.3" y="831.5">NZC</text>
<text class="bl" x="710.8" y="831.5">NDA</text>
<text class="bl" x="852.8" y="831.5">SPE</text>
<text class="bl" x="945.4" y="831.5">ARD</text>
<text class="bl" x="1024.9" y="831.5">EGE</text>
<text class="bl" x="1142.5" y="831.5">NTA</text>
<text class="bl" x="1283.8" y="831.5">MON</text>
<text class="bl" x="1343.5" y="831.5">URS</text>
<text class="bl" x="1412" y="831.5">AHY</text>
<text class="bl" x="1485.5" y="831.5">GUM</text>
<text class="bl" x="1535.4" y="831.5">OHY</text>
<text class="bl" x="1736.1" y="831.5">XHE</text>
<text class="bl" x="1769.4" y="831.5">EVI</text>
<text class="bl" x="175.3" y="814.9">AVB</text>
<text class="bl" x="254.8" y="814.9">ELY</text>
<text class="bl" x="323.9" y="814.9">CAM</text>
<text class="bl" x="432.1" y="814.9">SSG</text>
<text class="bl" x="578.7" y="814.9">PCA</text>
<text class="bl" x="720.7" y="814.9">AUD</text>
<text class="bl" x="808.3" y="814.9">AUR</text>
<text class="bl" x="931.1" y="814.9">DSX</text>
<text class="bl" x="1009.7" y="814.9">OCU</text>
<text class="bl" x="1137.2" y="814.9">OER</text>
<text class="bl" x="1254.8" y="814.9">DKD</text>
<text class="bl" x="1304.3" y="814.9">DSV</text>
<text class="bl" x="1353" y="814.9">ALY</text>
<text class="bl" x="1407.5" y="814.9">JLE</text>
<text class="bl" x="1471.6" y="814.9">SCC</text>
<text class="bl" x="1558.9" y="814.9">FEV</text>
<text class="bl" x="176.1" y="798.7">LYR</text>
<text class="bl" x="372.7" y="798.7">JMC</text>
<text class="bl" x="559" y="798.7">JPE</text>
<text class="bl" x="671.5" y="798.7">PAU</text>
<text class="bl" x="774.3" y="798.7">NIA</text>
<text class="bl" x="1049.8" y="798.7">STA</text>
<text class="bl" x="1205.5" y="798.7">NOO</text>
<text class="bl" x="1353.4" y="798.7">COM</text>
<text class="bl" x="1470.6" y="798.7">NCC</text>
<text class="bl" x="1563.2" y="798.7">FED</text>
<text class="bl" x="205" y="782.7">HVI</text>
<text class="bl" x="411.9" y="782.7">ARI</text>
<text class="bl" x="529.8" y="782.7">SZC</text>
<text class="bl" x="617.7" y="782.7">CAP</text>
<text class="bl" x="818.3" y="782.7">NUE</text>
<text class="bl" x="960.9" y="782.7">OCT</text>
<text class="bl" x="1059.7" y="782.7">ORI</text>
<text class="bl" x="1186.5" y="782.7">AMO</text>
<text class="bl" x="1255" y="782.7">DPC</text>
<text class="bl" x="1328.8" y="782.7">XVI</text>
<text class="bl" x="1407.6" y="782.7">QUA</text>
<text class="bl" x="1559.5" y="782.7">AAN</text>
<text class="bl" x="352.9" y="765.8">TAH</text>
<text class="bl" x="431.4" y="765.8">JEA</text>
<text class="bl" x="480.3" y="765.8">JIP</text>
<text class="bl" x="538.8" y="765.8">PPS</text>
<text class="bl" x="578.8" y="765.8">ZCS</text>
<text class="bl" x="632.7" y="765.8">GDR</text>
<text class="bl" x="970.2" y="765.8">DRA</text>
<text class="bl" x="1073.2" y="765.8">LUM</text>
<text class="bl" x="1112.7" y="765.8">RPU</text>
<text class="bl" x="1176.4" y="765.8">THA</text>
<text class="bl" x="1259.5" y="765.8">PSU</text>
<text class="bl" x="1470.6" y="765.8">XCB</text>
<text class="bl" x="431.7" y="749.5">JRC</text>
<text class="bl" x="544.2" y="749.5">CAN</text>
<text class="bl" x="577.9" y="749.5">FAN</text>
<text class="bl" x="681.1" y="749.5">PER</text>
<text class="bl" x="1049.2" y="749.5">CTA</text>
<text class="bl" x="1264.5" y="749.5">HYD</text>
<text class="bl" x="1481.2" y="749.5">XUM</text>
<text class="bl" x="441.5" y="732.9">COR</text>
<text class="bl" x="657" y="732.9">SDA</text>
<text class="bl" x="1049.1" y="732.9">LMI</text>
<text class="bl" x="1166.7" y="732.9">LEO</text>
<text class="bl" x="1274.4" y="732.9">EHY</text>
<text class="bl" x="1499.9" y="732.9">ECV</text>
<text class="bl" x="602.7" y="716.9">JXA</text>
<text class="bl" x="714.9" y="716.9">KCG</text>
<text class="bl" x="1156.7" y="716.9">AND</text>
<text class="bl" x="1274.7" y="716.9">DAD</text>
<text class="bl" x="666.2" y="700.5">ERI</text>
<text class="bl" x="1108.4" y="700.5">SLD</text>
<text class="bl" x="1211.3" y="700.5">ORS</text>
<text class="bl" x="1298.9" y="700.5">GEM</text>
<text class="bl" x="1122.7" y="684">KUM</text>
<g stroke="#ff0000" stroke-width="1.39" stroke-dasharray="5.14 2.22">
<path d="M1080.1 842.5 V641.5"/>
<path d="M1082.3 842.5 V641.5"/>
</g>
<rect x="19.8" y="641.5" width="1765.8" height="201" fill="none" stroke="#fff" stroke-width="1.1"/>
<path d="M19.8 842.5 v4.9" stroke="#fff" stroke-width="1.1"/>
<text class="tk" x="19.8" y="862">0</text>
<path d="M265.1 842.5 v4.9" stroke="#fff" stroke-width="1.1"/>
<text class="tk" x="265.1" y="862">50</text>
<path d="M510.3 842.5 v4.9" stroke="#fff" stroke-width="1.1"/>
<text class="tk" x="510.3" y="862">100</text>
<path d="M755.5 842.5 v4.9" stroke="#fff" stroke-width="1.1"/>
<text class="tk" x="755.5" y="862">150</text>
<path d="M1000.8 842.5 v4.9" stroke="#fff" stroke-width="1.1"/>
<text class="tk" x="1000.8" y="862">200</text>
<path d="M1246 842.5 v4.9" stroke="#fff" stroke-width="1.1"/>
<text class="tk" x="1246" y="862">250</text>
<path d="M1491.3 842.5 v4.9" stroke="#fff" stroke-width="1.1"/>
<text class="tk" x="1491.3" y="862">300</text>
<path d="M1736.5 842.5 v4.9" stroke="#fff" stroke-width="1.1"/>
<text class="tk" x="1736.5" y="862">350</text>
<text class="tk" x="902.7" y="881.5">Solar longitude (deg)</text>
</svg></body></html>
